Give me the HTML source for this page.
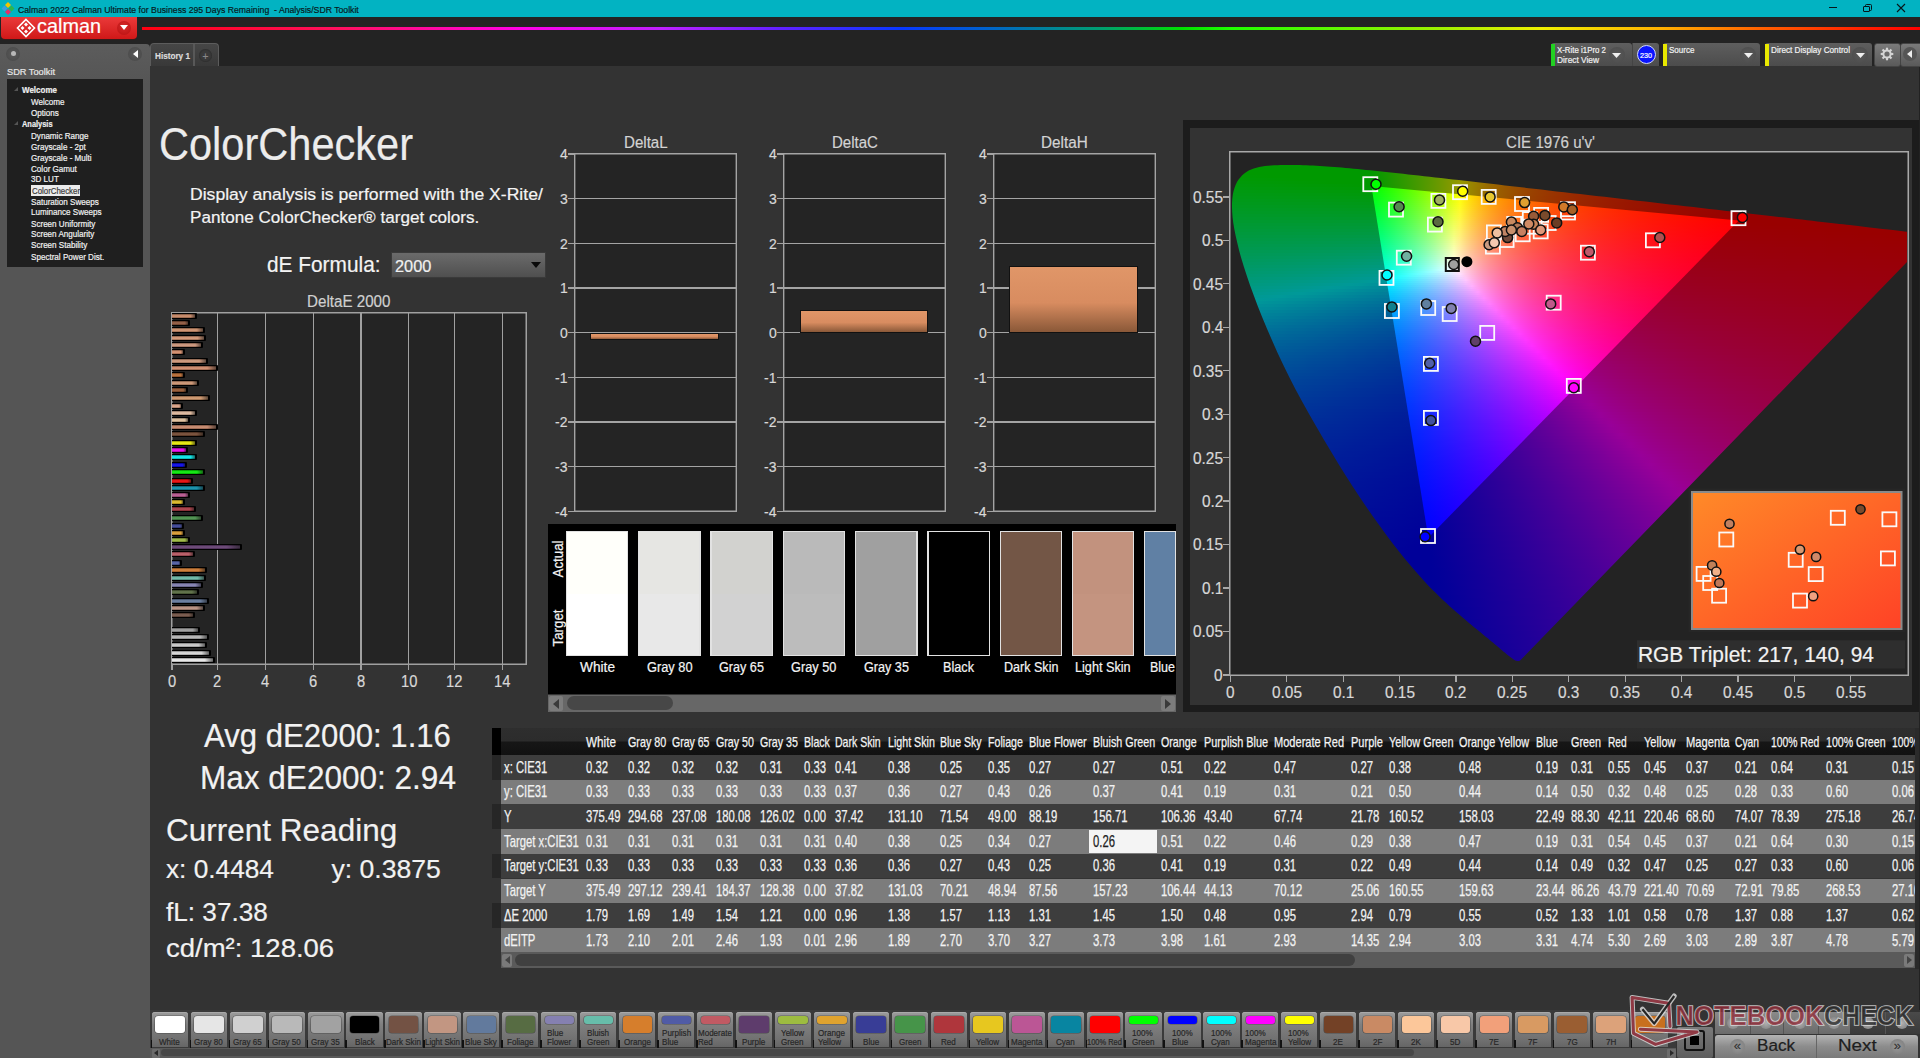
<!DOCTYPE html><html><head><meta charset="utf-8"><title>Calman ColorChecker</title><style>html,body{margin:0;padding:0}
body{width:1920px;height:1058px;position:relative;overflow:hidden;background:#333;font-family:"Liberation Sans",sans-serif}
.a{position:absolute}
.t{position:absolute;white-space:pre;line-height:normal;transform-origin:0 0;-webkit-text-stroke:0.2px currentColor}
svg.a{overflow:visible}
.tb .t{-webkit-text-stroke:0.25px currentColor}
i{display:block}.r2{height:2px}.r3{height:3px}.r4{height:4px}</style></head><body><div class="a" style="left:0px;top:0px;width:1920px;height:17px;background:#02b3c2"></div><svg class="a" style="left:1px;top:1px" width="14" height="15" viewBox="0 0 14 15">
<path d="M7 1 L10 4 L7 7 L4 4Z" fill="#f2c500"/><path d="M10.5 4.5 L13.5 7.5 L10.5 10.5 L7.5 7.5Z" fill="#2fb54a"/>
<path d="M3.5 4.5 L6.5 7.5 L3.5 10.5 L0.5 7.5Z" fill="#3aa0e0"/><path d="M7 8 L10 11 L7 14 L4 11Z" fill="#e0306a"/></svg><span class="t" style="left:18.00px;top:3.51px;font-size:9.60px;color:#061a1d;transform:scaleX(0.9044);">Calman 2022 Calman Ultimate for Business 295 Days Remaining  - Analysis/SDR Toolkit</span><div class="a" style="left:1829px;top:7px;width:8px;height:1.4px;background:#06161a"></div><div class="a" style="left:1865px;top:3.8px;width:5px;height:5px;border:1.2px solid #06161a;border-radius:1.5px"></div><div class="a" style="left:1863px;top:5.6px;width:4.8px;height:4.8px;border:1.3px solid #06161a;background:#02b3c2;border-radius:1px"></div><svg class="a" style="left:1896px;top:3px" width="10" height="10"><path d="M1 1L9 9M9 1L1 9" stroke="#06161a" stroke-width="1.1"/></svg><div class="a" style="left:0px;top:17px;width:1920px;height:49px;background:#232323"></div><div class="a" style="left:1px;top:17px;width:136px;height:22px;background:linear-gradient(#ea3a3a,#d01818);border-radius:0 0 4px 4px;box-shadow:0 1px 0 #3a1a1a"></div><svg class="a" style="left:16px;top:18px" width="20" height="20" viewBox="0 0 20 20">
<g fill="none" stroke="#fff" stroke-width="1.6"><path d="M10 1.5 L18.5 10 L10 18.5 L1.5 10Z"/></g>
<g fill="#fff"><path d="M10 4.5L12 6.5L10 8.5L8 6.5Z"/><path d="M13.5 8L15.5 10L13.5 12L11.5 10Z"/><path d="M6.5 8L8.5 10L6.5 12L4.5 10Z"/><path d="M10 11.5L12 13.5L10 15.5L8 13.5Z"/></g></svg><span class="t" style="left:37.00px;top:15.39px;font-size:20.00px;color:#fff;transform:scaleX(0.9926);">calman</span><div class="a" style="left:117px;top:21px;width:14px;height:14px;border-radius:50%;background:radial-gradient(circle at 50% 40%,#d82a2a,#b81010)"></div><svg class="a" style="left:120px;top:25px" width="8" height="6"><path d="M0 0H8L4 5Z" fill="#fff"/></svg><div class="a" style="left:142px;top:27px;width:1778px;height:3px;background:linear-gradient(90deg,#ff0010 0px,#ff1060 200px,#ff00e8 380px,#c020ff 520px,#6020ff 640px,#0838ff 760px,#0060d0 840px,#00a070 960px,#00e000 1040px,#20ff00 1090px,#a0f000 1300px,#f0f000 1400px,#ffb000 1520px,#ff6000 1620px,#ff2000 1720px,#ff0000 1778px)"></div><div class="a" style="left:0;top:44px;width:150px;height:1014px;background:linear-gradient(#5c5c5c,#555 40px,#555);border-radius:0 4px 0 0"></div><div class="a" style="left:6px;top:47px;width:14px;height:14px;border-radius:50%;background:radial-gradient(circle at 50% 50%,#5a5a5a,#474747)"></div><div class="a" style="left:11px;top:51px;width:5px;height:5px;border-radius:50%;background:#b8b8b8"></div><div class="a" style="left:128px;top:47px;width:14px;height:14px;border-radius:50%;background:radial-gradient(circle at 50% 50%,#5a5a5a,#474747)"></div><svg class="a" style="left:133px;top:50px" width="5" height="8"><path d="M5 0V8L0 4Z" fill="#fff"/></svg><span class="t" style="left:7.00px;top:67.45px;font-size:9.00px;color:#e6e6e6;transform:scaleX(1.0245);">SDR Toolkit</span><div class="a" style="left:7px;top:79px;width:136px;height:188px;background:#1f1f1f"></div><span class="t" style="left:21.60px;top:85.05px;font-size:9.00px;color:#f0f0f0;font-weight:700;transform:scaleX(0.8895);">Welcome</span><svg class="a" style="left:14px;top:87.2px" width="4" height="4"><path d="M4 0V4H0Z" fill="#555"/></svg><span class="t" style="left:31.20px;top:97.27px;font-size:9.20px;color:#f2f2f2;transform:scaleX(0.8800);">Welcome</span><span class="t" style="left:31.20px;top:107.97px;font-size:9.20px;color:#f2f2f2;transform:scaleX(0.8800);">Options</span><span class="t" style="left:21.60px;top:119.15px;font-size:9.00px;color:#f0f0f0;font-weight:700;transform:scaleX(0.8239);">Analysis</span><svg class="a" style="left:14px;top:121.3px" width="4" height="4"><path d="M4 0V4H0Z" fill="#555"/></svg><span class="t" style="left:31.20px;top:131.27px;font-size:9.20px;color:#f2f2f2;transform:scaleX(0.8800);">Dynamic Range</span><span class="t" style="left:31.20px;top:141.57px;font-size:9.20px;color:#f2f2f2;transform:scaleX(0.8800);">Grayscale - 2pt</span><span class="t" style="left:31.20px;top:152.67px;font-size:9.20px;color:#f2f2f2;transform:scaleX(0.8800);">Grayscale - Multi</span><span class="t" style="left:31.20px;top:164.07px;font-size:9.20px;color:#f2f2f2;transform:scaleX(0.8800);">Color Gamut</span><span class="t" style="left:31.20px;top:174.37px;font-size:9.20px;color:#f2f2f2;transform:scaleX(0.8800);">3D LUT</span><div class="a" style="left:31px;top:185.3px;width:49px;height:10.7px;background:#ececec"></div><span class="t" style="left:31.50px;top:185.85px;font-size:9.00px;color:#3a3a3a;transform:scaleX(0.8724);">ColorChecker</span><span class="t" style="left:31.20px;top:197.07px;font-size:9.20px;color:#f2f2f2;transform:scaleX(0.8800);">Saturation Sweeps</span><span class="t" style="left:31.20px;top:207.37px;font-size:9.20px;color:#f2f2f2;transform:scaleX(0.8800);">Luminance Sweeps</span><span class="t" style="left:31.20px;top:218.57px;font-size:9.20px;color:#f2f2f2;transform:scaleX(0.8800);">Screen Uniformity</span><span class="t" style="left:31.20px;top:229.47px;font-size:9.20px;color:#f2f2f2;transform:scaleX(0.8800);">Screen Angularity</span><span class="t" style="left:31.20px;top:240.47px;font-size:9.20px;color:#f2f2f2;transform:scaleX(0.8800);">Screen Stability</span><span class="t" style="left:31.20px;top:251.87px;font-size:9.20px;color:#f2f2f2;transform:scaleX(0.8800);">Spectral Power Dist.</span><div class="a" style="left:150px;top:43px;width:67px;height:23px;background:linear-gradient(#464646,#383838);border:1px solid #5c5c5c;border-bottom:none;border-radius:4px 4px 0 0"></div><div class="a" style="left:193px;top:44px;width:2px;height:22px;background:#585858"></div><span class="t" style="left:154.60px;top:50.51px;font-size:9.10px;color:#dcdcdc;font-weight:700;transform:scaleX(0.8988);">History 1</span><div class="a" style="left:199px;top:49px;width:13px;height:13px;border-radius:50%;background:#3a3a3a;box-shadow:inset 0 0 2px #222"></div><span class="t" style="left:202.58px;top:50.95px;font-size:10.00px;color:#888;">+</span><div class="a" style="left:150px;top:66px;width:1770px;height:992px;background:#333333"></div><div class="a" style="left:1919px;top:66px;width:1px;height:992px;background:#222"></div><div class="a" style="left:1551px;top:43px;width:81px;height:23px;background:linear-gradient(#5e5e5e,#4c4c4c);border-radius:3px 3px 0 0"></div><div class="a" style="left:1551px;top:44px;width:4px;height:22px;background:#22d022"></div><span class="t" style="left:1557.00px;top:44.53px;font-size:8.80px;color:#f2f2f2;transform:scaleX(0.8945);">X-Rite i1Pro 2</span><span class="t" style="left:1557.00px;top:55.03px;font-size:8.80px;color:#f2f2f2;transform:scaleX(0.9472);">Direct View</span><div class="a" style="left:1608.5px;top:47px;width:16px;height:16px;border-radius:50%;background:radial-gradient(#5a5a5a,#4a4a4a)"></div><svg class="a" style="left:1612.0px;top:53px" width="9" height="5"><path d="M0 0H9L4.5 5Z" fill="#f0f0f0"/></svg><div class="a" style="left:1632px;top:43px;width:26px;height:23px;background:linear-gradient(#5e5e5e,#4c4c4c);border-left:1px solid #444;border-radius:0 3px 0 0"></div><div class="a" style="left:1636.5px;top:45px;width:17px;height:17px;border-radius:50%;background:#0a14ff;border:1px solid #cfd8ff"></div><span class="t" style="left:1640.20px;top:50.56px;font-size:8.00px;color:#fff;transform:scaleX(0.8990);">230</span><div class="a" style="left:1663px;top:43px;width:97px;height:23px;background:linear-gradient(#5e5e5e,#4c4c4c);border-radius:3px 3px 0 0"></div><div class="a" style="left:1663px;top:44px;width:4px;height:22px;background:#e8e800"></div><span class="t" style="left:1669.00px;top:44.53px;font-size:8.80px;color:#f2f2f2;transform:scaleX(0.9145);">Source</span><div class="a" style="left:1740px;top:47px;width:16px;height:16px;border-radius:50%;background:radial-gradient(#5a5a5a,#4a4a4a)"></div><svg class="a" style="left:1743.5px;top:53px" width="9" height="5"><path d="M0 0H9L4.5 5Z" fill="#f0f0f0"/></svg><div class="a" style="left:1765px;top:43px;width:107px;height:23px;background:linear-gradient(#5e5e5e,#4c4c4c);border-radius:3px 3px 0 0"></div><div class="a" style="left:1765px;top:44px;width:4px;height:22px;background:#e8e800"></div><span class="t" style="left:1771.00px;top:44.53px;font-size:8.80px;color:#f2f2f2;transform:scaleX(0.9284);">Direct Display Control</span><div class="a" style="left:1852px;top:47px;width:16px;height:16px;border-radius:50%;background:radial-gradient(#5a5a5a,#4a4a4a)"></div><svg class="a" style="left:1855.5px;top:53px" width="9" height="5"><path d="M0 0H9L4.5 5Z" fill="#f0f0f0"/></svg><div class="a" style="left:1874px;top:43px;width:25px;height:22px;background:linear-gradient(#7a7a7a,#5a5a5a);border:1px solid #444;border-radius:3px"></div><svg class="a" style="left:1880px;top:47px" width="14" height="14" viewBox="-7 -7 14 14"><g fill="#d4d4d4"><path d="M-1.1 -6.3H1.1V6.3H-1.1Z"/><path d="M-1.1 -6.3H1.1V6.3H-1.1Z" transform="rotate(45)"/><path d="M-1.1 -6.3H1.1V6.3H-1.1Z" transform="rotate(90)"/><path d="M-1.1 -6.3H1.1V6.3H-1.1Z" transform="rotate(135)"/><circle r="4.6"/></g><circle r="2.6" fill="#6a6a6a"/></svg><div class="a" style="left:1900px;top:43px;width:20px;height:22px;background:linear-gradient(#7a7a7a,#5a5a5a);border:1px solid #444;border-radius:3px 0 0 3px"></div><div class="a" style="left:1903px;top:47px;width:14px;height:14px;border-radius:50%;background:#555"></div><svg class="a" style="left:1907px;top:50px" width="5" height="8"><path d="M5 0V8L0 4Z" fill="#eee"/></svg><span class="t" style="left:159.00px;top:117.06px;font-size:46.00px;color:#ececec;transform:scaleX(0.9032);">ColorChecker</span><span class="t" style="left:190.00px;top:183.55px;font-size:17.40px;color:#f4f4f4;transform:scaleX(1.0112);">Display analysis is performed with the X-Rite/</span><span class="t" style="left:190.00px;top:206.95px;font-size:17.40px;color:#f4f4f4;transform:scaleX(0.9838);">Pantone ColorChecker® target colors.</span><span class="t" style="left:267.00px;top:252.42px;font-size:22.40px;color:#f4f4f4;transform:scaleX(0.9311);">dE Formula:</span><div class="a" style="left:391px;top:252px;width:155px;height:26px;background:linear-gradient(#6c6c6c,#4e4e4e);box-shadow:inset 0 0 0 1px #3a3a3a"></div><span class="t" style="left:395.00px;top:257.31px;font-size:17.00px;color:#f0f0f0;transform:scaleX(0.9625);">2000</span><svg class="a" style="left:531px;top:262px" width="10" height="7"><path d="M0 0H10L5 6Z" fill="#0a0a0a"/></svg><span class="t" style="left:307.25px;top:291.60px;font-size:16.90px;color:#d0d0d0;transform:scaleX(0.8977);">DeltaE 2000</span><div class="a" style="left:171.4px;top:312.3px;width:355.2px;height:352.3px;background:#242424;box-shadow:inset 0 0 0 1.5px #a0a0a0"></div><div class="a" style="left:171.2px;top:664.6px;width:1.4px;height:5.5px;background:#a0a0a0"></div><span class="t" style="left:167.81px;top:672.72px;font-size:16.00px;color:#d8d8d8;transform:scaleX(0.9200);">0</span><div class="a" style="left:216.7px;top:312.3px;width:1.4px;height:352.3px;background:#a0a0a0"></div><div class="a" style="left:216.7px;top:664.6px;width:1.4px;height:5.5px;background:#a0a0a0"></div><span class="t" style="left:213.31px;top:672.72px;font-size:16.00px;color:#d8d8d8;transform:scaleX(0.9200);">2</span><div class="a" style="left:264.6px;top:312.3px;width:1.4px;height:352.3px;background:#a0a0a0"></div><div class="a" style="left:264.6px;top:664.6px;width:1.4px;height:5.5px;background:#a0a0a0"></div><span class="t" style="left:261.21px;top:672.72px;font-size:16.00px;color:#d8d8d8;transform:scaleX(0.9200);">4</span><div class="a" style="left:312.7px;top:312.3px;width:1.4px;height:352.3px;background:#a0a0a0"></div><div class="a" style="left:312.7px;top:664.6px;width:1.4px;height:5.5px;background:#a0a0a0"></div><span class="t" style="left:309.31px;top:672.72px;font-size:16.00px;color:#d8d8d8;transform:scaleX(0.9200);">6</span><div class="a" style="left:360.2px;top:312.3px;width:1.4px;height:352.3px;background:#a0a0a0"></div><div class="a" style="left:360.2px;top:664.6px;width:1.4px;height:5.5px;background:#a0a0a0"></div><span class="t" style="left:356.81px;top:672.72px;font-size:16.00px;color:#d8d8d8;transform:scaleX(0.9200);">8</span><div class="a" style="left:408.1px;top:312.3px;width:1.4px;height:352.3px;background:#a0a0a0"></div><div class="a" style="left:408.1px;top:664.6px;width:1.4px;height:5.5px;background:#a0a0a0"></div><span class="t" style="left:400.61px;top:672.72px;font-size:16.00px;color:#d8d8d8;transform:scaleX(0.9200);">10</span><div class="a" style="left:453.8px;top:312.3px;width:1.4px;height:352.3px;background:#a0a0a0"></div><div class="a" style="left:453.8px;top:664.6px;width:1.4px;height:5.5px;background:#a0a0a0"></div><span class="t" style="left:446.31px;top:672.72px;font-size:16.00px;color:#d8d8d8;transform:scaleX(0.9200);">12</span><div class="a" style="left:501.7px;top:312.3px;width:1.4px;height:352.3px;background:#a0a0a0"></div><div class="a" style="left:501.7px;top:664.6px;width:1.4px;height:5.5px;background:#a0a0a0"></div><span class="t" style="left:494.21px;top:672.72px;font-size:16.00px;color:#d8d8d8;transform:scaleX(0.9200);">14</span><div class="a" style="left:172px;top:313.1px;width:25.3px;height:6px;background:#000;border-radius:0 1px 1px 0"></div><div class="a" style="left:172px;top:314.1px;width:23.3px;height:4px;background:linear-gradient(rgba(0,0,0,.45),rgba(255,255,255,.12) 50%,rgba(0,0,0,.35)),linear-gradient(90deg,#d8906a,#d8906a 80%,rgba(0,0,0,.6)),#d8906a"></div><div class="a" style="left:172px;top:320.3px;width:18.0px;height:6px;background:#000;border-radius:0 1px 1px 0"></div><div class="a" style="left:172px;top:321.3px;width:16.0px;height:4px;background:linear-gradient(rgba(0,0,0,.45),rgba(255,255,255,.12) 50%,rgba(0,0,0,.35)),linear-gradient(90deg,#9a5a3c,#9a5a3c 80%,rgba(0,0,0,.6)),#9a5a3c"></div><div class="a" style="left:172px;top:327.4px;width:32.5px;height:6px;background:#000;border-radius:0 1px 1px 0"></div><div class="a" style="left:172px;top:328.4px;width:30.5px;height:4px;background:linear-gradient(rgba(0,0,0,.45),rgba(255,255,255,.12) 50%,rgba(0,0,0,.35)),linear-gradient(90deg,#e09a72,#e09a72 80%,rgba(0,0,0,.6)),#e09a72"></div><div class="a" style="left:172px;top:334.6px;width:33.8px;height:6px;background:#000;border-radius:0 1px 1px 0"></div><div class="a" style="left:172px;top:335.6px;width:31.8px;height:4px;background:linear-gradient(rgba(0,0,0,.45),rgba(255,255,255,.12) 50%,rgba(0,0,0,.35)),linear-gradient(90deg,#e6a07a,#e6a07a 80%,rgba(0,0,0,.6)),#e6a07a"></div><div class="a" style="left:172px;top:342.0px;width:30.7px;height:6px;background:#000;border-radius:0 1px 1px 0"></div><div class="a" style="left:172px;top:343.0px;width:28.7px;height:4px;background:linear-gradient(rgba(0,0,0,.45),rgba(255,255,255,.12) 50%,rgba(0,0,0,.35)),linear-gradient(90deg,#e0a080,#e0a080 80%,rgba(0,0,0,.6)),#e0a080"></div><div class="a" style="left:172px;top:349.4px;width:13.3px;height:6px;background:#000;border-radius:0 1px 1px 0"></div><div class="a" style="left:172px;top:350.4px;width:11.3px;height:4px;background:linear-gradient(rgba(0,0,0,.45),rgba(255,255,255,.12) 50%,rgba(0,0,0,.35)),linear-gradient(90deg,#e69670,#e69670 80%,rgba(0,0,0,.6)),#e69670"></div><div class="a" style="left:172px;top:357.9px;width:35.5px;height:6px;background:#000;border-radius:0 1px 1px 0"></div><div class="a" style="left:172px;top:358.9px;width:33.5px;height:4px;background:linear-gradient(rgba(0,0,0,.45),rgba(255,255,255,.12) 50%,rgba(0,0,0,.35)),linear-gradient(90deg,#e0a07e,#e0a07e 80%,rgba(0,0,0,.6)),#e0a07e"></div><div class="a" style="left:172px;top:365.3px;width:46.0px;height:6px;background:#000;border-radius:0 1px 1px 0"></div><div class="a" style="left:172px;top:366.3px;width:44.0px;height:4px;background:linear-gradient(rgba(0,0,0,.45),rgba(255,255,255,.12) 50%,rgba(0,0,0,.35)),linear-gradient(90deg,#e49470,#e49470 80%,rgba(0,0,0,.6)),#e49470"></div><div class="a" style="left:172px;top:372.2px;width:13.3px;height:6px;background:#000;border-radius:0 1px 1px 0"></div><div class="a" style="left:172px;top:373.2px;width:11.3px;height:4px;background:linear-gradient(rgba(0,0,0,.45),rgba(255,255,255,.12) 50%,rgba(0,0,0,.35)),linear-gradient(90deg,#c87030,#c87030 80%,rgba(0,0,0,.6)),#c87030"></div><div class="a" style="left:172px;top:379.6px;width:27.3px;height:6px;background:#000;border-radius:0 1px 1px 0"></div><div class="a" style="left:172px;top:380.6px;width:25.3px;height:4px;background:linear-gradient(rgba(0,0,0,.45),rgba(255,255,255,.12) 50%,rgba(0,0,0,.35)),linear-gradient(90deg,#e0a078,#e0a078 80%,rgba(0,0,0,.6)),#e0a078"></div><div class="a" style="left:172px;top:386.6px;width:16.4px;height:6px;background:#000;border-radius:0 1px 1px 0"></div><div class="a" style="left:172px;top:387.6px;width:14.4px;height:4px;background:linear-gradient(rgba(0,0,0,.45),rgba(255,255,255,.12) 50%,rgba(0,0,0,.35)),linear-gradient(90deg,#a05a30,#a05a30 80%,rgba(0,0,0,.6)),#a05a30"></div><div class="a" style="left:172px;top:395.3px;width:38.0px;height:6px;background:#000;border-radius:0 1px 1px 0"></div><div class="a" style="left:172px;top:396.3px;width:36.0px;height:4px;background:linear-gradient(rgba(0,0,0,.45),rgba(255,255,255,.12) 50%,rgba(0,0,0,.35)),linear-gradient(90deg,#e0a070,#e0a070 80%,rgba(0,0,0,.6)),#e0a070"></div><div class="a" style="left:172px;top:402.7px;width:10.5px;height:6px;background:#000;border-radius:0 1px 1px 0"></div><div class="a" style="left:172px;top:403.7px;width:8.5px;height:4px;background:linear-gradient(rgba(0,0,0,.45),rgba(255,255,255,.12) 50%,rgba(0,0,0,.35)),linear-gradient(90deg,#f0b090,#f0b090 80%,rgba(0,0,0,.6)),#f0b090"></div><div class="a" style="left:172px;top:409.8px;width:25.3px;height:6px;background:#000;border-radius:0 1px 1px 0"></div><div class="a" style="left:172px;top:410.8px;width:23.3px;height:4px;background:linear-gradient(rgba(0,0,0,.45),rgba(255,255,255,.12) 50%,rgba(0,0,0,.35)),linear-gradient(90deg,#f4c8a8,#f4c8a8 80%,rgba(0,0,0,.6)),#f4c8a8"></div><div class="a" style="left:172px;top:417.0px;width:18.0px;height:6px;background:#000;border-radius:0 1px 1px 0"></div><div class="a" style="left:172px;top:418.0px;width:16.0px;height:4px;background:linear-gradient(rgba(0,0,0,.45),rgba(255,255,255,.12) 50%,rgba(0,0,0,.35)),linear-gradient(90deg,#f4d0a8,#f4d0a8 80%,rgba(0,0,0,.6)),#f4d0a8"></div><div class="a" style="left:172px;top:424.4px;width:46.0px;height:6px;background:#000;border-radius:0 1px 1px 0"></div><div class="a" style="left:172px;top:425.4px;width:44.0px;height:4px;background:linear-gradient(rgba(0,0,0,.45),rgba(255,255,255,.12) 50%,rgba(0,0,0,.35)),linear-gradient(90deg,#d89070,#d89070 80%,rgba(0,0,0,.6)),#d89070"></div><div class="a" style="left:172px;top:431.1px;width:32.5px;height:6px;background:#000;border-radius:0 1px 1px 0"></div><div class="a" style="left:172px;top:432.1px;width:30.5px;height:4px;background:linear-gradient(rgba(0,0,0,.45),rgba(255,255,255,.12) 50%,rgba(0,0,0,.35)),linear-gradient(90deg,#7a4a30,#7a4a30 80%,rgba(0,0,0,.6)),#7a4a30"></div><div class="a" style="left:172px;top:440.3px;width:25.3px;height:6px;background:#000;border-radius:0 1px 1px 0"></div><div class="a" style="left:172px;top:441.3px;width:23.3px;height:4px;background:linear-gradient(rgba(0,0,0,.45),rgba(255,255,255,.12) 50%,rgba(0,0,0,.35)),linear-gradient(90deg,#ffff00,#ffff00 80%,rgba(0,0,0,.6)),#ffff00"></div><div class="a" style="left:172px;top:447.2px;width:16.4px;height:6px;background:#000;border-radius:0 1px 1px 0"></div><div class="a" style="left:172px;top:448.2px;width:14.4px;height:4px;background:linear-gradient(rgba(0,0,0,.45),rgba(255,255,255,.12) 50%,rgba(0,0,0,.35)),linear-gradient(90deg,#ff00ff,#ff00ff 80%,rgba(0,0,0,.6)),#ff00ff"></div><div class="a" style="left:172px;top:454.4px;width:25.3px;height:6px;background:#000;border-radius:0 1px 1px 0"></div><div class="a" style="left:172px;top:455.4px;width:23.3px;height:4px;background:linear-gradient(rgba(0,0,0,.45),rgba(255,255,255,.12) 50%,rgba(0,0,0,.35)),linear-gradient(90deg,#00ffff,#00ffff 80%,rgba(0,0,0,.6)),#00ffff"></div><div class="a" style="left:172px;top:462.0px;width:15.1px;height:6px;background:#000;border-radius:0 1px 1px 0"></div><div class="a" style="left:172px;top:463.0px;width:13.1px;height:4px;background:linear-gradient(rgba(0,0,0,.45),rgba(255,255,255,.12) 50%,rgba(0,0,0,.35)),linear-gradient(90deg,#0000ff,#0000ff 80%,rgba(0,0,0,.6)),#0000ff"></div><div class="a" style="left:172px;top:469.0px;width:32.5px;height:6px;background:#000;border-radius:0 1px 1px 0"></div><div class="a" style="left:172px;top:470.0px;width:30.5px;height:4px;background:linear-gradient(rgba(0,0,0,.45),rgba(255,255,255,.12) 50%,rgba(0,0,0,.35)),linear-gradient(90deg,#00ff00,#00ff00 80%,rgba(0,0,0,.6)),#00ff00"></div><div class="a" style="left:172px;top:478.0px;width:21.2px;height:6px;background:#000;border-radius:0 1px 1px 0"></div><div class="a" style="left:172px;top:479.0px;width:19.2px;height:4px;background:linear-gradient(rgba(0,0,0,.45),rgba(255,255,255,.12) 50%,rgba(0,0,0,.35)),linear-gradient(90deg,#ff0000,#ff0000 80%,rgba(0,0,0,.6)),#ff0000"></div><div class="a" style="left:172px;top:485.0px;width:32.5px;height:6px;background:#000;border-radius:0 1px 1px 0"></div><div class="a" style="left:172px;top:486.0px;width:30.5px;height:4px;background:linear-gradient(rgba(0,0,0,.45),rgba(255,255,255,.12) 50%,rgba(0,0,0,.35)),linear-gradient(90deg,#0898b8,#0898b8 80%,rgba(0,0,0,.6)),#0898b8"></div><div class="a" style="left:172px;top:492.0px;width:18.0px;height:6px;background:#000;border-radius:0 1px 1px 0"></div><div class="a" style="left:172px;top:493.0px;width:16.0px;height:4px;background:linear-gradient(rgba(0,0,0,.45),rgba(255,255,255,.12) 50%,rgba(0,0,0,.35)),linear-gradient(90deg,#c85a9a,#c85a9a 80%,rgba(0,0,0,.6)),#c85a9a"></div><div class="a" style="left:172px;top:499.0px;width:13.0px;height:6px;background:#000;border-radius:0 1px 1px 0"></div><div class="a" style="left:172px;top:500.0px;width:11.0px;height:4px;background:linear-gradient(rgba(0,0,0,.45),rgba(255,255,255,.12) 50%,rgba(0,0,0,.35)),linear-gradient(90deg,#f0c820,#f0c820 80%,rgba(0,0,0,.6)),#f0c820"></div><div class="a" style="left:172px;top:506.0px;width:23.9px;height:6px;background:#000;border-radius:0 1px 1px 0"></div><div class="a" style="left:172px;top:507.0px;width:21.9px;height:4px;background:linear-gradient(rgba(0,0,0,.45),rgba(255,255,255,.12) 50%,rgba(0,0,0,.35)),linear-gradient(90deg,#b83a44,#b83a44 80%,rgba(0,0,0,.6)),#b83a44"></div><div class="a" style="left:172px;top:515.0px;width:30.7px;height:6px;background:#000;border-radius:0 1px 1px 0"></div><div class="a" style="left:172px;top:516.0px;width:28.7px;height:4px;background:linear-gradient(rgba(0,0,0,.45),rgba(255,255,255,.12) 50%,rgba(0,0,0,.35)),linear-gradient(90deg,#4a9a4c,#4a9a4c 80%,rgba(0,0,0,.6)),#4a9a4c"></div><div class="a" style="left:172px;top:522.6px;width:12.1px;height:6px;background:#000;border-radius:0 1px 1px 0"></div><div class="a" style="left:172px;top:523.6px;width:10.1px;height:4px;background:linear-gradient(rgba(0,0,0,.45),rgba(255,255,255,.12) 50%,rgba(0,0,0,.35)),linear-gradient(90deg,#3a44a0,#3a44a0 80%,rgba(0,0,0,.6)),#3a44a0"></div><div class="a" style="left:172px;top:529.6px;width:13.0px;height:6px;background:#000;border-radius:0 1px 1px 0"></div><div class="a" style="left:172px;top:530.6px;width:11.0px;height:4px;background:linear-gradient(rgba(0,0,0,.45),rgba(255,255,255,.12) 50%,rgba(0,0,0,.35)),linear-gradient(90deg,#f0a830,#f0a830 80%,rgba(0,0,0,.6)),#f0a830"></div><div class="a" style="left:172px;top:537.0px;width:18.0px;height:6px;background:#000;border-radius:0 1px 1px 0"></div><div class="a" style="left:172px;top:538.0px;width:16.0px;height:4px;background:linear-gradient(rgba(0,0,0,.45),rgba(255,255,255,.12) 50%,rgba(0,0,0,.35)),linear-gradient(90deg,#a8c840,#a8c840 80%,rgba(0,0,0,.6)),#a8c840"></div><div class="a" style="left:172px;top:544.0px;width:70.2px;height:6px;background:#000;border-radius:0 1px 1px 0"></div><div class="a" style="left:172px;top:545.0px;width:68.2px;height:4px;background:linear-gradient(rgba(0,0,0,.45),rgba(255,255,255,.12) 50%,rgba(0,0,0,.35)),linear-gradient(90deg,#6a4078,#6a4078 80%,rgba(0,0,0,.6)),#6a4078"></div><div class="a" style="left:172px;top:551.0px;width:22.6px;height:6px;background:#000;border-radius:0 1px 1px 0"></div><div class="a" style="left:172px;top:552.0px;width:20.6px;height:4px;background:linear-gradient(rgba(0,0,0,.45),rgba(255,255,255,.12) 50%,rgba(0,0,0,.35)),linear-gradient(90deg,#c85a66,#c85a66 80%,rgba(0,0,0,.6)),#c85a66"></div><div class="a" style="left:172px;top:560.0px;width:10.3px;height:6px;background:#000;border-radius:0 1px 1px 0"></div><div class="a" style="left:172px;top:561.0px;width:8.3px;height:4px;background:linear-gradient(rgba(0,0,0,.45),rgba(255,255,255,.12) 50%,rgba(0,0,0,.35)),linear-gradient(90deg,#5060b0,#5060b0 80%,rgba(0,0,0,.6)),#5060b0"></div><div class="a" style="left:172px;top:567.4px;width:35.3px;height:6px;background:#000;border-radius:0 1px 1px 0"></div><div class="a" style="left:172px;top:568.4px;width:33.3px;height:4px;background:linear-gradient(rgba(0,0,0,.45),rgba(255,255,255,.12) 50%,rgba(0,0,0,.35)),linear-gradient(90deg,#e08030,#e08030 80%,rgba(0,0,0,.6)),#e08030"></div><div class="a" style="left:172px;top:574.5px;width:33.9px;height:6px;background:#000;border-radius:0 1px 1px 0"></div><div class="a" style="left:172px;top:575.5px;width:31.9px;height:4px;background:linear-gradient(rgba(0,0,0,.45),rgba(255,255,255,.12) 50%,rgba(0,0,0,.35)),linear-gradient(90deg,#70c8b4,#70c8b4 80%,rgba(0,0,0,.6)),#70c8b4"></div><div class="a" style="left:172px;top:582.0px;width:30.7px;height:6px;background:#000;border-radius:0 1px 1px 0"></div><div class="a" style="left:172px;top:583.0px;width:28.7px;height:4px;background:linear-gradient(rgba(0,0,0,.45),rgba(255,255,255,.12) 50%,rgba(0,0,0,.35)),linear-gradient(90deg,#8a88c0,#8a88c0 80%,rgba(0,0,0,.6)),#8a88c0"></div><div class="a" style="left:172px;top:589.0px;width:27.1px;height:6px;background:#000;border-radius:0 1px 1px 0"></div><div class="a" style="left:172px;top:590.0px;width:25.1px;height:4px;background:linear-gradient(rgba(0,0,0,.45),rgba(255,255,255,.12) 50%,rgba(0,0,0,.35)),linear-gradient(90deg,#5a7040,#5a7040 80%,rgba(0,0,0,.6)),#5a7040"></div><div class="a" style="left:172px;top:597.9px;width:37.1px;height:6px;background:#000;border-radius:0 1px 1px 0"></div><div class="a" style="left:172px;top:598.9px;width:35.1px;height:4px;background:linear-gradient(rgba(0,0,0,.45),rgba(255,255,255,.12) 50%,rgba(0,0,0,.35)),linear-gradient(90deg,#6880a8,#6880a8 80%,rgba(0,0,0,.6)),#6880a8"></div><div class="a" style="left:172px;top:605.0px;width:32.5px;height:6px;background:#000;border-radius:0 1px 1px 0"></div><div class="a" style="left:172px;top:606.0px;width:30.5px;height:4px;background:linear-gradient(rgba(0,0,0,.45),rgba(255,255,255,.12) 50%,rgba(0,0,0,.35)),linear-gradient(90deg,#c89a88,#c89a88 80%,rgba(0,0,0,.6)),#c89a88"></div><div class="a" style="left:172px;top:612.4px;width:22.6px;height:6px;background:#000;border-radius:0 1px 1px 0"></div><div class="a" style="left:172px;top:613.4px;width:20.6px;height:4px;background:linear-gradient(rgba(0,0,0,.45),rgba(255,255,255,.12) 50%,rgba(0,0,0,.35)),linear-gradient(90deg,#7a5646,#7a5646 80%,rgba(0,0,0,.6)),#7a5646"></div><div class="a" style="left:172px;top:626.5px;width:28.0px;height:6px;background:#000;border-radius:0 1px 1px 0"></div><div class="a" style="left:172px;top:627.5px;width:26.0px;height:4px;background:linear-gradient(rgba(0,0,0,.45),rgba(255,255,255,.12) 50%,rgba(0,0,0,.35)),linear-gradient(90deg,#a8a8a8,#a8a8a8 80%,rgba(0,0,0,.6)),#a8a8a8"></div><div class="a" style="left:172px;top:634.0px;width:36.9px;height:6px;background:#000;border-radius:0 1px 1px 0"></div><div class="a" style="left:172px;top:635.0px;width:34.9px;height:4px;background:linear-gradient(rgba(0,0,0,.45),rgba(255,255,255,.12) 50%,rgba(0,0,0,.35)),linear-gradient(90deg,#c4c4c4,#c4c4c4 80%,rgba(0,0,0,.6)),#c4c4c4"></div><div class="a" style="left:172px;top:642.1px;width:35.3px;height:6px;background:#000;border-radius:0 1px 1px 0"></div><div class="a" style="left:172px;top:643.1px;width:33.3px;height:4px;background:linear-gradient(rgba(0,0,0,.45),rgba(255,255,255,.12) 50%,rgba(0,0,0,.35)),linear-gradient(90deg,#dcdcdc,#dcdcdc 80%,rgba(0,0,0,.6)),#dcdcdc"></div><div class="a" style="left:172px;top:649.6px;width:39.4px;height:6px;background:#000;border-radius:0 1px 1px 0"></div><div class="a" style="left:172px;top:650.6px;width:37.4px;height:4px;background:linear-gradient(rgba(0,0,0,.45),rgba(255,255,255,.12) 50%,rgba(0,0,0,.35)),linear-gradient(90deg,#ececec,#ececec 80%,rgba(0,0,0,.6)),#ececec"></div><div class="a" style="left:172px;top:656.7px;width:43.0px;height:6px;background:#000;border-radius:0 1px 1px 0"></div><div class="a" style="left:172px;top:657.7px;width:41.0px;height:4px;background:linear-gradient(rgba(0,0,0,.45),rgba(255,255,255,.12) 50%,rgba(0,0,0,.35)),linear-gradient(90deg,#ffffff,#ffffff 80%,rgba(0,0,0,.6)),#ffffff"></div><span class="t" style="left:623.65px;top:133.20px;font-size:16.90px;color:#d4d4d4;transform:scaleX(0.8945);">DeltaL</span><div class="a" style="left:573.7px;top:153.2px;width:163.4px;height:358.8px;background:#242424;box-shadow:inset 0 0 0 1.4px #a4a4a4"></div><div class="a" style="left:568.1px;top:153.2px;width:6.3px;height:1.4px;background:#a4a4a4"></div><span class="t" style="left:559.82px;top:145.24px;font-size:15.20px;color:#d8d8d8;transform:scaleX(0.9200);">4</span><div class="a" style="left:574.4px;top:197.9px;width:162.0px;height:1.4px;background:#a4a4a4"></div><div class="a" style="left:568.1px;top:197.9px;width:6.3px;height:1.4px;background:#a4a4a4"></div><span class="t" style="left:559.82px;top:189.92px;font-size:15.20px;color:#d8d8d8;transform:scaleX(0.9200);">3</span><div class="a" style="left:574.4px;top:242.6px;width:162.0px;height:1.4px;background:#a4a4a4"></div><div class="a" style="left:568.1px;top:242.6px;width:6.3px;height:1.4px;background:#a4a4a4"></div><span class="t" style="left:559.82px;top:234.60px;font-size:15.20px;color:#d8d8d8;transform:scaleX(0.9200);">2</span><div class="a" style="left:574.4px;top:287.2px;width:162.0px;height:1.4px;background:#a4a4a4"></div><div class="a" style="left:568.1px;top:287.2px;width:6.3px;height:1.4px;background:#a4a4a4"></div><span class="t" style="left:559.82px;top:279.28px;font-size:15.20px;color:#d8d8d8;transform:scaleX(0.9200);">1</span><div class="a" style="left:574.4px;top:331.9px;width:162.0px;height:1.4px;background:#a4a4a4"></div><div class="a" style="left:568.1px;top:331.9px;width:6.3px;height:1.4px;background:#a4a4a4"></div><span class="t" style="left:559.82px;top:323.96px;font-size:15.20px;color:#d8d8d8;transform:scaleX(0.9200);">0</span><div class="a" style="left:574.4px;top:376.6px;width:162.0px;height:1.4px;background:#a4a4a4"></div><div class="a" style="left:568.1px;top:376.6px;width:6.3px;height:1.4px;background:#a4a4a4"></div><span class="t" style="left:555.17px;top:368.64px;font-size:15.20px;color:#d8d8d8;transform:scaleX(0.9200);">-1</span><div class="a" style="left:574.4px;top:421.3px;width:162.0px;height:1.4px;background:#a4a4a4"></div><div class="a" style="left:568.1px;top:421.3px;width:6.3px;height:1.4px;background:#a4a4a4"></div><span class="t" style="left:555.17px;top:413.32px;font-size:15.20px;color:#d8d8d8;transform:scaleX(0.9200);">-2</span><div class="a" style="left:574.4px;top:466.0px;width:162.0px;height:1.4px;background:#a4a4a4"></div><div class="a" style="left:568.1px;top:466.0px;width:6.3px;height:1.4px;background:#a4a4a4"></div><span class="t" style="left:555.17px;top:458.00px;font-size:15.20px;color:#d8d8d8;transform:scaleX(0.9200);">-3</span><div class="a" style="left:568.1px;top:510.6px;width:6.3px;height:1.4px;background:#a4a4a4"></div><span class="t" style="left:555.17px;top:502.68px;font-size:15.20px;color:#d8d8d8;transform:scaleX(0.9200);">-4</span><div class="a" style="left:590.4px;top:332.6px;width:128.5px;height:7.1px;background:linear-gradient(#e09668,#d88c60 55%,#8a5838);border:1px solid #111;box-sizing:border-box"></div><span class="t" style="left:831.60px;top:133.20px;font-size:16.90px;color:#d4d4d4;transform:scaleX(0.8905);">DeltaC</span><div class="a" style="left:782.9px;top:153.2px;width:163.5px;height:358.8px;background:#242424;box-shadow:inset 0 0 0 1.4px #a4a4a4"></div><div class="a" style="left:777.3px;top:153.2px;width:6.3px;height:1.4px;background:#a4a4a4"></div><span class="t" style="left:769.02px;top:145.24px;font-size:15.20px;color:#d8d8d8;transform:scaleX(0.9200);">4</span><div class="a" style="left:783.6px;top:197.9px;width:162.1px;height:1.4px;background:#a4a4a4"></div><div class="a" style="left:777.3px;top:197.9px;width:6.3px;height:1.4px;background:#a4a4a4"></div><span class="t" style="left:769.02px;top:189.92px;font-size:15.20px;color:#d8d8d8;transform:scaleX(0.9200);">3</span><div class="a" style="left:783.6px;top:242.6px;width:162.1px;height:1.4px;background:#a4a4a4"></div><div class="a" style="left:777.3px;top:242.6px;width:6.3px;height:1.4px;background:#a4a4a4"></div><span class="t" style="left:769.02px;top:234.60px;font-size:15.20px;color:#d8d8d8;transform:scaleX(0.9200);">2</span><div class="a" style="left:783.6px;top:287.2px;width:162.1px;height:1.4px;background:#a4a4a4"></div><div class="a" style="left:777.3px;top:287.2px;width:6.3px;height:1.4px;background:#a4a4a4"></div><span class="t" style="left:769.02px;top:279.28px;font-size:15.20px;color:#d8d8d8;transform:scaleX(0.9200);">1</span><div class="a" style="left:783.6px;top:331.9px;width:162.1px;height:1.4px;background:#a4a4a4"></div><div class="a" style="left:777.3px;top:331.9px;width:6.3px;height:1.4px;background:#a4a4a4"></div><span class="t" style="left:769.02px;top:323.96px;font-size:15.20px;color:#d8d8d8;transform:scaleX(0.9200);">0</span><div class="a" style="left:783.6px;top:376.6px;width:162.1px;height:1.4px;background:#a4a4a4"></div><div class="a" style="left:777.3px;top:376.6px;width:6.3px;height:1.4px;background:#a4a4a4"></div><span class="t" style="left:764.37px;top:368.64px;font-size:15.20px;color:#d8d8d8;transform:scaleX(0.9200);">-1</span><div class="a" style="left:783.6px;top:421.3px;width:162.1px;height:1.4px;background:#a4a4a4"></div><div class="a" style="left:777.3px;top:421.3px;width:6.3px;height:1.4px;background:#a4a4a4"></div><span class="t" style="left:764.37px;top:413.32px;font-size:15.20px;color:#d8d8d8;transform:scaleX(0.9200);">-2</span><div class="a" style="left:783.6px;top:466.0px;width:162.1px;height:1.4px;background:#a4a4a4"></div><div class="a" style="left:777.3px;top:466.0px;width:6.3px;height:1.4px;background:#a4a4a4"></div><span class="t" style="left:764.37px;top:458.00px;font-size:15.20px;color:#d8d8d8;transform:scaleX(0.9200);">-3</span><div class="a" style="left:777.3px;top:510.6px;width:6.3px;height:1.4px;background:#a4a4a4"></div><span class="t" style="left:764.37px;top:502.68px;font-size:15.20px;color:#d8d8d8;transform:scaleX(0.9200);">-4</span><div class="a" style="left:799.6px;top:309.5px;width:128.6px;height:23.1px;background:linear-gradient(#e09668,#d88c60 55%,#8a5838);border:1px solid #111;box-sizing:border-box"></div><span class="t" style="left:1040.65px;top:133.20px;font-size:16.90px;color:#d4d4d4;transform:scaleX(0.9040);">DeltaH</span><div class="a" style="left:992.5px;top:153.2px;width:163.4px;height:358.8px;background:#242424;box-shadow:inset 0 0 0 1.4px #a4a4a4"></div><div class="a" style="left:986.9px;top:153.2px;width:6.3px;height:1.4px;background:#a4a4a4"></div><span class="t" style="left:978.62px;top:145.24px;font-size:15.20px;color:#d8d8d8;transform:scaleX(0.9200);">4</span><div class="a" style="left:993.2px;top:197.9px;width:162.0px;height:1.4px;background:#a4a4a4"></div><div class="a" style="left:986.9px;top:197.9px;width:6.3px;height:1.4px;background:#a4a4a4"></div><span class="t" style="left:978.62px;top:189.92px;font-size:15.20px;color:#d8d8d8;transform:scaleX(0.9200);">3</span><div class="a" style="left:993.2px;top:242.6px;width:162.0px;height:1.4px;background:#a4a4a4"></div><div class="a" style="left:986.9px;top:242.6px;width:6.3px;height:1.4px;background:#a4a4a4"></div><span class="t" style="left:978.62px;top:234.60px;font-size:15.20px;color:#d8d8d8;transform:scaleX(0.9200);">2</span><div class="a" style="left:993.2px;top:287.2px;width:162.0px;height:1.4px;background:#a4a4a4"></div><div class="a" style="left:986.9px;top:287.2px;width:6.3px;height:1.4px;background:#a4a4a4"></div><span class="t" style="left:978.62px;top:279.28px;font-size:15.20px;color:#d8d8d8;transform:scaleX(0.9200);">1</span><div class="a" style="left:993.2px;top:331.9px;width:162.0px;height:1.4px;background:#a4a4a4"></div><div class="a" style="left:986.9px;top:331.9px;width:6.3px;height:1.4px;background:#a4a4a4"></div><span class="t" style="left:978.62px;top:323.96px;font-size:15.20px;color:#d8d8d8;transform:scaleX(0.9200);">0</span><div class="a" style="left:993.2px;top:376.6px;width:162.0px;height:1.4px;background:#a4a4a4"></div><div class="a" style="left:986.9px;top:376.6px;width:6.3px;height:1.4px;background:#a4a4a4"></div><span class="t" style="left:973.97px;top:368.64px;font-size:15.20px;color:#d8d8d8;transform:scaleX(0.9200);">-1</span><div class="a" style="left:993.2px;top:421.3px;width:162.0px;height:1.4px;background:#a4a4a4"></div><div class="a" style="left:986.9px;top:421.3px;width:6.3px;height:1.4px;background:#a4a4a4"></div><span class="t" style="left:973.97px;top:413.32px;font-size:15.20px;color:#d8d8d8;transform:scaleX(0.9200);">-2</span><div class="a" style="left:993.2px;top:466.0px;width:162.0px;height:1.4px;background:#a4a4a4"></div><div class="a" style="left:986.9px;top:466.0px;width:6.3px;height:1.4px;background:#a4a4a4"></div><span class="t" style="left:973.97px;top:458.00px;font-size:15.20px;color:#d8d8d8;transform:scaleX(0.9200);">-3</span><div class="a" style="left:986.9px;top:510.6px;width:6.3px;height:1.4px;background:#a4a4a4"></div><span class="t" style="left:973.97px;top:502.68px;font-size:15.20px;color:#d8d8d8;transform:scaleX(0.9200);">-4</span><div class="a" style="left:1009.2px;top:266.0px;width:128.5px;height:66.6px;background:linear-gradient(#e09668,#d88c60 55%,#8a5838);border:1px solid #111;box-sizing:border-box"></div><div class="a" style="left:548px;top:524px;width:628px;height:170px;background:#000"></div><div class="a" style="left:565.8px;top:530.7px;width:62.6px;height:125.6px;background:#e2e2e2"></div><div class="a" style="left:567.0px;top:531.9px;width:60.2px;height:62px;background:#fffffa"></div><div class="a" style="left:567.0px;top:593.9px;width:60.2px;height:61.2px;background:#ffffff"></div><span class="t" style="left:579.60px;top:658.73px;font-size:14.00px;color:#f4f4f4;transform:scaleX(0.9780);">White</span><div class="a" style="left:638.1px;top:530.7px;width:62.6px;height:125.6px;background:#e2e2e2"></div><div class="a" style="left:639.3px;top:531.9px;width:60.2px;height:62px;background:#e6e6e3"></div><div class="a" style="left:639.3px;top:593.9px;width:60.2px;height:61.2px;background:#e8e8e8"></div><span class="t" style="left:646.60px;top:658.73px;font-size:14.00px;color:#f4f4f4;transform:scaleX(0.9157);">Gray 80</span><div class="a" style="left:710.4px;top:530.7px;width:62.6px;height:125.6px;background:#e2e2e2"></div><div class="a" style="left:711.6px;top:531.9px;width:60.2px;height:62px;background:#d2d2cf"></div><div class="a" style="left:711.6px;top:593.9px;width:60.2px;height:61.2px;background:#d2d2d2"></div><span class="t" style="left:719.25px;top:658.73px;font-size:14.00px;color:#f4f4f4;transform:scaleX(0.9016);">Gray 65</span><div class="a" style="left:782.7px;top:530.7px;width:62.6px;height:125.6px;background:#e2e2e2"></div><div class="a" style="left:783.9px;top:531.9px;width:60.2px;height:62px;background:#bababa"></div><div class="a" style="left:783.9px;top:593.9px;width:60.2px;height:61.2px;background:#bcbcbc"></div><span class="t" style="left:791.35px;top:658.73px;font-size:14.00px;color:#f4f4f4;transform:scaleX(0.9096);">Gray 50</span><div class="a" style="left:855.0px;top:530.7px;width:62.6px;height:125.6px;background:#e2e2e2"></div><div class="a" style="left:856.2px;top:531.9px;width:60.2px;height:62px;background:#a0a0a0"></div><div class="a" style="left:856.2px;top:593.9px;width:60.2px;height:61.2px;background:#a0a0a0"></div><span class="t" style="left:863.85px;top:658.73px;font-size:14.00px;color:#f4f4f4;transform:scaleX(0.9016);">Gray 35</span><div class="a" style="left:927.3px;top:530.7px;width:62.6px;height:125.6px;background:#e2e2e2"></div><div class="a" style="left:928.5px;top:531.9px;width:60.2px;height:62px;background:#000000"></div><div class="a" style="left:928.5px;top:593.9px;width:60.2px;height:61.2px;background:#000000"></div><span class="t" style="left:943.10px;top:658.73px;font-size:14.00px;color:#f4f4f4;transform:scaleX(0.9055);">Black</span><div class="a" style="left:999.6px;top:530.7px;width:62.6px;height:125.6px;background:#e2e2e2"></div><div class="a" style="left:1000.8px;top:531.9px;width:60.2px;height:62px;background:#735646"></div><div class="a" style="left:1000.8px;top:593.9px;width:60.2px;height:61.2px;background:#735646"></div><span class="t" style="left:1003.70px;top:658.73px;font-size:14.00px;color:#f4f4f4;transform:scaleX(0.8964);">Dark Skin</span><div class="a" style="left:1071.9px;top:530.7px;width:62.6px;height:125.6px;background:#e2e2e2"></div><div class="a" style="left:1073.1px;top:531.9px;width:60.2px;height:62px;background:#c2927e"></div><div class="a" style="left:1073.1px;top:593.9px;width:60.2px;height:61.2px;background:#c49480"></div><span class="t" style="left:1075.40px;top:658.73px;font-size:14.00px;color:#f4f4f4;transform:scaleX(0.9043);">Light Skin</span><div class="a" style="left:1144.2px;top:530.7px;width:31.8px;height:125.6px;background:#e2e2e2"></div><div class="a" style="left:1145.4px;top:531.9px;width:29.4px;height:62px;background:#6080a4"></div><div class="a" style="left:1145.4px;top:593.9px;width:29.4px;height:61.2px;background:#6080a4"></div><span class="t" style="left:1150.00px;top:658.73px;font-size:14.00px;color:#f4f4f4;transform:scaleX(0.8922);">Blue</span><div class="a" style="left:548px;top:524px;width:17px;height:140px;background:#000"></div><span class="t" style="left:537.55px;top:550.87px;width:39.47px;height:15.86px;font-size:14.2px;color:#f2f2f2;transform-origin:50% 50%;transform:rotate(-90deg) scaleX(0.937)">Actual</span><span class="t" style="left:537.55px;top:620.37px;width:39.47px;height:15.86px;font-size:14.2px;color:#f2f2f2;transform-origin:50% 50%;transform:rotate(-90deg) scaleX(0.937)">Target</span><div class="a" style="left:1176px;top:524px;width:10px;height:190px;background:#333"></div><div class="a" style="left:548px;top:694.8px;width:628px;height:17px;background:#676767"></div><div class="a" style="left:549px;top:696px;width:14px;height:14.5px;background:#7c7c7c;border-radius:2px"></div><svg class="a" style="left:553px;top:698.5px" width="6" height="10"><path d="M6 0V10L0 5Z" fill="#3a3a3a"/></svg><div class="a" style="left:566.7px;top:696.2px;width:106px;height:14px;background:#474747;border-radius:7px"></div><div class="a" style="left:1161px;top:696px;width:14px;height:14.5px;background:#7c7c7c;border-radius:2px"></div><svg class="a" style="left:1165px;top:698.5px" width="6" height="10"><path d="M0 0V10L6 5Z" fill="#3a3a3a"/></svg><div class="a" style="left:1183px;top:120px;width:736px;height:592px;background:#1c1c1c"></div><div class="a" style="left:1190px;top:128px;width:722px;height:577px;background:#333"></div><span class="t" style="left:1506.20px;top:131.75px;font-size:17.40px;color:#d0d0d0;transform:scaleX(0.8691);">CIE 1976 u'v'</span><div class="a" style="left:1229px;top:151px;width:680px;height:525px;background:#232323;box-shadow:inset 0 0 0 1.5px #a8a8a8"></div><div class="a" style="left:1231px;top:160px;width:680px;height:504px;clip-path:polygon(289.1px 500.5px,289.0px 500.5px,288.9px 500.6px,288.9px 500.6px,288.8px 500.7px,288.6px 500.8px,288.5px 500.8px,288.4px 500.9px,288.2px 501.0px,288.0px 501.0px,287.8px 501.1px,287.6px 501.1px,287.4px 501.1px,287.2px 501.1px,286.9px 501.1px,286.5px 501.1px,286.1px 501.0px,285.6px 500.8px,285.0px 500.7px,284.5px 500.5px,283.9px 500.2px,283.3px 499.9px,282.8px 499.6px,282.2px 499.2px,281.6px 498.8px,281.0px 498.3px,280.3px 497.8px,279.5px 497.2px,278.8px 496.6px,277.9px 496.0px,277.0px 495.2px,276.0px 494.4px,274.9px 493.6px,273.8px 492.6px,272.6px 491.7px,271.3px 490.6px,270.0px 489.5px,268.6px 488.3px,267.2px 487.1px,265.7px 485.8px,264.1px 484.5px,262.5px 483.1px,260.8px 481.7px,259.0px 480.2px,257.1px 478.6px,255.0px 476.9px,252.9px 475.2px,250.6px 473.3px,248.2px 471.3px,245.7px 469.3px,243.1px 467.2px,240.5px 465.0px,237.7px 462.7px,234.9px 460.3px,231.9px 457.8px,228.8px 455.1px,225.5px 452.3px,222.1px 449.3px,218.6px 446.2px,215.0px 442.8px,211.1px 439.2px,207.3px 435.4px,203.3px 431.6px,199.1px 427.4px,194.7px 422.8px,190.0px 417.6px,184.9px 411.8px,179.5px 405.5px,173.8px 398.8px,168.0px 391.5px,161.9px 383.7px,155.7px 375.4px,149.2px 366.6px,142.5px 357.3px,135.7px 347.5px,128.8px 337.3px,121.7px 326.6px,114.5px 315.2px,107.2px 303.5px,100.0px 291.6px,92.8px 279.5px,85.7px 267.3px,78.5px 254.8px,71.4px 242.1px,64.6px 229.5px,58.2px 217.1px,52.2px 204.8px,46.4px 192.5px,41.0px 180.3px,35.9px 168.5px,31.2px 157.2px,26.8px 146.2px,22.8px 135.6px,19.1px 125.4px,15.8px 115.7px,12.8px 106.6px,10.2px 98.1px,8.0px 90.1px,6.2px 82.6px,4.6px 75.6px,3.3px 69.0px,2.3px 63.0px,1.6px 57.4px,1.2px 52.2px,1.0px 47.4px,1.0px 42.9px,1.3px 38.7px,1.8px 34.8px,2.5px 31.2px,3.5px 28.0px,4.6px 24.9px,6.0px 22.1px,7.6px 19.6px,9.3px 17.4px,11.2px 15.3px,13.3px 13.5px,15.4px 11.9px,17.8px 10.6px,20.2px 9.5px,22.8px 8.5px,25.5px 7.7px,28.2px 7.0px,31.1px 6.5px,34.0px 6.1px,37.0px 5.8px,40.0px 5.5px,43.1px 5.3px,46.3px 5.2px,49.4px 5.1px,52.7px 5.0px,55.9px 5.0px,59.1px 5.0px,62.3px 5.0px,65.5px 5.1px,68.7px 5.1px,72.0px 5.2px,75.3px 5.3px,78.6px 5.5px,81.9px 5.6px,85.3px 5.8px,88.8px 6.0px,92.3px 6.2px,95.8px 6.5px,99.4px 6.7px,103.1px 7.0px,106.9px 7.3px,110.7px 7.6px,114.5px 8.0px,118.4px 8.3px,122.4px 8.7px,126.5px 9.1px,130.7px 9.5px,134.9px 9.9px,139.2px 10.3px,143.6px 10.8px,148.1px 11.3px,152.7px 11.8px,157.4px 12.3px,162.2px 12.8px,167.1px 13.3px,172.1px 13.8px,177.2px 14.4px,182.4px 15.0px,187.7px 15.6px,193.1px 16.2px,198.6px 16.8px,204.2px 17.4px,210.0px 18.1px,215.8px 18.8px,221.8px 19.4px,227.9px 20.1px,234.1px 20.8px,240.5px 21.6px,246.9px 22.3px,253.5px 23.1px,260.2px 23.8px,267.0px 24.6px,273.9px 25.4px,280.9px 26.2px,288.1px 27.0px,295.3px 27.9px,302.7px 28.7px,310.2px 29.6px,317.8px 30.5px,325.5px 31.4px,333.2px 32.2px,341.1px 33.2px,349.1px 34.1px,357.1px 35.0px,365.2px 35.9px,373.4px 36.8px,381.6px 37.8px,389.8px 38.8px,398.1px 39.7px,406.4px 40.7px,414.6px 41.6px,422.7px 42.6px,430.7px 43.5px,438.7px 44.4px,446.6px 45.3px,454.5px 46.2px,462.4px 47.1px,470.3px 48.0px,478.2px 48.9px,485.9px 49.8px,493.4px 50.7px,500.7px 51.5px,507.9px 52.4px,515.0px 53.2px,521.9px 53.9px,528.6px 54.7px,535.2px 55.5px,541.6px 56.2px,547.8px 56.9px,553.9px 57.6px,559.8px 58.3px,565.4px 59.0px,570.9px 59.6px,576.2px 60.2px,581.3px 60.8px,586.3px 61.4px,591.0px 61.9px,595.6px 62.4px,600.0px 62.9px,604.3px 63.4px,608.4px 63.9px,612.2px 64.3px,615.6px 64.7px,619.0px 65.1px,622.7px 65.6px,627.1px 66.1px,632.6px 66.7px,638.8px 67.4px,645.3px 68.2px,651.6px 68.9px,657.1px 69.5px,661.8px 70.1px,666.1px 70.6px,669.9px 71.0px,673.5px 71.4px,676.0px 71.7px,676.0px 102.1px)"><i class=r3 style="background:linear-gradient(90deg,#009900,#009900,#009900,#009900,#009900,#009900,#009900,#009900,#009900,#009900,#009900,#009900,#009900,#009900,#049900,#119900,#1f9900,#2d9900,#3c9900,#4c9900,#5c9900,#6e9900,#809900,#949900,#998b00,#997b00,#996d00,#996200,#995800,#994f00,#994800,#994100,#993b00,#993600,#993100,#992d00,#992900,#992500,#992200,#991f00,#991c00,#991900,#991700,#991400,#991200,#991000,#990e00,#990d00,#990b00,#990900,#990800,#990700,#990500,#990400,#990300,#990200,#990100,#990000,#990000,#990000,#990000,#990000,#990000,#990000,#990000,#990000,#990000,#990000,#990000)"></i><i class=r3 style="background:linear-gradient(90deg,#009900,#009900,#009900,#009900,#009900,#009900,#009900,#009900,#009900,#009900,#009900,#009900,#009900,#009900,#049900,#119900,#1e9900,#2d9900,#3c9900,#4c9900,#5c9900,#6e9900,#819900,#949900,#998a00,#997a00,#996d00,#996100,#995700,#994f00,#994700,#994000,#993b00,#993500,#993000,#992c00,#992800,#992500,#992100,#991e00,#991b00,#991900,#991600,#991400,#991200,#991000,#990e00,#990c00,#990b00,#990900,#990800,#990600,#990500,#990400,#990200,#990100,#990000,#990000,#990000,#990000,#990000,#990000,#990000,#990000,#990000,#990000,#990000,#990000,#990000)"></i><i class=r3 style="background:linear-gradient(90deg,#009900,#009900,#009900,#009900,#009900,#009900,#009900,#009900,#009900,#009900,#009900,#009900,#009900,#009900,#039900,#109900,#1e9900,#2c9900,#3b9900,#4b9900,#5c9900,#6e9900,#819900,#959900,#998a00,#997900,#996c00,#996000,#995700,#994e00,#994700,#994000,#993a00,#993500,#993000,#992c00,#992800,#992400,#992100,#991e00,#991b00,#991800,#991600,#991400,#991100,#991000,#990e00,#990c00,#990a00,#990900,#990700,#990600,#990500,#990300,#990200,#990100,#990000,#990000,#990000,#990000,#990000,#990000,#990000,#990000,#990000,#990000,#990000,#990000,#990000)"></i><i class=r3 style="background:linear-gradient(90deg,#009900,#009900,#009900,#009900,#009900,#009900,#009900,#009900,#009900,#009900,#009900,#009900,#009900,#009900,#039900,#109900,#1e9900,#2c9900,#3b9900,#4b9900,#5c9900,#6e9900,#819900,#959900,#998900,#997900,#996b00,#996000,#995600,#994d00,#994600,#993f00,#993900,#993400,#992f00,#992b00,#992700,#992400,#992000,#991d00,#991a00,#991800,#991500,#991300,#991100,#990f00,#990d00,#990c00,#990a00,#990800,#990700,#990600,#990400,#990300,#990200,#990100,#990000,#990000,#990000,#990000,#990000,#990000,#990000,#990000,#990000,#990000,#990000,#990000,#990000)"></i><i class=r3 style="background:linear-gradient(90deg,#009901,#009900,#009900,#009900,#009900,#009900,#009900,#009900,#009900,#009900,#009900,#009900,#009900,#009900,#029900,#0f9900,#1d9900,#2c9900,#3b9900,#4b9900,#5c9900,#6e9900,#829900,#969900,#998800,#997800,#996b00,#995f00,#995500,#994d00,#994500,#993f00,#993900,#993400,#992f00,#992b00,#992700,#992300,#992000,#991d00,#991a00,#991700,#991500,#991300,#991100,#990f00,#990d00,#990b00,#990a00,#990800,#990700,#990500,#990400,#990300,#990200,#990000,#990000,#990000,#990000,#990000,#990000,#990000,#990000,#990000,#990000,#990000,#990000,#990000,#990000)"></i><i class=r3 style="background:linear-gradient(90deg,#009903,#009902,#009902,#009901,#009900,#009900,#009900,#009900,#009900,#009900,#009900,#009900,#009900,#009900,#019900,#0f9900,#1d9900,#2b9900,#3b9900,#4b9900,#5c9900,#6f9900,#829900,#979900,#998800,#997800,#996a00,#995f00,#995500,#994c00,#994500,#993e00,#993800,#993300,#992e00,#992a00,#992600,#992300,#991f00,#991c00,#991a00,#991700,#991500,#991200,#991000,#990e00,#990d00,#990b00,#990900,#990800,#990600,#990500,#990400,#990200,#990100,#990000,#990000,#990000,#990000,#990000,#990000,#990000,#990000,#990000,#990000,#990000,#990000,#990000,#990000)"></i><i class=r3 style="background:linear-gradient(90deg,#009906,#009905,#009904,#009904,#009903,#009902,#009901,#009900,#009900,#009900,#009900,#009900,#009900,#009900,#019900,#0e9900,#1c9900,#2b9900,#3b9900,#4b9900,#5c9900,#6f9900,#829900,#979900,#998700,#997700,#996900,#995e00,#995400,#994c00,#994400,#993e00,#993800,#993200,#992e00,#992a00,#992600,#992200,#991f00,#991c00,#991900,#991700,#991400,#991200,#991000,#990e00,#990c00,#990a00,#990900,#990700,#990600,#990500,#990300,#990200,#990100,#990000,#990000,#990000,#990000,#990000,#990000,#990000,#990000,#990000,#990000,#990000,#990000,#990000,#990000)"></i><i class=r3 style="background:linear-gradient(90deg,#009909,#009908,#009907,#009906,#009906,#009905,#009904,#009903,#009902,#009901,#009900,#009900,#009900,#009900,#009900,#0e9900,#1c9900,#2b9900,#3a9900,#4b9900,#5c9900,#6f9900,#839900,#989900,#998600,#997600,#996900,#995d00,#995300,#994b00,#994400,#993d00,#993700,#993200,#992d00,#992900,#992500,#992200,#991e00,#991b00,#991900,#991600,#991400,#991200,#990f00,#990e00,#990c00,#990a00,#990800,#990700,#990600,#990400,#990300,#990200,#990100,#990000,#990000,#990000,#990000,#990000,#990000,#990000,#990000,#990000,#990000,#990000,#990000,#990000,#990000)"></i><i class=r3 style="background:linear-gradient(90deg,#00990b,#00990b,#00990a,#009909,#009909,#009908,#009907,#009906,#009905,#009905,#009904,#009903,#009902,#009900,#009900,#0d9900,#1b9900,#2a9900,#3a9900,#4b9900,#5d9900,#6f9900,#839900,#989900,#998600,#997600,#996800,#995d00,#995300,#994a00,#994300,#993c00,#993700,#993100,#992d00,#992800,#992500,#992100,#991e00,#991b00,#991800,#991600,#991300,#991100,#990f00,#990d00,#990b00,#990a00,#990800,#990700,#990500,#990400,#990300,#990100,#990000,#990000,#990000,#990000,#990000,#990000,#990000,#990000,#990000,#990000,#990000,#990000,#990000,#990000,#990000)"></i><i class=r3 style="background:linear-gradient(90deg,#00990e,#00990e,#00990d,#00990c,#00990c,#00990b,#00990a,#009909,#009909,#009908,#009907,#009906,#009905,#009904,#009903,#0d9902,#1b9901,#2a9900,#3a9900,#4b9900,#5d9900,#6f9900,#849900,#999900,#998500,#997500,#996700,#995c00,#995200,#994a00,#994200,#993c00,#993600,#993100,#992c00,#992800,#992400,#992100,#991d00,#991a00,#991800,#991500,#991300,#991100,#990f00,#990d00,#990b00,#990900,#990800,#990600,#990500,#990300,#990200,#990100,#990000,#990000,#990000,#990000,#990000,#990000,#990000,#990000,#990000,#990000,#990000,#990000,#990000,#990000,#990000)"></i><i class=r3 style="background:linear-gradient(90deg,#009911,#009911,#009910,#00990f,#00990f,#00990e,#00990d,#00990d,#00990c,#00990b,#00990a,#00990a,#009909,#009908,#009907,#0c9906,#1a9905,#2a9904,#3a9902,#4b9901,#5d9900,#709900,#849900,#999800,#998400,#997400,#996700,#995b00,#995200,#994900,#994200,#993b00,#993500,#993000,#992c00,#992700,#992400,#992000,#991d00,#991a00,#991700,#991500,#991200,#991000,#990e00,#990c00,#990b00,#990900,#990700,#990600,#990400,#990300,#990200,#990100,#990000,#990000,#990000,#990000,#990000,#990000,#990000,#990000,#990000,#990000,#990000,#990000,#990000,#990000,#990000)"></i><i class=r3 style="background:linear-gradient(90deg,#009914,#009913,#009913,#009912,#009912,#009911,#009911,#009910,#00990f,#00990f,#00990e,#00990d,#00990c,#00990b,#00990b,#0b990a,#1a9909,#299908,#399907,#4b9905,#5d9904,#709903,#849902,#999800,#998400,#997400,#996600,#995b00,#995100,#994800,#994100,#993b00,#993500,#993000,#992b00,#992700,#992300,#992000,#991c00,#991900,#991700,#991400,#991200,#991000,#990e00,#990c00,#990a00,#990900,#990700,#990600,#990400,#990300,#990200,#990000,#990000,#990000,#990000,#990000,#990000,#990000,#990000,#990000,#990000,#990000,#990000,#990000,#990000,#990000,#990000)"></i><i class=r3 style="background:linear-gradient(90deg,#009917,#009916,#009916,#009915,#009915,#009914,#009914,#009913,#009913,#009912,#009911,#009911,#009910,#00990f,#00990e,#0b990e,#19990d,#29990c,#39990b,#4a990a,#5d9909,#709908,#859906,#999705,#998303,#997302,#996500,#995a00,#995000,#994800,#994000,#993a00,#993400,#992f00,#992b00,#992600,#992300,#991f00,#991c00,#991900,#991600,#991400,#991200,#990f00,#990d00,#990c00,#990a00,#990800,#990700,#990500,#990400,#990200,#990100,#990000,#990000,#990000,#990000,#990000,#990000,#990000,#990000,#990000,#990000,#990000,#990000,#990000,#990000,#990000,#990000)"></i><i class=r3 style="background:linear-gradient(90deg,#00991a,#009919,#009919,#009919,#009918,#009918,#009917,#009917,#009916,#009916,#009915,#009914,#009914,#009913,#009912,#0a9912,#199911,#289910,#39990f,#4a990e,#5d990d,#70990c,#85990b,#99960a,#998207,#997205,#996504,#995903,#995001,#994700,#994000,#993900,#993400,#992f00,#992a00,#992600,#992200,#991f00,#991b00,#991900,#991600,#991300,#991100,#990f00,#990d00,#990b00,#990900,#990800,#990600,#990500,#990300,#990200,#990100,#990000,#990000,#990000,#990000,#990000,#990000,#990000,#990000,#990000,#990000,#990000,#990000,#990000,#990000,#990000,#990000)"></i><i class=r3 style="background:linear-gradient(90deg,#00991d,#00991c,#00991c,#00991c,#00991b,#00991b,#00991a,#00991a,#00991a,#009919,#009919,#009918,#009918,#009917,#009916,#0a9916,#189915,#289914,#399914,#4a9913,#5d9912,#719911,#869910,#99960f,#99820c,#99710a,#996408,#995906,#994f05,#994703,#993f02,#993901,#993300,#992e00,#992900,#992500,#992200,#991e00,#991b00,#991800,#991500,#991300,#991100,#990f00,#990d00,#990b00,#990900,#990700,#990600,#990400,#990300,#990200,#990100,#990000,#990000,#990000,#990000,#990000,#990000,#990000,#990000,#990000,#990000,#990000,#990000,#990000,#990000,#990000,#990000)"></i><i class=r3 style="background:linear-gradient(90deg,#009920,#00991f,#00991f,#00991f,#00991f,#00991e,#00991e,#00991d,#00991d,#00991d,#00991c,#00991c,#00991b,#00991b,#00991a,#09991a,#189919,#289919,#389918,#4a9917,#5d9917,#719916,#869915,#999514,#998110,#99710e,#99630b,#995809,#994e08,#994606,#993f05,#993804,#993203,#992d02,#992901,#992501,#992100,#991e00,#991a00,#991800,#991500,#991300,#991000,#990e00,#990c00,#990a00,#990900,#990700,#990500,#990400,#990300,#990100,#990000,#990000,#990000,#990000,#990000,#990000,#990000,#990000,#990000,#990000,#990000,#990000,#990000,#990000,#990000,#990000,#990000)"></i><i class=r3 style="background:linear-gradient(90deg,#009923,#009923,#009922,#009922,#009922,#009922,#009921,#009921,#009921,#009920,#009920,#009920,#00991f,#00991f,#00991f,#08991e,#17991e,#27991d,#38991d,#4a991c,#5d991c,#71991b,#87991a,#999419,#998015,#997012,#99630f,#99570d,#994e0b,#994509,#993e08,#993806,#993205,#992d04,#992803,#992403,#992002,#991d01,#991a01,#991700,#991400,#991200,#991000,#990e00,#990c00,#990a00,#990800,#990700,#990500,#990400,#990200,#990100,#990000,#990000,#990000,#990000,#990000,#990000,#990000,#990000,#990000,#990000,#990000,#990000,#990000,#990000,#990000,#990000,#990000)"></i><i class=r3 style="background:linear-gradient(90deg,#009926,#009926,#009925,#009925,#009925,#009925,#009925,#009925,#009924,#009924,#009924,#009924,#009923,#009923,#009923,#089922,#179922,#279922,#389921,#4a9921,#5d9921,#719920,#879920,#99941e,#998019,#996f16,#996213,#995710,#994d0e,#99450c,#993d0a,#993709,#993108,#992c07,#992806,#992405,#992004,#991d03,#991902,#991702,#991401,#991201,#990f00,#990d00,#990b00,#990a00,#990800,#990600,#990500,#990300,#990200,#990100,#990000,#990000,#990000,#990000,#990000,#990000,#990000,#990000,#990000,#990000,#990000,#990000,#990000,#990000,#990000,#990000,#990000)"></i><i class=r3 style="background:linear-gradient(90deg,#009929,#009929,#009929,#009929,#009928,#009928,#009928,#009928,#009928,#009928,#009928,#009927,#009927,#009927,#009927,#079927,#169927,#269926,#389926,#4a9926,#5d9926,#729925,#889925,#999323,#997f1e,#996f1a,#996117,#995614,#994c11,#99440f,#993d0d,#99360c,#99310a,#992c09,#992708,#992307,#991f06,#991c05,#991904,#991604,#991403,#991102,#990f02,#990d01,#990b01,#990900,#990700,#990600,#990400,#990300,#990200,#990000,#990000,#990000,#990000,#990000,#990000,#990000,#990000,#990000,#990000,#990000,#990000,#990000,#990000,#990000,#990000,#990000,#990000)"></i><i class=r3 style="background:linear-gradient(90deg,#00992c,#00992c,#00992c,#00992c,#00992c,#00992c,#00992c,#00992c,#00992c,#00992c,#00992c,#00992b,#00992b,#00992b,#00992b,#06992b,#16992b,#26992b,#37992b,#4a992b,#5d992b,#72992b,#88992a,#999228,#997e23,#996e1e,#99601a,#995517,#994c14,#994312,#993c10,#99360e,#99300d,#992b0b,#99270a,#992309,#991f08,#991c07,#991806,#991605,#991305,#991104,#990e03,#990c03,#990a02,#990902,#990701,#990501,#990400,#990300,#990100,#990000,#990000,#990000,#990000,#990000,#990000,#990000,#990000,#990000,#990000,#990000,#990000,#990000,#990000,#990000,#990000,#990000,#990000)"></i><i class=r3 style="background:linear-gradient(90deg,#00992f,#00992f,#00992f,#00992f,#00992f,#00992f,#00992f,#00992f,#00992f,#00992f,#00992f,#009930,#009930,#009930,#009930,#069930,#159930,#269930,#379930,#499930,#5d9930,#729930,#899930,#99922e,#997e28,#996d22,#99601e,#99541b,#994b18,#994315,#993b13,#993511,#992f0f,#992a0e,#99260c,#99220b,#991e0a,#991b09,#991808,#991507,#991306,#991005,#990e05,#990c04,#990a04,#990803,#990702,#990502,#990402,#990201,#990101,#990000,#990000,#990000,#990000,#990000,#990000,#990000,#990000,#990000,#990000,#990000,#990000,#990000,#990000,#990000,#990000,#990000,#990000)"></i><i class=r3 style="background:linear-gradient(90deg,#009932,#009933,#009933,#009933,#009933,#009933,#009933,#009933,#009933,#009933,#009933,#009934,#009934,#009934,#009934,#059934,#159934,#259935,#379935,#499935,#5d9935,#729935,#899936,#999133,#997d2c,#996c27,#995f22,#99541e,#994a1b,#994218,#993b16,#993414,#992f12,#992a10,#99250e,#99210d,#991e0c,#991a0b,#99170a,#991509,#991208,#991007,#990e06,#990c06,#990a05,#990804,#990604,#990503,#990303,#990202,#990102,#990001,#990001,#990001,#990000,#990000,#990000,#990000,#990000,#990000,#990000,#990000,#990000,#990000,#990000,#990000,#990000,#990000,#990000)"></i><i class=r3 style="background:linear-gradient(90deg,#009936,#009936,#009936,#009936,#009936,#009937,#009937,#009937,#009937,#009937,#009938,#009938,#009938,#009938,#009939,#049939,#149939,#25993a,#36993a,#49993a,#5d993b,#73993b,#8a993c,#999039,#997c31,#996c2b,#995e26,#995322,#99491e,#99411b,#993a19,#993416,#992e14,#992912,#992511,#99210f,#991d0e,#991a0d,#99170c,#99140b,#99120a,#990f09,#990d08,#990b07,#990906,#990706,#990605,#990405,#990304,#990104,#990003,#990003,#990002,#990002,#990001,#990001,#990001,#990000,#990000,#990000,#990000,#990000,#990000,#990000,#990000,#990000,#990000,#990000,#990000)"></i><i class=r3 style="background:linear-gradient(90deg,#009939,#009939,#009939,#00993a,#00993a,#00993a,#00993a,#00993b,#00993b,#00993b,#00993c,#00993c,#00993c,#00993d,#00993d,#04993e,#13993e,#24993f,#36993f,#499940,#5d9940,#739941,#8a9942,#99903e,#997b36,#996b2f,#995d2a,#995225,#994922,#99411e,#99391b,#993319,#992e17,#992915,#992413,#992011,#991d10,#99190f,#99160d,#99140c,#99110b,#990f0a,#990d0a,#990b09,#990908,#990707,#990507,#990406,#990205,#990105,#990004,#990004,#990003,#990003,#990003,#990002,#990002,#990001,#990001,#990001,#990000,#990000,#990000,#990000,#990000,#990000,#990000,#990000,#990000)"></i><i class=r3 style="background:linear-gradient(90deg,#00993c,#00993d,#00993d,#00993d,#00993e,#00993e,#00993e,#00993f,#00993f,#00993f,#009940,#009940,#009941,#009941,#009942,#039942,#139943,#249944,#369944,#499945,#5d9946,#739947,#8b9948,#998f44,#997b3b,#996a34,#995d2e,#995229,#994825,#994021,#99391e,#99321c,#992d19,#992817,#992415,#992014,#991c12,#991911,#99160f,#99130e,#99110d,#990e0c,#990c0b,#990a0a,#990809,#990709,#990508,#990307,#990207,#990106,#990006,#990005,#990005,#990004,#990004,#990003,#990003,#990002,#990002,#990002,#990001,#990001,#990001,#990000,#990000,#990000,#990000,#990000,#990000)"></i><i class=r3 style="background:linear-gradient(90deg,#009940,#009940,#009940,#009941,#009941,#009942,#009942,#009943,#009943,#009944,#009944,#009945,#009945,#009946,#009947,#029947,#129948,#239949,#35994a,#49994b,#5d994c,#73994d,#8b994e,#998e49,#997a40,#996938,#995c32,#99512d,#994728,#993f25,#993821,#99321e,#992c1c,#99271a,#992318,#991f16,#991c14,#991813,#991511,#991310,#99100f,#990e0e,#990c0d,#990a0c,#99080b,#99060a,#990509,#990309,#990208,#990007,#990007,#990006,#990006,#990005,#990005,#990004,#990004,#990003,#990003,#990003,#990002,#990002,#990002,#990001,#990001,#990001,#990000,#990000,#990000)"></i><i class=r3 style="background:linear-gradient(90deg,#009943,#009944,#009944,#009944,#009945,#009945,#009946,#009947,#009947,#009948,#009948,#009949,#00994a,#00994b,#00994b,#01994c,#12994d,#23994e,#35994f,#499950,#5d9952,#749953,#8c9954,#998d4f,#997945,#99693d,#995b36,#995031,#99472c,#993e28,#993724,#993121,#992c1e,#99271c,#99231a,#991f18,#991b16,#991815,#991513,#991212,#991010,#990d0f,#990b0e,#99090d,#99070c,#99060c,#99040b,#99030a,#990109,#990009,#990008,#990007,#990007,#990006,#990006,#990005,#990005,#990004,#990004,#990004,#990003,#990003,#990003,#990002,#990002,#990002,#990001,#990001,#990001)"></i><i class=r3 style="background:linear-gradient(90deg,#009947,#009947,#009948,#009948,#009949,#009949,#00994a,#00994b,#00994b,#00994c,#00994d,#00994e,#00994e,#00994f,#009950,#019951,#119952,#229954,#359955,#489956,#5d9958,#749959,#8c995b,#998d55,#99784a,#996841,#995a3a,#994f34,#99462f,#993e2b,#993727,#993124,#992b21,#99261e,#99221c,#991e1a,#991b18,#991717,#991415,#991214,#990f12,#990d11,#990b10,#99090f,#99070e,#99050d,#99040c,#99020b,#99010b,#99000a,#990009,#990009,#990008,#990007,#990007,#990006,#990006,#990005,#990005,#990005,#990004,#990004,#990003,#990003,#990003,#990002,#990002,#990002,#990002)"></i><i class=r3 style="background:linear-gradient(90deg,#00994a,#00994b,#00994b,#00994c,#00994d,#00994d,#00994e,#00994f,#009950,#009950,#009951,#009952,#009953,#009954,#009955,#009957,#109958,#229959,#34995b,#48995c,#5e995e,#74995f,#8d9961,#998c5b,#99774f,#996746,#995a3e,#994f38,#994533,#993d2e,#99362a,#993027,#992a24,#992621,#99211e,#991d1c,#991a1a,#991719,#991417,#991115,#990f14,#990c13,#990a12,#990810,#99070f,#99050e,#99030e,#99020d,#99000c,#99000b,#99000a,#99000a,#990009,#990009,#990008,#990007,#990007,#990006,#990006,#990006,#990005,#990005,#990004,#990004,#990004,#990003,#990003,#990003,#990002)"></i><i class=r3 style="background:linear-gradient(90deg,#00994e,#00994e,#00994f,#009950,#009950,#009951,#009952,#009953,#009954,#009955,#009956,#009957,#009958,#009959,#00995a,#00995c,#10995d,#21995f,#349960,#489962,#5e9964,#759966,#8d9968,#998b61,#997754,#99664b,#995943,#994e3c,#994436,#993c31,#99352d,#992f29,#992a26,#992523,#992121,#991d1e,#99191c,#99161b,#991319,#991117,#990e16,#990c14,#990a13,#990812,#990611,#990410,#99030f,#99010e,#99000d,#99000c,#99000c,#99000b,#99000a,#99000a,#990009,#990009,#990008,#990008,#990007,#990007,#990006,#990006,#990005,#990005,#990005,#990004,#990004,#990004,#990003)"></i><i class=r3 style="background:linear-gradient(90deg,#009951,#009952,#009953,#009953,#009954,#009955,#009956,#009957,#009958,#009959,#00995a,#00995c,#00995d,#00995e,#009960,#009961,#0f9963,#219964,#349966,#489968,#5e996a,#75996d,#8e996f,#998a67,#99765a,#99654f,#995847,#994d40,#99443a,#993c35,#993530,#992f2c,#992929,#992426,#992023,#991c21,#99191f,#99161d,#99131b,#991019,#990e17,#990c16,#990915,#990814,#990612,#990411,#990310,#99010f,#99000f,#99000e,#99000d,#99000c,#99000c,#99000b,#99000a,#99000a,#990009,#990009,#990008,#990008,#990007,#990007,#990006,#990006,#990005,#990005,#990005,#990004,#990004)"></i><i class=r3 style="background:linear-gradient(90deg,#009955,#009956,#009956,#009957,#009958,#009959,#00995a,#00995b,#00995d,#00995e,#00995f,#009960,#009962,#009963,#009965,#009967,#0e9968,#20996a,#33996c,#48996e,#5e9971,#759973,#8f9976,#99896d,#99755f,#996554,#99574b,#994c44,#99433d,#993b38,#993433,#992e2f,#99282c,#992428,#992026,#991c23,#991821,#99151f,#99121d,#99101b,#990d19,#990b18,#990916,#990715,#990514,#990413,#990212,#990111,#990010,#99000f,#99000e,#99000d,#99000d,#99000c,#99000b,#99000b,#99000a,#99000a,#990009,#990009,#990008,#990008,#990007,#990007,#990006,#990006,#990006,#990005,#990005)"></i><i class=r3 style="background:linear-gradient(90deg,#009958,#009959,#00995a,#00995b,#00995c,#00995d,#00995f,#009960,#009961,#009962,#009964,#009965,#009967,#009968,#00996a,#00996c,#0e996e,#209970,#339972,#489975,#5e9977,#76997a,#8f997d,#998973,#997464,#996459,#99564f,#994b47,#994241,#993a3b,#993336,#992d32,#99282e,#99232b,#991f28,#991b25,#991823,#991521,#99121f,#990f1d,#990d1b,#990b19,#990918,#990717,#990515,#990314,#990213,#990012,#990011,#990010,#99000f,#99000f,#99000e,#99000d,#99000c,#99000c,#99000b,#99000b,#99000a,#99000a,#990009,#990009,#990008,#990008,#990007,#990007,#990006,#990006,#990006)"></i><i class=r3 style="background:linear-gradient(90deg,#00995c,#00995d,#00995e,#00995f,#009960,#009962,#009963,#009964,#009966,#009967,#009969,#00996a,#00996c,#00996e,#009970,#009972,#0d9974,#1f9976,#339979,#47997b,#5e997e,#769981,#909985,#998879,#99736a,#99635e,#995654,#994b4b,#994144,#99393e,#993239,#992c35,#992731,#99222d,#991e2a,#991b27,#991725,#991423,#991120,#990f1f,#990c1d,#990a1b,#99081a,#990618,#990417,#990316,#990115,#990013,#990012,#990012,#990011,#990010,#99000f,#99000e,#99000e,#99000d,#99000c,#99000c,#99000b,#99000a,#99000a,#990009,#990009,#990009,#990008,#990008,#990007,#990007,#990006)"></i><i class=r3 style="background:linear-gradient(90deg,#009960,#009961,#009962,#009963,#009965,#009966,#009967,#009969,#00996a,#00996c,#00996d,#00996f,#009971,#009973,#009975,#009977,#0c997a,#1f997c,#32997f,#479982,#5e9985,#769989,#91998c,#99877f,#99726f,#996262,#995558,#994a4f,#994148,#993942,#99323c,#992c38,#992734,#992230,#991e2d,#991a2a,#991727,#991325,#991122,#990e20,#990c1f,#990a1d,#99081b,#99061a,#990418,#990217,#990116,#990015,#990014,#990013,#990012,#990011,#990010,#99000f,#99000f,#99000e,#99000d,#99000d,#99000c,#99000b,#99000b,#99000a,#99000a,#990009,#990009,#990008,#990008,#990008,#990007)"></i><i class=r3 style="background:linear-gradient(90deg,#009964,#009965,#009966,#009967,#009969,#00996a,#00996c,#00996d,#00996f,#009971,#009972,#009974,#009976,#009979,#00997b,#00997d,#0c9980,#1e9983,#329986,#479989,#5e998c,#779990,#919994,#998686,#997275,#996167,#99545c,#994953,#99404c,#993845,#993140,#992b3b,#992636,#992132,#991d2f,#99192c,#991629,#991327,#991024,#990e22,#990b20,#99091f,#99071d,#99051b,#99041a,#990219,#990017,#990016,#990015,#990014,#990013,#990012,#990011,#990011,#990010,#99000f,#99000e,#99000e,#99000d,#99000c,#99000c,#99000b,#99000b,#99000a,#99000a,#990009,#990009,#990008,#990008)"></i><i class=r3 style="background:linear-gradient(90deg,#009968,#009969,#00996a,#00996c,#00996d,#00996e,#009970,#009972,#009974,#009975,#009977,#00997a,#00997c,#00997e,#009981,#009983,#0b9986,#1d9989,#31998c,#479990,#5e9994,#779998,#8f9699,#99858c,#99717a,#99606c,#995361,#994857,#993f4f,#993749,#993043,#992a3e,#992539,#992135,#991c31,#99192e,#99152b,#991229,#991026,#990d24,#990b22,#990920,#99071f,#99051d,#99031c,#99011a,#990019,#990018,#990017,#990015,#990014,#990013,#990013,#990012,#990011,#990010,#99000f,#99000f,#99000e,#99000d,#99000d,#99000c,#99000c,#99000b,#99000b,#99000a,#99000a,#990009,#990009)"></i><i class=r3 style="background:linear-gradient(90deg,#00996b,#00996d,#00996e,#009970,#009971,#009973,#009975,#009976,#009978,#00997a,#00997d,#00997f,#009981,#009984,#009986,#009989,#0a998c,#1d9990,#319993,#479997,#5d9799,#739399,#898f99,#998593,#997080,#996071,#995265,#99475b,#993e53,#99364c,#993046,#992a40,#99253c,#992038,#991c34,#991831,#99152e,#99122b,#990f28,#990d26,#990a24,#990822,#990620,#99041f,#99031d,#99011c,#99001a,#990019,#990018,#990017,#990016,#990015,#990014,#990013,#990012,#990011,#990011,#990010,#99000f,#99000e,#99000e,#99000d,#99000d,#99000c,#99000c,#99000b,#99000b,#99000a,#99000a)"></i><i class=r3 style="background:linear-gradient(90deg,#00996f,#009971,#009972,#009974,#009976,#009977,#009979,#00997b,#00997d,#00997f,#009982,#009984,#009987,#00998a,#00998c,#009990,#099993,#1c9996,#309899,#449499,#599099,#6d8c99,#838899,#998399,#996f86,#995f76,#99516a,#99475f,#993d57,#99364f,#992f49,#992943,#99243f,#991f3a,#991b36,#991833,#991430,#99112d,#990f2a,#990c28,#990a26,#990824,#990622,#990420,#99021f,#99011d,#99001c,#99001a,#990019,#990018,#990017,#990016,#990015,#990014,#990013,#990012,#990012,#990011,#990010,#99000f,#99000f,#99000e,#99000e,#99000d,#99000c,#99000c,#99000b,#99000b,#99000b)"></i><i class=r3 style="background:linear-gradient(90deg,#009973,#009975,#009977,#009978,#00997a,#00997c,#00997e,#009980,#009982,#009985,#009987,#00998a,#00998c,#00998f,#009992,#009996,#089999,#1b9599,#2e9199,#418d99,#558999,#698599,#7d8199,#927d99,#996e8c,#995e7b,#99516e,#994664,#993d5b,#993553,#992e4c,#992846,#992341,#991f3d,#991b39,#991735,#991432,#99112f,#990e2c,#990b2a,#990928,#990726,#990524,#990322,#990220,#99001f,#99001d,#99001c,#99001b,#990019,#990018,#990017,#990016,#990015,#990014,#990013,#990013,#990012,#990011,#990010,#990010,#99000f,#99000f,#99000e,#99000d,#99000d,#99000c,#99000c,#99000b)"></i><i class=r3 style="background:linear-gradient(90deg,#009977,#009979,#00997b,#00997d,#00997f,#009981,#009983,#009985,#009987,#00998a,#00998c,#00998f,#009992,#009995,#009999,#009699,#079299,#198f99,#2b8b99,#3e8799,#518399,#647f99,#787b99,#8c7799,#996d91,#995d81,#995073,#994568,#993c5e,#993456,#992d4f,#992849,#992244,#991e3f,#991a3b,#991638,#991334,#991031,#990d2e,#990b2c,#990929,#990727,#990525,#990323,#990122,#990020,#99001f,#99001d,#99001c,#99001b,#99001a,#990018,#990017,#990016,#990015,#990015,#990014,#990013,#990012,#990011,#990011,#990010,#99000f,#99000f,#99000e,#99000e,#99000d,#99000d,#99000c)"></i><i class=r3 style="background:linear-gradient(90deg,#00997c,#00997d,#00997f,#009981,#009983,#009985,#009988,#00998a,#00998c,#00998f,#009992,#009995,#009998,#009799,#009399,#009099,#068c99,#188999,#298599,#3b8199,#4d7d99,#607a99,#737699,#877299,#996c97,#995c86,#994f78,#99446c,#993b62,#99335a,#992d53,#99274c,#992247,#991d42,#99193e,#99163a,#991236,#991033,#990d30,#990a2e,#99082b,#990629,#990427,#990225,#990123,#990022,#990020,#99001f,#99001d,#99001c,#99001b,#99001a,#990019,#990018,#990017,#990016,#990015,#990014,#990013,#990012,#990012,#990011,#990010,#990010,#99000f,#99000f,#99000e,#99000e,#99000d)"></i><i class=r3 style="background:linear-gradient(90deg,#009980,#009982,#009984,#009986,#009988,#00998a,#00998c,#00998f,#009992,#009995,#009998,#009799,#009499,#009199,#008d99,#008a99,#058799,#168399,#277f99,#387c99,#4a7899,#5c7499,#6f7099,#826c99,#956899,#995b8b,#994e7c,#994370,#993a66,#99325d,#992c56,#99264f,#99214a,#991d45,#991940,#99153c,#991239,#990f35,#990c32,#990a30,#99082d,#99062b,#990429,#990227,#990025,#990023,#990022,#990020,#99001f,#99001d,#99001c,#99001b,#99001a,#990019,#990018,#990017,#990016,#990015,#990014,#990013,#990013,#990012,#990011,#990011,#990010,#99000f,#99000f,#99000e,#99000e)"></i><i class=r3 style="background:linear-gradient(90deg,#009984,#009986,#009988,#00998a,#00998d,#00998f,#009991,#009994,#009997,#009899,#009599,#009299,#008f99,#008b99,#008899,#008599,#048199,#157e99,#257a99,#367799,#477399,#596f99,#6a6b99,#7d6899,#8f6499,#995a90,#994d81,#994274,#99396a,#993261,#992b59,#992552,#99204d,#991c47,#991843,#99143f,#99113b,#990e37,#990c34,#990932,#99072f,#99052d,#99032a,#990228,#990026,#990025,#990023,#990021,#990020,#99001f,#99001d,#99001c,#99001b,#99001a,#990019,#990018,#990017,#990016,#990015,#990014,#990014,#990013,#990012,#990012,#990011,#990010,#990010,#99000f,#99000f)"></i><i class=r3 style="background:linear-gradient(90deg,#009988,#00998a,#00998d,#00998f,#009991,#009994,#009997,#009999,#009699,#009399,#009099,#008d99,#008999,#008699,#008399,#008099,#037c99,#137999,#237599,#347299,#446e99,#556b99,#666799,#786399,#8a5f99,#995996,#994c86,#994179,#99386e,#993164,#992a5c,#992556,#99204f,#991b4a,#991745,#991441,#99113d,#990e3a,#990b36,#990933,#990731,#99052e,#99032c,#99012a,#990028,#990026,#990024,#990023,#990021,#990020,#99001f,#99001d,#99001c,#99001b,#99001a,#990019,#990018,#990017,#990016,#990015,#990015,#990014,#990013,#990013,#990012,#990011,#990011,#990010,#99000f)"></i><i class=r3 style="background:linear-gradient(90deg,#00998d,#00998f,#009991,#009994,#009996,#009999,#009699,#009499,#009199,#008e99,#008b99,#008899,#008599,#008199,#007e99,#007b99,#037899,#127499,#227199,#316d99,#426a99,#526699,#636299,#745f99,#855b99,#975799,#994b8b,#99417d,#993872,#993068,#992a60,#992459,#991f52,#991b4d,#991748,#991343,#99103f,#990d3c,#990b38,#990835,#990633,#990430,#99022e,#99012c,#99002a,#990028,#990026,#990024,#990023,#990021,#990020,#99001f,#99001d,#99001c,#99001b,#99001a,#990019,#990018,#990017,#990016,#990016,#990015,#990014,#990013,#990013,#990012,#990012,#990011,#990010)"></i><i class=r3 style="background:linear-gradient(90deg,#009991,#009993,#009996,#009998,#009799,#009499,#009199,#008f99,#008c99,#008999,#008699,#008399,#008099,#007d99,#007a99,#007699,#027399,#117099,#206c99,#2f6999,#3f6699,#4f6299,#5f5e99,#705b99,#805799,#925399,#994a90,#994081,#993776,#992f6c,#992963,#99235c,#991e55,#991a4f,#99164a,#991346,#990f42,#990d3e,#990a3a,#990837,#990635,#990432,#99022f,#99002d,#99002b,#990029,#990027,#990026,#990024,#990023,#990021,#990020,#99001f,#99001d,#99001c,#99001b,#99001a,#990019,#990018,#990018,#990017,#990016,#990015,#990014,#990014,#990013,#990012,#990012,#990011)"></i><i class=r3 style="background:linear-gradient(90deg,#009995,#009998,#009899,#009599,#009299,#009099,#008d99,#008a99,#008799,#008499,#008199,#007e99,#007b99,#007899,#007599,#007299,#016f99,#106c99,#1e6899,#2d6599,#3d6299,#4c5e99,#5c5a99,#6c5799,#7c5399,#8d4f99,#994994,#993f86,#99367a,#992e6f,#992867,#99225f,#991e58,#991952,#99154d,#991248,#990f44,#990c40,#990a3d,#990739,#990536,#990334,#990131,#99002f,#99002d,#99002b,#990029,#990027,#990026,#990024,#990023,#990021,#990020,#99001f,#99001e,#99001c,#99001b,#99001a,#990019,#990019,#990018,#990017,#990016,#990015,#990015,#990014,#990013,#990013,#990012)"></i><i class=r3 style="background:linear-gradient(90deg,#009899,#009699,#009399,#009099,#008e99,#008b99,#008899,#008699,#008399,#008099,#007d99,#007a99,#007799,#007499,#007199,#006e99,#006b99,#0e6899,#1d6499,#2b6199,#3a5e99,#495a99,#595799,#685399,#785099,#884c99,#994899,#993e8a,#99357e,#992e73,#99276a,#992262,#991d5b,#991955,#99154f,#99114b,#990e46,#990b42,#99093f,#99073b,#990538,#990336,#990133,#990031,#99002e,#99002c,#99002a,#990029,#990027,#990025,#990024,#990022,#990021,#990020,#99001f,#99001e,#99001c,#99001b,#99001a,#99001a,#990019,#990018,#990017,#990016,#990016,#990015,#990014,#990013,#990013)"></i><i class=r3 style="background:linear-gradient(90deg,#009499,#009199,#008f99,#008c99,#008a99,#008799,#008499,#008199,#007f99,#007c99,#007999,#007699,#007399,#007099,#006d99,#006a99,#006799,#0d6499,#1b6199,#2a5d99,#385a99,#475799,#565399,#655099,#744c99,#844999,#944599,#993d8f,#993482,#992d77,#99266d,#992165,#991c5e,#991858,#991452,#99114d,#990e48,#990b44,#990841,#99063d,#99043a,#990237,#990035,#990032,#990030,#99002e,#99002c,#99002a,#990028,#990027,#990025,#990024,#990022,#990021,#990020,#99001f,#99001e,#99001d,#99001c,#99001b,#99001a,#990019,#990018,#990017,#990016,#990016,#990015,#990014,#990014)"></i><i class=r3 style="background:linear-gradient(90deg,#009099,#008d99,#008b99,#008899,#008599,#008399,#008099,#007d99,#007b99,#007899,#007599,#007299,#006f99,#006d99,#006a99,#006799,#006399,#0c6099,#1a5d99,#285a99,#365799,#445399,#535099,#614d99,#704999,#804699,#8f4299,#993c93,#993386,#992c7b,#992671,#992068,#991b61,#99175a,#991355,#99104f,#990d4b,#990a47,#990843,#99063f,#99033c,#990239,#990036,#990034,#990032,#99002f,#99002d,#99002b,#99002a,#990028,#990026,#990025,#990024,#990022,#990021,#990020,#99001f,#99001e,#99001d,#99001c,#99001b,#99001a,#990019,#990018,#990017,#990017,#990016,#990015,#990015)"></i><i class=r3 style="background:linear-gradient(90deg,#008b99,#008999,#008799,#008499,#008199,#007f99,#007c99,#007a99,#007799,#007499,#007199,#006f99,#006c99,#006999,#006699,#006399,#006099,#0c5d99,#195a99,#265799,#345399,#425099,#504d99,#5e4a99,#6d4699,#7c4399,#8b3f99,#993b98,#99328a,#992b7e,#992574,#991f6c,#991b64,#99165d,#991357,#990f52,#990c4d,#990a49,#990745,#990541,#99033e,#99013b,#990038,#990036,#990033,#990031,#99002f,#99002d,#99002b,#990029,#990028,#990026,#990025,#990023,#990022,#990021,#990020,#99001f,#99001e,#99001d,#99001c,#99001b,#99001a,#990019,#990018,#990017,#990017,#990016,#990015)"></i><i class=r3 style="background:linear-gradient(90deg,#008899,#008599,#008399,#008099,#007e99,#007b99,#007999,#007699,#007399,#007199,#006e99,#006b99,#006899,#006599,#006399,#006099,#005d99,#0b5a99,#185799,#255499,#325099,#404d99,#4d4a99,#5b4799,#6a4399,#784099,#873c99,#963999,#99328e,#992a82,#992478,#991f6f,#991a67,#991660,#99125a,#990f54,#990c4f,#99094b,#990747,#990443,#990240,#99013d,#99003a,#990037,#990035,#990033,#990030,#99002e,#99002c,#99002b,#990029,#990028,#990026,#990025,#990023,#990022,#990021,#990020,#99001f,#99001e,#99001d,#99001c,#99001b,#99001a,#990019,#990018,#990018,#990017,#990016)"></i><i class=r3 style="background:linear-gradient(90deg,#008499,#008299,#007f99,#007d99,#007a99,#007899,#007599,#007299,#007099,#006d99,#006b99,#006899,#006599,#006299,#005f99,#005c99,#005a99,#0a5799,#165499,#235099,#304d99,#3e4a99,#4b4799,#594499,#664199,#743d99,#833a99,#913699,#993192,#992986,#99237b,#991e72,#99196a,#991563,#99115d,#990e57,#990b52,#99084d,#990649,#990445,#990242,#99003f,#99003c,#990039,#990036,#990034,#990032,#990030,#99002e,#99002c,#99002a,#990029,#990027,#990026,#990025,#990023,#990022,#990021,#990020,#99001f,#99001e,#99001d,#99001c,#99001b,#99001a,#990019,#990018,#990018,#990017)"></i><i class=r3 style="background:linear-gradient(90deg,#008099,#007e99,#007c99,#007999,#007799,#007499,#007299,#006f99,#006d99,#006a99,#006799,#006599,#006299,#005f99,#005c99,#005999,#005799,#095499,#155199,#224e99,#2f4b99,#3c4799,#494499,#564199,#633e99,#713b99,#7f3799,#8d3499,#993097,#99298a,#99227f,#991d75,#99186d,#991466,#99115f,#990d59,#990b54,#99084f,#99054b,#990347,#990144,#990040,#99003d,#99003b,#990038,#990036,#990033,#990031,#99002f,#99002d,#99002c,#99002a,#990029,#990027,#990026,#990024,#990023,#990022,#990021,#990020,#99001f,#99001e,#99001d,#99001c,#99001b,#99001a,#990019,#990019,#990018)"></i><i class=r3 style="background:linear-gradient(90deg,#007d99,#007b99,#007899,#007699,#007399,#007199,#006e99,#006c99,#006999,#006799,#006499,#006199,#005f99,#005c99,#005999,#005699,#005499,#085199,#144e99,#214b99,#2d4899,#3a4599,#464299,#533f99,#613b99,#6e3899,#7b3599,#893299,#972e99,#99288e,#992282,#991c79,#991870,#991469,#991062,#990d5c,#990a57,#990752,#99054d,#990349,#990146,#990042,#99003f,#99003c,#99003a,#990037,#990035,#990033,#990031,#99002f,#99002d,#99002b,#99002a,#990028,#990027,#990026,#990024,#990023,#990022,#990021,#990020,#99001f,#99001e,#99001d,#99001c,#99001b,#99001a,#990019,#990019)"></i><i class=r3 style="background:linear-gradient(90deg,#007a99,#007799,#007599,#007399,#007099,#006e99,#006b99,#006999,#006699,#006499,#006199,#005f99,#005c99,#005999,#005699,#005499,#005199,#074e99,#134b99,#1f4899,#2b4599,#384299,#443f99,#513c99,#5e3999,#6b3699,#783399,#852f99,#932c99,#992792,#992186,#991b7c,#991773,#99136b,#990f65,#990c5e,#990959,#990754,#990450,#99024b,#990048,#990044,#990041,#99003e,#99003b,#990039,#990036,#990034,#990032,#990030,#99002e,#99002d,#99002b,#99002a,#990028,#990027,#990025,#990024,#990023,#990022,#990021,#990020,#99001f,#99001e,#99001d,#99001c,#99001b,#99001a,#99001a)"></i><i class=r3 style="background:linear-gradient(90deg,#007799,#007499,#007299,#007099,#006d99,#006b99,#006899,#006699,#006399,#006199,#005e99,#005c99,#005999,#005699,#005499,#005199,#004e99,#074b99,#124999,#1e4699,#2a4399,#364099,#423d99,#4f3a99,#5b3799,#683499,#753199,#822d99,#8f2a99,#992696,#99208a,#991b7f,#991676,#99126e,#990f67,#990b61,#99095b,#990656,#990452,#99024d,#99004a,#990046,#990043,#990040,#99003d,#99003a,#990038,#990036,#990034,#990032,#990030,#99002e,#99002c,#99002b,#990029,#990028,#990026,#990025,#990024,#990023,#990022,#990021,#990020,#99001f,#99001e,#99001d,#99001c,#99001b,#99001a)"></i><i class=r3 style="background:linear-gradient(90deg,#007399,#007199,#006f99,#006d99,#006a99,#006899,#006599,#006399,#006199,#005e99,#005c99,#005999,#005699,#005499,#005199,#004e99,#004c99,#064999,#114699,#1d4399,#294099,#343e99,#403b99,#4c3899,#593599,#653299,#722e99,#7e2b99,#8b2899,#982599,#991f8d,#991a83,#991579,#991171,#990e6a,#990b64,#99085e,#990559,#990354,#990150,#99004c,#990048,#990045,#990042,#99003f,#99003c,#99003a,#990037,#990035,#990033,#990031,#99002f,#99002e,#99002c,#99002a,#990029,#990028,#990026,#990025,#990024,#990023,#990022,#990021,#990020,#99001f,#99001e,#99001d,#99001c,#99001b)"></i><i class=r3 style="background:linear-gradient(90deg,#007199,#006e99,#006c99,#006a99,#006799,#006599,#006399,#006099,#005e99,#005b99,#005999,#005699,#005499,#005199,#004f99,#004c99,#004999,#054799,#114499,#1c4199,#273e99,#333b99,#3e3899,#4a3699,#563399,#623099,#6f2d99,#7b2999,#882699,#952399,#991e91,#991986,#99157c,#991174,#990d6d,#990a66,#990760,#99055b,#990356,#990052,#99004e,#99004a,#990046,#990043,#990040,#99003e,#99003b,#990039,#990036,#990034,#990032,#990031,#99002f,#99002d,#99002c,#99002a,#990029,#990027,#990026,#990025,#990024,#990023,#990022,#990021,#990020,#99001f,#99001e,#99001d,#99001c)"></i><i class=r3 style="background:linear-gradient(90deg,#006e99,#006b99,#006999,#006799,#006599,#006299,#006099,#005e99,#005b99,#005999,#005699,#005499,#005199,#004f99,#004c99,#004a99,#004799,#054499,#104299,#1b3f99,#263c99,#313999,#3d3699,#483399,#543199,#602e99,#6c2b99,#782899,#842599,#912199,#991d95,#991889,#991480,#991077,#990d6f,#990969,#990763,#99045d,#990258,#990054,#990050,#99004c,#990048,#990045,#990042,#99003f,#99003d,#99003a,#990038,#990036,#990034,#990032,#990030,#99002e,#99002d,#99002b,#99002a,#990028,#990027,#990026,#990025,#990024,#990023,#990022,#990021,#990020,#99001f,#99001e,#99001d)"></i><i class=r3 style="background:linear-gradient(90deg,#006b99,#006999,#006799,#006499,#006299,#006099,#005d99,#005b99,#005999,#005699,#005499,#005199,#004f99,#004c99,#004a99,#004799,#004599,#044299,#0f3f99,#1a3d99,#253a99,#303799,#3b3499,#463299,#522f99,#5d2c99,#692999,#752699,#812399,#8d2099,#991c98,#99178d,#991383,#990f7a,#990c72,#99096b,#990665,#99045f,#99015a,#990056,#990052,#99004e,#99004a,#990047,#990044,#990041,#99003e,#99003c,#990039,#990037,#990035,#990033,#990031,#990030,#99002e,#99002c,#99002b,#99002a,#990028,#990027,#990026,#990025,#990024,#990022,#990021,#990021,#990020,#99001f,#99001e)"></i><i class=r3 style="background:linear-gradient(90deg,#006899,#006699,#006499,#006299,#005f99,#005d99,#005b99,#005999,#005699,#005499,#005299,#004f99,#004d99,#004a99,#004899,#004599,#004399,#044099,#0e3d99,#193b99,#233899,#2e3599,#393299,#443099,#502d99,#5b2a99,#662799,#722499,#7e2199,#8a1e99,#961b99,#991790,#991286,#990e7d,#990b75,#99086e,#990568,#990362,#99015d,#990058,#990054,#990050,#99004c,#990048,#990045,#990042,#990040,#99003d,#99003b,#990039,#990036,#990034,#990033,#990031,#99002f,#99002e,#99002c,#99002b,#990029,#990028,#990027,#990026,#990025,#990023,#990022,#990021,#990020,#990020,#99001f)"></i><i class=r3 style="background:linear-gradient(90deg,#006699,#006499,#006199,#005f99,#005d99,#005b99,#005999,#005699,#005499,#005299,#004f99,#004d99,#004a99,#004899,#004599,#004399,#004099,#033e99,#0d3b99,#183999,#223699,#2d3399,#383199,#422e99,#4d2b99,#592899,#642599,#6f2299,#7b2099,#871d99,#921a99,#991694,#991189,#990e80,#990a78,#990771,#99056a,#990264,#99005f,#99005a,#990056,#990051,#99004e,#99004a,#990047,#990044,#990041,#99003f,#99003c,#99003a,#990038,#990036,#990034,#990032,#990030,#99002f,#99002d,#99002c,#99002a,#990029,#990028,#990027,#990026,#990024,#990023,#990022,#990021,#990020,#990020)"></i><i class=r3 style="background:linear-gradient(90deg,#006399,#006199,#005f99,#005d99,#005b99,#005899,#005699,#005499,#005299,#004f99,#004d99,#004b99,#004899,#004699,#004399,#004199,#003e99,#033c99,#0d3999,#173799,#213499,#2b3199,#362f99,#412c99,#4b2999,#562799,#612499,#6d2199,#781e99,#831b99,#8f1899,#991597,#99118c,#990d83,#990a7b,#990773,#99046c,#990266,#990061,#99005c,#990058,#990053,#990050,#99004c,#990049,#990046,#990043,#990040,#99003e,#99003b,#990039,#990037,#990035,#990033,#990032,#990030,#99002e,#99002d,#99002c,#99002a,#990029,#990028,#990026,#990025,#990024,#990023,#990022,#990021,#990020)"></i><i class=r3 style="background:linear-gradient(90deg,#006199,#005f99,#005d99,#005b99,#005899,#005699,#005499,#005299,#004f99,#004d99,#004b99,#004999,#004699,#004499,#004199,#003f99,#003c99,#023a99,#0c3799,#163599,#203299,#2a3099,#352d99,#3f2a99,#4a2899,#542599,#5f2299,#6a1f99,#751d99,#801a99,#8c1799,#971499,#991090,#990c86,#99097d,#990676,#99036f,#990169,#990063,#99005e,#99005a,#990055,#990051,#99004e,#99004a,#990047,#990044,#990042,#99003f,#99003d,#99003b,#990038,#990036,#990035,#990033,#990031,#990030,#99002e,#99002d,#99002b,#99002a,#990029,#990027,#990026,#990025,#990024,#990023,#990022,#990021)"></i><i class=r3 style="background:linear-gradient(90deg,#005f99,#005d99,#005a99,#005899,#005699,#005499,#005299,#005099,#004d99,#004b99,#004999,#004799,#004499,#004299,#003f99,#003d99,#003b99,#013899,#0b3699,#153399,#1f3199,#292e99,#332b99,#3d2999,#482699,#522399,#5d2199,#681e99,#721b99,#7d1899,#891699,#941399,#990f93,#990b89,#990880,#990578,#990371,#99006b,#990065,#990060,#99005c,#990057,#990053,#990050,#99004c,#990049,#990046,#990043,#990041,#99003e,#99003c,#99003a,#990038,#990036,#990034,#990032,#990031,#99002f,#99002e,#99002c,#99002b,#99002a,#990028,#990027,#990026,#990025,#990024,#990023,#990022)"></i><i class=r3 style="background:linear-gradient(90deg,#005c99,#005a99,#005899,#005699,#005499,#005299,#005099,#004e99,#004b99,#004999,#004799,#004599,#004299,#004099,#003e99,#003b99,#003999,#013699,#0b3499,#143199,#1e2f99,#282c99,#322a99,#3c2799,#462599,#502299,#5b1f99,#651d99,#701a99,#7b1799,#861499,#911199,#990e96,#990b8c,#990783,#99057b,#990274,#99006e,#990068,#990062,#99005e,#990059,#990055,#990051,#99004e,#99004b,#990048,#990045,#990042,#990040,#99003d,#99003b,#990039,#990037,#990035,#990034,#990032,#990030,#99002f,#99002d,#99002c,#99002b,#990029,#990028,#990027,#990026,#990025,#990024,#990023)"></i><i class=r3 style="background:linear-gradient(90deg,#005a99,#005899,#005699,#005499,#005299,#005099,#004e99,#004c99,#004999,#004799,#004599,#004399,#004099,#003e99,#003c99,#003999,#003799,#013599,#0a3299,#133099,#1d2d99,#272b99,#302899,#3a2699,#442399,#4e2199,#591e99,#631b99,#6d1999,#781699,#831399,#8d1099,#980d99,#990a8f,#990786,#99047e,#990177,#990070,#99006a,#990065,#990060,#99005b,#990057,#990053,#990050,#99004c,#990049,#990046,#990044,#990041,#99003f,#99003c,#99003a,#990038,#990036,#990035,#990033,#990031,#990030,#99002e,#99002d,#99002c,#99002a,#990029,#990028,#990027,#990026,#990025,#990024)"></i><i class=r3 style="background:linear-gradient(90deg,#005899,#005699,#005499,#005299,#005099,#004e99,#004c99,#004a99,#004799,#004599,#004399,#004199,#003f99,#003c99,#003a99,#003899,#003599,#003399,#093199,#132e99,#1c2c99,#262999,#2f2799,#392499,#432299,#4d1f99,#571d99,#611a99,#6b1799,#751599,#801299,#8a0f99,#950c99,#990992,#990689,#990381,#990179,#990072,#99006c,#990067,#990062,#99005d,#990059,#990055,#990051,#99004e,#99004b,#990048,#990045,#990042,#990040,#99003e,#99003c,#99003a,#990038,#990036,#990034,#990033,#990031,#99002f,#99002e,#99002d,#99002b,#99002a,#990029,#990028,#990027,#990026,#990025)"></i><i class=r3 style="background:linear-gradient(90deg,#005699,#005499,#005299,#005099,#004e99,#004c99,#004a99,#004899,#004699,#004399,#004199,#003f99,#003d99,#003b99,#003899,#003699,#003499,#003199,#092f99,#122d99,#1b2a99,#242899,#2e2599,#372399,#412099,#4b1e99,#551b99,#5f1999,#691699,#731399,#7d1199,#880e99,#920b99,#990895,#99058c,#990283,#99007c,#990075,#99006f,#990069,#990064,#99005f,#99005b,#990057,#990053,#990050,#99004c,#990049,#990047,#990044,#990041,#99003f,#99003d,#99003b,#990039,#990037,#990035,#990034,#990032,#990031,#99002f,#99002e,#99002c,#99002b,#99002a,#990029,#990028,#990027,#990026)"></i><i class=r3 style="background:linear-gradient(90deg,#005499,#005299,#005099,#004e99,#004c99,#004a99,#004899,#004699,#004499,#004299,#004099,#003d99,#003b99,#003999,#003799,#003499,#003299,#003099,#082e99,#112b99,#1a2999,#232699,#2d2499,#362299,#401f99,#491d99,#531a99,#5d1799,#661599,#701299,#7b1099,#850d99,#8f0a99,#990899,#99048f,#990286,#99007e,#990077,#990071,#99006b,#990066,#990061,#99005d,#990059,#990055,#990051,#99004e,#99004b,#990048,#990045,#990043,#990040,#99003e,#99003c,#99003a,#990038,#990036,#990035,#990033,#990032,#990030,#99002f,#99002d,#99002c,#99002b,#99002a,#990029,#990028,#990027)"></i><i class=r3 style="background:linear-gradient(90deg,#005299,#005099,#004e99,#004c99,#004a99,#004899,#004699,#004499,#004299,#004099,#003e99,#003c99,#003a99,#003799,#003599,#003399,#003199,#002e99,#082c99,#102a99,#192799,#222599,#2c2399,#352099,#3e1e99,#471b99,#511999,#5b1699,#641499,#6e1199,#780f99,#820c99,#8c0999,#960799,#990492,#990189,#990081,#99007a,#990073,#99006d,#990068,#990063,#99005f,#99005a,#990056,#990053,#990050,#99004c,#99004a,#990047,#990044,#990042,#990040,#99003d,#99003b,#990039,#990038,#990036,#990034,#990033,#990031,#990030,#99002e,#99002d,#99002c,#99002b,#99002a,#990028,#990027)"></i><i class=r3 style="background:linear-gradient(90deg,#005099,#004e99,#004c99,#004a99,#004999,#004799,#004499,#004299,#004099,#003e99,#003c99,#003a99,#003899,#003699,#003499,#003199,#002f99,#002d99,#072b99,#102899,#192699,#212499,#2a2199,#331f99,#3d1d99,#461a99,#4f1899,#591599,#621399,#6c1099,#760e99,#7f0b99,#890899,#930699,#990395,#99008c,#990083,#99007c,#990076,#990070,#99006a,#990065,#990060,#99005c,#990058,#990055,#990051,#99004e,#99004b,#990048,#990046,#990043,#990041,#99003f,#99003d,#99003b,#990039,#990037,#990035,#990034,#990032,#990031,#99002f,#99002e,#99002d,#99002c,#99002a,#990029,#990028)"></i><i class=r3 style="background:linear-gradient(90deg,#004f99,#004d99,#004b99,#004999,#004799,#004599,#004399,#004199,#003f99,#003d99,#003b99,#003999,#003699,#003499,#003299,#003099,#002e99,#002b99,#062999,#0f2799,#182599,#202299,#292099,#321e99,#3b1b99,#441999,#4d1799,#571499,#601299,#6a0f99,#730d99,#7d0a99,#870799,#900599,#990298,#99008e,#990086,#99007f,#990078,#990072,#99006c,#990067,#990062,#99005e,#99005a,#990056,#990053,#990050,#99004d,#99004a,#990047,#990045,#990042,#990040,#99003e,#99003c,#99003a,#990038,#990037,#990035,#990033,#990032,#990030,#99002f,#99002e,#99002d,#99002b,#99002a,#990029)"></i><i class=r3 style="background:linear-gradient(90deg,#004d99,#004b99,#004999,#004799,#004599,#004399,#004199,#003f99,#003d99,#003b99,#003999,#003799,#003599,#003399,#003199,#002e99,#002c99,#002a99,#062899,#0e2699,#172399,#202199,#281f99,#311d99,#3a1a99,#431899,#4c1599,#551399,#5e1199,#670e99,#710c99,#7a0999,#840799,#8e0499,#970199,#990091,#990089,#990081,#99007a,#990074,#99006e,#990069,#990064,#990060,#99005c,#990058,#990054,#990051,#99004e,#99004b,#990048,#990046,#990044,#990041,#99003f,#99003d,#99003b,#990039,#990038,#990036,#990034,#990033,#990031,#990030,#99002f,#99002e,#99002c,#99002b,#99002a)"></i><i class=r3 style="background:linear-gradient(90deg,#004b99,#004999,#004799,#004599,#004399,#004299,#004099,#003e99,#003c99,#003a99,#003899,#003699,#003399,#003199,#002f99,#002d99,#002b99,#002999,#062799,#0e2499,#162299,#1f2099,#271e99,#301b99,#391999,#411799,#4a1499,#531299,#5c1099,#650d99,#6f0b99,#780899,#810699,#8b0399,#950199,#990094,#99008b,#990084,#99007d,#990076,#990070,#99006b,#990066,#990062,#99005e,#99005a,#990056,#990053,#990050,#99004d,#99004a,#990047,#990045,#990043,#990040,#99003e,#99003c,#99003a,#990039,#990037,#990035,#990034,#990032,#990031,#990030,#99002e,#99002d,#99002c,#99002b)"></i><i class=r3 style="background:linear-gradient(90deg,#004999,#004899,#004699,#004499,#004299,#004099,#003e99,#003c99,#003a99,#003899,#003699,#003499,#003299,#003099,#002e99,#002c99,#002a99,#002899,#052599,#0d2399,#152199,#1e1f99,#261d99,#2f1a99,#371899,#401699,#491399,#521199,#5a0f99,#630c99,#6c0a99,#760799,#7f0599,#880299,#920099,#990097,#99008e,#990086,#99007f,#990078,#990072,#99006d,#990068,#990064,#99005f,#99005b,#990058,#990054,#990051,#99004e,#99004b,#990049,#990046,#990044,#990042,#990040,#99003e,#99003c,#99003a,#990038,#990037,#990035,#990033,#990032,#990031,#99002f,#99002e,#99002d,#99002c)"></i><i class=r3 style="background:linear-gradient(90deg,#004899,#004699,#004499,#004299,#004099,#003e99,#003d99,#003b99,#003999,#003799,#003599,#003399,#003199,#002f99,#002d99,#002a99,#002899,#002699,#052499,#0d2299,#152099,#1d1e99,#251b99,#2e1999,#361799,#3f1599,#471299,#501099,#590e99,#610b99,#6a0999,#730799,#7d0499,#860299,#8f0099,#980099,#990091,#990089,#990081,#99007b,#990075,#99006f,#99006a,#990065,#990061,#99005d,#990059,#990056,#990053,#990050,#99004d,#99004a,#990048,#990045,#990043,#990041,#99003f,#99003d,#99003b,#990039,#990038,#990036,#990034,#990033,#990032,#990030,#99002f,#99002e,#99002d)"></i><i class=r3 style="background:linear-gradient(90deg,#004699,#004499,#004399,#004199,#003f99,#003d99,#003b99,#003999,#003799,#003599,#003399,#003199,#002f99,#002d99,#002b99,#002999,#002799,#002599,#042399,#0c2199,#141f99,#1c1d99,#241a99,#2d1899,#351699,#3d1499,#461199,#4e0f99,#570d99,#600a99,#680899,#710699,#7a0399,#830199,#8c0099,#960099,#990093,#99008b,#990084,#99007d,#990077,#990071,#99006c,#990067,#990063,#99005f,#99005b,#990057,#990054,#990051,#99004e,#99004b,#990049,#990046,#990044,#990042,#990040,#99003e,#99003c,#99003a,#990039,#990037,#990035,#990034,#990033,#990031,#990030,#99002f,#99002e)"></i><i class=r3 style="background:linear-gradient(90deg,#004599,#004399,#004199,#003f99,#003d99,#003c99,#003a99,#003899,#003699,#003499,#003299,#003099,#002e99,#002c99,#002a99,#002899,#002699,#002499,#042299,#0c2099,#131e99,#1b1b99,#231999,#2c1799,#341599,#3c1399,#441099,#4d0e99,#550c99,#5e0a99,#660799,#6f0599,#780399,#810099,#8a0099,#930099,#990096,#99008e,#990086,#99007f,#990079,#990073,#99006e,#990069,#990065,#990060,#99005d,#990059,#990056,#990053,#990050,#99004d,#99004a,#990048,#990045,#990043,#990041,#99003f,#99003d,#99003b,#99003a,#990038,#990037,#990035,#990034,#990032,#990031,#990030,#99002e)"></i><i class=r3 style="background:linear-gradient(90deg,#004399,#004199,#004099,#003e99,#003c99,#003a99,#003899,#003699,#003499,#003399,#003199,#002f99,#002d99,#002b99,#002999,#002799,#002599,#002399,#032199,#0b1f99,#131c99,#1b1a99,#231899,#2b1699,#331499,#3b1299,#431099,#4b0d99,#540b99,#5c0999,#650699,#6d0499,#760299,#7f0099,#870099,#900099,#990099,#990090,#990088,#990081,#99007b,#990075,#990070,#99006b,#990066,#990062,#99005e,#99005b,#990057,#990054,#990051,#99004e,#99004c,#990049,#990047,#990044,#990042,#990040,#99003e,#99003d,#99003b,#990039,#990038,#990036,#990035,#990033,#990032,#990031,#99002f)"></i><i class=r3 style="background:linear-gradient(90deg,#004299,#004099,#003e99,#003c99,#003b99,#003999,#003799,#003599,#003399,#003199,#002f99,#002d99,#002c99,#002a99,#002899,#002699,#002499,#002299,#032099,#0a1e99,#121b99,#1a1999,#221799,#2a1599,#311399,#3a1199,#420f99,#4a0c99,#520a99,#5a0899,#630699,#6b0399,#740199,#7c0099,#850099,#8e0099,#970099,#990093,#99008b,#990084,#99007d,#990077,#990072,#99006d,#990068,#990064,#990060,#99005c,#990059,#990056,#990052,#990050,#99004d,#99004a,#990048,#990046,#990043,#990041,#99003f,#99003e,#99003c,#99003a,#990039,#990037,#990036,#990034,#990033,#990031,#990030)"></i><i class=r3 style="background:linear-gradient(90deg,#004099,#003f99,#003d99,#003b99,#003999,#003799,#003699,#003499,#003299,#003099,#002e99,#002c99,#002a99,#002899,#002699,#002599,#002399,#002199,#021f99,#0a1c99,#121a99,#191899,#211699,#291499,#301299,#381099,#400e99,#480c99,#500999,#590799,#610599,#690399,#720099,#7a0099,#830099,#8b0099,#940099,#990095,#99008d,#990086,#99007f,#990079,#990074,#99006f,#99006a,#990066,#990062,#99005e,#99005a,#990057,#990054,#990051,#99004e,#99004c,#990049,#990047,#990045,#990043,#990041,#99003f,#99003d,#99003b,#99003a,#990038,#990037,#990035,#990034,#990032,#990031)"></i><i class=r3 style="background:linear-gradient(90deg,#003f99,#003d99,#003b99,#003a99,#003899,#003699,#003499,#003399,#003199,#002f99,#002d99,#002b99,#002999,#002799,#002599,#002399,#002199,#001f99,#021d99,#091b99,#111999,#181799,#201599,#281399,#2f1199,#370f99,#3f0d99,#470b99,#4f0999,#570699,#5f0499,#670299,#700099,#780099,#800099,#890099,#910099,#990098,#990090,#990088,#990082,#99007c,#990076,#990071,#99006c,#990067,#990063,#99005f,#99005c,#990059,#990055,#990052,#990050,#99004d,#99004a,#990048,#990046,#990044,#990042,#990040,#99003e,#99003c,#99003b,#990039,#990038,#990036,#990035,#990033,#990032)"></i><i class=r3 style="background:linear-gradient(90deg,#003e99,#003c99,#003a99,#003899,#003799,#003599,#003399,#003199,#002f99,#002e99,#002c99,#002a99,#002899,#002699,#002499,#002299,#002099,#001e99,#021c99,#091a99,#101899,#181699,#1f1499,#271299,#2e1099,#360e99,#3e0c99,#460a99,#4d0899,#550699,#5d0499,#660199,#6e0099,#760099,#7e0099,#870099,#8f0099,#980099,#990092,#99008b,#990084,#99007e,#990078,#990073,#99006e,#990069,#990065,#990061,#99005d,#99005a,#990057,#990054,#990051,#99004e,#99004c,#990049,#990047,#990045,#990043,#990041,#99003f,#99003d,#99003c,#99003a,#990038,#990037,#990036,#990034,#990033)"></i><i class=r3 style="background:linear-gradient(90deg,#003c99,#003b99,#003999,#003799,#003599,#003499,#003299,#003099,#002e99,#002c99,#002b99,#002999,#002799,#002599,#002399,#002199,#001f99,#001d99,#011c99,#091a99,#101899,#171699,#1e1499,#261299,#2d0f99,#350d99,#3d0b99,#440999,#4c0799,#540599,#5c0399,#640199,#6c0099,#740099,#7c0099,#840099,#8d0099,#950099,#990095,#99008d,#990086,#990080,#99007a,#990074,#990070,#99006b,#990067,#990063,#99005f,#99005c,#990058,#990055,#990052,#990050,#99004d,#99004b,#990048,#990046,#990044,#990042,#990040,#99003e,#99003d,#99003b,#990039,#990038,#990037,#990035,#990034)"></i><i class=r3 style="background:linear-gradient(90deg,#003b99,#003999,#003899,#003699,#003499,#003299,#003199,#002f99,#002d99,#002b99,#002a99,#002899,#002699,#002499,#002299,#002099,#001e99,#001c99,#011b99,#081999,#0f1799,#161599,#1e1399,#251199,#2c0f99,#340d99,#3b0b99,#430899,#4b0699,#520499,#5a0299,#620099,#6a0099,#720099,#7a0099,#820099,#8a0099,#930099,#990097,#99008f,#990088,#990082,#99007c,#990076,#990071,#99006d,#990068,#990064,#990061,#99005d,#99005a,#990057,#990054,#990051,#99004e,#99004c,#99004a,#990047,#990045,#990043,#990041,#99003f,#99003e,#99003c,#99003a,#990039,#990037,#990036,#990035)"></i><i class=r3 style="background:linear-gradient(90deg,#003a99,#003899,#003699,#003599,#003399,#003199,#003099,#002e99,#002c99,#002a99,#002899,#002799,#002599,#002399,#002199,#001f99,#001d99,#001c99,#011a99,#081899,#0f1699,#161499,#1d1299,#241099,#2c0e99,#330c99,#3a0a99,#420899,#490699,#510499,#590299,#600099,#680099,#700099,#780099,#800099,#880099,#900099,#980099,#990092,#99008b,#990084,#99007e,#990078,#990073,#99006e,#99006a,#990066,#990062,#99005f,#99005b,#990058,#990055,#990052,#990050,#99004d,#99004b,#990048,#990046,#990044,#990042,#990041,#99003f,#99003d,#99003b,#99003a,#990038,#990037,#990036)"></i><i class=r3 style="background:linear-gradient(90deg,#003999,#003799,#003599,#003499,#003299,#003099,#002e99,#002d99,#002b99,#002999,#002799,#002699,#002499,#002299,#002099,#001e99,#001c99,#001b99,#001999,#071799,#0e1599,#151399,#1c1199,#230f99,#2b0d99,#320b99,#390999,#410799,#480599,#500399,#570199,#5f0099,#660099,#6e0099,#760099,#7e0099,#860099,#8e0099,#960099,#990094,#99008d,#990086,#990080,#99007a,#990075,#990070,#99006c,#990068,#990064,#990060,#99005d,#990059,#990056,#990054,#990051,#99004e,#99004c,#99004a,#990047,#990045,#990043,#990042,#990040,#99003e,#99003c,#99003b,#990039,#990038,#990037)"></i><i class=r3 style="background:linear-gradient(90deg,#003799,#003699,#003499,#003299,#003199,#002f99,#002d99,#002c99,#002a99,#002899,#002699,#002599,#002399,#002199,#001f99,#001d99,#001c99,#001a99,#001899,#071699,#0e1499,#151299,#1c1099,#230e99,#2a0c99,#310a99,#380899,#3f0699,#470499,#4e0299,#560099,#5d0099,#650099,#6c0099,#740099,#7c0099,#840099,#8c0099,#940099,#990096,#99008f,#990088,#990082,#99007c,#990077,#990072,#99006d,#990069,#990065,#990062,#99005e,#99005b,#990058,#990055,#990052,#990050,#99004d,#99004b,#990049,#990047,#990045,#990043,#990041,#99003f,#99003d,#99003c,#99003a,#990039,#990037)"></i><i class=r3 style="background:linear-gradient(90deg,#003699,#003599,#003399,#003199,#003099,#002e99,#002c99,#002b99,#002999,#002799,#002599,#002499,#002299,#002099,#001e99,#001c99,#001b99,#001999,#001799,#061599,#0d1399,#141199,#1b0f99,#220e99,#290c99,#300a99,#370899,#3e0699,#460499,#4d0299,#540099,#5c0099,#630099,#6b0099,#720099,#7a0099,#820099,#890099,#910099,#990099,#990091,#99008a,#990084,#99007e,#990079,#990074,#99006f,#99006b,#990067,#990063,#990060,#99005c,#990059,#990056,#990053,#990051,#99004e,#99004c,#99004a,#990048,#990046,#990044,#990042,#990040,#99003e,#99003d,#99003b,#99003a,#990038)"></i><i class=r3 style="background:linear-gradient(90deg,#003599,#003399,#003299,#003099,#002e99,#002d99,#002b99,#002999,#002899,#002699,#002499,#002399,#002199,#001f99,#001d99,#001c99,#001a99,#001899,#001699,#061499,#0d1299,#131199,#1a0f99,#210d99,#280b99,#2f0999,#360799,#3d0599,#440399,#4c0199,#530099,#5a0099,#610099,#690099,#700099,#780099,#800099,#870099,#8f0099,#970099,#990094,#99008d,#990086,#990080,#99007b,#990076,#990071,#99006d,#990068,#990065,#990061,#99005e,#99005b,#990058,#990055,#990052,#990050,#99004d,#99004b,#990049,#990047,#990045,#990043,#990041,#99003f,#99003e,#99003c,#99003b,#990039)"></i><i class=r3 style="background:linear-gradient(90deg,#003499,#003299,#003199,#002f99,#002d99,#002c99,#002a99,#002899,#002799,#002599,#002399,#002299,#002099,#001e99,#001c99,#001b99,#001999,#001799,#001599,#061399,#0c1299,#131099,#1a0e99,#200c99,#270a99,#2e0899,#350699,#3c0499,#430299,#4a0099,#510099,#590099,#600099,#670099,#6f0099,#760099,#7e0099,#850099,#8d0099,#940099,#990096,#99008f,#990088,#990082,#99007d,#990077,#990073,#99006e,#99006a,#990066,#990063,#99005f,#99005c,#990059,#990056,#990053,#990051,#99004e,#99004c,#99004a,#990048,#990046,#990044,#990042,#990040,#99003f,#99003d,#99003c,#99003a)"></i><i class=r3 style="background:linear-gradient(90deg,#003399,#003199,#003099,#002e99,#002c99,#002b99,#002999,#002799,#002699,#002499,#002299,#002199,#001f99,#001d99,#001c99,#001a99,#001899,#001699,#001599,#051399,#0c1199,#120f99,#190d99,#200b99,#260999,#2d0899,#340699,#3b0499,#420299,#490099,#500099,#570099,#5e0099,#660099,#6d0099,#740099,#7c0099,#830099,#8b0099,#920099,#990098,#990091,#99008a,#990084,#99007e,#990079,#990074,#990070,#99006c,#990068,#990064,#990061,#99005d,#99005a,#990057,#990055,#990052,#990050,#99004d,#99004b,#990049,#990047,#990045,#990043,#990041,#990040,#99003e,#99003d,#99003b)"></i><i class=r3 style="background:linear-gradient(90deg,#003299,#003099,#002f99,#002d99,#002b99,#002a99,#002899,#002799,#002599,#002399,#002299,#002099,#001e99,#001c99,#001b99,#001999,#001799,#001599,#001499,#051299,#0b1099,#120e99,#180d99,#1f0b99,#260999,#2c0799,#330599,#3a0399,#410199,#480099,#4f0099,#560099,#5d0099,#640099,#6b0099,#720099,#7a0099,#810099,#890099,#900099,#980099,#990093,#99008c,#990086,#990080,#99007b,#990076,#990072,#99006d,#990069,#990066,#990062,#99005f,#99005c,#990059,#990056,#990053,#990051,#99004e,#99004c,#99004a,#990048,#990046,#990044,#990042,#990041,#99003f,#99003e,#99003c)"></i><i class=r3 style="background:linear-gradient(90deg,#003199,#002f99,#002e99,#002c99,#002a99,#002999,#002799,#002699,#002499,#002299,#002199,#001f99,#001d99,#001c99,#001a99,#001899,#001699,#001599,#001399,#041199,#0b0f99,#110e99,#180c99,#1e0a99,#250899,#2c0699,#320499,#390399,#400199,#470099,#4d0099,#540099,#5b0099,#620099,#6a0099,#710099,#780099,#7f0099,#870099,#8e0099,#950099,#990095,#99008e,#990088,#990082,#99007d,#990078,#990073,#99006f,#99006b,#990067,#990064,#990060,#99005d,#99005a,#990057,#990055,#990052,#990050,#99004d,#99004b,#990049,#990047,#990045,#990043,#990042,#990040,#99003e,#99003d)"></i><i class=r3 style="background:linear-gradient(90deg,#003099,#002e99,#002d99,#002b99,#002999,#002899,#002699,#002599,#002399,#002199,#002099,#001e99,#001c99,#001b99,#001999,#001799,#001699,#001499,#001299,#041099,#0a0f99,#110d99,#170b99,#1e0999,#240899,#2b0699,#310499,#380299,#3f0099,#450099,#4c0099,#530099,#5a0099,#610099,#680099,#6f0099,#760099,#7d0099,#850099,#8c0099,#930099,#990097,#990090,#99008a,#990084,#99007f,#99007a,#990075,#990071,#99006c,#990069,#990065,#990062,#99005e,#99005b,#990058,#990056,#990053,#990051,#99004e,#99004c,#99004a,#990048,#990046,#990044,#990043,#990041,#99003f,#99003e)"></i><i class=r3 style="background:linear-gradient(90deg,#002f99,#002d99,#002c99,#002a99,#002899,#002799,#002599,#002499,#002299,#002199,#001f99,#001d99,#001c99,#001a99,#001899,#001799,#001599,#001399,#001199,#041099,#0a0e99,#100c99,#170a99,#1d0999,#230799,#2a0599,#300399,#370199,#3e0099,#440099,#4b0099,#520099,#590099,#5f0099,#660099,#6d0099,#740099,#7b0099,#830099,#8a0099,#910099,#980099,#990093,#99008c,#990086,#990081,#99007b,#990077,#990072,#99006e,#99006a,#990066,#990063,#990060,#99005d,#99005a,#990057,#990054,#990052,#990050,#99004d,#99004b,#990049,#990047,#990045,#990044,#990042,#990040,#99003f)"></i><i class=r3 style="background:linear-gradient(90deg,#002e99,#002c99,#002b99,#002999,#002899,#002699,#002499,#002399,#002199,#002099,#001e99,#001c99,#001b99,#001999,#001899,#001699,#001499,#001299,#001199,#030f99,#0a0d99,#100c99,#160a99,#1c0899,#230699,#290599,#300399,#360199,#3d0099,#430099,#4a0099,#510099,#570099,#5e0099,#650099,#6c0099,#730099,#7a0099,#810099,#880099,#8f0099,#960099,#990095,#99008e,#990088,#990082,#99007d,#990078,#990074,#990070,#99006c,#990068,#990064,#990061,#99005e,#99005b,#990058,#990056,#990053,#990051,#99004f,#99004c,#99004a,#990048,#990046,#990045,#990043,#990041,#990040)"></i><i class=r3 style="background:linear-gradient(90deg,#002d99,#002b99,#002a99,#002899,#002799,#002599,#002499,#002299,#002099,#001f99,#001d99,#001c99,#001a99,#001899,#001799,#001599,#001399,#001299,#001099,#030e99,#090d99,#0f0b99,#160999,#1c0799,#220699,#280499,#2f0299,#350099,#3c0099,#420099,#490099,#4f0099,#560099,#5d0099,#630099,#6a0099,#710099,#780099,#7f0099,#860099,#8d0099,#940099,#990097,#990090,#99008a,#990084,#99007f,#99007a,#990075,#990071,#99006d,#990069,#990066,#990062,#99005f,#99005c,#99005a,#990057,#990054,#990052,#990050,#99004d,#99004b,#990049,#990047,#990046,#990044,#990042,#990041)"></i><i class=r3 style="background:linear-gradient(90deg,#002c99,#002a99,#002999,#002799,#002699,#002499,#002399,#002199,#002099,#001e99,#001c99,#001b99,#001999,#001899,#001699,#001499,#001399,#001199,#000f99,#030e99,#090c99,#0f0a99,#150999,#1b0799,#210599,#280399,#2e0299,#340099,#3b0099,#410099,#480099,#4e0099,#550099,#5b0099,#620099,#690099,#6f0099,#760099,#7d0099,#840099,#8b0099,#920099,#990099,#990092,#99008c,#990086,#990081,#99007c,#990077,#990073,#99006f,#99006b,#990067,#990064,#990061,#99005e,#99005b,#990058,#990056,#990053,#990051,#99004f,#99004c,#99004a,#990048,#990047,#990045,#990043,#990042)"></i><i class=r3 style="background:linear-gradient(90deg,#002b99,#002999,#002899,#002699,#002599,#002399,#002299,#002099,#001f99,#001d99,#001c99,#001a99,#001899,#001799,#001599,#001499,#001299,#001099,#000f99,#020d99,#080b99,#0e0a99,#140899,#1b0699,#210599,#270399,#2d0199,#330099,#3a0099,#400099,#460099,#4d0099,#530099,#5a0099,#610099,#670099,#6e0099,#750099,#7b0099,#820099,#890099,#900099,#970099,#990094,#99008e,#990088,#990082,#99007d,#990079,#990074,#990070,#99006c,#990069,#990065,#990062,#99005f,#99005c,#990059,#990057,#990054,#990052,#990050,#99004d,#99004b,#990049,#990048,#990046,#990044,#990042)"></i><i class=r3 style="background:linear-gradient(90deg,#002a99,#002999,#002799,#002699,#002499,#002399,#002199,#002099,#001e99,#001c99,#001b99,#001999,#001899,#001699,#001599,#001399,#001199,#001099,#000e99,#020c99,#080b99,#0e0999,#140799,#1a0699,#200499,#260299,#2c0199,#330099,#390099,#3f0099,#450099,#4c0099,#520099,#590099,#5f0099,#660099,#6c0099,#730099,#7a0099,#800099,#870099,#8e0099,#950099,#990096,#990090,#99008a,#990084,#99007f,#99007a,#990076,#990072,#99006e,#99006a,#990067,#990063,#990060,#99005d,#99005b,#990058,#990055,#990053,#990051,#99004f,#99004c,#99004b,#990049,#990047,#990045,#990043)"></i><i class=r3 style="background:linear-gradient(90deg,#002999,#002899,#002699,#002599,#002399,#002299,#002099,#001f99,#001d99,#001c99,#001a99,#001999,#001799,#001599,#001499,#001299,#001199,#000f99,#000d99,#020c99,#080a99,#0e0899,#130799,#190599,#1f0399,#250299,#2c0099,#320099,#380099,#3e0099,#440099,#4b0099,#510099,#570099,#5e0099,#640099,#6b0099,#710099,#780099,#7f0099,#850099,#8c0099,#930099,#990098,#990092,#99008c,#990086,#990081,#99007c,#990077,#990073,#99006f,#99006c,#990068,#990065,#990062,#99005f,#99005c,#990059,#990057,#990054,#990052,#990050,#99004e,#99004c,#99004a,#990048,#990046,#990044)"></i><i class=r3 style="background:linear-gradient(90deg,#002899,#002799,#002599,#002499,#002299,#002199,#001f99,#001e99,#001c99,#001b99,#001999,#001899,#001699,#001599,#001399,#001299,#001099,#000e99,#000d99,#010b99,#070a99,#0d0899,#130699,#190599,#1f0399,#250199,#2b0099,#310099,#370099,#3d0099,#430099,#4a0099,#500099,#560099,#5c0099,#630099,#690099,#700099,#760099,#7d0099,#840099,#8a0099,#910099,#980099,#990094,#99008e,#990088,#990083,#99007e,#990079,#990075,#990071,#99006d,#990069,#990066,#990063,#990060,#99005d,#99005a,#990058,#990055,#990053,#990051,#99004f,#99004d,#99004b,#990049,#990047,#990045)"></i><i class=r3 style="background:linear-gradient(90deg,#002799,#002699,#002599,#002399,#002299,#002099,#001f99,#001d99,#001c99,#001a99,#001999,#001799,#001699,#001499,#001299,#001199,#000f99,#000e99,#000c99,#010b99,#070999,#0d0799,#120699,#180499,#1e0299,#240199,#2a0099,#300099,#360099,#3c0099,#420099,#480099,#4f0099,#550099,#5b0099,#610099,#680099,#6e0099,#750099,#7b0099,#820099,#880099,#8f0099,#960099,#990096,#99008f,#99008a,#990084,#99007f,#99007b,#990076,#990072,#99006e,#99006b,#990067,#990064,#990061,#99005e,#99005b,#990059,#990056,#990054,#990052,#990050,#99004e,#99004c,#99004a,#990048,#990046)"></i><i class=r3 style="background:linear-gradient(90deg,#002799,#002599,#002499,#002299,#002199,#001f99,#001e99,#001c99,#001b99,#001999,#001899,#001699,#001599,#001399,#001299,#001099,#000f99,#000d99,#000c99,#010a99,#070899,#0c0799,#120599,#180499,#1e0299,#230099,#290099,#2f0099,#350099,#3b0099,#410099,#470099,#4d0099,#540099,#5a0099,#600099,#660099,#6d0099,#730099,#7a0099,#800099,#870099,#8d0099,#940099,#990098,#990091,#99008c,#990086,#990081,#99007c,#990078,#990074,#990070,#99006c,#990069,#990065,#990062,#99005f,#99005d,#99005a,#990058,#990055,#990053,#990051,#99004f,#99004d,#99004b,#990049,#990047)"></i><i class=r3 style="background:linear-gradient(90deg,#002699,#002499,#002399,#002199,#002099,#001f99,#001d99,#001c99,#001a99,#001999,#001799,#001699,#001499,#001399,#001199,#001099,#000e99,#000d99,#000b99,#010999,#060899,#0c0699,#120599,#170399,#1d0199,#230099,#290099,#2e0099,#340099,#3a0099,#400099,#460099,#4c0099,#520099,#590099,#5f0099,#650099,#6b0099,#720099,#780099,#7e0099,#850099,#8b0099,#920099,#980099,#990093,#99008d,#990088,#990083,#99007e,#990079,#990075,#990071,#99006e,#99006a,#990067,#990064,#990061,#99005e,#99005b,#990059,#990056,#990054,#990052,#990050,#99004e,#99004c,#99004a,#990048)"></i><i class=r3 style="background:linear-gradient(90deg,#002599,#002499,#002299,#002199,#001f99,#001e99,#001c99,#001b99,#001a99,#001899,#001799,#001599,#001499,#001299,#001199,#000f99,#000e99,#000c99,#000a99,#000999,#060799,#0b0699,#110499,#170299,#1c0199,#220099,#280099,#2e0099,#340099,#390099,#3f0099,#450099,#4b0099,#510099,#570099,#5e0099,#640099,#6a0099,#700099,#760099,#7d0099,#830099,#890099,#900099,#960099,#990095,#99008f,#99008a,#990084,#990080,#99007b,#990077,#990073,#99006f,#99006b,#990068,#990065,#990062,#99005f,#99005c,#99005a,#990057,#990055,#990053,#990051,#99004f,#99004d,#99004b,#990049)"></i><i class=r3 style="background:linear-gradient(90deg,#002499,#002399,#002199,#002099,#001f99,#001d99,#001c99,#001a99,#001999,#001799,#001699,#001499,#001399,#001199,#001099,#000e99,#000d99,#000b99,#000a99,#000899,#060799,#0b0599,#110499,#160299,#1c0099,#220099,#270099,#2d0099,#330099,#390099,#3e0099,#440099,#4a0099,#500099,#560099,#5c0099,#620099,#680099,#6f0099,#750099,#7b0099,#810099,#880099,#8e0099,#940099,#990097,#990091,#99008b,#990086,#990081,#99007d,#990078,#990074,#990070,#99006d,#990069,#990066,#990063,#990060,#99005e,#99005b,#990058,#990056,#990054,#990052,#990050,#99004e,#99004c,#99004a)"></i><i class=r3 style="background:linear-gradient(90deg,#002399,#002299,#002199,#001f99,#001e99,#001c99,#001b99,#001a99,#001899,#001799,#001599,#001499,#001299,#001199,#000f99,#000e99,#000c99,#000b99,#000999,#000899,#050699,#0b0599,#100399,#160299,#1b0099,#210099,#270099,#2c0099,#320099,#380099,#3e0099,#430099,#490099,#4f0099,#550099,#5b0099,#610099,#670099,#6d0099,#730099,#790099,#800099,#860099,#8c0099,#930099,#990099,#990093,#99008d,#990088,#990083,#99007e,#99007a,#990076,#990072,#99006e,#99006b,#990068,#990064,#990062,#99005f,#99005c,#99005a,#990057,#990055,#990053,#990051,#99004f,#99004d,#99004b)"></i><i class=r3 style="background:linear-gradient(90deg,#002399,#002199,#002099,#001e99,#001d99,#001c99,#001a99,#001999,#001799,#001699,#001599,#001399,#001299,#001099,#000f99,#000d99,#000c99,#000a99,#000999,#000799,#050699,#0a0499,#100399,#150199,#1b0099,#200099,#260099,#2c0099,#310099,#370099,#3d0099,#420099,#480099,#4e0099,#540099,#5a0099,#600099,#660099,#6c0099,#720099,#780099,#7e0099,#840099,#8a0099,#910099,#970099,#990095,#99008f,#990089,#990084,#990080,#99007b,#990077,#990073,#990070,#99006c,#990069,#990066,#990063,#990060,#99005d,#99005b,#990058,#990056,#990054,#990052,#990050,#99004e,#99004c)"></i><i class=r3 style="background:linear-gradient(90deg,#002299,#002199,#001f99,#001e99,#001c99,#001b99,#001a99,#001899,#001799,#001599,#001499,#001399,#001199,#001099,#000e99,#000d99,#000b99,#000a99,#000899,#000799,#050599,#0a0499,#0f0299,#150199,#1a0099,#200099,#250099,#2b0099,#300099,#360099,#3c0099,#410099,#470099,#4d0099,#530099,#590099,#5f0099,#640099,#6a0099,#700099,#760099,#7d0099,#830099,#890099,#8f0099,#950099,#990097,#990091,#99008b,#990086,#990081,#99007d,#990079,#990075,#990071,#99006d,#99006a,#990067,#990064,#990061,#99005e,#99005c,#990059,#990057,#990055,#990053,#990051,#99004f,#99004d)"></i><i class=r3 style="background:linear-gradient(90deg,#002199,#002099,#001e99,#001d99,#001c99,#001a99,#001999,#001899,#001699,#001599,#001399,#001299,#001099,#000f99,#000e99,#000c99,#000b99,#000999,#000899,#000699,#040599,#0a0399,#0f0299,#140099,#1a0099,#1f0099,#250099,#2a0099,#300099,#350099,#3b0099,#410099,#460099,#4c0099,#520099,#570099,#5d0099,#630099,#690099,#6f0099,#750099,#7b0099,#810099,#870099,#8d0099,#930099,#990098,#990092,#99008d,#990088,#990083,#99007e,#99007a,#990076,#990072,#99006f,#99006b,#990068,#990065,#990062,#990060,#99005d,#99005a,#990058,#990056,#990054,#990052,#990050,#99004e)"></i><i class=r3 style="background:linear-gradient(90deg,#002099,#001f99,#001e99,#001c99,#001b99,#001a99,#001899,#001799,#001699,#001499,#001399,#001199,#001099,#000e99,#000d99,#000c99,#000a99,#000999,#000799,#000699,#040499,#090399,#0f0199,#140099,#190099,#1f0099,#240099,#2a0099,#2f0099,#350099,#3a0099,#400099,#450099,#4b0099,#510099,#560099,#5c0099,#620099,#680099,#6e0099,#730099,#790099,#7f0099,#850099,#8b0099,#920099,#980099,#990094,#99008f,#990089,#990085,#990080,#99007c,#990078,#990074,#990070,#99006d,#990069,#990066,#990064,#990061,#99005e,#99005c,#990059,#990057,#990055,#990053,#990051,#99004f)"></i><i class=r3 style="background:linear-gradient(90deg,#002099,#001e99,#001d99,#001c99,#001a99,#001999,#001899,#001699,#001599,#001499,#001299,#001199,#000f99,#000e99,#000c99,#000b99,#000a99,#000899,#000799,#000599,#040499,#090299,#0e0199,#130099,#190099,#1e0099,#230099,#290099,#2e0099,#340099,#390099,#3f0099,#440099,#4a0099,#500099,#550099,#5b0099,#610099,#660099,#6c0099,#720099,#780099,#7e0099,#840099,#8a0099,#900099,#960099,#990096,#990090,#99008b,#990086,#990081,#99007d,#990079,#990075,#990071,#99006e,#99006b,#990068,#990065,#990062,#99005f,#99005d,#99005a,#990058,#990056,#990054,#990052,#990050)"></i><i class=r3 style="background:linear-gradient(90deg,#001f99,#001e99,#001c99,#001b99,#001a99,#001899,#001799,#001699,#001499,#001399,#001299,#001099,#000f99,#000d99,#000c99,#000a99,#000999,#000899,#000699,#000599,#030399,#090299,#0e0099,#130099,#180099,#1e0099,#230099,#280099,#2e0099,#330099,#380099,#3e0099,#430099,#490099,#4f0099,#540099,#5a0099,#5f0099,#650099,#6b0099,#710099,#760099,#7c0099,#820099,#880099,#8e0099,#940099,#990098,#990092,#99008d,#990088,#990083,#99007f,#99007a,#990077,#990073,#99006f,#99006c,#990069,#990066,#990063,#990060,#99005e,#99005b,#990059,#990057,#990055,#990053,#990051)"></i><i class=r3 style="background:linear-gradient(90deg,#001e99,#001d99,#001c99,#001a99,#001999,#001899,#001699,#001599,#001499,#001299,#001199,#001099,#000e99,#000d99,#000b99,#000a99,#000999,#000799,#000699,#000499,#030399,#080199,#0d0099,#130099,#180099,#1d0099,#220099,#280099,#2d0099,#320099,#380099,#3d0099,#420099,#480099,#4d0099,#530099,#590099,#5e0099,#640099,#6a0099,#6f0099,#750099,#7b0099,#810099,#870099,#8c0099,#920099,#980099,#990094,#99008e,#990089,#990085,#990080,#99007c,#990078,#990074,#990071,#99006d,#99006a,#990067,#990064,#990062,#99005f,#99005c,#99005a,#990058,#990056,#990054,#990052)"></i><i class=r3 style="background:linear-gradient(90deg,#001e99,#001c99,#001b99,#001a99,#001899,#001799,#001699,#001499,#001399,#001299,#001099,#000f99,#000e99,#000c99,#000b99,#000999,#000899,#000799,#000599,#000499,#030299,#080199,#0d0099,#120099,#170099,#1d0099,#220099,#270099,#2c0099,#320099,#370099,#3c0099,#420099,#470099,#4c0099,#520099,#580099,#5d0099,#630099,#680099,#6e0099,#740099,#790099,#7f0099,#850099,#8b0099,#910099,#970099,#990096,#990090,#99008b,#990086,#990082,#99007d,#990079,#990076,#990072,#99006f,#99006b,#990068,#990065,#990063,#990060,#99005e,#99005b,#990059,#990057,#990055,#990053)"></i><i class=r3 style="background:linear-gradient(90deg,#001d99,#001c99,#001a99,#001999,#001899,#001799,#001599,#001499,#001399,#001199,#001099,#000e99,#000d99,#000c99,#000a99,#000999,#000899,#000699,#000599,#000399,#030299,#080099,#0d0099,#120099,#170099,#1c0099,#210099,#260099,#2c0099,#310099,#360099,#3b0099,#410099,#460099,#4c0099,#510099,#560099,#5c0099,#610099,#670099,#6d0099,#720099,#780099,#7e0099,#830099,#890099,#8f0099,#950099,#990097,#990092,#99008d,#990088,#990083,#99007f,#99007b,#990077,#990073,#990070,#99006d,#99006a,#990067,#990064,#990061,#99005f,#99005c,#99005a,#990058,#990056,#990053)"></i><i class=r3 style="background:linear-gradient(90deg,#001c99,#001b99,#001a99,#001999,#001799,#001699,#001599,#001399,#001299,#001199,#000f99,#000e99,#000d99,#000b99,#000a99,#000899,#000799,#000699,#000499,#000399,#020199,#070099,#0c0099,#110099,#160099,#1c0099,#210099,#260099,#2b0099,#300099,#350099,#3b0099,#400099,#450099,#4b0099,#500099,#550099,#5b0099,#600099,#660099,#6b0099,#710099,#770099,#7c0099,#820099,#880099,#8d0099,#930099,#990099,#990093,#99008e,#990089,#990085,#990080,#99007c,#990078,#990075,#990071,#99006e,#99006b,#990068,#990065,#990062,#990060,#99005d,#99005b,#990059,#990056,#990054)"></i><i class=r3 style="background:linear-gradient(90deg,#001c99,#001a99,#001999,#001899,#001799,#001599,#001499,#001399,#001199,#001099,#000f99,#000d99,#000c99,#000b99,#000999,#000899,#000799,#000599,#000499,#000299,#020199,#070099,#0c0099,#110099,#160099,#1b0099,#200099,#250099,#2a0099,#2f0099,#350099,#3a0099,#3f0099,#440099,#4a0099,#4f0099,#540099,#5a0099,#5f0099,#650099,#6a0099,#700099,#750099,#7b0099,#800099,#860099,#8c0099,#910099,#970099,#990095,#990090,#99008b,#990086,#990082,#99007e,#99007a,#990076,#990072,#99006f,#99006c,#990069,#990066,#990063,#990061,#99005e,#99005c,#99005a,#990057,#990055)"></i><i class=r3 style="background:linear-gradient(90deg,#001b99,#001a99,#001999,#001799,#001699,#001599,#001399,#001299,#001199,#001099,#000e99,#000d99,#000c99,#000a99,#000999,#000899,#000699,#000599,#000399,#000299,#020199,#070099,#0c0099,#110099,#160099,#1b0099,#200099,#250099,#2a0099,#2f0099,#340099,#390099,#3e0099,#430099,#490099,#4e0099,#530099,#590099,#5e0099,#630099,#690099,#6e0099,#740099,#790099,#7f0099,#840099,#8a0099,#900099,#950099,#990097,#990091,#99008c,#990088,#990083,#99007f,#99007b,#990077,#990074,#990070,#99006d,#99006a,#990067,#990064,#990062,#99005f,#99005d,#99005b,#990058,#990056)"></i><i class=r3 style="background:linear-gradient(90deg,#001b99,#001999,#001899,#001799,#001599,#001499,#001399,#001299,#001099,#000f99,#000e99,#000c99,#000b99,#000a99,#000899,#000799,#000699,#000499,#000399,#000299,#020099,#060099,#0b0099,#100099,#150099,#1a0099,#1f0099,#240099,#290099,#2e0099,#330099,#380099,#3d0099,#430099,#480099,#4d0099,#520099,#580099,#5d0099,#620099,#680099,#6d0099,#720099,#780099,#7d0099,#830099,#890099,#8e0099,#940099,#990099,#990093,#99008e,#990089,#990085,#990080,#99007c,#990079,#990075,#990072,#99006e,#99006b,#990068,#990066,#990063,#990060,#99005e,#99005c,#990059,#990057)"></i><i class=r3 style="background:linear-gradient(90deg,#001a99,#001999,#001799,#001699,#001599,#001499,#001299,#001199,#001099,#000f99,#000d99,#000c99,#000b99,#000999,#000899,#000799,#000599,#000499,#000399,#000199,#010099,#060099,#0b0099,#100099,#150099,#1a0099,#1f0099,#230099,#280099,#2d0099,#320099,#380099,#3d0099,#420099,#470099,#4c0099,#510099,#570099,#5c0099,#610099,#660099,#6c0099,#710099,#770099,#7c0099,#820099,#870099,#8d0099,#920099,#980099,#990095,#990090,#99008b,#990086,#990082,#99007e,#99007a,#990076,#990073,#990070,#99006c,#99006a,#990067,#990064,#990061,#99005f,#99005d,#99005a,#990058)"></i><i class=r3 style="background:linear-gradient(90deg,#001999,#001899,#001799,#001699,#001499,#001399,#001299,#001199,#000f99,#000e99,#000d99,#000b99,#000a99,#000999,#000799,#000699,#000599,#000399,#000299,#000199,#010099,#060099,#0b0099,#0f0099,#140099,#190099,#1e0099,#230099,#280099,#2d0099,#320099,#370099,#3c0099,#410099,#460099,#4b0099,#500099,#550099,#5b0099,#600099,#650099,#6b0099,#700099,#750099,#7b0099,#800099,#860099,#8b0099,#910099,#960099,#990096,#990091,#99008c,#990088,#990083,#99007f,#99007b,#990078,#990074,#990071,#99006e,#99006b,#990068,#990065,#990063,#990060,#99005e,#99005b,#990059)"></i><i class=r3 style="background:linear-gradient(90deg,#001999,#001899,#001699,#001599,#001499,#001399,#001199,#001099,#000f99,#000d99,#000c99,#000b99,#000a99,#000899,#000799,#000699,#000499,#000399,#000299,#000099,#010099,#060099,#0a0099,#0f0099,#140099,#190099,#1e0099,#220099,#270099,#2c0099,#310099,#360099,#3b0099,#400099,#450099,#4a0099,#4f0099,#540099,#5a0099,#5f0099,#640099,#690099,#6f0099,#740099,#790099,#7f0099,#840099,#890099,#8f0099,#940099,#990098,#990093,#99008e,#990089,#990085,#990081,#99007d,#990079,#990075,#990072,#99006f,#99006c,#990069,#990066,#990064,#990061,#99005f,#99005c,#99005a)"></i><i class=r3 style="background:linear-gradient(90deg,#001899,#001799,#001699,#001599,#001399,#001299,#001199,#001099,#000e99,#000d99,#000c99,#000a99,#000999,#000899,#000799,#000599,#000499,#000399,#000199,#000099,#010099,#050099,#0a0099,#0f0099,#130099,#180099,#1d0099,#220099,#270099,#2c0099,#300099,#350099,#3a0099,#3f0099,#440099,#490099,#4e0099,#540099,#590099,#5e0099,#630099,#680099,#6d0099,#730099,#780099,#7d0099,#830099,#880099,#8d0099,#930099,#980099,#990094,#99008f,#99008b,#990086,#990082,#99007e,#99007a,#990077,#990073,#990070,#99006d,#99006a,#990067,#990065,#990062,#990060,#99005d,#99005b)"></i><i class=r3 style="background:linear-gradient(90deg,#001899,#001699,#001599,#001499,#001399,#001299,#001099,#000f99,#000e99,#000d99,#000b99,#000a99,#000999,#000799,#000699,#000599,#000499,#000299,#000199,#000099,#000099,#050099,#0a0099,#0e0099,#130099,#180099,#1d0099,#210099,#260099,#2b0099,#300099,#350099,#3a0099,#3f0099,#430099,#480099,#4d0099,#530099,#580099,#5d0099,#620099,#670099,#6c0099,#710099,#770099,#7c0099,#810099,#870099,#8c0099,#910099,#970099,#990096,#990091,#99008c,#990088,#990083,#99007f,#99007c,#990078,#990075,#990071,#99006e,#99006b,#990068,#990066,#990063,#990061,#99005e,#99005c)"></i><i class=r3 style="background:linear-gradient(90deg,#001799,#001699,#001599,#001399,#001299,#001199,#001099,#000f99,#000d99,#000c99,#000b99,#000a99,#000899,#000799,#000699,#000499,#000399,#000299,#000099,#000099,#000099,#050099,#090099,#0e0099,#130099,#170099,#1c0099,#210099,#260099,#2a0099,#2f0099,#340099,#390099,#3e0099,#430099,#480099,#4d0099,#520099,#570099,#5c0099,#610099,#660099,#6b0099,#700099,#750099,#7b0099,#800099,#850099,#8a0099,#900099,#950099,#990098,#990092,#99008e,#990089,#990085,#990081,#99007d,#990079,#990076,#990072,#99006f,#99006c,#99006a,#990067,#990064,#990062,#99005f,#99005d)"></i><i class=r3 style="background:linear-gradient(90deg,#001799,#001599,#001499,#001399,#001299,#001099,#000f99,#000e99,#000d99,#000c99,#000a99,#000999,#000899,#000799,#000599,#000499,#000399,#000199,#000099,#000099,#000099,#050099,#090099,#0e0099,#120099,#170099,#1c0099,#200099,#250099,#2a0099,#2f0099,#330099,#380099,#3d0099,#420099,#470099,#4c0099,#510099,#560099,#5b0099,#600099,#650099,#6a0099,#6f0099,#740099,#790099,#7e0099,#840099,#890099,#8e0099,#940099,#990099,#990094,#99008f,#99008a,#990086,#990082,#99007e,#99007a,#990077,#990074,#990071,#99006e,#99006b,#990068,#990065,#990063,#990060,#99005e)"></i><i class=r3 style="background:linear-gradient(90deg,#001699,#001599,#001499,#001299,#001199,#001099,#000f99,#000e99,#000c99,#000b99,#000a99,#000999,#000799,#000699,#000599,#000499,#000299,#000199,#000099,#000099,#000099,#040099,#090099,#0d0099,#120099,#170099,#1b0099,#200099,#250099,#290099,#2e0099,#330099,#370099,#3c0099,#410099,#460099,#4b0099,#500099,#550099,#5a0099,#5f0099,#640099,#690099,#6e0099,#730099,#780099,#7d0099,#820099,#870099,#8d0099,#920099,#970099,#990096,#990091,#99008c,#990088,#990083,#99007f,#99007c,#990078,#990075,#990072,#99006f,#99006c,#990069,#990066,#990064,#990061,#99005f)"></i><i class=r3 style="background:linear-gradient(90deg,#001599,#001499,#001399,#001299,#001199,#000f99,#000e99,#000d99,#000c99,#000b99,#000999,#000899,#000799,#000699,#000499,#000399,#000299,#000199,#000099,#000099,#000099,#040099,#090099,#0d0099,#120099,#160099,#1b0099,#1f0099,#240099,#290099,#2d0099,#320099,#370099,#3c0099,#400099,#450099,#4a0099,#4f0099,#540099,#590099,#5e0099,#630099,#680099,#6d0099,#720099,#770099,#7c0099,#810099,#860099,#8b0099,#900099,#960099,#990097,#990092,#99008d,#990089,#990085,#990081,#99007d,#990079,#990076,#990073,#990070,#99006d,#99006a,#990067,#990065,#990062,#990060)"></i><i class=r3 style="background:linear-gradient(90deg,#001599,#001499,#001399,#001199,#001099,#000f99,#000e99,#000d99,#000b99,#000a99,#000999,#000899,#000799,#000599,#000499,#000399,#000299,#000099,#000099,#000099,#000099,#040099,#080099,#0d0099,#110099,#160099,#1a0099,#1f0099,#230099,#280099,#2d0099,#310099,#360099,#3b0099,#400099,#440099,#490099,#4e0099,#530099,#580099,#5d0099,#610099,#660099,#6b0099,#700099,#750099,#7a0099,#800099,#850099,#8a0099,#8f0099,#940099,#990099,#990094,#99008f,#99008a,#990086,#990082,#99007e,#99007b,#990077,#990074,#990071,#99006e,#99006b,#990069,#990066,#990064,#990061)"></i><i class=r3 style="background:linear-gradient(90deg,#001499,#001399,#001299,#001199,#001099,#000f99,#000d99,#000c99,#000b99,#000a99,#000999,#000799,#000699,#000599,#000499,#000299,#000199,#000099,#000099,#000099,#000099,#040099,#080099,#0c0099,#110099,#150099,#1a0099,#1e0099,#230099,#280099,#2c0099,#310099,#350099,#3a0099,#3f0099,#440099,#480099,#4d0099,#520099,#570099,#5c0099,#600099,#650099,#6a0099,#6f0099,#740099,#790099,#7e0099,#830099,#880099,#8d0099,#930099,#980099,#990095,#990090,#99008c,#990087,#990083,#990080,#99007c,#990079,#990075,#990072,#99006f,#99006c,#99006a,#990067,#990065,#990062)"></i><i class=r3 style="background:linear-gradient(90deg,#001499,#001399,#001299,#001099,#000f99,#000e99,#000d99,#000c99,#000b99,#000999,#000899,#000799,#000699,#000499,#000399,#000299,#000199,#000099,#000099,#000099,#000099,#030099,#080099,#0c0099,#110099,#150099,#190099,#1e0099,#220099,#270099,#2c0099,#300099,#350099,#390099,#3e0099,#430099,#470099,#4c0099,#510099,#560099,#5b0099,#5f0099,#640099,#690099,#6e0099,#730099,#780099,#7d0099,#820099,#870099,#8c0099,#910099,#960099,#990097,#990092,#99008d,#990089,#990085,#990081,#99007d,#99007a,#990076,#990073,#990070,#99006d,#99006b,#990068,#990066,#990063)"></i><i class=r3 style="background:linear-gradient(90deg,#001399,#001299,#001199,#001099,#000f99,#000e99,#000c99,#000b99,#000a99,#000999,#000899,#000699,#000599,#000499,#000399,#000299,#000099,#000099,#000099,#000099,#000099,#030099,#070099,#0c0099,#100099,#150099,#190099,#1d0099,#220099,#260099,#2b0099,#300099,#340099,#390099,#3d0099,#420099,#470099,#4b0099,#500099,#550099,#5a0099,#5e0099,#630099,#680099,#6d0099,#720099,#770099,#7c0099,#810099,#860099,#8b0099,#900099,#950099,#990098,#990093,#99008f,#99008a,#990086,#990082,#99007f,#99007b,#990078,#990074,#990071,#99006f,#99006c,#990069,#990067,#990064)"></i><i class=r3 style="background:linear-gradient(90deg,#001399,#001299,#001199,#000f99,#000e99,#000d99,#000c99,#000b99,#000a99,#000899,#000799,#000699,#000599,#000499,#000299,#000199,#000099,#000099,#000099,#000099,#000099,#030099,#070099,#0b0099,#100099,#140099,#190099,#1d0099,#210099,#260099,#2a0099,#2f0099,#330099,#380099,#3d0099,#410099,#460099,#4b0099,#4f0099,#540099,#590099,#5d0099,#620099,#670099,#6c0099,#710099,#750099,#7a0099,#7f0099,#840099,#890099,#8e0099,#930099,#980099,#990095,#990090,#99008c,#990087,#990084,#990080,#99007c,#990079,#990076,#990073,#990070,#99006d,#99006a,#990068,#990065)"></i><i class=r3 style="background:linear-gradient(90deg,#001299,#001199,#001099,#000f99,#000e99,#000d99,#000c99,#000a99,#000999,#000899,#000799,#000699,#000499,#000399,#000299,#000199,#000099,#000099,#000099,#000099,#000099,#030099,#070099,#0b0099,#100099,#140099,#180099,#1d0099,#210099,#250099,#2a0099,#2e0099,#330099,#370099,#3c0099,#410099,#450099,#4a0099,#4e0099,#530099,#580099,#5c0099,#610099,#660099,#6b0099,#6f0099,#740099,#790099,#7e0099,#830099,#880099,#8d0099,#920099,#970099,#990096,#990091,#99008d,#990089,#990085,#990081,#99007d,#99007a,#990077,#990074,#990071,#99006e,#99006b,#990069,#990066)"></i><i class=r3 style="background:linear-gradient(90deg,#001299,#001199,#001099,#000f99,#000d99,#000c99,#000b99,#000a99,#000999,#000899,#000699,#000599,#000499,#000399,#000299,#000199,#000099,#000099,#000099,#000099,#000099,#020099,#070099,#0b0099,#0f0099,#130099,#180099,#1c0099,#210099,#250099,#290099,#2e0099,#320099,#370099,#3b0099,#400099,#440099,#490099,#4d0099,#520099,#570099,#5b0099,#600099,#650099,#6a0099,#6e0099,#730099,#780099,#7d0099,#820099,#870099,#8b0099,#900099,#950099,#990098,#990093,#99008e,#99008a,#990086,#990082,#99007f,#99007b,#990078,#990075,#990072,#99006f,#99006c,#99006a,#990067)"></i><i class=r3 style="background:linear-gradient(90deg,#001199,#001099,#000f99,#000e99,#000d99,#000c99,#000b99,#000a99,#000899,#000799,#000699,#000599,#000499,#000399,#000199,#000099,#000099,#000099,#000099,#000099,#000099,#020099,#060099,#0b0099,#0f0099,#130099,#170099,#1c0099,#200099,#240099,#290099,#2d0099,#320099,#360099,#3b0099,#3f0099,#440099,#480099,#4d0099,#510099,#560099,#5a0099,#5f0099,#640099,#680099,#6d0099,#720099,#770099,#7c0099,#800099,#850099,#8a0099,#8f0099,#940099,#990099,#990094,#990090,#99008c,#990087,#990084,#990080,#99007c,#990079,#990076,#990073,#990070,#99006d,#99006b,#990068)"></i><i class=r3 style="background:linear-gradient(90deg,#001199,#001099,#000f99,#000e99,#000d99,#000b99,#000a99,#000999,#000899,#000799,#000699,#000599,#000399,#000299,#000199,#000099,#000099,#000099,#000099,#000099,#000099,#020099,#060099,#0a0099,#0f0099,#130099,#170099,#1b0099,#200099,#240099,#280099,#2d0099,#310099,#350099,#3a0099,#3e0099,#430099,#470099,#4c0099,#500099,#550099,#5a0099,#5e0099,#630099,#670099,#6c0099,#710099,#760099,#7a0099,#7f0099,#840099,#890099,#8e0099,#920099,#970099,#990096,#990091,#99008d,#990089,#990085,#990081,#99007e,#99007a,#990077,#990074,#990071,#99006e,#99006c,#990069)"></i><i class=r3 style="background:linear-gradient(90deg,#001199,#000f99,#000e99,#000d99,#000c99,#000b99,#000a99,#000999,#000899,#000699,#000599,#000499,#000399,#000299,#000199,#000099,#000099,#000099,#000099,#000099,#000099,#020099,#060099,#0a0099,#0e0099,#120099,#170099,#1b0099,#1f0099,#230099,#280099,#2c0099,#300099,#350099,#390099,#3e0099,#420099,#470099,#4b0099,#500099,#540099,#590099,#5d0099,#620099,#660099,#6b0099,#700099,#740099,#790099,#7e0099,#830099,#870099,#8c0099,#910099,#960099,#990097,#990093,#99008e,#99008a,#990086,#990082,#99007f,#99007b,#990078,#990075,#990072,#99006f,#99006d,#99006a)"></i><i class=r3 style="background:linear-gradient(90deg,#001099,#000f99,#000e99,#000d99,#000c99,#000b99,#000999,#000899,#000799,#000699,#000599,#000499,#000399,#000199,#000099,#000099,#000099,#000099,#000099,#000099,#000099,#020099,#060099,#0a0099,#0e0099,#120099,#160099,#1b0099,#1f0099,#230099,#270099,#2c0099,#300099,#340099,#390099,#3d0099,#410099,#460099,#4a0099,#4f0099,#530099,#580099,#5c0099,#610099,#650099,#6a0099,#6f0099,#730099,#780099,#7d0099,#810099,#860099,#8b0099,#900099,#940099,#990099,#990094,#990090,#99008b,#990087,#990084,#990080,#99007d,#990079,#990076,#990073,#990070,#99006e,#99006b)"></i><i class=r3 style="background:linear-gradient(90deg,#001099,#000f99,#000d99,#000c99,#000b99,#000a99,#000999,#000899,#000799,#000699,#000599,#000399,#000299,#000199,#000099,#000099,#000099,#000099,#000099,#000099,#000099,#010099,#050099,#090099,#0e0099,#120099,#160099,#1a0099,#1e0099,#230099,#270099,#2b0099,#2f0099,#340099,#380099,#3c0099,#410099,#450099,#490099,#4e0099,#520099,#570099,#5b0099,#600099,#640099,#690099,#6e0099,#720099,#770099,#7b0099,#800099,#850099,#8a0099,#8e0099,#930099,#980099,#990095,#990091,#99008d,#990089,#990085,#990081,#99007e,#99007b,#990077,#990074,#990072,#99006f,#99006c)"></i><i class=r3 style="background:linear-gradient(90deg,#000f99,#000e99,#000d99,#000c99,#000b99,#000a99,#000999,#000899,#000699,#000599,#000499,#000399,#000299,#000199,#000099,#000099,#000099,#000099,#000099,#000099,#000099,#010099,#050099,#090099,#0d0099,#110099,#160099,#1a0099,#1e0099,#220099,#260099,#2b0099,#2f0099,#330099,#370099,#3c0099,#400099,#440099,#490099,#4d0099,#520099,#560099,#5a0099,#5f0099,#630099,#680099,#6c0099,#710099,#760099,#7a0099,#7f0099,#840099,#880099,#8d0099,#920099,#960099,#990097,#990092,#99008e,#99008a,#990086,#990082,#99007f,#99007c,#990078,#990075,#990073,#990070,#99006d)"></i><i class=r3 style="background:linear-gradient(90deg,#000f99,#000e99,#000d99,#000c99,#000a99,#000999,#000899,#000799,#000699,#000599,#000499,#000399,#000299,#000099,#000099,#000099,#000099,#000099,#000099,#000099,#000099,#010099,#050099,#090099,#0d0099,#110099,#150099,#190099,#1d0099,#220099,#260099,#2a0099,#2e0099,#320099,#370099,#3b0099,#3f0099,#440099,#480099,#4c0099,#510099,#550099,#5a0099,#5e0099,#620099,#670099,#6b0099,#700099,#740099,#790099,#7e0099,#820099,#870099,#8c0099,#900099,#950099,#990098,#990094,#99008f,#99008b,#990087,#990084,#990080,#99007d,#99007a,#990077,#990074,#990071,#99006e)"></i><i class=r3 style="background:linear-gradient(90deg,#000e99,#000d99,#000c99,#000b99,#000a99,#000999,#000899,#000799,#000699,#000599,#000399,#000299,#000199,#000099,#000099,#000099,#000099,#000099,#000099,#000099,#000099,#010099,#050099,#090099,#0d0099,#110099,#150099,#190099,#1d0099,#210099,#250099,#290099,#2e0099,#320099,#360099,#3a0099,#3f0099,#430099,#470099,#4c0099,#500099,#540099,#590099,#5d0099,#610099,#660099,#6a0099,#6f0099,#730099,#780099,#7c0099,#810099,#860099,#8a0099,#8f0099,#940099,#980099,#990095,#990091,#99008d,#990089,#990085,#990081,#99007e,#99007b,#990078,#990075,#990072,#99006f)"></i><i class=r3 style="background:linear-gradient(90deg,#000e99,#000d99,#000c99,#000b99,#000a99,#000999,#000899,#000699,#000599,#000499,#000399,#000299,#000199,#000099,#000099,#000099,#000099,#000099,#000099,#000099,#000099,#000099,#040099,#080099,#0c0099,#100099,#150099,#190099,#1d0099,#210099,#250099,#290099,#2d0099,#310099,#360099,#3a0099,#3e0099,#420099,#460099,#4b0099,#4f0099,#530099,#580099,#5c0099,#610099,#650099,#690099,#6e0099,#720099,#770099,#7b0099,#800099,#840099,#890099,#8e0099,#920099,#970099,#990096,#990092,#99008e,#99008a,#990086,#990083,#99007f,#99007c,#990079,#990076,#990073,#990070)"></i><i class=r3 style="background:linear-gradient(90deg,#000e99,#000c99,#000b99,#000a99,#000999,#000899,#000799,#000699,#000599,#000499,#000399,#000299,#000199,#000099,#000099,#000099,#000099,#000099,#000099,#000099,#000099,#000099,#040099,#080099,#0c0099,#100099,#140099,#180099,#1c0099,#200099,#240099,#280099,#2d0099,#310099,#350099,#390099,#3d0099,#420099,#460099,#4a0099,#4e0099,#530099,#570099,#5b0099,#600099,#640099,#680099,#6d0099,#710099,#760099,#7a0099,#7f0099,#830099,#880099,#8c0099,#910099,#960099,#990098,#990093,#99008f,#99008b,#990087,#990084,#990080,#99007d,#99007a,#990077,#990074,#990071)"></i><i class=r3 style="background:linear-gradient(90deg,#000d99,#000c99,#000b99,#000a99,#000999,#000899,#000799,#000699,#000599,#000499,#000299,#000199,#000099,#000099,#000099,#000099,#000099,#000099,#000099,#000099,#000099,#000099,#040099,#080099,#0c0099,#100099,#140099,#180099,#1c0099,#200099,#240099,#280099,#2c0099,#300099,#340099,#380099,#3d0099,#410099,#450099,#490099,#4d0099,#520099,#560099,#5a0099,#5f0099,#630099,#670099,#6c0099,#700099,#750099,#790099,#7e0099,#820099,#870099,#8b0099,#900099,#940099,#990099,#990095,#990090,#99008c,#990089,#990085,#990081,#99007e,#99007b,#990078,#990075,#990072)"></i><i class=r3 style="background:linear-gradient(90deg,#000d99,#000c99,#000b99,#000a99,#000999,#000799,#000699,#000599,#000499,#000399,#000299,#000199,#000099,#000099,#000099,#000099,#000099,#000099,#000099,#000099,#000099,#000099,#040099,#080099,#0c0099,#100099,#130099,#170099,#1b0099,#1f0099,#230099,#280099,#2c0099,#300099,#340099,#380099,#3c0099,#400099,#440099,#490099,#4d0099,#510099,#550099,#590099,#5e0099,#620099,#660099,#6b0099,#6f0099,#740099,#780099,#7c0099,#810099,#850099,#8a0099,#8e0099,#930099,#970099,#990096,#990092,#99008e,#99008a,#990086,#990083,#99007f,#99007c,#990079,#990076,#990073)"></i><i class=r3 style="background:linear-gradient(90deg,#000c99,#000b99,#000a99,#000999,#000899,#000799,#000699,#000599,#000499,#000399,#000299,#000199,#000099,#000099,#000099,#000099,#000099,#000099,#000099,#000099,#000099,#000099,#040099,#070099,#0b0099,#0f0099,#130099,#170099,#1b0099,#1f0099,#230099,#270099,#2b0099,#2f0099,#330099,#370099,#3b0099,#3f0099,#440099,#480099,#4c0099,#500099,#540099,#590099,#5d0099,#610099,#650099,#6a0099,#6e0099,#720099,#770099,#7b0099,#800099,#840099,#890099,#8d0099,#920099,#960099,#990097,#990093,#99008f,#99008b,#990087,#990084,#990080,#99007d,#99007a,#990077,#990074)"></i><i class=r3 style="background:linear-gradient(90deg,#000c99,#000b99,#000a99,#000999,#000899,#000799,#000699,#000599,#000499,#000299,#000199,#000099,#000099,#000099,#000099,#000099,#000099,#000099,#000099,#000099,#000099,#000099,#030099,#070099,#0b0099,#0f0099,#130099,#170099,#1b0099,#1f0099,#230099,#270099,#2b0099,#2f0099,#330099,#370099,#3b0099,#3f0099,#430099,#470099,#4b0099,#4f0099,#540099,#580099,#5c0099,#600099,#650099,#690099,#6d0099,#710099,#760099,#7a0099,#7e0099,#830099,#870099,#8c0099,#900099,#950099,#990099,#990094,#990090,#99008c,#990089,#990085,#990082,#99007e,#99007b,#990078,#990075)"></i><i class=r3 style="background:linear-gradient(90deg,#000c99,#000b99,#000999,#000899,#000799,#000699,#000599,#000499,#000399,#000299,#000199,#000099,#000099,#000099,#000099,#000099,#000099,#000099,#000099,#000099,#000099,#000099,#030099,#070099,#0b0099,#0f0099,#130099,#160099,#1a0099,#1e0099,#220099,#260099,#2a0099,#2e0099,#320099,#360099,#3a0099,#3e0099,#420099,#460099,#4a0099,#4f0099,#530099,#570099,#5b0099,#5f0099,#640099,#680099,#6c0099,#700099,#750099,#790099,#7d0099,#820099,#860099,#8b0099,#8f0099,#930099,#980099,#990096,#990092,#99008e,#99008a,#990086,#990083,#99007f,#99007c,#990079,#990076)"></i><i class=r3 style="background:linear-gradient(90deg,#000b99,#000a99,#000999,#000899,#000799,#000699,#000599,#000499,#000399,#000299,#000199,#000099,#000099,#000099,#000099,#000099,#000099,#000099,#000099,#000099,#000099,#000099,#030099,#070099,#0b0099,#0e0099,#120099,#160099,#1a0099,#1e0099,#220099,#260099,#2a0099,#2e0099,#320099,#360099,#3a0099,#3e0099,#420099,#460099,#4a0099,#4e0099,#520099,#560099,#5a0099,#5e0099,#630099,#670099,#6b0099,#6f0099,#740099,#780099,#7c0099,#810099,#850099,#890099,#8e0099,#920099,#970099,#990097,#990093,#99008f,#99008b,#990087,#990084,#990081,#99007d,#99007a,#990077)"></i><i class=r3 style="background:linear-gradient(90deg,#000b99,#000a99,#000999,#000899,#000799,#000699,#000599,#000499,#000399,#000299,#000099,#000099,#000099,#000099,#000099,#000099,#000099,#000099,#000099,#000099,#000099,#000099,#030099,#070099,#0a0099,#0e0099,#120099,#160099,#1a0099,#1d0099,#210099,#250099,#290099,#2d0099,#310099,#350099,#390099,#3d0099,#410099,#450099,#490099,#4d0099,#510099,#550099,#590099,#5e0099,#620099,#660099,#6a0099,#6e0099,#730099,#770099,#7b0099,#7f0099,#840099,#880099,#8c0099,#910099,#950099,#990098,#990094,#990090,#99008c,#990088,#990085,#990082,#99007e,#99007b,#990078)"></i><i class=r3 style="background:linear-gradient(90deg,#000a99,#000999,#000899,#000799,#000699,#000599,#000499,#000399,#000299,#000199,#000099,#000099,#000099,#000099,#000099,#000099,#000099,#000099,#000099,#000099,#000099,#000099,#030099,#060099,#0a0099,#0e0099,#120099,#150099,#190099,#1d0099,#210099,#250099,#290099,#2d0099,#300099,#340099,#380099,#3c0099,#400099,#440099,#480099,#4c0099,#500099,#550099,#590099,#5d0099,#610099,#650099,#690099,#6d0099,#720099,#760099,#7a0099,#7e0099,#830099,#870099,#8b0099,#900099,#940099,#980099,#990095,#990091,#99008d,#99008a,#990086,#990083,#990080,#99007c,#99007a)"></i><i class=r3 style="background:linear-gradient(90deg,#000a99,#000999,#000899,#000799,#000699,#000599,#000499,#000399,#000299,#000199,#000099,#000099,#000099,#000099,#000099,#000099,#000099,#000099,#000099,#000099,#000099,#000099,#020099,#060099,#0a0099,#0e0099,#110099,#150099,#190099,#1d0099,#200099,#240099,#280099,#2c0099,#300099,#340099,#380099,#3c0099,#400099,#440099,#480099,#4c0099,#500099,#540099,#580099,#5c0099,#600099,#640099,#680099,#6c0099,#710099,#750099,#790099,#7d0099,#810099,#860099,#8a0099,#8e0099,#930099,#970099,#990097,#990093,#99008f,#99008b,#990087,#990084,#990081,#99007e,#99007b)"></i><i class=r3 style="background:linear-gradient(90deg,#000a99,#000999,#000899,#000799,#000699,#000599,#000499,#000399,#000299,#000199,#000099,#000099,#000099,#000099,#000099,#000099,#000099,#000099,#000099,#000099,#000099,#000099,#020099,#060099,#0a0099,#0d0099,#110099,#150099,#190099,#1c0099,#200099,#240099,#280099,#2c0099,#2f0099,#330099,#370099,#3b0099,#3f0099,#430099,#470099,#4b0099,#4f0099,#530099,#570099,#5b0099,#5f0099,#630099,#670099,#6b0099,#700099,#740099,#780099,#7c0099,#800099,#850099,#890099,#8d0099,#910099,#960099,#990098,#990094,#990090,#99008c,#990088,#990085,#990082,#99007f,#99007c)"></i><i class=r3 style="background:linear-gradient(90deg,#000999,#000899,#000799,#000699,#000599,#000499,#000399,#000299,#000199,#000099,#000099,#000099,#000099,#000099,#000099,#000099,#000099,#000099,#000099,#000099,#000099,#000099,#020099,#060099,#090099,#0d0099,#110099,#140099,#180099,#1c0099,#200099,#230099,#270099,#2b0099,#2f0099,#330099,#370099,#3b0099,#3e0099,#420099,#460099,#4a0099,#4e0099,#520099,#560099,#5a0099,#5e0099,#620099,#660099,#6a0099,#6f0099,#730099,#770099,#7b0099,#7f0099,#830099,#880099,#8c0099,#900099,#940099,#990099,#990095,#990091,#99008d,#99008a,#990086,#990083,#990080,#99007d)"></i><i class=r3 style="background:linear-gradient(90deg,#000999,#000899,#000799,#000699,#000599,#000499,#000399,#000299,#000199,#000099,#000099,#000099,#000099,#000099,#000099,#000099,#000099,#000099,#000099,#000099,#000099,#000099,#020099,#050099,#090099,#0d0099,#100099,#140099,#180099,#1c0099,#1f0099,#230099,#270099,#2b0099,#2e0099,#320099,#360099,#3a0099,#3e0099,#420099,#460099,#4a0099,#4e0099,#510099,#550099,#590099,#5d0099,#610099,#660099,#6a0099,#6e0099,#720099,#760099,#7a0099,#7e0099,#820099,#870099,#8b0099,#8f0099,#930099,#970099,#990096,#990092,#99008e,#99008b,#990087,#990084,#990081,#99007e)"></i><i class=r3 style="background:linear-gradient(90deg,#000999,#000899,#000799,#000699,#000599,#000499,#000399,#000299,#000199,#000099,#000099,#000099,#000099,#000099,#000099,#000099,#000099,#000099,#000099,#000099,#000099,#000099,#020099,#050099,#090099,#0c0099,#100099,#140099,#170099,#1b0099,#1f0099,#230099,#260099,#2a0099,#2e0099,#320099,#360099,#390099,#3d0099,#410099,#450099,#490099,#4d0099,#510099,#550099,#590099,#5d0099,#610099,#650099,#690099,#6d0099,#710099,#750099,#790099,#7d0099,#810099,#850099,#8a0099,#8e0099,#920099,#960099,#990098,#990094,#990090,#99008c,#990088,#990085,#990082,#99007f)"></i><i class=r3 style="background:linear-gradient(90deg,#000899,#000799,#000699,#000599,#000499,#000399,#000299,#000199,#000099,#000099,#000099,#000099,#000099,#000099,#000099,#000099,#000099,#000099,#000099,#000099,#000099,#000099,#010099,#050099,#090099,#0c0099,#100099,#140099,#170099,#1b0099,#1f0099,#220099,#260099,#2a0099,#2d0099,#310099,#350099,#390099,#3d0099,#400099,#440099,#480099,#4c0099,#500099,#540099,#580099,#5c0099,#600099,#640099,#680099,#6c0099,#700099,#740099,#780099,#7c0099,#800099,#840099,#880099,#8d0099,#910099,#950099,#990099,#990095,#990091,#99008d,#99008a,#990086,#990083,#990080)"></i><i class=r3 style="background:linear-gradient(90deg,#000899,#000799,#000699,#000599,#000499,#000399,#000299,#000199,#000099,#000099,#000099,#000099,#000099,#000099,#000099,#000099,#000099,#000099,#000099,#000099,#000099,#000099,#010099,#050099,#080099,#0c0099,#100099,#130099,#170099,#1a0099,#1e0099,#220099,#260099,#290099,#2d0099,#310099,#340099,#380099,#3c0099,#400099,#440099,#480099,#4b0099,#4f0099,#530099,#570099,#5b0099,#5f0099,#630099,#670099,#6b0099,#6f0099,#730099,#770099,#7b0099,#7f0099,#830099,#870099,#8b0099,#900099,#940099,#980099,#990096,#990092,#99008e,#99008b,#990087,#990084,#990081)"></i><i class=r3 style="background:linear-gradient(90deg,#000899,#000799,#000699,#000599,#000499,#000399,#000299,#000199,#000099,#000099,#000099,#000099,#000099,#000099,#000099,#000099,#000099,#000099,#000099,#000099,#000099,#000099,#010099,#050099,#080099,#0c0099,#0f0099,#130099,#170099,#1a0099,#1e0099,#210099,#250099,#290099,#2d0099,#300099,#340099,#380099,#3b0099,#3f0099,#430099,#470099,#4b0099,#4f0099,#520099,#560099,#5a0099,#5e0099,#620099,#660099,#6a0099,#6e0099,#720099,#760099,#7a0099,#7e0099,#820099,#860099,#8a0099,#8e0099,#920099,#970099,#990097,#990093,#99008f,#99008c,#990088,#990085,#990082)"></i><i class=r3 style="background:linear-gradient(90deg,#000799,#000699,#000599,#000499,#000399,#000299,#000199,#000099,#000099,#000099,#000099,#000099,#000099,#000099,#000099,#000099,#000099,#000099,#000099,#000099,#000099,#000099,#010099,#040099,#080099,#0b0099,#0f0099,#130099,#160099,#1a0099,#1d0099,#210099,#250099,#280099,#2c0099,#300099,#330099,#370099,#3b0099,#3f0099,#420099,#460099,#4a0099,#4e0099,#520099,#560099,#590099,#5d0099,#610099,#650099,#690099,#6d0099,#710099,#750099,#790099,#7d0099,#810099,#850099,#890099,#8d0099,#910099,#950099,#990098,#990094,#990091,#99008d,#990089,#990086,#990083)"></i></div><div class="a" style="left:1370px;top:185px;width:372px;height:354px;clip-path:polygon(368.8px 35.5px,1.4px 1.1px,58.3px 352.7px)"><i class=r2 style="background:linear-gradient(90deg,#00ff00,#0aff00,#18ff00,#26ff00,#35ff00,#44ff00,#53ff00,#64ff00,#74ff00,#85ff00,#97ff00,#aaff00,#bdff00,#d1ff00,#e5ff00,#faff00,#ffee00,#ffdc00,#ffcb00,#ffbd00,#ffaf00,#ffa300,#ff9800,#ff8f00,#ff8500,#ff7d00,#ff7500,#ff6e00,#ff6800,#ff6100,#ff5c00,#ff5600,#ff5100,#ff4d00,#ff4800,#ff4400,#ff4000,#ff3c00,#ff3900,#ff3500,#ff3200,#ff2f00,#ff2c00,#ff2900,#ff2700,#ff2400,#ff2200,#ff2000,#ff1d00,#ff1b00,#ff1900,#ff1700,#ff1500,#ff1400,#ff1200,#ff1000,#ff0f00,#ff0d00,#ff0c00,#ff0a00,#ff0900,#ff0700,#ff0600)"></i><i class=r2 style="background:linear-gradient(90deg,#00ff04,#0aff03,#17ff02,#26ff01,#34ff00,#43ff00,#53ff00,#63ff00,#74ff00,#85ff00,#97ff00,#aaff00,#bdff00,#d1ff00,#e6ff00,#fbff00,#ffee00,#ffdb00,#ffcb00,#ffbc00,#ffaf00,#ffa300,#ff9800,#ff8e00,#ff8500,#ff7c00,#ff7500,#ff6e00,#ff6700,#ff6100,#ff5b00,#ff5600,#ff5100,#ff4c00,#ff4800,#ff4300,#ff3f00,#ff3c00,#ff3800,#ff3500,#ff3200,#ff2f00,#ff2c00,#ff2900,#ff2600,#ff2400,#ff2100,#ff1f00,#ff1d00,#ff1b00,#ff1900,#ff1700,#ff1500,#ff1300,#ff1200,#ff1000,#ff0e00,#ff0d00,#ff0b00,#ff0a00,#ff0800,#ff0700,#ff0600)"></i><i class=r2 style="background:linear-gradient(90deg,#00ff08,#09ff07,#17ff06,#25ff05,#34ff04,#43ff03,#53ff02,#63ff00,#74ff00,#85ff00,#97ff00,#aaff00,#bdff00,#d1ff00,#e6ff00,#fcff00,#ffed00,#ffda00,#ffca00,#ffbb00,#ffae00,#ffa200,#ff9700,#ff8d00,#ff8400,#ff7c00,#ff7400,#ff6d00,#ff6600,#ff6000,#ff5a00,#ff5500,#ff5000,#ff4b00,#ff4700,#ff4300,#ff3f00,#ff3b00,#ff3800,#ff3400,#ff3100,#ff2e00,#ff2b00,#ff2800,#ff2600,#ff2300,#ff2100,#ff1f00,#ff1d00,#ff1a00,#ff1800,#ff1600,#ff1500,#ff1300,#ff1100,#ff0f00,#ff0e00,#ff0c00,#ff0b00,#ff0900,#ff0800,#ff0700,#ff0500)"></i><i class=r2 style="background:linear-gradient(90deg,#00ff0d,#08ff0c,#16ff0b,#25ff09,#33ff08,#43ff07,#52ff06,#63ff05,#74ff04,#85ff02,#97ff01,#aaff00,#beff00,#d2ff00,#e7ff00,#fcff00,#ffec00,#ffda00,#ffc900,#ffba00,#ffad00,#ffa100,#ff9600,#ff8c00,#ff8300,#ff7b00,#ff7300,#ff6c00,#ff6600,#ff6000,#ff5a00,#ff5400,#ff4f00,#ff4b00,#ff4600,#ff4200,#ff3e00,#ff3b00,#ff3700,#ff3400,#ff3100,#ff2e00,#ff2b00,#ff2800,#ff2500,#ff2300,#ff2000,#ff1e00,#ff1c00,#ff1a00,#ff1800,#ff1600,#ff1400,#ff1200,#ff1100,#ff0f00,#ff0d00,#ff0c00,#ff0a00,#ff0900,#ff0800,#ff0600,#ff0500)"></i><i class=r2 style="background:linear-gradient(90deg,#00ff11,#08ff10,#16ff0f,#24ff0e,#33ff0d,#42ff0c,#52ff0b,#62ff0a,#73ff08,#85ff07,#97ff06,#aaff05,#beff03,#d2ff02,#e7ff00,#fdff00,#ffec00,#ffd900,#ffc800,#ffba00,#ffac00,#ffa000,#ff9600,#ff8c00,#ff8300,#ff7a00,#ff7300,#ff6c00,#ff6500,#ff5f00,#ff5900,#ff5400,#ff4f00,#ff4a00,#ff4600,#ff4200,#ff3e00,#ff3a00,#ff3600,#ff3300,#ff3000,#ff2d00,#ff2a00,#ff2700,#ff2500,#ff2200,#ff2000,#ff1e00,#ff1c00,#ff1900,#ff1700,#ff1600,#ff1400,#ff1200,#ff1000,#ff0f00,#ff0d00,#ff0b00,#ff0a00,#ff0900,#ff0700,#ff0600,#ff0500)"></i><i class=r2 style="background:linear-gradient(90deg,#00ff15,#07ff14,#15ff13,#23ff12,#32ff11,#42ff10,#52ff0f,#62ff0e,#73ff0d,#85ff0c,#97ff0b,#aaff0a,#beff08,#d3ff07,#e8ff06,#feff04,#ffeb03,#ffd801,#ffc800,#ffb900,#ffac00,#ffa000,#ff9500,#ff8b00,#ff8200,#ff7a00,#ff7200,#ff6b00,#ff6400,#ff5e00,#ff5800,#ff5300,#ff4e00,#ff4a00,#ff4500,#ff4100,#ff3d00,#ff3900,#ff3600,#ff3300,#ff2f00,#ff2c00,#ff2a00,#ff2700,#ff2400,#ff2200,#ff2000,#ff1d00,#ff1b00,#ff1900,#ff1700,#ff1500,#ff1300,#ff1100,#ff1000,#ff0e00,#ff0d00,#ff0b00,#ff0a00,#ff0800,#ff0700,#ff0500,#ff0400)"></i><i class=r2 style="background:linear-gradient(90deg,#00ff19,#06ff19,#14ff18,#23ff17,#32ff16,#41ff15,#51ff14,#62ff13,#73ff12,#85ff11,#97ff10,#aaff0f,#beff0e,#d3ff0c,#e8ff0b,#ffff0a,#ffea08,#ffd706,#ffc704,#ffb803,#ffab02,#ff9f00,#ff9400,#ff8a00,#ff8100,#ff7900,#ff7100,#ff6a00,#ff6400,#ff5e00,#ff5800,#ff5300,#ff4e00,#ff4900,#ff4500,#ff4000,#ff3d00,#ff3900,#ff3500,#ff3200,#ff2f00,#ff2c00,#ff2900,#ff2600,#ff2400,#ff2100,#ff1f00,#ff1d00,#ff1b00,#ff1900,#ff1700,#ff1500,#ff1300,#ff1100,#ff0f00,#ff0e00,#ff0c00,#ff0b00,#ff0900,#ff0800,#ff0600,#ff0500,#ff0400)"></i><i class=r2 style="background:linear-gradient(90deg,#00ff1e,#05ff1d,#14ff1c,#22ff1b,#31ff1b,#41ff1a,#51ff19,#62ff18,#73ff17,#85ff16,#97ff15,#abff14,#bfff13,#d3ff12,#e9ff11,#ffff0f,#ffe90d,#ffd70b,#ffc609,#ffb707,#ffaa06,#ff9e04,#ff9303,#ff8902,#ff8001,#ff7800,#ff7100,#ff6900,#ff6300,#ff5d00,#ff5700,#ff5200,#ff4d00,#ff4800,#ff4400,#ff4000,#ff3c00,#ff3800,#ff3500,#ff3200,#ff2e00,#ff2b00,#ff2900,#ff2600,#ff2300,#ff2100,#ff1f00,#ff1c00,#ff1a00,#ff1800,#ff1600,#ff1400,#ff1200,#ff1100,#ff0f00,#ff0d00,#ff0c00,#ff0a00,#ff0900,#ff0700,#ff0600,#ff0500,#ff0300)"></i><i class=r2 style="background:linear-gradient(90deg,#00ff22,#05ff21,#13ff21,#22ff20,#31ff1f,#40ff1e,#51ff1e,#61ff1d,#73ff1c,#85ff1b,#97ff1a,#abff19,#bfff18,#d4ff17,#e9ff16,#fffe15,#ffe912,#ffd610,#ffc50e,#ffb70c,#ffa90a,#ff9d08,#ff9307,#ff8906,#ff8004,#ff7703,#ff7002,#ff6901,#ff6200,#ff5c00,#ff5700,#ff5100,#ff4c00,#ff4800,#ff4300,#ff3f00,#ff3b00,#ff3800,#ff3400,#ff3100,#ff2e00,#ff2b00,#ff2800,#ff2500,#ff2300,#ff2000,#ff1e00,#ff1c00,#ff1a00,#ff1800,#ff1600,#ff1400,#ff1200,#ff1000,#ff0e00,#ff0d00,#ff0b00,#ff0a00,#ff0800,#ff0700,#ff0600,#ff0400,#ff0300)"></i><i class=r2 style="background:linear-gradient(90deg,#00ff27,#04ff26,#12ff25,#21ff25,#30ff24,#40ff23,#50ff23,#61ff22,#73ff21,#85ff20,#97ff1f,#abff1f,#bfff1e,#d4ff1d,#eaff1c,#fffd1b,#ffe817,#ffd515,#ffc512,#ffb610,#ffa90e,#ff9d0c,#ff920b,#ff8809,#ff7f08,#ff7706,#ff6f05,#ff6804,#ff6203,#ff5c02,#ff5602,#ff5101,#ff4c00,#ff4700,#ff4300,#ff3f00,#ff3b00,#ff3700,#ff3400,#ff3000,#ff2d00,#ff2a00,#ff2800,#ff2500,#ff2200,#ff2000,#ff1e00,#ff1b00,#ff1900,#ff1700,#ff1500,#ff1300,#ff1100,#ff1000,#ff0e00,#ff0c00,#ff0b00,#ff0900,#ff0800,#ff0700,#ff0500,#ff0400,#ff0300)"></i><i class=r2 style="background:linear-gradient(90deg,#00ff2b,#03ff2a,#12ff2a,#20ff29,#30ff29,#40ff28,#50ff27,#61ff27,#72ff26,#85ff25,#97ff25,#abff24,#bfff23,#d5ff22,#ebff21,#fffd20,#ffe71d,#ffd41a,#ffc417,#ffb514,#ffa812,#ff9c10,#ff910e,#ff870d,#ff7e0b,#ff760a,#ff6e09,#ff6707,#ff6106,#ff5b05,#ff5504,#ff5003,#ff4b03,#ff4602,#ff4201,#ff3e00,#ff3a00,#ff3700,#ff3300,#ff3000,#ff2d00,#ff2a00,#ff2700,#ff2400,#ff2200,#ff1f00,#ff1d00,#ff1b00,#ff1900,#ff1700,#ff1500,#ff1300,#ff1100,#ff0f00,#ff0e00,#ff0c00,#ff0a00,#ff0900,#ff0800,#ff0600,#ff0500,#ff0300,#ff0200)"></i><i class=r2 style="background:linear-gradient(90deg,#00ff30,#02ff2f,#11ff2f,#20ff2e,#2fff2e,#3fff2d,#50ff2c,#61ff2c,#72ff2b,#85ff2b,#98ff2a,#abff29,#c0ff29,#d5ff28,#ebff27,#fffc26,#ffe622,#ffd41f,#ffc31b,#ffb419,#ffa716,#ff9b14,#ff9012,#ff8610,#ff7d0f,#ff750d,#ff6e0c,#ff670a,#ff6009,#ff5a08,#ff5507,#ff4f06,#ff4a05,#ff4604,#ff4103,#ff3d03,#ff3a02,#ff3601,#ff3301,#ff2f00,#ff2c00,#ff2900,#ff2600,#ff2400,#ff2100,#ff1f00,#ff1d00,#ff1a00,#ff1800,#ff1600,#ff1400,#ff1200,#ff1100,#ff0f00,#ff0d00,#ff0c00,#ff0a00,#ff0900,#ff0700,#ff0600,#ff0400,#ff0300,#ff0200)"></i><i class=r2 style="background:linear-gradient(90deg,#00ff34,#02ff34,#10ff33,#1fff33,#2fff32,#3fff32,#4fff31,#60ff31,#72ff30,#84ff30,#98ff2f,#abff2f,#c0ff2e,#d5ff2e,#ecff2d,#fffb2c,#ffe627,#ffd324,#ffc220,#ffb31d,#ffa61a,#ff9a18,#ff8f16,#ff8614,#ff7d12,#ff7410,#ff6d0f,#ff660d,#ff5f0c,#ff590b,#ff540a,#ff4f09,#ff4a08,#ff4507,#ff4106,#ff3d05,#ff3904,#ff3504,#ff3203,#ff2f02,#ff2c02,#ff2901,#ff2600,#ff2300,#ff2100,#ff1e00,#ff1c00,#ff1a00,#ff1800,#ff1600,#ff1400,#ff1200,#ff1000,#ff0e00,#ff0d00,#ff0b00,#ff0a00,#ff0800,#ff0700,#ff0500,#ff0400,#ff0300,#ff0100)"></i><i class=r2 style="background:linear-gradient(90deg,#00ff39,#01ff38,#10ff38,#1fff38,#2eff37,#3eff37,#4fff37,#60ff36,#72ff36,#84ff35,#98ff35,#acff34,#c0ff34,#d6ff33,#ecff33,#fffa31,#ffe52d,#ffd229,#ffc125,#ffb322,#ffa51f,#ff991c,#ff8f1a,#ff8517,#ff7c16,#ff7414,#ff6c12,#ff6510,#ff5f0f,#ff590e,#ff530c,#ff4e0b,#ff490a,#ff4509,#ff4008,#ff3c07,#ff3807,#ff3506,#ff3105,#ff2e04,#ff2b04,#ff2803,#ff2502,#ff2302,#ff2001,#ff1e01,#ff1c00,#ff1900,#ff1700,#ff1500,#ff1300,#ff1100,#ff1000,#ff0e00,#ff0c00,#ff0b00,#ff0900,#ff0800,#ff0600,#ff0500,#ff0400,#ff0200,#ff0100)"></i><i class=r2 style="background:linear-gradient(90deg,#00ff3d,#00ff3d,#0fff3d,#1eff3d,#2eff3c,#3eff3c,#4eff3c,#60ff3b,#72ff3b,#84ff3b,#98ff3a,#acff3a,#c1ff3a,#d6ff39,#edff39,#fffa37,#ffe432,#ffd12e,#ffc12a,#ffb226,#ffa523,#ff9920,#ff8e1d,#ff841b,#ff7b19,#ff7317,#ff6b15,#ff6514,#ff5e12,#ff5811,#ff530f,#ff4d0e,#ff480d,#ff440c,#ff400b,#ff3c0a,#ff3809,#ff3408,#ff3107,#ff2e06,#ff2b06,#ff2805,#ff2504,#ff2204,#ff2003,#ff1d02,#ff1b02,#ff1901,#ff1701,#ff1500,#ff1300,#ff1100,#ff0f00,#ff0e00,#ff0c00,#ff0a00,#ff0900,#ff0700,#ff0600,#ff0500,#ff0300,#ff0200,#ff0100)"></i><i class=r2 style="background:linear-gradient(90deg,#00ff42,#00ff42,#0eff42,#1dff42,#2dff41,#3dff41,#4eff41,#5fff41,#71ff41,#84ff40,#98ff40,#acff40,#c1ff40,#d7ff3f,#eeff3f,#fff93d,#ffe338,#ffd033,#ffc02e,#ffb12b,#ffa427,#ff9824,#ff8d21,#ff831f,#ff7a1c,#ff721a,#ff6b18,#ff6417,#ff5d15,#ff5713,#ff5212,#ff4d11,#ff480f,#ff430e,#ff3f0d,#ff3b0c,#ff370b,#ff340a,#ff3009,#ff2d08,#ff2a08,#ff2707,#ff2406,#ff2206,#ff1f05,#ff1d04,#ff1b04,#ff1803,#ff1603,#ff1402,#ff1202,#ff1101,#ff0f01,#ff0d00,#ff0b00,#ff0a00,#ff0800,#ff0700,#ff0500,#ff0400,#ff0300,#ff0200,#ff0000)"></i><i class=r2 style="background:linear-gradient(90deg,#00ff47,#00ff47,#0dff47,#1dff47,#2cff46,#3dff46,#4eff46,#5fff46,#71ff46,#84ff46,#98ff46,#acff46,#c1ff45,#d7ff45,#eeff45,#fff843,#ffe23d,#ffd038,#ffbf33,#ffb02f,#ffa32b,#ff9728,#ff8c25,#ff8322,#ff7a20,#ff721e,#ff6a1c,#ff631a,#ff5d18,#ff5716,#ff5115,#ff4c13,#ff4712,#ff4311,#ff3e10,#ff3a0e,#ff370d,#ff330c,#ff300b,#ff2c0b,#ff290a,#ff2709,#ff2408,#ff2107,#ff1f07,#ff1c06,#ff1a05,#ff1805,#ff1604,#ff1404,#ff1203,#ff1003,#ff0e02,#ff0d02,#ff0b01,#ff0901,#ff0800,#ff0600,#ff0500,#ff0400,#ff0200,#ff0100,#ff0000)"></i><i class=r2 style="background:linear-gradient(90deg,#00ff4c,#00ff4c,#0dff4c,#1cff4c,#2cff4c,#3cff4c,#4dff4c,#5fff4c,#71ff4c,#84ff4c,#98ff4b,#acff4b,#c2ff4b,#d8ff4b,#efff4b,#fff749,#ffe243,#ffcf3d,#ffbe38,#ffaf34,#ffa230,#ff962c,#ff8c29,#ff8226,#ff7924,#ff7121,#ff691f,#ff621d,#ff5c1b,#ff5619,#ff5018,#ff4b16,#ff4715,#ff4213,#ff3e12,#ff3a11,#ff3610,#ff320f,#ff2f0e,#ff2c0d,#ff290c,#ff260b,#ff230a,#ff2109,#ff1e09,#ff1c08,#ff1a07,#ff1707,#ff1506,#ff1305,#ff1105,#ff1004,#ff0e04,#ff0c03,#ff0b03,#ff0902,#ff0702,#ff0601,#ff0501,#ff0301,#ff0200,#ff0100,#ff0000)"></i><i class=r2 style="background:linear-gradient(90deg,#00ff51,#00ff51,#0cff51,#1bff51,#2bff51,#3cff51,#4dff51,#5eff51,#71ff51,#84ff51,#98ff51,#acff51,#c2ff51,#d8ff52,#efff52,#fff74f,#ffe148,#ffce42,#ffbd3d,#ffaf38,#ffa134,#ff9630,#ff8b2d,#ff812a,#ff7827,#ff7025,#ff6922,#ff6220,#ff5b1e,#ff551c,#ff501a,#ff4b19,#ff4617,#ff4116,#ff3d14,#ff3913,#ff3512,#ff3211,#ff2e10,#ff2b0f,#ff280e,#ff250d,#ff230c,#ff200b,#ff1e0a,#ff1b0a,#ff1909,#ff1708,#ff1508,#ff1307,#ff1106,#ff0f06,#ff0d05,#ff0c05,#ff0a04,#ff0904,#ff0703,#ff0603,#ff0402,#ff0302,#ff0202,#ff0001,#ff0001)"></i><i class=r2 style="background:linear-gradient(90deg,#00ff56,#00ff56,#0bff56,#1bff56,#2bff56,#3bff56,#4cff56,#5eff57,#71ff57,#84ff57,#98ff57,#adff57,#c2ff58,#d9ff58,#f0ff58,#fff655,#ffe04e,#ffcd47,#ffbd42,#ffae3d,#ffa138,#ff9535,#ff8a31,#ff802e,#ff772b,#ff6f28,#ff6825,#ff6123,#ff5b21,#ff551f,#ff4f1d,#ff4a1b,#ff451a,#ff4118,#ff3c17,#ff3816,#ff3514,#ff3113,#ff2e12,#ff2b11,#ff2810,#ff250f,#ff220e,#ff200d,#ff1d0c,#ff1b0c,#ff190b,#ff160a,#ff1409,#ff1209,#ff1008,#ff0f07,#ff0d07,#ff0b06,#ff0a06,#ff0805,#ff0705,#ff0504,#ff0404,#ff0203,#ff0103,#ff0002,#ff0002)"></i><i class=r2 style="background:linear-gradient(90deg,#00ff5b,#00ff5b,#0aff5b,#1aff5b,#2aff5b,#3bff5c,#4cff5c,#5eff5c,#70ff5d,#84ff5d,#98ff5d,#adff5e,#c2ff5e,#d9ff5e,#f1ff5f,#fff55b,#ffdf54,#ffcc4d,#ffbc47,#ffad42,#ffa03d,#ff9439,#ff8935,#ff7f31,#ff772e,#ff6f2b,#ff6729,#ff6026,#ff5a24,#ff5422,#ff4e20,#ff491e,#ff451c,#ff401b,#ff3c19,#ff3818,#ff3417,#ff3115,#ff2d14,#ff2a13,#ff2712,#ff2411,#ff2210,#ff1f0f,#ff1d0e,#ff1a0d,#ff180d,#ff160c,#ff140b,#ff120a,#ff100a,#ff0e09,#ff0c08,#ff0b08,#ff0907,#ff0807,#ff0606,#ff0506,#ff0305,#ff0205,#ff0104,#ff0004,#ff0003)"></i><i class=r2 style="background:linear-gradient(90deg,#00ff60,#00ff60,#0aff60,#19ff61,#29ff61,#3aff61,#4cff62,#5eff62,#70ff62,#84ff63,#98ff63,#adff64,#c3ff64,#daff65,#f1ff65,#fff461,#ffde59,#ffcc52,#ffbb4c,#ffac46,#ff9f41,#ff933d,#ff8839,#ff7f35,#ff7632,#ff6e2f,#ff662c,#ff5f29,#ff5927,#ff5325,#ff4e23,#ff4921,#ff441f,#ff3f1d,#ff3b1c,#ff371a,#ff3419,#ff3018,#ff2d16,#ff2a15,#ff2714,#ff2413,#ff2112,#ff1f11,#ff1c10,#ff1a0f,#ff180e,#ff150e,#ff130d,#ff110c,#ff100b,#ff0e0b,#ff0c0a,#ff0a09,#ff0909,#ff0708,#ff0608,#ff0407,#ff0307,#ff0206,#ff0006,#ff0005,#ff0005)"></i><i class=r2 style="background:linear-gradient(90deg,#00ff65,#00ff65,#09ff65,#19ff66,#29ff66,#3aff67,#4bff67,#5dff68,#70ff68,#84ff69,#98ff69,#adff6a,#c3ff6b,#daff6b,#f2ff6c,#fff368,#ffde5f,#ffcb57,#ffba51,#ffab4b,#ff9e46,#ff9241,#ff883d,#ff7e39,#ff7535,#ff6d32,#ff662f,#ff5f2d,#ff582a,#ff5328,#ff4d26,#ff4824,#ff4322,#ff3f20,#ff3b1e,#ff371d,#ff331b,#ff2f1a,#ff2c18,#ff2917,#ff2616,#ff2315,#ff2114,#ff1e13,#ff1c12,#ff1911,#ff1710,#ff150f,#ff130e,#ff110e,#ff0f0d,#ff0d0c,#ff0c0c,#ff0a0b,#ff080a,#ff070a,#ff0509,#ff0409,#ff0308,#ff0107,#ff0007,#ff0006,#ff0006)"></i><i class=r2 style="background:linear-gradient(90deg,#00ff6a,#00ff6a,#08ff6b,#18ff6b,#28ff6c,#39ff6c,#4bff6d,#5dff6e,#70ff6e,#83ff6f,#98ff70,#adff70,#c3ff71,#dbff72,#f3ff73,#fff36e,#ffdd65,#ffca5d,#ffb956,#ffaa50,#ff9d4a,#ff9145,#ff8741,#ff7d3d,#ff7439,#ff6c36,#ff6533,#ff5e30,#ff582d,#ff522b,#ff4c28,#ff4726,#ff4324,#ff3e22,#ff3a21,#ff361f,#ff321e,#ff2f1c,#ff2c1b,#ff2819,#ff2518,#ff2317,#ff2016,#ff1d15,#ff1b14,#ff1913,#ff1612,#ff1411,#ff1210,#ff100f,#ff0f0f,#ff0d0e,#ff0b0d,#ff090c,#ff080c,#ff060b,#ff050b,#ff030a,#ff0209,#ff0109,#ff0008,#ff0008,#ff0007)"></i><i class=r2 style="background:linear-gradient(90deg,#00ff6f,#00ff70,#07ff70,#17ff71,#28ff71,#39ff72,#4aff73,#5dff74,#70ff74,#83ff75,#98ff76,#adff77,#c4ff78,#dbff79,#f4ff79,#fff274,#ffdc6b,#ffc962,#ffb85b,#ffaa54,#ff9c4f,#ff914a,#ff8645,#ff7c41,#ff733d,#ff6b39,#ff6436,#ff5d33,#ff5730,#ff512e,#ff4c2b,#ff4729,#ff4227,#ff3d25,#ff3923,#ff3521,#ff3220,#ff2e1e,#ff2b1d,#ff281c,#ff251a,#ff2219,#ff1f18,#ff1d17,#ff1a16,#ff1815,#ff1614,#ff1413,#ff1212,#ff1011,#ff0e10,#ff0c0f,#ff0b0f,#ff090e,#ff070d,#ff060d,#ff040c,#ff030b,#ff020b,#ff000a,#ff000a,#ff0009,#ff0009)"></i><i class=r2 style="background:linear-gradient(90deg,#00ff74,#00ff75,#07ff76,#16ff76,#27ff77,#38ff78,#4aff79,#5cff7a,#6fff7a,#83ff7b,#98ff7c,#aeff7d,#c4ff7e,#dcff7f,#f4ff80,#fff17a,#ffdb70,#ffc868,#ffb760,#ffa959,#ff9c53,#ff904e,#ff8549,#ff7b44,#ff7340,#ff6b3d,#ff6339,#ff5c36,#ff5633,#ff5031,#ff4b2e,#ff462c,#ff412a,#ff3d28,#ff3926,#ff3524,#ff3122,#ff2e21,#ff2a1f,#ff271e,#ff241c,#ff221b,#ff1f1a,#ff1c19,#ff1a18,#ff1817,#ff1516,#ff1315,#ff1114,#ff0f13,#ff0e12,#ff0c11,#ff0a10,#ff0910,#ff070f,#ff050e,#ff040d,#ff030d,#ff010c,#ff000c,#ff000b,#ff000a,#ff000a)"></i><i class=r2 style="background:linear-gradient(90deg,#00ff7a,#00ff7a,#06ff7b,#16ff7c,#26ff7d,#37ff7e,#49ff7f,#5cff80,#6fff81,#83ff82,#98ff83,#aeff84,#c5ff85,#dcff86,#f5ff88,#fff081,#ffda76,#ffc76d,#ffb765,#ffa85e,#ff9b58,#ff8f52,#ff844d,#ff7b48,#ff7244,#ff6a40,#ff633d,#ff5c39,#ff5536,#ff5034,#ff4a31,#ff452f,#ff412c,#ff3c2a,#ff3828,#ff3426,#ff3025,#ff2d23,#ff2a21,#ff2720,#ff241e,#ff211d,#ff1e1c,#ff1c1b,#ff1919,#ff1718,#ff1517,#ff1316,#ff1115,#ff0f14,#ff0d14,#ff0b13,#ff0a12,#ff0811,#ff0710,#ff0510,#ff040f,#ff020e,#ff010e,#ff000d,#ff000c,#ff000c,#ff000b)"></i><i class=r2 style="background:linear-gradient(90deg,#00ff7f,#00ff80,#05ff81,#15ff82,#26ff83,#37ff84,#49ff85,#5cff86,#6fff87,#83ff88,#98ff89,#aeff8b,#c5ff8c,#ddff8d,#f6ff8f,#ffef87,#ffd97c,#ffc673,#ffb66a,#ffa763,#ff9a5c,#ff8e56,#ff8351,#ff7a4c,#ff7148,#ff6944,#ff6240,#ff5b3d,#ff553a,#ff4f37,#ff4a34,#ff4531,#ff402f,#ff3b2d,#ff372b,#ff3329,#ff3027,#ff2c25,#ff2924,#ff2622,#ff2321,#ff201f,#ff1e1e,#ff1b1d,#ff191b,#ff171a,#ff1419,#ff1218,#ff1017,#ff0e16,#ff0d15,#ff0b14,#ff0913,#ff0813,#ff0612,#ff0511,#ff0310,#ff0210,#ff000f,#ff000e,#ff000e,#ff000d,#ff000d)"></i><i class=r2 style="background:linear-gradient(90deg,#00ff84,#00ff85,#04ff86,#14ff87,#25ff88,#36ff8a,#48ff8b,#5bff8c,#6fff8d,#83ff8f,#98ff90,#aeff91,#c5ff93,#ddff94,#f6ff96,#ffee8e,#ffd982,#ffc678,#ffb570,#ffa668,#ff9961,#ff8d5b,#ff8355,#ff7950,#ff704c,#ff6847,#ff6143,#ff5a40,#ff543d,#ff4e3a,#ff4937,#ff4434,#ff3f32,#ff3b2f,#ff372d,#ff332b,#ff2f29,#ff2c27,#ff2926,#ff2524,#ff2323,#ff2021,#ff1d20,#ff1b1f,#ff181d,#ff161c,#ff141b,#ff121a,#ff1019,#ff0e18,#ff0c17,#ff0a16,#ff0915,#ff0714,#ff0613,#ff0413,#ff0312,#ff0111,#ff0010,#ff0010,#ff000f,#ff000f,#ff000e)"></i><i class=r2 style="background:linear-gradient(90deg,#00ff8a,#00ff8b,#03ff8c,#13ff8d,#24ff8e,#36ff90,#48ff91,#5bff92,#6eff94,#83ff95,#98ff97,#aeff98,#c6ff9a,#deff9c,#f7ff9d,#ffee94,#ffd888,#ffc57e,#ffb475,#ffa56d,#ff9866,#ff8c5f,#ff8259,#ff7854,#ff6f4f,#ff684b,#ff6047,#ff5943,#ff5340,#ff4d3d,#ff483a,#ff4337,#ff3e34,#ff3a32,#ff3630,#ff322e,#ff2f2c,#ff2b2a,#ff2828,#ff2526,#ff2225,#ff1f23,#ff1d22,#ff1a20,#ff181f,#ff161e,#ff131d,#ff111c,#ff0f1b,#ff0d1a,#ff0c19,#ff0a18,#ff0817,#ff0716,#ff0515,#ff0414,#ff0213,#ff0113,#ff0012,#ff0011,#ff0011,#ff0010,#ff000f)"></i><i class=r2 style="background:linear-gradient(90deg,#00ff8f,#00ff91,#02ff92,#13ff93,#24ff94,#35ff96,#47ff97,#5aff99,#6eff9a,#83ff9c,#98ff9d,#afff9f,#c6ffa1,#deffa3,#f8ffa5,#ffed9b,#ffd78f,#ffc484,#ffb37a,#ffa472,#ff976a,#ff8c64,#ff815d,#ff7758,#ff6f53,#ff674e,#ff5f4a,#ff5946,#ff5243,#ff4d40,#ff473d,#ff423a,#ff3e37,#ff3935,#ff3532,#ff3230,#ff2e2e,#ff2b2c,#ff272a,#ff2429,#ff2127,#ff1f25,#ff1c24,#ff1a22,#ff1721,#ff1520,#ff131f,#ff111d,#ff0f1c,#ff0d1b,#ff0b1a,#ff0919,#ff0818,#ff0617,#ff0516,#ff0316,#ff0215,#ff0014,#ff0013,#ff0013,#ff0012,#ff0011,#ff0011)"></i><i class=r2 style="background:linear-gradient(90deg,#00ff95,#00ff96,#02ff98,#12ff99,#23ff9b,#35ff9c,#47ff9e,#5aff9f,#6effa1,#83ffa3,#98ffa4,#afffa6,#c6ffa8,#dfffaa,#f9ffad,#ffeca2,#ffd695,#ffc389,#ffb27f,#ffa377,#ff966f,#ff8b68,#ff8062,#ff775c,#ff6e57,#ff6652,#ff5f4e,#ff584a,#ff5246,#ff4c43,#ff4740,#ff423d,#ff3d3a,#ff3937,#ff3535,#ff3133,#ff2d30,#ff2a2e,#ff272d,#ff242b,#ff2129,#ff1e27,#ff1c26,#ff1924,#ff1723,#ff1422,#ff1220,#ff101f,#ff0e1e,#ff0c1d,#ff0b1c,#ff091b,#ff071a,#ff0619,#ff0418,#ff0317,#ff0116,#ff0016,#ff0015,#ff0014,#ff0013,#ff0013,#ff0012)"></i><i class=r2 style="background:linear-gradient(90deg,#00ff9b,#00ff9c,#01ff9e,#11ff9f,#22ffa1,#34ffa2,#47ffa4,#5affa6,#6effa8,#83ffa9,#98ffab,#afffad,#c7ffb0,#e0ffb2,#f9ffb4,#ffeba8,#ffd59b,#ffc28f,#ffb185,#ffa37c,#ff9674,#ff8a6c,#ff7f66,#ff7660,#ff6d5b,#ff6556,#ff5e51,#ff574d,#ff5149,#ff4b46,#ff4642,#ff413f,#ff3c3d,#ff383a,#ff3437,#ff3035,#ff2d33,#ff2931,#ff262f,#ff232d,#ff202b,#ff1e29,#ff1b28,#ff1926,#ff1625,#ff1424,#ff1222,#ff1021,#ff0e20,#ff0c1f,#ff0a1e,#ff091c,#ff071b,#ff051b,#ff041a,#ff0219,#ff0118,#ff0017,#ff0016,#ff0015,#ff0015,#ff0014,#ff0013)"></i><i class=r2 style="background:linear-gradient(90deg,#00ffa1,#00ffa2,#00ffa4,#10ffa5,#22ffa7,#33ffa9,#46ffaa,#59ffac,#6dffae,#82ffb0,#98ffb3,#afffb5,#c7ffb7,#e0ffba,#faffbc,#ffeaaf,#ffd4a1,#ffc195,#ffb08a,#ffa281,#ff9578,#ff8971,#ff7e6a,#ff7564,#ff6c5e,#ff6459,#ff5d55,#ff5650,#ff504c,#ff4b49,#ff4545,#ff4042,#ff3c3f,#ff373d,#ff333a,#ff3038,#ff2c35,#ff2933,#ff2631,#ff222f,#ff202d,#ff1d2c,#ff1a2a,#ff1828,#ff1627,#ff1325,#ff1124,#ff0f23,#ff0d22,#ff0c20,#ff0a1f,#ff081e,#ff061d,#ff051c,#ff031b,#ff021a,#ff0019,#ff0018,#ff0018,#ff0017,#ff0016,#ff0015,#ff0015)"></i><i class=r2 style="background:linear-gradient(90deg,#00ffa6,#00ffa8,#00ffaa,#10ffab,#21ffad,#33ffaf,#46ffb1,#59ffb3,#6dffb5,#82ffb7,#98ffba,#afffbc,#c7ffbf,#e1ffc1,#fbffc4,#ffe9b6,#ffd3a7,#ffc09b,#ffb090,#ffa186,#ff947d,#ff8875,#ff7e6e,#ff7468,#ff6b62,#ff635d,#ff5c58,#ff5654,#ff4f50,#ff4a4c,#ff4548,#ff4045,#ff3b42,#ff373f,#ff333d,#ff2f3a,#ff2b38,#ff2835,#ff2533,#ff2231,#ff1f2f,#ff1c2e,#ff1a2c,#ff172a,#ff1529,#ff1327,#ff1126,#ff0f25,#ff0d23,#ff0b22,#ff0921,#ff0820,#ff061f,#ff041e,#ff031d,#ff011c,#ff001b,#ff001a,#ff0019,#ff0018,#ff0017,#ff0017,#ff0016)"></i><i class=r2 style="background:linear-gradient(90deg,#00ffac,#00ffae,#00ffb0,#0fffb2,#20ffb4,#32ffb6,#45ffb8,#59ffba,#6dffbc,#82ffbf,#98ffc1,#b0ffc4,#c8ffc6,#e1ffc9,#fcffcc,#ffe8bd,#ffd2ae,#ffbfa1,#ffaf95,#ffa08b,#ff9382,#ff877a,#ff7d73,#ff736c,#ff6b66,#ff6361,#ff5b5c,#ff5557,#ff4f53,#ff494f,#ff444b,#ff3f48,#ff3a45,#ff3642,#ff323f,#ff2e3d,#ff2b3a,#ff2738,#ff2436,#ff2134,#ff1e32,#ff1c30,#ff192e,#ff172c,#ff152b,#ff1229,#ff1028,#ff0e26,#ff0c25,#ff0b24,#ff0923,#ff0721,#ff0520,#ff041f,#ff021e,#ff011d,#ff001c,#ff001b,#ff001a,#ff001a,#ff0019,#ff0018,#ff0017)"></i><i class=r2 style="background:linear-gradient(90deg,#00ffb2,#00ffb4,#00ffb6,#0effb8,#1fffba,#32ffbc,#45ffbe,#58ffc1,#6dffc3,#82ffc6,#99ffc9,#b0ffcb,#c8ffce,#e2ffd1,#fdffd4,#ffe8c4,#ffd1b4,#ffbea6,#ffae9b,#ff9f90,#ff9287,#ff867e,#ff7c77,#ff7270,#ff6a6a,#ff6264,#ff5b5f,#ff545a,#ff4e56,#ff4852,#ff434e,#ff3e4b,#ff3a48,#ff3545,#ff3142,#ff2e3f,#ff2a3d,#ff273a,#ff2438,#ff2136,#ff1e34,#ff1b32,#ff1930,#ff162e,#ff142d,#ff122b,#ff102a,#ff0e28,#ff0c27,#ff0a26,#ff0824,#ff0723,#ff0522,#ff0321,#ff0220,#ff011f,#ff001e,#ff001d,#ff001c,#ff001b,#ff001a,#ff0019,#ff0019)"></i><i class=r2 style="background:linear-gradient(90deg,#00ffb8,#00ffba,#00ffbc,#0dffbe,#1fffc1,#31ffc3,#44ffc5,#58ffc8,#6cffca,#82ffcd,#99ffd0,#b0ffd3,#c9ffd6,#e3ffd9,#feffdd,#ffe7cb,#ffd1bb,#ffbdac,#ffada0,#ff9e95,#ff918c,#ff8583,#ff7b7b,#ff7174,#ff696e,#ff6168,#ff5a63,#ff535e,#ff4d59,#ff4855,#ff4251,#ff3d4e,#ff394a,#ff3547,#ff3144,#ff2d42,#ff293f,#ff263c,#ff233a,#ff2038,#ff1d36,#ff1b34,#ff1832,#ff1630,#ff132f,#ff112d,#ff0f2b,#ff0d2a,#ff0b29,#ff0a27,#ff0826,#ff0625,#ff0424,#ff0322,#ff0121,#ff0020,#ff001f,#ff001e,#ff001d,#ff001c,#ff001c,#ff001b,#ff001a)"></i><i class=r2 style="background:linear-gradient(90deg,#00ffbe,#00ffc0,#00ffc3,#0cffc5,#1effc7,#30ffca,#43ffcc,#57ffcf,#6cffd2,#82ffd5,#99ffd8,#b0ffdb,#c9ffde,#e3ffe2,#feffe5,#ffe6d2,#ffd0c1,#ffbcb2,#ffaca6,#ff9d9a,#ff9090,#ff8488,#ff7a80,#ff7178,#ff6872,#ff606c,#ff5966,#ff5261,#ff4c5d,#ff4758,#ff4254,#ff3d51,#ff384d,#ff344a,#ff3047,#ff2c44,#ff2941,#ff263f,#ff223c,#ff1f3a,#ff1d38,#ff1a36,#ff1834,#ff1532,#ff1331,#ff112f,#ff0f2d,#ff0d2c,#ff0b2a,#ff0929,#ff0728,#ff0626,#ff0425,#ff0224,#ff0123,#ff0022,#ff0021,#ff0020,#ff001f,#ff001e,#ff001d,#ff001c,#ff001b)"></i><i class=r2 style="background:linear-gradient(90deg,#00ffc5,#00ffc7,#00ffc9,#0bffcb,#1dffce,#30ffd1,#43ffd3,#57ffd6,#6cffd9,#82ffdc,#99ffdf,#b1ffe3,#caffe6,#e4ffea,#ffffee,#ffe5d9,#ffcfc8,#ffbcb8,#ffabab,#ff9ca0,#ff8f95,#ff848c,#ff7984,#ff707c,#ff6776,#ff5f70,#ff586a,#ff5265,#ff4c60,#ff465b,#ff4157,#ff3c54,#ff3850,#ff334d,#ff2f4a,#ff2c47,#ff2844,#ff2541,#ff223f,#ff1f3c,#ff1c3a,#ff1938,#ff1736,#ff1534,#ff1233,#ff1031,#ff0e2f,#ff0c2e,#ff0a2c,#ff082b,#ff0729,#ff0528,#ff0427,#ff0226,#ff0124,#ff0023,#ff0022,#ff0021,#ff0020,#ff001f,#ff001e,#ff001d,#ff001d)"></i><i class=r2 style="background:linear-gradient(90deg,#00ffcb,#00ffcd,#00ffd0,#0bffd2,#1cffd5,#2fffd8,#42ffda,#57ffdd,#6cffe1,#82ffe4,#99ffe7,#b1ffeb,#caffef,#e4fff3,#fffef6,#ffe4e0,#ffcece,#ffbbbf,#ffaab1,#ff9ba5,#ff8e9a,#ff8391,#ff7888,#ff6f81,#ff667a,#ff5f73,#ff576d,#ff5168,#ff4b63,#ff455f,#ff405a,#ff3b56,#ff3753,#ff334f,#ff2f4c,#ff2b49,#ff2846,#ff2444,#ff2141,#ff1e3f,#ff1c3c,#ff193a,#ff1638,#ff1436,#ff1235,#ff1033,#ff0e31,#ff0c2f,#ff0a2e,#ff082c,#ff062b,#ff052a,#ff0328,#ff0227,#ff0026,#ff0025,#ff0024,#ff0023,#ff0022,#ff0021,#ff0020,#ff001f,#ff001e)"></i><i class=r2 style="background:linear-gradient(90deg,#00ffd1,#00ffd4,#00ffd6,#0affd9,#1cffdc,#2effdf,#42ffe2,#56ffe5,#6bffe8,#82ffec,#99ffef,#b1fff3,#cafff7,#e5fffb,#fffdfe,#ffe3e8,#ffcdd5,#ffbac5,#ffa9b7,#ff9aaa,#ff8d9f,#ff8296,#ff778d,#ff6e85,#ff657e,#ff5e77,#ff5771,#ff506c,#ff4a66,#ff4562,#ff3f5d,#ff3b59,#ff3656,#ff3252,#ff2e4f,#ff2a4c,#ff2749,#ff2446,#ff2143,#ff1e41,#ff1b3f,#ff183c,#ff163a,#ff1338,#ff1136,#ff0f35,#ff0d33,#ff0b31,#ff0930,#ff072e,#ff062d,#ff042b,#ff032a,#ff0129,#ff0028,#ff0026,#ff0025,#ff0024,#ff0023,#ff0022,#ff0021,#ff0020,#ff001f)"></i><i class=r2 style="background:linear-gradient(90deg,#00ffd7,#00ffda,#00ffdd,#09ffe0,#1bffe3,#2effe6,#41ffe9,#56ffec,#6bfff0,#81fff4,#99fff7,#b1fffb,#cafeff,#e1faff,#f9f6ff,#ffe2ef,#ffccdc,#ffb9cb,#ffa8bc,#ff99b0,#ff8ca4,#ff819a,#ff7691,#ff6d89,#ff6582,#ff5d7b,#ff5675,#ff4f6f,#ff496a,#ff4465,#ff3f60,#ff3a5c,#ff3558,#ff3155,#ff2d51,#ff2a4e,#ff264b,#ff2348,#ff2046,#ff1d43,#ff1a41,#ff183f,#ff153c,#ff133a,#ff1138,#ff0f37,#ff0d35,#ff0b33,#ff0932,#ff0730,#ff052f,#ff042d,#ff022c,#ff012a,#ff0029,#ff0028,#ff0027,#ff0026,#ff0025,#ff0024,#ff0023,#ff0022,#ff0021)"></i><i class=r2 style="background:linear-gradient(90deg,#00ffde,#00ffe1,#00ffe4,#08ffe7,#1affea,#2dffed,#41fff0,#55fff4,#6bfff8,#81fffc,#98feff,#aefaff,#c4f6ff,#daf2ff,#f1edff,#ffe1f6,#ffcbe2,#ffb8d1,#ffa7c2,#ff98b5,#ff8ba9,#ff809f,#ff7696,#ff6c8d,#ff6486,#ff5c7f,#ff5578,#ff4e73,#ff496d,#ff4368,#ff3e64,#ff395f,#ff355b,#ff3158,#ff2d54,#ff2951,#ff264e,#ff224b,#ff1f48,#ff1c46,#ff1a43,#ff1741,#ff153f,#ff123c,#ff103a,#ff0e39,#ff0c37,#ff0a35,#ff0833,#ff0632,#ff0530,#ff032f,#ff022d,#ff002c,#ff002b,#ff002a,#ff0028,#ff0027,#ff0026,#ff0025,#ff0024,#ff0023,#ff0022)"></i><i class=r2 style="background:linear-gradient(90deg,#00ffe5,#00ffe7,#00ffeb,#07ffee,#19fff1,#2cfff4,#40fff8,#55fffc,#6afeff,#7ffaff,#94f6ff,#a9f2ff,#beeeff,#d4eaff,#eae6ff,#ffe0fe,#ffcae9,#ffb7d7,#ffa6c8,#ff97ba,#ff8bae,#ff7fa4,#ff759a,#ff6b91,#ff638a,#ff5b83,#ff547c,#ff4e76,#ff4870,#ff426b,#ff3d67,#ff3862,#ff345e,#ff305a,#ff2c57,#ff2853,#ff2550,#ff224d,#ff1f4a,#ff1c48,#ff1945,#ff1743,#ff1441,#ff123e,#ff103c,#ff0d3a,#ff0b39,#ff0a37,#ff0835,#ff0634,#ff0432,#ff0330,#ff012f,#ff002e,#ff002c,#ff002b,#ff002a,#ff0029,#ff0028,#ff0026,#ff0025,#ff0024,#ff0023)"></i><i class=r2 style="background:linear-gradient(90deg,#00ffeb,#00ffee,#00fff1,#06fff5,#18fff8,#2cfffc,#3ffeff,#53fbff,#67f7ff,#7bf3ff,#8fefff,#a4ebff,#b9e6ff,#cee2ff,#e3deff,#f9daff,#ffc9f0,#ffb6de,#ffa5ce,#ff96c0,#ff8ab4,#ff7ea9,#ff749f,#ff6a96,#ff628e,#ff5a86,#ff5380,#ff4d7a,#ff4774,#ff416f,#ff3c6a,#ff3865,#ff3361,#ff2f5d,#ff2b59,#ff2856,#ff2453,#ff2150,#ff1e4d,#ff1b4a,#ff1847,#ff1645,#ff1443,#ff1141,#ff0f3e,#ff0d3c,#ff0b3b,#ff0939,#ff0737,#ff0535,#ff0434,#ff0232,#ff0131,#ff002f,#ff002e,#ff002d,#ff002b,#ff002a,#ff0029,#ff0028,#ff0027,#ff0026,#ff0025)"></i><i class=r2 style="background:linear-gradient(90deg,#00fff2,#00fff5,#00fff9,#05fffc,#18feff,#2afbff,#3df7ff,#50f3ff,#63efff,#77ebff,#8be7ff,#9fe3ff,#b3dfff,#c8dbff,#ddd7ff,#f2d3ff,#ffc8f7,#ffb5e4,#ffa4d4,#ff96c5,#ff89b9,#ff7dad,#ff73a3,#ff6a9a,#ff6192,#ff598a,#ff5283,#ff4c7d,#ff4677,#ff4172,#ff3c6d,#ff3768,#ff3264,#ff2e60,#ff2b5c,#ff2759,#ff2455,#ff2052,#ff1d4f,#ff1b4c,#ff184a,#ff1547,#ff1345,#ff1143,#ff0e40,#ff0c3e,#ff0a3c,#ff083b,#ff0739,#ff0537,#ff0335,#ff0234,#ff0032,#ff0031,#ff0030,#ff002e,#ff002d,#ff002c,#ff002a,#ff0029,#ff0028,#ff0027,#ff0026)"></i><i class=r2 style="background:linear-gradient(90deg,#00fff9,#00fffc,#00feff,#04fbff,#16f7ff,#28f3ff,#3bf0ff,#4decff,#60e8ff,#73e4ff,#87e0ff,#9adcff,#aed8ff,#c2d4ff,#d7d0ff,#ebccff,#ffc7fe,#ffb4eb,#ffa3da,#ff95cb,#ff88be,#ff7cb2,#ff72a8,#ff699e,#ff6096,#ff598e,#ff5287,#ff4b81,#ff457b,#ff4075,#ff3b70,#ff366b,#ff3267,#ff2e63,#ff2a5f,#ff265b,#ff2358,#ff2055,#ff1d51,#ff1a4f,#ff174c,#ff1549,#ff1247,#ff1045,#ff0e42,#ff0c40,#ff0a3e,#ff083c,#ff063b,#ff0439,#ff0337,#ff0136,#ff0034,#ff0033,#ff0031,#ff0030,#ff002e,#ff002d,#ff002c,#ff002b,#ff002a,#ff0029,#ff0027)"></i><i class=r2 style="background:linear-gradient(90deg,#00feff,#00fbff,#00f7ff,#03f4ff,#15f0ff,#26edff,#38e9ff,#4be5ff,#5de1ff,#70deff,#83daff,#96d6ff,#a9d2ff,#bdceff,#d1caff,#e5c6ff,#f9c1ff,#ffb3f1,#ffa2e0,#ff94d0,#ff87c3,#ff7bb7,#ff71ac,#ff68a3,#ff5f9a,#ff5892,#ff518b,#ff4a84,#ff457e,#ff3f78,#ff3a73,#ff356e,#ff316a,#ff2d65,#ff2961,#ff265e,#ff225a,#ff1f57,#ff1c54,#ff1951,#ff174e,#ff144c,#ff1249,#ff0f47,#ff0d44,#ff0b42,#ff0940,#ff073e,#ff063c,#ff043b,#ff0239,#ff0137,#ff0036,#ff0034,#ff0033,#ff0031,#ff0030,#ff002f,#ff002d,#ff002c,#ff002b,#ff002a,#ff0029)"></i><i class=r2 style="background:linear-gradient(90deg,#00f8ff,#00f4ff,#00f1ff,#02edff,#13eaff,#25e6ff,#36e2ff,#48dfff,#5adbff,#6cd7ff,#7fd3ff,#92cfff,#a5cbff,#b8c7ff,#cbc3ff,#dfbfff,#f3bbff,#ffb2f7,#ffa1e6,#ff93d6,#ff86c8,#ff7abc,#ff70b1,#ff67a7,#ff5e9e,#ff5796,#ff508f,#ff4a88,#ff4481,#ff3e7c,#ff3976,#ff3571,#ff306d,#ff2c68,#ff2864,#ff2560,#ff225d,#ff1e59,#ff1b56,#ff1953,#ff1650,#ff144e,#ff114b,#ff0f49,#ff0d46,#ff0b44,#ff0942,#ff0740,#ff053e,#ff033c,#ff023b,#ff0039,#ff0037,#ff0036,#ff0034,#ff0033,#ff0032,#ff0030,#ff002f,#ff002e,#ff002c,#ff002b,#ff002a)"></i><i class=r2 style="background:linear-gradient(90deg,#00f1ff,#00eeff,#00eaff,#01e7ff,#12e3ff,#23e0ff,#34dcff,#46d8ff,#57d5ff,#69d1ff,#7bcdff,#8ec9ff,#a0c5ff,#b3c2ff,#c6beff,#d9baff,#ecb5ff,#ffb1fe,#ffa0ec,#ff92dc,#ff85cd,#ff79c1,#ff6fb6,#ff66ab,#ff5ea2,#ff569a,#ff4f92,#ff498b,#ff4385,#ff3e7f,#ff3979,#ff3474,#ff3070,#ff2c6b,#ff2867,#ff2463,#ff215f,#ff1e5c,#ff1b59,#ff1856,#ff1553,#ff1350,#ff114d,#ff0e4b,#ff0c48,#ff0a46,#ff0844,#ff0642,#ff0540,#ff033e,#ff013c,#ff003b,#ff0039,#ff0037,#ff0036,#ff0034,#ff0033,#ff0032,#ff0030,#ff002f,#ff002e,#ff002d,#ff002c)"></i><i class=r2 style="background:linear-gradient(90deg,#00ebff,#00e7ff,#00e4ff,#00e1ff,#11ddff,#21daff,#32d6ff,#43d2ff,#55cfff,#66cbff,#78c7ff,#8ac4ff,#9cc0ff,#aebcff,#c1b8ff,#d3b4ff,#e6b0ff,#f9acff,#ff9ff2,#ff91e1,#ff84d3,#ff78c6,#ff6eba,#ff65b0,#ff5da6,#ff559e,#ff4e96,#ff488f,#ff4288,#ff3d82,#ff387d,#ff3377,#ff2f72,#ff2b6e,#ff276a,#ff2466,#ff2062,#ff1d5e,#ff1a5b,#ff1758,#ff1555,#ff1252,#ff104f,#ff0e4d,#ff0c4a,#ff0a48,#ff0846,#ff0644,#ff0442,#ff0240,#ff013e,#ff003c,#ff003b,#ff0039,#ff0038,#ff0036,#ff0035,#ff0033,#ff0032,#ff0031,#ff002f,#ff002e,#ff002d)"></i><i class=r2 style="background:linear-gradient(90deg,#00e5ff,#00e1ff,#00deff,#00dbff,#10d7ff,#20d4ff,#30d0ff,#41cdff,#52c9ff,#63c5ff,#74c2ff,#86beff,#98baff,#aab6ff,#bcb2ff,#ceafff,#e0abff,#f3a7ff,#ff9ef8,#ff90e7,#ff83d8,#ff77cb,#ff6dbf,#ff64b4,#ff5cab,#ff54a2,#ff4d9a,#ff4793,#ff418c,#ff3c86,#ff3780,#ff327a,#ff2e75,#ff2a71,#ff266c,#ff2368,#ff2064,#ff1c61,#ff1a5d,#ff175a,#ff1457,#ff1254,#ff0f52,#ff0d4f,#ff0b4c,#ff094a,#ff0748,#ff0546,#ff0444,#ff0242,#ff0040,#ff003e,#ff003c,#ff003b,#ff0039,#ff0038,#ff0036,#ff0035,#ff0033,#ff0032,#ff0031,#ff0030,#ff002e)"></i><i class=r2 style="background:linear-gradient(90deg,#00dfff,#00dcff,#00d8ff,#00d5ff,#0ed2ff,#1eceff,#2fcbff,#3fc7ff,#50c4ff,#60c0ff,#71bcff,#82b9ff,#94b5ff,#a5b1ff,#b7adff,#c9a9ff,#dba5ff,#eda1ff,#ff9dfe,#ff8eed,#ff82dd,#ff76d0,#ff6cc4,#ff63b9,#ff5baf,#ff53a6,#ff4c9e,#ff4696,#ff408f,#ff3b89,#ff3683,#ff327d,#ff2d78,#ff2974,#ff266f,#ff226b,#ff1f67,#ff1c63,#ff1960,#ff165d,#ff1459,#ff1156,#ff0f54,#ff0d51,#ff0a4f,#ff084c,#ff074a,#ff0548,#ff0346,#ff0144,#ff0042,#ff0040,#ff003e,#ff003c,#ff003b,#ff0039,#ff0038,#ff0036,#ff0035,#ff0033,#ff0032,#ff0031,#ff0030)"></i><i class=r2 style="background:linear-gradient(90deg,#00d9ff,#00d6ff,#00d3ff,#00d0ff,#0dccff,#1dc9ff,#2dc5ff,#3dc2ff,#4dbeff,#5ebbff,#6eb7ff,#7fb3ff,#90b0ff,#a1acff,#b2a8ff,#c4a4ff,#d6a1ff,#e89dff,#fa99ff,#ff8df3,#ff81e3,#ff75d5,#ff6bc8,#ff62bd,#ff5ab3,#ff52aa,#ff4ca1,#ff459a,#ff4093,#ff3a8c,#ff3586,#ff3181,#ff2d7b,#ff2976,#ff2572,#ff216e,#ff1e6a,#ff1b66,#ff1862,#ff165f,#ff135c,#ff1159,#ff0e56,#ff0c53,#ff0a51,#ff084e,#ff064c,#ff044a,#ff0247,#ff0145,#ff0043,#ff0042,#ff0040,#ff003e,#ff003c,#ff003b,#ff0039,#ff0038,#ff0036,#ff0035,#ff0034,#ff0032,#ff0031)"></i><i class=r2 style="background:linear-gradient(90deg,#00d4ff,#00d1ff,#00ceff,#00caff,#0cc7ff,#1cc4ff,#2bc0ff,#3bbdff,#4bb9ff,#5bb6ff,#6bb2ff,#7caeff,#8cabff,#9da7ff,#aea3ff,#bfa0ff,#d19cff,#e298ff,#f494ff,#ff8cf8,#ff80e8,#ff74da,#ff6acd,#ff61c2,#ff59b7,#ff52ae,#ff4ba5,#ff459d,#ff3f96,#ff3990,#ff3589,#ff3084,#ff2c7e,#ff2879,#ff2475,#ff2170,#ff1e6c,#ff1a68,#ff1865,#ff1561,#ff125e,#ff105b,#ff0e58,#ff0b55,#ff0953,#ff0750,#ff054e,#ff044b,#ff0249,#ff0047,#ff0045,#ff0043,#ff0041,#ff0040,#ff003e,#ff003c,#ff003b,#ff0039,#ff0038,#ff0036,#ff0035,#ff0034,#ff0033)"></i><i class=r2 style="background:linear-gradient(90deg,#00cfff,#00ccff,#00c9ff,#00c5ff,#0bc2ff,#1abfff,#2abbff,#39b8ff,#49b4ff,#58b1ff,#68adff,#78aaff,#89a6ff,#99a2ff,#aa9fff,#bb9bff,#cc97ff,#dd94ff,#ee90ff,#ff8bfe,#ff7fee,#ff73df,#ff69d2,#ff60c6,#ff58bc,#ff51b2,#ff4aa9,#ff44a1,#ff3e9a,#ff3993,#ff348d,#ff2f87,#ff2b81,#ff277c,#ff2477,#ff2073,#ff1d6f,#ff1a6b,#ff1767,#ff1464,#ff1260,#ff0f5d,#ff0d5a,#ff0b57,#ff0955,#ff0752,#ff0550,#ff034d,#ff014b,#ff0049,#ff0047,#ff0045,#ff0043,#ff0041,#ff0040,#ff003e,#ff003c,#ff003b,#ff0039,#ff0038,#ff0037,#ff0035,#ff0034)"></i><i class=r2 style="background:linear-gradient(90deg,#00caff,#00c7ff,#00c4ff,#00c0ff,#0abdff,#19baff,#28b6ff,#37b3ff,#47b0ff,#56acff,#66a9ff,#75a5ff,#85a2ff,#959eff,#a69aff,#b697ff,#c793ff,#d88fff,#e98bff,#fa88ff,#ff7ef3,#ff72e4,#ff68d7,#ff5fcb,#ff57c0,#ff50b6,#ff49ad,#ff43a5,#ff3d9d,#ff3896,#ff3390,#ff2f8a,#ff2a84,#ff267f,#ff237a,#ff1f76,#ff1c71,#ff196d,#ff166a,#ff1466,#ff1163,#ff0f5f,#ff0c5c,#ff0a59,#ff0857,#ff0654,#ff0452,#ff034f,#ff014d,#ff004b,#ff0049,#ff0047,#ff0045,#ff0043,#ff0041,#ff0040,#ff003e,#ff003c,#ff003b,#ff0039,#ff0038,#ff0037,#ff0035)"></i><i class=r2 style="background:linear-gradient(90deg,#00c5ff,#00c2ff,#00bfff,#00bcff,#09b8ff,#18b5ff,#27b2ff,#35aeff,#44abff,#54a8ff,#63a4ff,#72a1ff,#829dff,#929aff,#a296ff,#b292ff,#c28fff,#d38bff,#e387ff,#f484ff,#ff7df9,#ff71e9,#ff67dc,#ff5ecf,#ff56c4,#ff4fba,#ff48b1,#ff42a9,#ff3ca1,#ff379a,#ff3293,#ff2e8d,#ff2a87,#ff2682,#ff227d,#ff1f78,#ff1b74,#ff1870,#ff166c,#ff1368,#ff1065,#ff0e62,#ff0c5f,#ff0a5c,#ff0859,#ff0656,#ff0454,#ff0251,#ff004f,#ff004d,#ff004a,#ff0048,#ff0047,#ff0045,#ff0043,#ff0041,#ff003f,#ff003e,#ff003c,#ff003b,#ff0039,#ff0038,#ff0037)"></i><i class=r2 style="background:linear-gradient(90deg,#00c1ff,#00bdff,#00baff,#00b7ff,#08b4ff,#17b1ff,#25adff,#34aaff,#42a7ff,#51a3ff,#60a0ff,#709cff,#7f99ff,#8e95ff,#9e92ff,#ae8eff,#be8bff,#ce87ff,#de83ff,#ef80ff,#ff7cfe,#ff70ef,#ff66e1,#ff5dd4,#ff55c9,#ff4ebe,#ff47b5,#ff41ac,#ff3ba4,#ff369d,#ff3196,#ff2d90,#ff298a,#ff2585,#ff2180,#ff1e7b,#ff1b77,#ff1872,#ff156e,#ff126b,#ff1067,#ff0d64,#ff0b61,#ff095e,#ff075b,#ff0558,#ff0356,#ff0153,#ff0051,#ff004e,#ff004c,#ff004a,#ff0048,#ff0046,#ff0044,#ff0043,#ff0041,#ff003f,#ff003e,#ff003c,#ff003b,#ff0039,#ff0038)"></i><i class=r2 style="background:linear-gradient(90deg,#00bcff,#00b9ff,#00b6ff,#00b3ff,#07afff,#16acff,#24a9ff,#32a6ff,#41a2ff,#4f9fff,#5e9cff,#6d98ff,#7c95ff,#8b91ff,#9b8eff,#aa8aff,#ba87ff,#ca83ff,#da80ff,#ea7cff,#fa78ff,#ff6ff4,#ff65e6,#ff5cd9,#ff54cd,#ff4dc2,#ff46b9,#ff40b0,#ff3ba8,#ff35a1,#ff319a,#ff2c93,#ff288d,#ff2488,#ff2183,#ff1d7e,#ff1a79,#ff1775,#ff1471,#ff126d,#ff0f6a,#ff0d66,#ff0b63,#ff0860,#ff065d,#ff045a,#ff0357,#ff0155,#ff0053,#ff0050,#ff004e,#ff004c,#ff004a,#ff0048,#ff0046,#ff0044,#ff0043,#ff0041,#ff003f,#ff003e,#ff003c,#ff003b,#ff003a)"></i><i class=r2 style="background:linear-gradient(90deg,#00b8ff,#00b5ff,#00b2ff,#00aeff,#07abff,#14a8ff,#22a5ff,#30a2ff,#3f9eff,#4d9bff,#5c98ff,#6a94ff,#7991ff,#888eff,#978aff,#a687ff,#b683ff,#c580ff,#d57cff,#e578ff,#f575ff,#ff6ef9,#ff64ea,#ff5bdd,#ff53d1,#ff4cc7,#ff45bd,#ff3fb4,#ff3aac,#ff35a4,#ff309d,#ff2b96,#ff2790,#ff238b,#ff2085,#ff1d80,#ff197c,#ff1677,#ff1473,#ff116f,#ff0f6c,#ff0c68,#ff0a65,#ff0862,#ff065f,#ff045c,#ff0259,#ff0057,#ff0054,#ff0052,#ff0050,#ff004e,#ff004c,#ff004a,#ff0048,#ff0046,#ff0044,#ff0042,#ff0041,#ff003f,#ff003e,#ff003c,#ff003b)"></i><i class=r2 style="background:linear-gradient(90deg,#00b3ff,#00b0ff,#00adff,#00aaff,#06a7ff,#13a4ff,#21a1ff,#2f9eff,#3d9aff,#4b97ff,#5994ff,#6891ff,#768dff,#858aff,#9486ff,#a383ff,#b27fff,#c17cff,#d078ff,#e075ff,#f071ff,#ff6dfe,#ff63ef,#ff5ae2,#ff52d6,#ff4bcb,#ff44c1,#ff3eb8,#ff39af,#ff34a7,#ff2fa0,#ff2b9a,#ff2793,#ff238e,#ff1f88,#ff1c83,#ff197e,#ff167a,#ff1376,#ff1072,#ff0e6e,#ff0c6b,#ff0967,#ff0764,#ff0561,#ff035e,#ff025b,#ff0059,#ff0056,#ff0054,#ff0052,#ff004f,#ff004d,#ff004b,#ff0049,#ff0048,#ff0046,#ff0044,#ff0042,#ff0041,#ff003f,#ff003e,#ff003c)"></i><i class=r2 style="background:linear-gradient(90deg,#00afff,#00acff,#00a9ff,#00a6ff,#05a3ff,#12a0ff,#209dff,#2d9aff,#3b97ff,#4993ff,#5790ff,#658dff,#738aff,#8286ff,#9083ff,#9f7fff,#ae7cff,#bd78ff,#cc75ff,#db71ff,#eb6eff,#fa6aff,#ff62f4,#ff59e7,#ff51da,#ff4acf,#ff44c5,#ff3ebb,#ff38b3,#ff33ab,#ff2ea4,#ff2a9d,#ff2696,#ff2291,#ff1e8b,#ff1b86,#ff1881,#ff157d,#ff1278,#ff1074,#ff0d70,#ff0b6d,#ff0969,#ff0766,#ff0563,#ff0360,#ff015d,#ff005b,#ff0058,#ff0056,#ff0053,#ff0051,#ff004f,#ff004d,#ff004b,#ff0049,#ff0047,#ff0046,#ff0044,#ff0042,#ff0041,#ff003f,#ff003e)"></i><i class=r2 style="background:linear-gradient(90deg,#00abff,#00a8ff,#00a5ff,#00a2ff,#049fff,#119cff,#1f99ff,#2c96ff,#3a93ff,#4790ff,#558dff,#6389ff,#7186ff,#7f83ff,#8d7fff,#9c7cff,#aa79ff,#b975ff,#c872ff,#d76eff,#e66bff,#f567ff,#ff61f9,#ff58eb,#ff50df,#ff49d3,#ff43c9,#ff3dbf,#ff37b6,#ff32ae,#ff2da7,#ff29a0,#ff259a,#ff2194,#ff1e8e,#ff1a89,#ff1784,#ff147f,#ff127b,#ff0f77,#ff0d73,#ff0a6f,#ff086c,#ff0668,#ff0465,#ff0262,#ff005f,#ff005d,#ff005a,#ff0058,#ff0055,#ff0053,#ff0051,#ff004f,#ff004d,#ff004b,#ff0049,#ff0047,#ff0045,#ff0044,#ff0042,#ff0041,#ff003f)"></i><i class=r2 style="background:linear-gradient(90deg,#00a8ff,#00a5ff,#00a2ff,#009fff,#039cff,#1099ff,#1d96ff,#2b92ff,#388fff,#458cff,#5389ff,#6186ff,#6e83ff,#7c7fff,#8a7cff,#9879ff,#a775ff,#b572ff,#c46eff,#d26bff,#e168ff,#f064ff,#ff60ff,#ff57f0,#ff50e3,#ff48d8,#ff42cd,#ff3cc3,#ff36ba,#ff31b2,#ff2daa,#ff28a3,#ff249d,#ff2097,#ff1d91,#ff1a8b,#ff1786,#ff1482,#ff117d,#ff0e79,#ff0c75,#ff0a71,#ff076e,#ff056b,#ff0367,#ff0264,#ff0061,#ff005f,#ff005c,#ff0059,#ff0057,#ff0055,#ff0053,#ff0050,#ff004e,#ff004c,#ff004b,#ff0049,#ff0047,#ff0045,#ff0044,#ff0042,#ff0041)"></i><i class=r2 style="background:linear-gradient(90deg,#00a4ff,#00a1ff,#009eff,#009bff,#0398ff,#0f95ff,#1c92ff,#298fff,#368cff,#4489ff,#5186ff,#5e82ff,#6c7fff,#7a7cff,#8779ff,#9575ff,#a372ff,#b16fff,#c06bff,#ce68ff,#dd65ff,#ec61ff,#fa5eff,#ff56f5,#ff4fe8,#ff47dc,#ff41d1,#ff3bc7,#ff35be,#ff30b5,#ff2cae,#ff27a6,#ff23a0,#ff209a,#ff1c94,#ff198e,#ff1689,#ff1384,#ff1080,#ff0e7c,#ff0b78,#ff0974,#ff0770,#ff056d,#ff0369,#ff0166,#ff0063,#ff0061,#ff005e,#ff005b,#ff0059,#ff0057,#ff0054,#ff0052,#ff0050,#ff004e,#ff004c,#ff004a,#ff0048,#ff0047,#ff0045,#ff0044,#ff0042)"></i><i class=r2 style="background:linear-gradient(90deg,#00a0ff,#009dff,#009aff,#0098ff,#0295ff,#0e92ff,#1b8fff,#288cff,#3589ff,#4285ff,#4f82ff,#5c7fff,#697cff,#7779ff,#8476ff,#9272ff,#a06fff,#ae6cff,#bc68ff,#ca65ff,#d962ff,#e75eff,#f65bff,#ff55fa,#ff4eec,#ff46e0,#ff40d5,#ff3acb,#ff35c1,#ff30b9,#ff2bb1,#ff27aa,#ff23a3,#ff1f9c,#ff1b97,#ff1891,#ff158c,#ff1287,#ff1082,#ff0d7e,#ff0b7a,#ff0876,#ff0672,#ff046f,#ff026c,#ff0068,#ff0065,#ff0063,#ff0060,#ff005d,#ff005b,#ff0058,#ff0056,#ff0054,#ff0052,#ff0050,#ff004e,#ff004c,#ff004a,#ff0048,#ff0047,#ff0045,#ff0043)"></i><i class=r2 style="background:linear-gradient(90deg,#009dff,#009aff,#0097ff,#0094ff,#0191ff,#0e8eff,#1a8bff,#2788ff,#3385ff,#4082ff,#4d7fff,#5a7cff,#6779ff,#7476ff,#8273ff,#8f6fff,#9d6cff,#aa69ff,#b866ff,#c662ff,#d45fff,#e35bff,#f158ff,#ff54ff,#ff4df1,#ff45e4,#ff3fd9,#ff39cf,#ff34c5,#ff2fbc,#ff2ab4,#ff26ad,#ff22a6,#ff1ea0,#ff1b99,#ff1794,#ff148f,#ff128a,#ff0f85,#ff0c80,#ff0a7c,#ff0878,#ff0675,#ff0471,#ff026e,#ff006a,#ff0067,#ff0064,#ff0062,#ff005f,#ff005c,#ff005a,#ff0058,#ff0055,#ff0053,#ff0051,#ff004f,#ff004d,#ff004c,#ff004a,#ff0048,#ff0046,#ff0045)"></i><i class=r2 style="background:linear-gradient(90deg,#0099ff,#0097ff,#0094ff,#0091ff,#018eff,#0d8bff,#1988ff,#2585ff,#3282ff,#3e7fff,#4b7cff,#5879ff,#6576ff,#7273ff,#7f70ff,#8c6cff,#9a69ff,#a766ff,#b563ff,#c25fff,#d05cff,#de59ff,#ec55ff,#fb52ff,#ff4cf5,#ff44e9,#ff3edd,#ff38d3,#ff33c9,#ff2ec0,#ff29b8,#ff25b0,#ff21a9,#ff1da3,#ff1a9c,#ff1797,#ff1491,#ff118c,#ff0e87,#ff0c83,#ff097f,#ff077b,#ff0577,#ff0373,#ff0170,#ff006d,#ff0069,#ff0066,#ff0064,#ff0061,#ff005e,#ff005c,#ff0059,#ff0057,#ff0055,#ff0053,#ff0051,#ff004f,#ff004d,#ff004b,#ff004a,#ff0048,#ff0046)"></i><i class=r2 style="background:linear-gradient(90deg,#0096ff,#0093ff,#0090ff,#008eff,#008bff,#0c88ff,#1885ff,#2482ff,#307fff,#3d7cff,#4979ff,#5676ff,#6373ff,#7070ff,#7c6dff,#896aff,#9766ff,#a463ff,#b160ff,#bf5dff,#cc59ff,#da56ff,#e853ff,#f64fff,#ff4bfa,#ff44ed,#ff3de1,#ff37d7,#ff32cd,#ff2dc4,#ff28bb,#ff24b3,#ff20ac,#ff1da6,#ff199f,#ff1699,#ff1394,#ff108f,#ff0e8a,#ff0b85,#ff0981,#ff077d,#ff0479,#ff0275,#ff0072,#ff006f,#ff006b,#ff0068,#ff0066,#ff0063,#ff0060,#ff005e,#ff005b,#ff0059,#ff0057,#ff0055,#ff0052,#ff0051,#ff004f,#ff004d,#ff004b,#ff0049,#ff0048)"></i><i class=r2 style="background:linear-gradient(90deg,#0093ff,#0090ff,#008dff,#008bff,#0088ff,#0b85ff,#1782ff,#237fff,#2f7cff,#3b79ff,#4876ff,#5473ff,#6170ff,#6d6dff,#7a6aff,#8767ff,#9464ff,#a161ff,#ae5dff,#bb5aff,#c957ff,#d654ff,#e450ff,#f14dff,#ff4aff,#ff43f1,#ff3ce5,#ff36da,#ff31d0,#ff2cc7,#ff28bf,#ff23b7,#ff1faf,#ff1ca9,#ff18a2,#ff159c,#ff1297,#ff1091,#ff0d8c,#ff0a88,#ff0883,#ff067f,#ff047b,#ff0278,#ff0074,#ff0071,#ff006d,#ff006a,#ff0067,#ff0065,#ff0062,#ff005f,#ff005d,#ff005b,#ff0058,#ff0056,#ff0054,#ff0052,#ff0050,#ff004e,#ff004c,#ff004b,#ff0049)"></i><i class=r2 style="background:linear-gradient(90deg,#0090ff,#008dff,#008aff,#0087ff,#0085ff,#0a82ff,#167fff,#227cff,#2e79ff,#3a76ff,#4673ff,#5270ff,#5f6dff,#6b6aff,#7767ff,#8464ff,#9161ff,#9e5eff,#ab5bff,#b858ff,#c554ff,#d251ff,#e04eff,#ed4bff,#fb47ff,#ff42f6,#ff3bea,#ff35de,#ff30d4,#ff2bcb,#ff27c2,#ff23ba,#ff1fb3,#ff1bac,#ff18a5,#ff159f,#ff1299,#ff0f94,#ff0c8f,#ff0a8a,#ff0786,#ff0582,#ff037e,#ff017a,#ff0076,#ff0073,#ff006f,#ff006c,#ff0069,#ff0067,#ff0064,#ff0061,#ff005f,#ff005c,#ff005a,#ff0058,#ff0056,#ff0054,#ff0052,#ff0050,#ff004e,#ff004c,#ff004b)"></i><i class=r2 style="background:linear-gradient(90deg,#008dff,#008aff,#0087ff,#0085ff,#0082ff,#0a7fff,#157cff,#2179ff,#2d76ff,#3873ff,#4471ff,#506eff,#5d6bff,#6968ff,#7565ff,#8262ff,#8e5fff,#9b5bff,#a758ff,#b455ff,#c152ff,#ce4fff,#dc4cff,#e948ff,#f645ff,#ff41fa,#ff3aee,#ff34e2,#ff2fd8,#ff2ace,#ff26c6,#ff22bd,#ff1eb6,#ff1aaf,#ff17a8,#ff14a2,#ff119c,#ff0e97,#ff0c92,#ff098d,#ff0788,#ff0584,#ff0380,#ff017c,#ff0078,#ff0075,#ff0072,#ff006e,#ff006b,#ff0068,#ff0066,#ff0063,#ff0060,#ff005e,#ff005c,#ff0059,#ff0057,#ff0055,#ff0053,#ff0051,#ff004f,#ff004e,#ff004c)"></i><i class=r2 style="background:linear-gradient(90deg,#008aff,#0087ff,#0084ff,#0082ff,#007fff,#097cff,#1479ff,#2076ff,#2b74ff,#3771ff,#436eff,#4f6bff,#5b68ff,#6765ff,#7362ff,#7f5fff,#8b5cff,#9859ff,#a456ff,#b153ff,#be50ff,#cb4dff,#d849ff,#e546ff,#f243ff,#ff40ff,#ff39f2,#ff34e6,#ff2edc,#ff29d2,#ff25c9,#ff21c1,#ff1db9,#ff19b2,#ff16ab,#ff13a5,#ff109f,#ff0d99,#ff0b94,#ff088f,#ff068b,#ff0486,#ff0282,#ff007e,#ff007a,#ff0077,#ff0074,#ff0070,#ff006d,#ff006a,#ff0068,#ff0065,#ff0062,#ff0060,#ff005d,#ff005b,#ff0059,#ff0057,#ff0055,#ff0053,#ff0051,#ff004f,#ff004d)"></i><i class=r2 style="background:linear-gradient(90deg,#0087ff,#0084ff,#0082ff,#007fff,#007cff,#0879ff,#1377ff,#1f74ff,#2a71ff,#366eff,#416bff,#4d68ff,#5966ff,#6563ff,#7160ff,#7d5dff,#895aff,#9557ff,#a154ff,#ae51ff,#ba4dff,#c74aff,#d447ff,#e144ff,#ee41ff,#fb3eff,#ff38f6,#ff33ea,#ff2de0,#ff29d6,#ff24cd,#ff20c4,#ff1cbc,#ff19b5,#ff15ae,#ff12a8,#ff0fa2,#ff0d9c,#ff0a97,#ff0892,#ff058d,#ff0389,#ff0184,#ff0080,#ff007d,#ff0079,#ff0076,#ff0072,#ff006f,#ff006c,#ff0069,#ff0067,#ff0064,#ff0062,#ff005f,#ff005d,#ff005b,#ff0058,#ff0056,#ff0054,#ff0052,#ff0051,#ff004f)"></i><i class=r2 style="background:linear-gradient(90deg,#0084ff,#0081ff,#007fff,#007cff,#0079ff,#0777ff,#1274ff,#1e71ff,#296eff,#346cff,#4069ff,#4b66ff,#5763ff,#6360ff,#6e5dff,#7a5aff,#8657ff,#9254ff,#9f51ff,#ab4eff,#b74bff,#c448ff,#d045ff,#dd42ff,#ea3fff,#f73cff,#ff37fb,#ff32ef,#ff2ce4,#ff28d9,#ff23d0,#ff1fc7,#ff1bbf,#ff18b8,#ff15b1,#ff12ab,#ff0fa4,#ff0c9f,#ff0999,#ff0794,#ff058f,#ff038b,#ff0187,#ff0083,#ff007f,#ff007b,#ff0078,#ff0074,#ff0071,#ff006e,#ff006b,#ff0068,#ff0066,#ff0063,#ff0061,#ff005e,#ff005c,#ff005a,#ff0058,#ff0056,#ff0054,#ff0052,#ff0050)"></i><i class=r2 style="background:linear-gradient(90deg,#0081ff,#007fff,#007cff,#0079ff,#0077ff,#0774ff,#1271ff,#1d6fff,#286cff,#3369ff,#3e66ff,#4a63ff,#5561ff,#615eff,#6c5bff,#7858ff,#8455ff,#9052ff,#9c4fff,#a84cff,#b449ff,#c046ff,#cd43ff,#d940ff,#e63dff,#f23aff,#ff36ff,#ff31f3,#ff2ce7,#ff27dd,#ff22d4,#ff1ecb,#ff1bc3,#ff17bb,#ff14b4,#ff11ad,#ff0ea7,#ff0ba1,#ff099c,#ff0697,#ff0492,#ff028d,#ff0089,#ff0085,#ff0081,#ff007d,#ff007a,#ff0076,#ff0073,#ff0070,#ff006d,#ff006a,#ff0068,#ff0065,#ff0062,#ff0060,#ff005e,#ff005c,#ff0059,#ff0057,#ff0055,#ff0054,#ff0052)"></i><i class=r2 style="background:linear-gradient(90deg,#007fff,#007cff,#007aff,#0077ff,#0074ff,#0672ff,#116fff,#1c6cff,#2769ff,#3267ff,#3d64ff,#4861ff,#535eff,#5f5bff,#6a59ff,#7656ff,#8153ff,#8d50ff,#994dff,#a54aff,#b147ff,#bd44ff,#c941ff,#d53eff,#e23bff,#ee38ff,#fb35ff,#ff30f7,#ff2beb,#ff26e1,#ff22d7,#ff1ece,#ff1ac6,#ff16be,#ff13b7,#ff10b0,#ff0daa,#ff0ba4,#ff089f,#ff0699,#ff0394,#ff0190,#ff008b,#ff0087,#ff0083,#ff007f,#ff007c,#ff0078,#ff0075,#ff0072,#ff006f,#ff006c,#ff0069,#ff0067,#ff0064,#ff0062,#ff005f,#ff005d,#ff005b,#ff0059,#ff0057,#ff0055,#ff0053)"></i><i class=r2 style="background:linear-gradient(90deg,#007cff,#007aff,#0077ff,#0074ff,#0072ff,#056fff,#106cff,#1b6aff,#2667ff,#3064ff,#3b62ff,#475fff,#525cff,#5d59ff,#6856ff,#7454ff,#7f51ff,#8b4eff,#964bff,#a248ff,#ae45ff,#ba42ff,#c63fff,#d23cff,#de39ff,#ea36ff,#f733ff,#ff2ffb,#ff2aef,#ff25e4,#ff21db,#ff1dd2,#ff19c9,#ff15c1,#ff12ba,#ff0fb3,#ff0cad,#ff0aa7,#ff07a1,#ff059c,#ff0397,#ff0192,#ff008e,#ff0089,#ff0085,#ff0081,#ff007e,#ff007a,#ff0077,#ff0074,#ff0071,#ff006e,#ff006b,#ff0068,#ff0066,#ff0063,#ff0061,#ff005f,#ff005d,#ff005b,#ff0058,#ff0057,#ff0055)"></i><i class=r2 style="background:linear-gradient(90deg,#007aff,#0077ff,#0075ff,#0072ff,#006fff,#056dff,#0f6aff,#1a67ff,#2565ff,#2f62ff,#3a5fff,#455dff,#505aff,#5b57ff,#6654ff,#7151ff,#7d4fff,#884cff,#9449ff,#9f46ff,#ab43ff,#b740ff,#c33dff,#ce3aff,#da37ff,#e734ff,#f331ff,#ff2eff,#ff29f3,#ff24e8,#ff20de,#ff1cd5,#ff18cc,#ff15c4,#ff11bd,#ff0fb6,#ff0cb0,#ff09aa,#ff07a4,#ff049e,#ff0299,#ff0094,#ff0090,#ff008c,#ff0087,#ff0084,#ff0080,#ff007c,#ff0079,#ff0076,#ff0073,#ff0070,#ff006d,#ff006a,#ff0068,#ff0065,#ff0063,#ff0060,#ff005e,#ff005c,#ff005a,#ff0058,#ff0056)"></i><i class=r2 style="background:linear-gradient(90deg,#0077ff,#0075ff,#0072ff,#0070ff,#006dff,#046aff,#0f68ff,#1965ff,#2462ff,#2e60ff,#395dff,#445aff,#4e58ff,#5955ff,#6452ff,#6f4fff,#7b4dff,#864aff,#9147ff,#9d44ff,#a841ff,#b43eff,#bf3bff,#cb38ff,#d735ff,#e332ff,#ef2fff,#fb2cff,#ff28f7,#ff23ec,#ff1fe2,#ff1bd8,#ff17d0,#ff14c8,#ff11c0,#ff0eb9,#ff0bb2,#ff08ac,#ff06a6,#ff04a1,#ff019c,#ff0097,#ff0092,#ff008e,#ff008a,#ff0086,#ff0082,#ff007e,#ff007b,#ff0078,#ff0075,#ff0072,#ff006f,#ff006c,#ff0069,#ff0067,#ff0064,#ff0062,#ff0060,#ff005e,#ff005c,#ff0059,#ff0058)"></i><i class=r2 style="background:linear-gradient(90deg,#0075ff,#0072ff,#0070ff,#006dff,#006bff,#0468ff,#0e66ff,#1863ff,#2360ff,#2d5eff,#385bff,#4258ff,#4d56ff,#5853ff,#6250ff,#6d4dff,#784bff,#8448ff,#8f45ff,#9a42ff,#a53fff,#b13cff,#bc39ff,#c837ff,#d334ff,#df31ff,#eb2eff,#f72bff,#ff27fb,#ff22f0,#ff1ee5,#ff1adc,#ff16d3,#ff13cb,#ff10c3,#ff0dbc,#ff0ab5,#ff08af,#ff05a9,#ff03a3,#ff019e,#ff0099,#ff0095,#ff0090,#ff008c,#ff0088,#ff0084,#ff0080,#ff007d,#ff007a,#ff0076,#ff0073,#ff0070,#ff006e,#ff006b,#ff0068,#ff0066,#ff0064,#ff0061,#ff005f,#ff005d,#ff005b,#ff0059)"></i><i class=r2 style="background:linear-gradient(90deg,#0072ff,#0070ff,#006dff,#006bff,#0068ff,#0366ff,#0d63ff,#1761ff,#225eff,#2c5cff,#3659ff,#4156ff,#4b54ff,#5651ff,#614eff,#6b4bff,#7649ff,#8146ff,#8c43ff,#9740ff,#a33dff,#ae3bff,#b938ff,#c535ff,#d032ff,#dc2fff,#e72cff,#f329ff,#ff26ff,#ff21f4,#ff1de9,#ff19df,#ff16d6,#ff12ce,#ff0fc6,#ff0cbf,#ff09b8,#ff07b2,#ff04ac,#ff02a6,#ff00a1,#ff009c,#ff0097,#ff0092,#ff008e,#ff008a,#ff0086,#ff0082,#ff007f,#ff007c,#ff0078,#ff0075,#ff0072,#ff006f,#ff006d,#ff006a,#ff0068,#ff0065,#ff0063,#ff0061,#ff005f,#ff005c,#ff005a)"></i><i class=r2 style="background:linear-gradient(90deg,#0070ff,#006eff,#006bff,#0069ff,#0066ff,#0264ff,#0c61ff,#165fff,#215cff,#2b59ff,#3557ff,#3f54ff,#4a52ff,#544fff,#5f4cff,#6a49ff,#7447ff,#7f44ff,#8a41ff,#953eff,#a03cff,#ab39ff,#b636ff,#c233ff,#cd30ff,#d82dff,#e42aff,#ef27ff,#fb24ff,#ff20f7,#ff1ced,#ff18e3,#ff15da,#ff11d1,#ff0ec9,#ff0bc2,#ff09bb,#ff06b4,#ff04ae,#ff02a9,#ff00a3,#ff009e,#ff0099,#ff0095,#ff0090,#ff008c,#ff0088,#ff0084,#ff0081,#ff007d,#ff007a,#ff0077,#ff0074,#ff0071,#ff006e,#ff006c,#ff0069,#ff0067,#ff0065,#ff0062,#ff0060,#ff005e,#ff005c)"></i><i class=r2 style="background:linear-gradient(90deg,#006eff,#006cff,#0069ff,#0067ff,#0064ff,#0262ff,#0c5fff,#165dff,#205aff,#2a57ff,#3455ff,#3e52ff,#4850ff,#534dff,#5d4aff,#6848ff,#7245ff,#7d42ff,#883fff,#923dff,#9d3aff,#a837ff,#b334ff,#be31ff,#ca2fff,#d52cff,#e029ff,#ec26ff,#f723ff,#ff20fb,#ff1bf0,#ff18e6,#ff14dd,#ff11d4,#ff0ecc,#ff0bc5,#ff08be,#ff05b7,#ff03b1,#ff01ab,#ff00a6,#ff00a0,#ff009c,#ff0097,#ff0093,#ff008e,#ff008a,#ff0087,#ff0083,#ff007f,#ff007c,#ff0079,#ff0076,#ff0073,#ff0070,#ff006e,#ff006b,#ff0068,#ff0066,#ff0064,#ff0062,#ff005f,#ff005d)"></i><i class=r2 style="background:linear-gradient(90deg,#006cff,#0069ff,#0067ff,#0064ff,#0062ff,#0160ff,#0b5dff,#155bff,#1f58ff,#2955ff,#3353ff,#3d50ff,#474eff,#514bff,#5c48ff,#6646ff,#7043ff,#7b40ff,#853eff,#903bff,#9b38ff,#a635ff,#b133ff,#bc30ff,#c72dff,#d22aff,#dd27ff,#e824ff,#f422ff,#ff1fff,#ff1af4,#ff17ea,#ff13e0,#ff10d8,#ff0dcf,#ff0ac8,#ff07c1,#ff05ba,#ff02b4,#ff00ae,#ff00a8,#ff00a3,#ff009e,#ff0099,#ff0095,#ff0090,#ff008c,#ff0089,#ff0085,#ff0081,#ff007e,#ff007b,#ff0078,#ff0075,#ff0072,#ff006f,#ff006d,#ff006a,#ff0068,#ff0065,#ff0063,#ff0061,#ff005f)"></i><i class=r2 style="background:linear-gradient(90deg,#006aff,#0067ff,#0065ff,#0062ff,#0060ff,#015eff,#0a5bff,#1459ff,#1e56ff,#2854ff,#3251ff,#3c4eff,#464cff,#5049ff,#5a47ff,#6444ff,#6e41ff,#793fff,#833cff,#8e39ff,#9837ff,#a334ff,#ae31ff,#b92eff,#c42cff,#cf29ff,#da26ff,#e523ff,#f020ff,#fb1dff,#ff1af8,#ff16ed,#ff12e4,#ff0fdb,#ff0cd3,#ff09cb,#ff06c4,#ff04bd,#ff02b6,#ff00b0,#ff00ab,#ff00a5,#ff00a0,#ff009c,#ff0097,#ff0093,#ff008f,#ff008b,#ff0087,#ff0083,#ff0080,#ff007d,#ff007a,#ff0077,#ff0074,#ff0071,#ff006e,#ff006c,#ff0069,#ff0067,#ff0065,#ff0062,#ff0060)"></i><i class=r2 style="background:linear-gradient(90deg,#0068ff,#0065ff,#0063ff,#0060ff,#005eff,#005cff,#0a59ff,#1357ff,#1d54ff,#2752ff,#304fff,#3a4dff,#444aff,#4e47ff,#5845ff,#6242ff,#6d40ff,#773dff,#813aff,#8c38ff,#9635ff,#a132ff,#ab30ff,#b62dff,#c12aff,#cb27ff,#d624ff,#e122ff,#ec1fff,#f81cff,#ff19fb,#ff15f1,#ff11e7,#ff0ede,#ff0bd6,#ff08ce,#ff06c6,#ff03c0,#ff01b9,#ff00b3,#ff00ad,#ff00a8,#ff00a3,#ff009e,#ff0099,#ff0095,#ff0091,#ff008d,#ff0089,#ff0085,#ff0082,#ff007f,#ff007b,#ff0078,#ff0075,#ff0073,#ff0070,#ff006d,#ff006b,#ff0068,#ff0066,#ff0064,#ff0062)"></i><i class=r2 style="background:linear-gradient(90deg,#0066ff,#0063ff,#0061ff,#005eff,#005cff,#005aff,#0957ff,#1355ff,#1c52ff,#2650ff,#2f4dff,#394bff,#4348ff,#4d46ff,#5743ff,#6141ff,#6b3eff,#753bff,#7f39ff,#8936ff,#9433ff,#9e31ff,#a92eff,#b32bff,#be29ff,#c826ff,#d323ff,#de20ff,#e91dff,#f41bff,#ff18ff,#ff14f4,#ff11ea,#ff0de1,#ff0ad9,#ff08d1,#ff05c9,#ff02c2,#ff00bc,#ff00b6,#ff00b0,#ff00aa,#ff00a5,#ff00a0,#ff009b,#ff0097,#ff0093,#ff008f,#ff008b,#ff0087,#ff0084,#ff0080,#ff007d,#ff007a,#ff0077,#ff0074,#ff0072,#ff006f,#ff006c,#ff006a,#ff0068,#ff0065,#ff0063)"></i><i class=r2 style="background:linear-gradient(90deg,#0064ff,#0061ff,#005fff,#005cff,#005aff,#0058ff,#0955ff,#1253ff,#1b50ff,#254eff,#2e4cff,#3849ff,#4247ff,#4b44ff,#5541ff,#5f3fff,#693cff,#733aff,#7d37ff,#8735ff,#9132ff,#9c2fff,#a62dff,#b02aff,#bb27ff,#c524ff,#d022ff,#db1fff,#e61cff,#f019ff,#fb17ff,#ff13f8,#ff10ee,#ff0ce5,#ff0adc,#ff07d4,#ff04cc,#ff02c5,#ff00be,#ff00b8,#ff00b2,#ff00ad,#ff00a7,#ff00a2,#ff009e,#ff0099,#ff0095,#ff0091,#ff008d,#ff0089,#ff0086,#ff0082,#ff007f,#ff007c,#ff0079,#ff0076,#ff0073,#ff0071,#ff006e,#ff006c,#ff0069,#ff0067,#ff0065)"></i><i class=r2 style="background:linear-gradient(90deg,#0062ff,#005fff,#005dff,#005bff,#0058ff,#0056ff,#0853ff,#1151ff,#1b4fff,#244cff,#2d4aff,#3747ff,#4045ff,#4a42ff,#5440ff,#5d3dff,#673bff,#7138ff,#7b36ff,#8533ff,#8f30ff,#992eff,#a42bff,#ae28ff,#b826ff,#c323ff,#cd20ff,#d81eff,#e21bff,#ed18ff,#f815ff,#ff12fb,#ff0ff1,#ff0ce8,#ff09df,#ff06d7,#ff03cf,#ff01c8,#ff00c1,#ff00bb,#ff00b5,#ff00af,#ff00aa,#ff00a5,#ff00a0,#ff009b,#ff0097,#ff0093,#ff008f,#ff008b,#ff0088,#ff0084,#ff0081,#ff007e,#ff007b,#ff0078,#ff0075,#ff0072,#ff0070,#ff006d,#ff006b,#ff0068,#ff0066)"></i><i class=r2 style="background:linear-gradient(90deg,#0060ff,#005dff,#005bff,#0059ff,#0056ff,#0054ff,#0752ff,#114fff,#1a4dff,#234bff,#2c48ff,#3646ff,#3f43ff,#4941ff,#523eff,#5c3cff,#6639ff,#6f37ff,#7934ff,#8332ff,#8d2fff,#972cff,#a12aff,#ab27ff,#b524ff,#c022ff,#ca1fff,#d51cff,#df1aff,#ea17ff,#f414ff,#ff11ff,#ff0ef5,#ff0beb,#ff08e2,#ff05da,#ff03d2,#ff00cb,#ff00c4,#ff00bd,#ff00b7,#ff00b2,#ff00ac,#ff00a7,#ff00a2,#ff009e,#ff0099,#ff0095,#ff0091,#ff008d,#ff0089,#ff0086,#ff0083,#ff007f,#ff007c,#ff0079,#ff0077,#ff0074,#ff0071,#ff006f,#ff006c,#ff006a,#ff0068)"></i><i class=r2 style="background:linear-gradient(90deg,#005eff,#005cff,#0059ff,#0057ff,#0055ff,#0052ff,#0750ff,#104eff,#194bff,#2249ff,#2b46ff,#3544ff,#3e42ff,#473fff,#513dff,#5a3aff,#6438ff,#6e35ff,#7733ff,#8130ff,#8b2eff,#952bff,#9f28ff,#a926ff,#b323ff,#bd20ff,#c71eff,#d21bff,#dc18ff,#e616ff,#f113ff,#fb10ff,#ff0df8,#ff0aee,#ff07e5,#ff04dd,#ff02d5,#ff00ce,#ff00c7,#ff00c0,#ff00ba,#ff00b4,#ff00af,#ff00a9,#ff00a4,#ff00a0,#ff009b,#ff0097,#ff0093,#ff008f,#ff008b,#ff0088,#ff0085,#ff0081,#ff007e,#ff007b,#ff0078,#ff0076,#ff0073,#ff0070,#ff006e,#ff006c,#ff0069)"></i><i class=r2 style="background:linear-gradient(90deg,#005cff,#005aff,#0057ff,#0055ff,#0053ff,#0051ff,#064eff,#0f4cff,#184aff,#2147ff,#2a45ff,#3442ff,#3d40ff,#463eff,#4f3bff,#5939ff,#6236ff,#6c34ff,#7531ff,#7f2fff,#892cff,#932aff,#9c27ff,#a624ff,#b022ff,#ba1fff,#c41dff,#cf1aff,#d917ff,#e315ff,#ed12ff,#f80fff,#ff0cfc,#ff09f2,#ff06e9,#ff04e0,#ff01d8,#ff00d0,#ff00c9,#ff00c3,#ff00bc,#ff00b7,#ff00b1,#ff00ac,#ff00a7,#ff00a2,#ff009d,#ff0099,#ff0095,#ff0091,#ff008d,#ff008a,#ff0086,#ff0083,#ff0080,#ff007d,#ff007a,#ff0077,#ff0075,#ff0072,#ff006f,#ff006d,#ff006b)"></i><i class=r2 style="background:linear-gradient(90deg,#005aff,#0058ff,#0056ff,#0053ff,#0051ff,#004fff,#064dff,#0f4aff,#1748ff,#2046ff,#2943ff,#3341ff,#3c3eff,#453cff,#4e3aff,#5737ff,#6135ff,#6a32ff,#7430ff,#7d2dff,#872bff,#9028ff,#9a26ff,#a423ff,#ae21ff,#b81eff,#c21bff,#cc19ff,#d616ff,#e013ff,#ea11ff,#f50eff,#ff0bff,#ff08f5,#ff05ec,#ff03e3,#ff00db,#ff00d3,#ff00cc,#ff00c5,#ff00bf,#ff00b9,#ff00b3,#ff00ae,#ff00a9,#ff00a4,#ff00a0,#ff009b,#ff0097,#ff0093,#ff008f,#ff008c,#ff0088,#ff0085,#ff0082,#ff007f,#ff007c,#ff0079,#ff0076,#ff0074,#ff0071,#ff006f,#ff006c)"></i><i class=r2 style="background:linear-gradient(90deg,#0058ff,#0056ff,#0054ff,#0052ff,#0050ff,#004dff,#054bff,#0e49ff,#1746ff,#2044ff,#2942ff,#323fff,#3b3dff,#443bff,#4d38ff,#5636ff,#5f33ff,#6931ff,#722eff,#7b2cff,#8529ff,#8e27ff,#9824ff,#a222ff,#ab1fff,#b51dff,#bf1aff,#c918ff,#d315ff,#dd12ff,#e710ff,#f10dff,#fb0aff,#ff07f8,#ff05ef,#ff02e6,#ff00de,#ff00d6,#ff00cf,#ff00c8,#ff00c2,#ff00bc,#ff00b6,#ff00b0,#ff00ab,#ff00a6,#ff00a2,#ff009d,#ff0099,#ff0095,#ff0091,#ff008e,#ff008a,#ff0087,#ff0083,#ff0080,#ff007d,#ff007b,#ff0078,#ff0075,#ff0073,#ff0070,#ff006e)"></i><i class=r2 style="background:linear-gradient(90deg,#0057ff,#0055ff,#0052ff,#0050ff,#004eff,#004cff,#0549ff,#0d47ff,#1645ff,#1f42ff,#2840ff,#313eff,#393bff,#4239ff,#4b37ff,#5534ff,#5e32ff,#672fff,#702dff,#7a2bff,#8328ff,#8c26ff,#9623ff,#9f21ff,#a91eff,#b31cff,#bc19ff,#c616ff,#d014ff,#da11ff,#e40fff,#ee0cff,#f809ff,#ff07fc,#ff04f2,#ff01e9,#ff00e1,#ff00d9,#ff00d2,#ff00cb,#ff00c4,#ff00be,#ff00b8,#ff00b3,#ff00ae,#ff00a9,#ff00a4,#ff009f,#ff009b,#ff0097,#ff0093,#ff008f,#ff008c,#ff0089,#ff0085,#ff0082,#ff007f,#ff007c,#ff0079,#ff0077,#ff0074,#ff0072,#ff006f)"></i><i class=r2 style="background:linear-gradient(90deg,#0055ff,#0053ff,#0051ff,#004eff,#004cff,#004aff,#0448ff,#0d46ff,#1543ff,#1e41ff,#273fff,#303cff,#383aff,#4138ff,#4a35ff,#5333ff,#5c31ff,#652eff,#6f2cff,#7829ff,#8127ff,#8a24ff,#9422ff,#9d1fff,#a71dff,#b01aff,#ba18ff,#c315ff,#cd13ff,#d710ff,#e10eff,#eb0bff,#f508ff,#ff06ff,#ff03f5,#ff00ec,#ff00e4,#ff00dc,#ff00d4,#ff00cd,#ff00c7,#ff00c1,#ff00bb,#ff00b5,#ff00b0,#ff00ab,#ff00a6,#ff00a2,#ff009d,#ff0099,#ff0095,#ff0091,#ff008e,#ff008a,#ff0087,#ff0084,#ff0081,#ff007e,#ff007b,#ff0078,#ff0076,#ff0073,#ff0071)"></i><i class=r2 style="background:linear-gradient(90deg,#0053ff,#0051ff,#004fff,#004dff,#004bff,#0048ff,#0446ff,#0c44ff,#1542ff,#1d3fff,#263dff,#2f3bff,#3739ff,#4036ff,#4934ff,#5232ff,#5b2fff,#642dff,#6d2aff,#7628ff,#7f26ff,#8823ff,#9221ff,#9b1eff,#a41cff,#ae19ff,#b717ff,#c114ff,#ca12ff,#d40fff,#de0dff,#e80aff,#f207ff,#fc05ff,#ff02f9,#ff00ef,#ff00e7,#ff00df,#ff00d7,#ff00d0,#ff00c9,#ff00c3,#ff00bd,#ff00b8,#ff00b2,#ff00ad,#ff00a8,#ff00a4,#ff009f,#ff009b,#ff0097,#ff0093,#ff0090,#ff008c,#ff0089,#ff0086,#ff0082,#ff0080,#ff007d,#ff007a,#ff0077,#ff0075,#ff0072)"></i><i class=r2 style="background:linear-gradient(90deg,#0052ff,#0050ff,#004eff,#004bff,#0049ff,#0047ff,#0345ff,#0c43ff,#1440ff,#1c3eff,#253cff,#2e39ff,#3637ff,#3f35ff,#4833ff,#5130ff,#592eff,#622cff,#6b29ff,#7427ff,#7d24ff,#8622ff,#9020ff,#991dff,#a21bff,#ab18ff,#b516ff,#be13ff,#c811ff,#d10eff,#db0cff,#e509ff,#ee06ff,#f804ff,#ff01fc,#ff00f3,#ff00ea,#ff00e2,#ff00da,#ff00d3,#ff00cc,#ff00c6,#ff00c0,#ff00ba,#ff00b4,#ff00af,#ff00aa,#ff00a6,#ff00a1,#ff009d,#ff0099,#ff0095,#ff0092,#ff008e,#ff008b,#ff0087,#ff0084,#ff0081,#ff007e,#ff007c,#ff0079,#ff0076,#ff0074)"></i><i class=r2 style="background:linear-gradient(90deg,#0050ff,#004eff,#004cff,#004aff,#0048ff,#0045ff,#0343ff,#0b41ff,#133fff,#1c3dff,#243aff,#2d38ff,#3536ff,#3e34ff,#4731ff,#4f2fff,#582dff,#612aff,#6a28ff,#7326ff,#7c23ff,#8521ff,#8e1eff,#971cff,#a01aff,#a917ff,#b215ff,#bc12ff,#c510ff,#cf0dff,#d80bff,#e208ff,#eb06ff,#f503ff,#ff00ff,#ff00f6,#ff00ed,#ff00e5,#ff00dd,#ff00d6,#ff00cf,#ff00c8,#ff00c2,#ff00bc,#ff00b7,#ff00b2,#ff00ad,#ff00a8,#ff00a3,#ff009f,#ff009b,#ff0097,#ff0093,#ff0090,#ff008c,#ff0089,#ff0086,#ff0083,#ff0080,#ff007d,#ff007a,#ff0078,#ff0075)"></i><i class=r2 style="background:linear-gradient(90deg,#004fff,#004dff,#004aff,#0048ff,#0046ff,#0044ff,#0242ff,#0a40ff,#133dff,#1b3bff,#2339ff,#2c37ff,#3435ff,#3d32ff,#4530ff,#4e2eff,#572bff,#5f29ff,#6827ff,#7124ff,#7a22ff,#8320ff,#8c1dff,#951bff,#9e18ff,#a716ff,#b014ff,#b911ff,#c30fff,#cc0cff,#d50aff,#df07ff,#e805ff,#f202ff,#fc00ff,#ff00f9,#ff00f0,#ff00e8,#ff00e0,#ff00d8,#ff00d1,#ff00cb,#ff00c5,#ff00bf,#ff00b9,#ff00b4,#ff00af,#ff00aa,#ff00a5,#ff00a1,#ff009d,#ff0099,#ff0095,#ff0092,#ff008e,#ff008b,#ff0088,#ff0085,#ff0082,#ff007f,#ff007c,#ff0079,#ff0077)"></i><i class=r2 style="background:linear-gradient(90deg,#004dff,#004bff,#0049ff,#0047ff,#0045ff,#0043ff,#0240ff,#0a3eff,#123cff,#1a3aff,#2338ff,#2b35ff,#3333ff,#3c31ff,#442fff,#4d2cff,#552aff,#5e28ff,#6726ff,#6f23ff,#7821ff,#811fff,#8a1cff,#931aff,#9c17ff,#a515ff,#ae13ff,#b710ff,#c00eff,#c90bff,#d309ff,#dc06ff,#e504ff,#ef01ff,#f800ff,#ff00fc,#ff00f3,#ff00ea,#ff00e2,#ff00db,#ff00d4,#ff00cd,#ff00c7,#ff00c1,#ff00bb,#ff00b6,#ff00b1,#ff00ac,#ff00a8,#ff00a3,#ff009f,#ff009b,#ff0097,#ff0093,#ff0090,#ff008d,#ff0089,#ff0086,#ff0083,#ff0080,#ff007e,#ff007b,#ff0078)"></i><i class=r2 style="background:linear-gradient(90deg,#004cff,#004aff,#0048ff,#0045ff,#0043ff,#0041ff,#013fff,#093dff,#113bff,#1a39ff,#2236ff,#2a34ff,#3232ff,#3b30ff,#432dff,#4c2bff,#5429ff,#5d27ff,#6524ff,#6e22ff,#7620ff,#7f1dff,#881bff,#9119ff,#9a16ff,#a314ff,#ac12ff,#b50fff,#be0dff,#c70aff,#d008ff,#d905ff,#e303ff,#ec00ff,#f500ff,#ff00ff,#ff00f6,#ff00ed,#ff00e5,#ff00de,#ff00d7,#ff00d0,#ff00ca,#ff00c3,#ff00be,#ff00b8,#ff00b3,#ff00ae,#ff00aa,#ff00a5,#ff00a1,#ff009d,#ff0099,#ff0095,#ff0092,#ff008e,#ff008b,#ff0088,#ff0085,#ff0082,#ff007f,#ff007c,#ff007a)"></i><i class=r2 style="background:linear-gradient(90deg,#004aff,#0048ff,#0046ff,#0044ff,#0042ff,#0040ff,#013eff,#093cff,#1139ff,#1937ff,#2135ff,#2933ff,#3131ff,#3a2eff,#422cff,#4a2aff,#5328ff,#5b26ff,#6423ff,#6c21ff,#751fff,#7d1cff,#861aff,#8f18ff,#9815ff,#a013ff,#a911ff,#b20eff,#bb0cff,#c409ff,#cd07ff,#d705ff,#e002ff,#e900ff,#f200ff,#fc00ff,#ff00f9,#ff00f0,#ff00e8,#ff00e0,#ff00d9,#ff00d2,#ff00cc,#ff00c6,#ff00c0,#ff00bb,#ff00b5,#ff00b0,#ff00ac,#ff00a7,#ff00a3,#ff009f,#ff009b,#ff0097,#ff0094,#ff0090,#ff008d,#ff008a,#ff0087,#ff0084,#ff0081,#ff007e,#ff007b)"></i><i class=r2 style="background:linear-gradient(90deg,#0049ff,#0047ff,#0045ff,#0043ff,#0041ff,#003eff,#003cff,#083aff,#1038ff,#1836ff,#2034ff,#2832ff,#312fff,#392dff,#412bff,#4929ff,#5127ff,#5a24ff,#6222ff,#6b20ff,#731eff,#7c1bff,#8419ff,#8d17ff,#9614ff,#9e12ff,#a710ff,#b00dff,#b90bff,#c209ff,#cb06ff,#d404ff,#dd01ff,#e600ff,#ef00ff,#f900ff,#ff00fc,#ff00f3,#ff00eb,#ff00e3,#ff00dc,#ff00d5,#ff00ce,#ff00c8,#ff00c2,#ff00bd,#ff00b8,#ff00b3,#ff00ae,#ff00a9,#ff00a5,#ff00a1,#ff009d,#ff0099,#ff0095,#ff0092,#ff008f,#ff008b,#ff0088,#ff0085,#ff0082,#ff0080,#ff007d)"></i><i class=r2 style="background:linear-gradient(90deg,#0047ff,#0045ff,#0043ff,#0041ff,#003fff,#003dff,#003bff,#0839ff,#1037ff,#1835ff,#2033ff,#2830ff,#302eff,#382cff,#402aff,#4828ff,#5025ff,#5923ff,#6121ff,#691fff,#721dff,#7a1aff,#8318ff,#8b16ff,#9413ff,#9c11ff,#a50fff,#ae0cff,#b70aff,#bf08ff,#c805ff,#d103ff,#da00ff,#e300ff,#ec00ff,#f600ff,#ff00ff,#ff00f6,#ff00ee,#ff00e6,#ff00df,#ff00d8,#ff00d1,#ff00cb,#ff00c5,#ff00bf,#ff00ba,#ff00b5,#ff00b0,#ff00ab,#ff00a7,#ff00a3,#ff009f,#ff009b,#ff0097,#ff0094,#ff0090,#ff008d,#ff008a,#ff0087,#ff0084,#ff0081,#ff007e)"></i><i class=r2 style="background:linear-gradient(90deg,#0046ff,#0044ff,#0042ff,#0040ff,#003eff,#003cff,#003aff,#0738ff,#0f36ff,#1733ff,#1f31ff,#272fff,#2f2dff,#372bff,#3f29ff,#4727ff,#4f24ff,#5722ff,#5f20ff,#681eff,#701cff,#7819ff,#8117ff,#8915ff,#9212ff,#9a10ff,#a30eff,#ac0bff,#b409ff,#bd07ff,#c604ff,#cf02ff,#d800ff,#e100ff,#ea00ff,#f300ff,#fc00ff,#ff00f9,#ff00f1,#ff00e9,#ff00e1,#ff00da,#ff00d4,#ff00cd,#ff00c7,#ff00c2,#ff00bc,#ff00b7,#ff00b2,#ff00ad,#ff00a9,#ff00a5,#ff00a1,#ff009d,#ff0099,#ff0095,#ff0092,#ff008f,#ff008c,#ff0088,#ff0086,#ff0083,#ff0080)"></i><i class=r2 style="background:linear-gradient(90deg,#0045ff,#0043ff,#0041ff,#003fff,#003dff,#003bff,#0038ff,#0736ff,#0f34ff,#1632ff,#1e30ff,#262eff,#2e2cff,#362aff,#3e28ff,#4625ff,#4e23ff,#5621ff,#5e1fff,#661dff,#6f1aff,#7718ff,#7f16ff,#8814ff,#9011ff,#980fff,#a10dff,#a90bff,#b208ff,#bb06ff,#c304ff,#cc01ff,#d500ff,#de00ff,#e700ff,#f000ff,#f900ff,#ff00fc,#ff00f4,#ff00ec,#ff00e4,#ff00dd,#ff00d6,#ff00d0,#ff00ca,#ff00c4,#ff00be,#ff00b9,#ff00b4,#ff00af,#ff00ab,#ff00a7,#ff00a3,#ff009f,#ff009b,#ff0097,#ff0094,#ff0090,#ff008d,#ff008a,#ff0087,#ff0084,#ff0081)"></i><i class=r2 style="background:linear-gradient(90deg,#0043ff,#0041ff,#003fff,#003dff,#003bff,#0039ff,#0037ff,#0635ff,#0e33ff,#1631ff,#1d2fff,#252dff,#2d2bff,#3529ff,#3d27ff,#4524ff,#4d22ff,#5520ff,#5d1eff,#651cff,#6d19ff,#7517ff,#7d15ff,#8613ff,#8e11ff,#960eff,#9f0cff,#a70aff,#b007ff,#b805ff,#c103ff,#ca00ff,#d200ff,#db00ff,#e400ff,#ed00ff,#f600ff,#ff00ff,#ff00f7,#ff00ee,#ff00e7,#ff00df,#ff00d9,#ff00d2,#ff00cc,#ff00c6,#ff00c1,#ff00bb,#ff00b6,#ff00b2,#ff00ad,#ff00a9,#ff00a4,#ff00a0,#ff009d,#ff0099,#ff0095,#ff0092,#ff008f,#ff008c,#ff0089,#ff0086,#ff0083)"></i><i class=r2 style="background:linear-gradient(90deg,#0042ff,#0040ff,#003eff,#003cff,#003aff,#0038ff,#0036ff,#0634ff,#0d32ff,#1530ff,#1d2eff,#242cff,#2c2aff,#3428ff,#3c25ff,#4423ff,#4c21ff,#541fff,#5b1dff,#641bff,#6c19ff,#7416ff,#7c14ff,#8412ff,#8c10ff,#950dff,#9d0bff,#a509ff,#ae07ff,#b604ff,#bf02ff,#c700ff,#d000ff,#d900ff,#e100ff,#ea00ff,#f300ff,#fc00ff,#ff00f9,#ff00f1,#ff00e9,#ff00e2,#ff00db,#ff00d5,#ff00ce,#ff00c8,#ff00c3,#ff00be,#ff00b8,#ff00b4,#ff00af,#ff00ab,#ff00a6,#ff00a2,#ff009e,#ff009b,#ff0097,#ff0094,#ff0091,#ff008d,#ff008a,#ff0087,#ff0085)"></i><i class=r2 style="background:linear-gradient(90deg,#0041ff,#003fff,#003dff,#003bff,#0039ff,#0037ff,#0035ff,#0533ff,#0d31ff,#142fff,#1c2dff,#242bff,#2b29ff,#3326ff,#3b24ff,#4322ff,#4a20ff,#521eff,#5a1cff,#621aff,#6a18ff,#7215ff,#7a13ff,#8211ff,#8b0fff,#930dff,#9b0aff,#a308ff,#ac06ff,#b404ff,#bd01ff,#c500ff,#ce00ff,#d600ff,#df00ff,#e700ff,#f000ff,#f900ff,#ff00fc,#ff00f4,#ff00ec,#ff00e5,#ff00de,#ff00d7,#ff00d1,#ff00cb,#ff00c5,#ff00c0,#ff00bb,#ff00b6,#ff00b1,#ff00ad,#ff00a8,#ff00a4,#ff00a0,#ff009d,#ff0099,#ff0096,#ff0092,#ff008f,#ff008c,#ff0089,#ff0086)"></i><i class=r2 style="background:linear-gradient(90deg,#0040ff,#003eff,#003cff,#003aff,#0038ff,#0036ff,#0034ff,#0532ff,#0c30ff,#142eff,#1b2cff,#232aff,#2b27ff,#3225ff,#3a23ff,#4221ff,#491fff,#511dff,#591bff,#6119ff,#6917ff,#7114ff,#7912ff,#8110ff,#890eff,#910cff,#990aff,#a107ff,#aa05ff,#b203ff,#ba01ff,#c300ff,#cb00ff,#d400ff,#dc00ff,#e500ff,#ed00ff,#f600ff,#ff00ff,#ff00f7,#ff00ef,#ff00e7,#ff00e0,#ff00d9,#ff00d3,#ff00cd,#ff00c7,#ff00c2,#ff00bd,#ff00b8,#ff00b3,#ff00af,#ff00aa,#ff00a6,#ff00a2,#ff009e,#ff009b,#ff0097,#ff0094,#ff0091,#ff008e,#ff008b,#ff0088)"></i><i class=r2 style="background:linear-gradient(90deg,#003eff,#003cff,#003aff,#0038ff,#0036ff,#0035ff,#0033ff,#0531ff,#0c2fff,#132dff,#1b2aff,#2228ff,#2a26ff,#3124ff,#3922ff,#4120ff,#481eff,#501cff,#581aff,#6018ff,#6716ff,#6f14ff,#7711ff,#7f0fff,#870dff,#8f0bff,#9709ff,#9f06ff,#a804ff,#b002ff,#b800ff,#c000ff,#c900ff,#d100ff,#da00ff,#e200ff,#eb00ff,#f300ff,#fc00ff,#ff00fa,#ff00f2,#ff00ea,#ff00e3,#ff00dc,#ff00d6,#ff00cf,#ff00ca,#ff00c4,#ff00bf,#ff00ba,#ff00b5,#ff00b1,#ff00ac,#ff00a8,#ff00a4,#ff00a0,#ff009d,#ff0099,#ff0096,#ff0092,#ff008f,#ff008c,#ff0089)"></i><i class=r2 style="background:linear-gradient(90deg,#003dff,#003bff,#0039ff,#0037ff,#0035ff,#0033ff,#0031ff,#042fff,#0b2dff,#132bff,#1a29ff,#2227ff,#2925ff,#3123ff,#3821ff,#401fff,#471dff,#4f1bff,#5719ff,#5e17ff,#6615ff,#6e13ff,#7611ff,#7e0eff,#860cff,#8d0aff,#9508ff,#9e06ff,#a603ff,#ae01ff,#b600ff,#be00ff,#c600ff,#cf00ff,#d700ff,#df00ff,#e800ff,#f000ff,#f900ff,#ff00fc,#ff00f4,#ff00ed,#ff00e5,#ff00de,#ff00d8,#ff00d2,#ff00cc,#ff00c6,#ff00c1,#ff00bc,#ff00b7,#ff00b3,#ff00ae,#ff00aa,#ff00a6,#ff00a2,#ff009e,#ff009b,#ff0097,#ff0094,#ff0091,#ff008e,#ff008b)"></i><i class=r2 style="background:linear-gradient(90deg,#003cff,#003aff,#0038ff,#0036ff,#0034ff,#0032ff,#0030ff,#042eff,#0b2cff,#122aff,#1a28ff,#2126ff,#2824ff,#3022ff,#3720ff,#3f1eff,#461cff,#4e1aff,#5518ff,#5d16ff,#6514ff,#6c12ff,#7410ff,#7c0eff,#840bff,#8c09ff,#9407ff,#9c05ff,#a403ff,#ac01ff,#b400ff,#bc00ff,#c400ff,#cc00ff,#d500ff,#dd00ff,#e500ff,#ee00ff,#f600ff,#ff00ff,#ff00f7,#ff00ef,#ff00e8,#ff00e1,#ff00da,#ff00d4,#ff00ce,#ff00c9,#ff00c3,#ff00be,#ff00b9,#ff00b5,#ff00b0,#ff00ac,#ff00a8,#ff00a4,#ff00a0,#ff009c,#ff0099,#ff0096,#ff0092,#ff008f,#ff008c)"></i><i class=r2 style="background:linear-gradient(90deg,#003bff,#0039ff,#0037ff,#0035ff,#0033ff,#0031ff,#002fff,#032dff,#0a2bff,#1229ff,#1927ff,#2025ff,#2823ff,#2f21ff,#361fff,#3e1dff,#451bff,#4d19ff,#5417ff,#5c15ff,#6313ff,#6b11ff,#730fff,#7b0dff,#820bff,#8a08ff,#9206ff,#9a04ff,#a202ff,#aa00ff,#b200ff,#ba00ff,#c200ff,#ca00ff,#d200ff,#da00ff,#e300ff,#eb00ff,#f300ff,#fc00ff,#ff00fa,#ff00f2,#ff00ea,#ff00e3,#ff00dd,#ff00d6,#ff00d0,#ff00cb,#ff00c5,#ff00c0,#ff00bb,#ff00b7,#ff00b2,#ff00ae,#ff00aa,#ff00a6,#ff00a2,#ff009e,#ff009b,#ff0097,#ff0094,#ff0091,#ff008e)"></i><i class=r2 style="background:linear-gradient(90deg,#003aff,#0038ff,#0036ff,#0034ff,#0032ff,#0030ff,#002eff,#032cff,#0a2aff,#1128ff,#1826ff,#2024ff,#2722ff,#2e20ff,#351eff,#3d1cff,#441aff,#4c18ff,#5316ff,#5b14ff,#6212ff,#6a10ff,#710eff,#790cff,#810aff,#8808ff,#9006ff,#9803ff,#a001ff,#a800ff,#b000ff,#b800ff,#c000ff,#c800ff,#d000ff,#d800ff,#e000ff,#e800ff,#f100ff,#f900ff,#ff00fd,#ff00f5,#ff00ed,#ff00e6,#ff00df,#ff00d9,#ff00d3,#ff00cd,#ff00c7,#ff00c2,#ff00bd,#ff00b9,#ff00b4,#ff00b0,#ff00ab,#ff00a7,#ff00a4,#ff00a0,#ff009c,#ff0099,#ff0096,#ff0093,#ff008f)"></i><i class=r2 style="background:linear-gradient(90deg,#0038ff,#0037ff,#0035ff,#0033ff,#0031ff,#002fff,#002dff,#022bff,#0a29ff,#1127ff,#1825ff,#1f23ff,#2621ff,#2d1fff,#351dff,#3c1bff,#4319ff,#4b17ff,#5215ff,#5913ff,#6111ff,#680fff,#700dff,#780bff,#7f09ff,#8707ff,#8f05ff,#9603ff,#9e01ff,#a600ff,#ae00ff,#b600ff,#be00ff,#c600ff,#ce00ff,#d600ff,#de00ff,#e600ff,#ee00ff,#f600ff,#ff00ff,#ff00f7,#ff00f0,#ff00e8,#ff00e2,#ff00db,#ff00d5,#ff00cf,#ff00ca,#ff00c4,#ff00bf,#ff00bb,#ff00b6,#ff00b2,#ff00ad,#ff00a9,#ff00a5,#ff00a2,#ff009e,#ff009b,#ff0097,#ff0094,#ff0091)"></i><i class=r2 style="background:linear-gradient(90deg,#0037ff,#0035ff,#0034ff,#0032ff,#0030ff,#002eff,#002cff,#022aff,#0928ff,#1026ff,#1724ff,#1e22ff,#2520ff,#2d1eff,#341dff,#3b1bff,#4219ff,#4a17ff,#5115ff,#5813ff,#6010ff,#670eff,#6f0cff,#760aff,#7e08ff,#8506ff,#8d04ff,#9502ff,#9c00ff,#a400ff,#ac00ff,#b400ff,#bb00ff,#c300ff,#cb00ff,#d300ff,#db00ff,#e300ff,#ec00ff,#f400ff,#fc00ff,#ff00fa,#ff00f2,#ff00eb,#ff00e4,#ff00de,#ff00d7,#ff00d1,#ff00cc,#ff00c6,#ff00c1,#ff00bd,#ff00b8,#ff00b3,#ff00af,#ff00ab,#ff00a7,#ff00a3,#ff00a0,#ff009c,#ff0099,#ff0096,#ff0093)"></i><i class=r2 style="background:linear-gradient(90deg,#0036ff,#0034ff,#0032ff,#0031ff,#002fff,#002dff,#002bff,#0229ff,#0927ff,#1025ff,#1723ff,#1e21ff,#2520ff,#2c1eff,#331cff,#3a1aff,#4118ff,#4916ff,#5014ff,#5712ff,#5e10ff,#660eff,#6d0cff,#750aff,#7c08ff,#8405ff,#8b03ff,#9301ff,#9a00ff,#a200ff,#aa00ff,#b200ff,#b900ff,#c100ff,#c900ff,#d100ff,#d900ff,#e100ff,#e900ff,#f100ff,#f900ff,#ff00fd,#ff00f5,#ff00ed,#ff00e7,#ff00e0,#ff00da,#ff00d4,#ff00ce,#ff00c9,#ff00c3,#ff00bf,#ff00ba,#ff00b5,#ff00b1,#ff00ad,#ff00a9,#ff00a5,#ff00a1,#ff009e,#ff009b,#ff0097,#ff0094)"></i><i class=r2 style="background:linear-gradient(90deg,#0035ff,#0033ff,#0031ff,#0030ff,#002eff,#002cff,#002aff,#0128ff,#0826ff,#0f24ff,#1622ff,#1d21ff,#241fff,#2b1dff,#321bff,#3919ff,#4017ff,#4815ff,#4f13ff,#5611ff,#5d0fff,#650dff,#6c0bff,#7309ff,#7b07ff,#8205ff,#8a03ff,#9101ff,#9900ff,#a000ff,#a800ff,#b000ff,#b700ff,#bf00ff,#c700ff,#cf00ff,#d700ff,#df00ff,#e700ff,#ef00ff,#f700ff,#ff00ff,#ff00f7,#ff00f0,#ff00e9,#ff00e2,#ff00dc,#ff00d6,#ff00d0,#ff00cb,#ff00c6,#ff00c1,#ff00bc,#ff00b7,#ff00b3,#ff00af,#ff00ab,#ff00a7,#ff00a3,#ff00a0,#ff009c,#ff0099,#ff0096)"></i><i class=r2 style="background:linear-gradient(90deg,#0034ff,#0032ff,#0030ff,#002fff,#002dff,#002bff,#0029ff,#0127ff,#0825ff,#0f23ff,#1522ff,#1c20ff,#231eff,#2a1cff,#311aff,#3818ff,#3f16ff,#4714ff,#4e12ff,#5510ff,#5c0eff,#630cff,#6b0aff,#7208ff,#7906ff,#8104ff,#8802ff,#9000ff,#9700ff,#9f00ff,#a600ff,#ae00ff,#b500ff,#bd00ff,#c500ff,#cd00ff,#d400ff,#dc00ff,#e400ff,#ec00ff,#f400ff,#fc00ff,#ff00fa,#ff00f3,#ff00eb,#ff00e5,#ff00de,#ff00d8,#ff00d2,#ff00cd,#ff00c8,#ff00c3,#ff00be,#ff00b9,#ff00b5,#ff00b1,#ff00ad,#ff00a9,#ff00a5,#ff00a1,#ff009e,#ff009b,#ff0097)"></i><i class=r2 style="background:linear-gradient(90deg,#0033ff,#0031ff,#002fff,#002eff,#002cff,#002aff,#0028ff,#0126ff,#0724ff,#0e22ff,#1521ff,#1c1fff,#231dff,#2a1bff,#3119ff,#3717ff,#3f15ff,#4613ff,#4d11ff,#540fff,#5b0dff,#620bff,#6909ff,#7107ff,#7805ff,#7f03ff,#8701ff,#8e00ff,#9500ff,#9d00ff,#a400ff,#ac00ff,#b300ff,#bb00ff,#c300ff,#ca00ff,#d200ff,#da00ff,#e200ff,#ea00ff,#f100ff,#f900ff,#ff00fd,#ff00f5,#ff00ee,#ff00e7,#ff00e1,#ff00da,#ff00d5,#ff00cf,#ff00ca,#ff00c5,#ff00c0,#ff00bb,#ff00b7,#ff00b2,#ff00ae,#ff00aa,#ff00a7,#ff00a3,#ff00a0,#ff009c,#ff0099)"></i><i class=r2 style="background:linear-gradient(90deg,#0032ff,#0030ff,#002eff,#002dff,#002bff,#0029ff,#0027ff,#0025ff,#0723ff,#0e22ff,#1420ff,#1b1eff,#221cff,#291aff,#3018ff,#3716ff,#3e14ff,#4512ff,#4c10ff,#530fff,#5a0dff,#610bff,#6809ff,#6f07ff,#7605ff,#7e03ff,#8501ff,#8c00ff,#9400ff,#9b00ff,#a300ff,#aa00ff,#b200ff,#b900ff,#c100ff,#c800ff,#d000ff,#d800ff,#df00ff,#e700ff,#ef00ff,#f700ff,#ff00ff,#ff00f8,#ff00f0,#ff00e9,#ff00e3,#ff00dd,#ff00d7,#ff00d1,#ff00cc,#ff00c7,#ff00c2,#ff00bd,#ff00b9,#ff00b4,#ff00b0,#ff00ac,#ff00a8,#ff00a5,#ff00a1,#ff009e,#ff009a)"></i><i class=r2 style="background:linear-gradient(90deg,#0031ff,#002fff,#002dff,#002cff,#002aff,#0028ff,#0026ff,#0024ff,#0623ff,#0d21ff,#141fff,#1b1dff,#211bff,#2819ff,#2f17ff,#3615ff,#3d14ff,#4412ff,#4b10ff,#520eff,#590cff,#600aff,#6708ff,#6e06ff,#7504ff,#7c02ff,#8400ff,#8b00ff,#9200ff,#9900ff,#a100ff,#a800ff,#b000ff,#b700ff,#bf00ff,#c600ff,#ce00ff,#d500ff,#dd00ff,#e500ff,#ec00ff,#f400ff,#fc00ff,#ff00fa,#ff00f3,#ff00ec,#ff00e5,#ff00df,#ff00d9,#ff00d3,#ff00ce,#ff00c9,#ff00c4,#ff00bf,#ff00ba,#ff00b6,#ff00b2,#ff00ae,#ff00aa,#ff00a6,#ff00a3,#ff009f,#ff009c)"></i><i class=r2 style="background:linear-gradient(90deg,#0030ff,#002eff,#002cff,#002bff,#0029ff,#0027ff,#0025ff,#0023ff,#0622ff,#0d20ff,#131eff,#1a1cff,#211aff,#2718ff,#2e16ff,#3515ff,#3c13ff,#4311ff,#4a0fff,#510dff,#580bff,#5f09ff,#6607ff,#6d05ff,#7403ff,#7b01ff,#8200ff,#8900ff,#9000ff,#9800ff,#9f00ff,#a600ff,#ae00ff,#b500ff,#bd00ff,#c400ff,#cc00ff,#d300ff,#db00ff,#e200ff,#ea00ff,#f200ff,#f900ff,#ff00fd,#ff00f5,#ff00ee,#ff00e8,#ff00e1,#ff00db,#ff00d5,#ff00d0,#ff00cb,#ff00c6,#ff00c1,#ff00bc,#ff00b8,#ff00b4,#ff00b0,#ff00ac,#ff00a8,#ff00a4,#ff00a1,#ff009e)"></i><i class=r2 style="background:linear-gradient(90deg,#002fff,#002dff,#002bff,#002aff,#0028ff,#0026ff,#0024ff,#0023ff,#0621ff,#0c1fff,#131dff,#191bff,#2019ff,#2718ff,#2e16ff,#3414ff,#3b12ff,#4210ff,#490eff,#500cff,#560aff,#5d08ff,#6406ff,#6b05ff,#7203ff,#7a01ff,#8100ff,#8800ff,#8f00ff,#9600ff,#9d00ff,#a500ff,#ac00ff,#b300ff,#bb00ff,#c200ff,#c900ff,#d100ff,#d800ff,#e000ff,#e800ff,#ef00ff,#f700ff,#ff00ff,#ff00f8,#ff00f1,#ff00ea,#ff00e4,#ff00dd,#ff00d8,#ff00d2,#ff00cd,#ff00c8,#ff00c3,#ff00be,#ff00ba,#ff00b6,#ff00b1,#ff00ae,#ff00aa,#ff00a6,#ff00a3,#ff009f)"></i><i class=r2 style="background:linear-gradient(90deg,#002eff,#002cff,#002bff,#0029ff,#0027ff,#0025ff,#0023ff,#0022ff,#0520ff,#0c1eff,#121cff,#191aff,#2019ff,#2617ff,#2d15ff,#3313ff,#3a11ff,#410fff,#480dff,#4f0cff,#550aff,#5c08ff,#6306ff,#6a04ff,#7102ff,#7800ff,#7f00ff,#8600ff,#8d00ff,#9400ff,#9c00ff,#a300ff,#aa00ff,#b100ff,#b900ff,#c000ff,#c700ff,#cf00ff,#d600ff,#de00ff,#e500ff,#ed00ff,#f400ff,#fc00ff,#ff00fa,#ff00f3,#ff00ec,#ff00e6,#ff00e0,#ff00da,#ff00d4,#ff00cf,#ff00ca,#ff00c5,#ff00c0,#ff00bc,#ff00b7,#ff00b3,#ff00af,#ff00ab,#ff00a8,#ff00a4,#ff00a1)"></i><i class=r2 style="background:linear-gradient(90deg,#002dff,#002bff,#002aff,#0028ff,#0026ff,#0024ff,#0023ff,#0021ff,#051fff,#0b1dff,#121bff,#181aff,#1f18ff,#2516ff,#2c14ff,#3312ff,#3910ff,#400fff,#470dff,#4e0bff,#5409ff,#5b07ff,#6205ff,#6903ff,#7001ff,#7700ff,#7e00ff,#8500ff,#8c00ff,#9300ff,#9a00ff,#a100ff,#a800ff,#b000ff,#b700ff,#be00ff,#c500ff,#cd00ff,#d400ff,#dc00ff,#e300ff,#ea00ff,#f200ff,#fa00ff,#ff00fd,#ff00f6,#ff00ef,#ff00e8,#ff00e2,#ff00dc,#ff00d6,#ff00d1,#ff00cc,#ff00c7,#ff00c2,#ff00be,#ff00b9,#ff00b5,#ff00b1,#ff00ad,#ff00a9,#ff00a6,#ff00a2)"></i><i class=r2 style="background:linear-gradient(90deg,#002cff,#002aff,#0029ff,#0027ff,#0025ff,#0023ff,#0022ff,#0020ff,#041eff,#0b1cff,#111bff,#1819ff,#1e17ff,#2515ff,#2b13ff,#3212ff,#3910ff,#3f0eff,#460cff,#4d0aff,#5308ff,#5a06ff,#6104ff,#6803ff,#6f01ff,#7500ff,#7c00ff,#8300ff,#8a00ff,#9100ff,#9800ff,#9f00ff,#a700ff,#ae00ff,#b500ff,#bc00ff,#c300ff,#cb00ff,#d200ff,#d900ff,#e100ff,#e800ff,#f000ff,#f700ff,#ff00ff,#ff00f8,#ff00f1,#ff00ea,#ff00e4,#ff00de,#ff00d8,#ff00d3,#ff00ce,#ff00c9,#ff00c4,#ff00bf,#ff00bb,#ff00b7,#ff00b3,#ff00af,#ff00ab,#ff00a8,#ff00a4)"></i><i class=r2 style="background:linear-gradient(90deg,#002bff,#0029ff,#0028ff,#0026ff,#0024ff,#0023ff,#0021ff,#001fff,#041dff,#0a1cff,#111aff,#1718ff,#1e16ff,#2414ff,#2b13ff,#3111ff,#380fff,#3e0dff,#450bff,#4c09ff,#5208ff,#5906ff,#6004ff,#6702ff,#6d00ff,#7400ff,#7b00ff,#8200ff,#8900ff,#9000ff,#9700ff,#9e00ff,#a500ff,#ac00ff,#b300ff,#ba00ff,#c100ff,#c900ff,#d000ff,#d700ff,#de00ff,#e600ff,#ed00ff,#f500ff,#fc00ff,#ff00fb,#ff00f3,#ff00ed,#ff00e6,#ff00e0,#ff00db,#ff00d5,#ff00d0,#ff00cb,#ff00c6,#ff00c1,#ff00bd,#ff00b9,#ff00b5,#ff00b1,#ff00ad,#ff00a9,#ff00a6)"></i><i class=r2 style="background:linear-gradient(90deg,#002aff,#0029ff,#0027ff,#0025ff,#0023ff,#0022ff,#0020ff,#001eff,#041dff,#0a1bff,#1019ff,#1717ff,#1d15ff,#2414ff,#2a12ff,#3110ff,#370eff,#3e0cff,#440bff,#4b09ff,#5107ff,#5805ff,#5f03ff,#6501ff,#6c00ff,#7300ff,#7a00ff,#8100ff,#8700ff,#8e00ff,#9500ff,#9c00ff,#a300ff,#aa00ff,#b100ff,#b800ff,#bf00ff,#c700ff,#ce00ff,#d500ff,#dc00ff,#e400ff,#eb00ff,#f200ff,#fa00ff,#ff00fd,#ff00f6,#ff00ef,#ff00e9,#ff00e3,#ff00dd,#ff00d7,#ff00d2,#ff00cd,#ff00c8,#ff00c3,#ff00bf,#ff00ba,#ff00b6,#ff00b2,#ff00af,#ff00ab,#ff00a7)"></i><i class=r2 style="background:linear-gradient(90deg,#0029ff,#0028ff,#0026ff,#0024ff,#0023ff,#0021ff,#001fff,#001dff,#031cff,#0a1aff,#1018ff,#1616ff,#1d15ff,#2313ff,#2911ff,#300fff,#360eff,#3d0cff,#430aff,#4a08ff,#5006ff,#5704ff,#5e03ff,#6401ff,#6b00ff,#7200ff,#7800ff,#7f00ff,#8600ff,#8d00ff,#9400ff,#9b00ff,#a200ff,#a800ff,#af00ff,#b700ff,#be00ff,#c500ff,#cc00ff,#d300ff,#da00ff,#e100ff,#e900ff,#f000ff,#f700ff,#ff00ff,#ff00f8,#ff00f1,#ff00eb,#ff00e5,#ff00df,#ff00d9,#ff00d4,#ff00cf,#ff00ca,#ff00c5,#ff00c1,#ff00bc,#ff00b8,#ff00b4,#ff00b0,#ff00ac,#ff00a9)"></i><i class=r2 style="background:linear-gradient(90deg,#0029ff,#0027ff,#0025ff,#0023ff,#0022ff,#0020ff,#001eff,#001dff,#031bff,#0919ff,#0f17ff,#1616ff,#1c14ff,#2212ff,#2910ff,#2f0fff,#360dff,#3c0bff,#4209ff,#4907ff,#4f06ff,#5604ff,#5d02ff,#6300ff,#6a00ff,#7000ff,#7700ff,#7e00ff,#8500ff,#8b00ff,#9200ff,#9900ff,#a000ff,#a700ff,#ae00ff,#b500ff,#bc00ff,#c300ff,#ca00ff,#d100ff,#d800ff,#df00ff,#e600ff,#ee00ff,#f500ff,#fc00ff,#ff00fb,#ff00f4,#ff00ed,#ff00e7,#ff00e1,#ff00db,#ff00d6,#ff00d1,#ff00cc,#ff00c7,#ff00c2,#ff00be,#ff00ba,#ff00b6,#ff00b2,#ff00ae,#ff00ab)"></i><i class=r2 style="background:linear-gradient(90deg,#0028ff,#0026ff,#0024ff,#0023ff,#0021ff,#001fff,#001eff,#001cff,#031aff,#0918ff,#0f17ff,#1515ff,#1b13ff,#2211ff,#2810ff,#2e0eff,#350cff,#3b0aff,#4209ff,#4807ff,#4e05ff,#5503ff,#5b01ff,#6200ff,#6900ff,#6f00ff,#7600ff,#7d00ff,#8300ff,#8a00ff,#9100ff,#9700ff,#9e00ff,#a500ff,#ac00ff,#b300ff,#ba00ff,#c100ff,#c800ff,#cf00ff,#d600ff,#dd00ff,#e400ff,#eb00ff,#f200ff,#fa00ff,#ff00fd,#ff00f6,#ff00ef,#ff00e9,#ff00e3,#ff00dd,#ff00d8,#ff00d3,#ff00ce,#ff00c9,#ff00c4,#ff00c0,#ff00bc,#ff00b7,#ff00b4,#ff00b0,#ff00ac)"></i><i class=r2 style="background:linear-gradient(90deg,#0027ff,#0025ff,#0023ff,#0022ff,#0020ff,#001eff,#001dff,#001bff,#0219ff,#0818ff,#0f16ff,#1514ff,#1b12ff,#2111ff,#270fff,#2e0dff,#340bff,#3a0aff,#4108ff,#4706ff,#4e04ff,#5403ff,#5a01ff,#6100ff,#6700ff,#6e00ff,#7500ff,#7b00ff,#8200ff,#8900ff,#8f00ff,#9600ff,#9d00ff,#a300ff,#aa00ff,#b100ff,#b800ff,#bf00ff,#c600ff,#cd00ff,#d400ff,#db00ff,#e200ff,#e900ff,#f000ff,#f700ff,#ff00ff,#ff00f8,#ff00f2,#ff00eb,#ff00e5,#ff00df,#ff00da,#ff00d5,#ff00d0,#ff00cb,#ff00c6,#ff00c2,#ff00bd,#ff00b9,#ff00b5,#ff00b1,#ff00ae)"></i><i class=r2 style="background:linear-gradient(90deg,#0026ff,#0024ff,#0023ff,#0021ff,#001fff,#001eff,#001cff,#001aff,#0219ff,#0817ff,#0e15ff,#1413ff,#1a12ff,#2110ff,#270eff,#2d0dff,#330bff,#3a09ff,#4007ff,#4605ff,#4d04ff,#5302ff,#5900ff,#6000ff,#6600ff,#6d00ff,#7300ff,#7a00ff,#8100ff,#8700ff,#8e00ff,#9400ff,#9b00ff,#a200ff,#a900ff,#af00ff,#b600ff,#bd00ff,#c400ff,#cb00ff,#d200ff,#d900ff,#e000ff,#e700ff,#ee00ff,#f500ff,#fc00ff,#ff00fb,#ff00f4,#ff00ee,#ff00e7,#ff00e2,#ff00dc,#ff00d7,#ff00d2,#ff00cd,#ff00c8,#ff00c3,#ff00bf,#ff00bb,#ff00b7,#ff00b3,#ff00af)"></i><i class=r2 style="background:linear-gradient(90deg,#0025ff,#0023ff,#0022ff,#0020ff,#001fff,#001dff,#001bff,#001aff,#0218ff,#0816ff,#0e14ff,#1413ff,#1a11ff,#200fff,#260eff,#2c0cff,#330aff,#3908ff,#3f07ff,#4505ff,#4c03ff,#5201ff,#5800ff,#5f00ff,#6500ff,#6c00ff,#7200ff,#7900ff,#7f00ff,#8600ff,#8c00ff,#9300ff,#9a00ff,#a000ff,#a700ff,#ae00ff,#b400ff,#bb00ff,#c200ff,#c900ff,#d000ff,#d700ff,#de00ff,#e500ff,#ec00ff,#f300ff,#fa00ff,#ff00fd,#ff00f6,#ff00f0,#ff00ea,#ff00e4,#ff00de,#ff00d9,#ff00d3,#ff00cf,#ff00ca,#ff00c5,#ff00c1,#ff00bd,#ff00b9,#ff00b5,#ff00b1)"></i><i class=r2 style="background:linear-gradient(90deg,#0024ff,#0023ff,#0021ff,#001fff,#001eff,#001cff,#001aff,#0019ff,#0117ff,#0715ff,#0d14ff,#1312ff,#1910ff,#1f0fff,#260dff,#2c0bff,#3209ff,#3808ff,#3e06ff,#4504ff,#4b03ff,#5101ff,#5700ff,#5e00ff,#6400ff,#6b00ff,#7100ff,#7700ff,#7e00ff,#8400ff,#8b00ff,#9200ff,#9800ff,#9f00ff,#a500ff,#ac00ff,#b300ff,#b900ff,#c000ff,#c700ff,#ce00ff,#d500ff,#dc00ff,#e300ff,#e900ff,#f000ff,#f700ff,#ff00ff,#ff00f9,#ff00f2,#ff00ec,#ff00e6,#ff00e0,#ff00db,#ff00d5,#ff00d0,#ff00cc,#ff00c7,#ff00c3,#ff00be,#ff00ba,#ff00b6,#ff00b3)"></i><i class=r2 style="background:linear-gradient(90deg,#0024ff,#0022ff,#0020ff,#001fff,#001dff,#001bff,#001aff,#0018ff,#0116ff,#0715ff,#0d13ff,#1311ff,#1910ff,#1f0eff,#250cff,#2b0bff,#3109ff,#3707ff,#3e05ff,#4404ff,#4a02ff,#5000ff,#5600ff,#5d00ff,#6300ff,#6900ff,#7000ff,#7600ff,#7d00ff,#8300ff,#8a00ff,#9000ff,#9700ff,#9d00ff,#a400ff,#aa00ff,#b100ff,#b800ff,#be00ff,#c500ff,#cc00ff,#d300ff,#da00ff,#e000ff,#e700ff,#ee00ff,#f500ff,#fc00ff,#ff00fb,#ff00f4,#ff00ee,#ff00e8,#ff00e2,#ff00dd,#ff00d7,#ff00d2,#ff00ce,#ff00c9,#ff00c4,#ff00c0,#ff00bc,#ff00b8,#ff00b4)"></i><i class=r2 style="background:linear-gradient(90deg,#0023ff,#0021ff,#001fff,#001eff,#001cff,#001bff,#0019ff,#0017ff,#0116ff,#0714ff,#0c12ff,#1211ff,#180fff,#1e0dff,#240cff,#2a0aff,#3108ff,#3707ff,#3d05ff,#4303ff,#4901ff,#4f00ff,#5500ff,#5c00ff,#6200ff,#6800ff,#6f00ff,#7500ff,#7b00ff,#8200ff,#8800ff,#8f00ff,#9500ff,#9c00ff,#a200ff,#a900ff,#af00ff,#b600ff,#bd00ff,#c300ff,#ca00ff,#d100ff,#d800ff,#de00ff,#e500ff,#ec00ff,#f300ff,#fa00ff,#ff00fd,#ff00f6,#ff00f0,#ff00ea,#ff00e4,#ff00df,#ff00d9,#ff00d4,#ff00cf,#ff00cb,#ff00c6,#ff00c2,#ff00be,#ff00ba,#ff00b6)"></i><i class=r2 style="background:linear-gradient(90deg,#0022ff,#0020ff,#001fff,#001dff,#001cff,#001aff,#0018ff,#0017ff,#0015ff,#0613ff,#0c12ff,#1210ff,#180eff,#1e0dff,#240bff,#2a09ff,#3008ff,#3606ff,#3c04ff,#4202ff,#4801ff,#4e00ff,#5500ff,#5b00ff,#6100ff,#6700ff,#6d00ff,#7400ff,#7a00ff,#8000ff,#8700ff,#8d00ff,#9400ff,#9a00ff,#a100ff,#a700ff,#ae00ff,#b400ff,#bb00ff,#c200ff,#c800ff,#cf00ff,#d600ff,#dc00ff,#e300ff,#ea00ff,#f100ff,#f800ff,#fe00ff,#ff00f9,#ff00f2,#ff00ec,#ff00e6,#ff00e1,#ff00db,#ff00d6,#ff00d1,#ff00cd,#ff00c8,#ff00c4,#ff00bf,#ff00bb,#ff00b8)"></i><i class=r2 style="background:linear-gradient(90deg,#0021ff,#0020ff,#001eff,#001cff,#001bff,#0019ff,#0018ff,#0016ff,#0014ff,#0613ff,#0c11ff,#120fff,#170eff,#1d0cff,#230aff,#2909ff,#2f07ff,#3505ff,#3b04ff,#4102ff,#4700ff,#4d00ff,#5400ff,#5a00ff,#6000ff,#6600ff,#6c00ff,#7300ff,#7900ff,#7f00ff,#8600ff,#8c00ff,#9200ff,#9900ff,#9f00ff,#a600ff,#ac00ff,#b300ff,#b900ff,#c000ff,#c600ff,#cd00ff,#d400ff,#da00ff,#e100ff,#e800ff,#ef00ff,#f500ff,#fc00ff,#ff00fb,#ff00f4,#ff00ee,#ff00e8,#ff00e3,#ff00dd,#ff00d8,#ff00d3,#ff00ce,#ff00ca,#ff00c5,#ff00c1,#ff00bd,#ff00b9)"></i><i class=r2 style="background:linear-gradient(90deg,#0020ff,#001fff,#001dff,#001cff,#001aff,#0018ff,#0017ff,#0015ff,#0014ff,#0512ff,#0b10ff,#110fff,#170dff,#1d0bff,#230aff,#2908ff,#2f06ff,#3405ff,#3a03ff,#4001ff,#4700ff,#4d00ff,#5300ff,#5900ff,#5f00ff,#6500ff,#6b00ff,#7100ff,#7800ff,#7e00ff,#8400ff,#8b00ff,#9100ff,#9700ff,#9e00ff,#a400ff,#aa00ff,#b100ff,#b700ff,#be00ff,#c500ff,#cb00ff,#d200ff,#d800ff,#df00ff,#e600ff,#ec00ff,#f300ff,#fa00ff,#ff00fd,#ff00f7,#ff00f0,#ff00ea,#ff00e5,#ff00df,#ff00da,#ff00d5,#ff00d0,#ff00cc,#ff00c7,#ff00c3,#ff00bf,#ff00bb)"></i><i class=r2 style="background:linear-gradient(90deg,#0020ff,#001eff,#001cff,#001bff,#0019ff,#0018ff,#0016ff,#0015ff,#0013ff,#0511ff,#0b10ff,#110eff,#160cff,#1c0bff,#2209ff,#2807ff,#2e06ff,#3404ff,#3a02ff,#4001ff,#4600ff,#4c00ff,#5200ff,#5800ff,#5e00ff,#6400ff,#6a00ff,#7000ff,#7700ff,#7d00ff,#8300ff,#8900ff,#8f00ff,#9600ff,#9c00ff,#a300ff,#a900ff,#af00ff,#b600ff,#bc00ff,#c300ff,#c900ff,#d000ff,#d600ff,#dd00ff,#e400ff,#ea00ff,#f100ff,#f800ff,#fe00ff,#ff00f9,#ff00f3,#ff00ed,#ff00e7,#ff00e1,#ff00dc,#ff00d7,#ff00d2,#ff00cd,#ff00c9,#ff00c5,#ff00c1,#ff00bd)"></i><i class=r2 style="background:linear-gradient(90deg,#001fff,#001dff,#001cff,#001aff,#0019ff,#0017ff,#0015ff,#0014ff,#0012ff,#0511ff,#0a0fff,#100dff,#160cff,#1c0aff,#2209ff,#2707ff,#2d05ff,#3304ff,#3902ff,#3f00ff,#4500ff,#4b00ff,#5100ff,#5700ff,#5d00ff,#6300ff,#6900ff,#6f00ff,#7500ff,#7b00ff,#8200ff,#8800ff,#8e00ff,#9400ff,#9b00ff,#a100ff,#a700ff,#ae00ff,#b400ff,#bb00ff,#c100ff,#c700ff,#ce00ff,#d400ff,#db00ff,#e200ff,#e800ff,#ef00ff,#f600ff,#fc00ff,#ff00fb,#ff00f5,#ff00ef,#ff00e9,#ff00e3,#ff00de,#ff00d9,#ff00d4,#ff00cf,#ff00cb,#ff00c6,#ff00c2,#ff00be)"></i><i class=r2 style="background:linear-gradient(90deg,#001eff,#001dff,#001bff,#0019ff,#0018ff,#0016ff,#0015ff,#0013ff,#0012ff,#0410ff,#0a0eff,#100dff,#160bff,#1b0aff,#2108ff,#2706ff,#2d05ff,#3203ff,#3801ff,#3e00ff,#4400ff,#4a00ff,#5000ff,#5600ff,#5c00ff,#6200ff,#6800ff,#6e00ff,#7400ff,#7a00ff,#8000ff,#8700ff,#8d00ff,#9300ff,#9900ff,#a000ff,#a600ff,#ac00ff,#b200ff,#b900ff,#bf00ff,#c600ff,#cc00ff,#d300ff,#d900ff,#e000ff,#e600ff,#ed00ff,#f300ff,#fa00ff,#ff00fd,#ff00f7,#ff00f1,#ff00eb,#ff00e5,#ff00e0,#ff00db,#ff00d6,#ff00d1,#ff00cc,#ff00c8,#ff00c4,#ff00c0)"></i><i class=r2 style="background:linear-gradient(90deg,#001dff,#001cff,#001aff,#0019ff,#0017ff,#0016ff,#0014ff,#0013ff,#0011ff,#040fff,#0a0eff,#0f0cff,#150bff,#1b09ff,#2107ff,#2606ff,#2c04ff,#3202ff,#3801ff,#3d00ff,#4300ff,#4900ff,#4f00ff,#5500ff,#5b00ff,#6100ff,#6700ff,#6d00ff,#7300ff,#7900ff,#7f00ff,#8500ff,#8b00ff,#9200ff,#9800ff,#9e00ff,#a400ff,#ab00ff,#b100ff,#b700ff,#be00ff,#c400ff,#ca00ff,#d100ff,#d700ff,#de00ff,#e400ff,#eb00ff,#f100ff,#f800ff,#fe00ff,#ff00f9,#ff00f3,#ff00ed,#ff00e7,#ff00e2,#ff00dd,#ff00d8,#ff00d3,#ff00ce,#ff00ca,#ff00c6,#ff00c2)"></i><i class=r2 style="background:linear-gradient(90deg,#001dff,#001bff,#001aff,#0018ff,#0017ff,#0015ff,#0013ff,#0012ff,#0010ff,#040fff,#090dff,#0f0cff,#150aff,#1a08ff,#2007ff,#2605ff,#2b04ff,#3102ff,#3700ff,#3d00ff,#4300ff,#4800ff,#4e00ff,#5400ff,#5a00ff,#6000ff,#6600ff,#6c00ff,#7200ff,#7800ff,#7e00ff,#8400ff,#8a00ff,#9000ff,#9600ff,#9d00ff,#a300ff,#a900ff,#af00ff,#b600ff,#bc00ff,#c200ff,#c900ff,#cf00ff,#d500ff,#dc00ff,#e200ff,#e900ff,#ef00ff,#f600ff,#fc00ff,#ff00fb,#ff00f5,#ff00ef,#ff00e9,#ff00e4,#ff00df,#ff00da,#ff00d5,#ff00d0,#ff00cc,#ff00c7,#ff00c3)"></i><i class=r2 style="background:linear-gradient(90deg,#001cff,#001bff,#0019ff,#0017ff,#0016ff,#0014ff,#0013ff,#0011ff,#0010ff,#030eff,#090dff,#0f0bff,#1409ff,#1a08ff,#1f06ff,#2505ff,#2b03ff,#3101ff,#3600ff,#3c00ff,#4200ff,#4800ff,#4d00ff,#5300ff,#5900ff,#5f00ff,#6500ff,#6b00ff,#7100ff,#7700ff,#7d00ff,#8300ff,#8900ff,#8f00ff,#9500ff,#9b00ff,#a100ff,#a800ff,#ae00ff,#b400ff,#ba00ff,#c000ff,#c700ff,#cd00ff,#d300ff,#da00ff,#e000ff,#e700ff,#ed00ff,#f400ff,#fa00ff,#ff00fd,#ff00f7,#ff00f1,#ff00eb,#ff00e6,#ff00e0,#ff00db,#ff00d7,#ff00d2,#ff00cd,#ff00c9,#ff00c5)"></i><i class=r2 style="background:linear-gradient(90deg,#001bff,#001aff,#0018ff,#0017ff,#0015ff,#0014ff,#0012ff,#0011ff,#000fff,#030dff,#090cff,#0e0aff,#1409ff,#1907ff,#1f06ff,#2504ff,#2a02ff,#3001ff,#3600ff,#3b00ff,#4100ff,#4700ff,#4d00ff,#5200ff,#5800ff,#5e00ff,#6400ff,#6a00ff,#7000ff,#7600ff,#7c00ff,#8200ff,#8800ff,#8e00ff,#9400ff,#9a00ff,#a000ff,#a600ff,#ac00ff,#b200ff,#b900ff,#bf00ff,#c500ff,#cb00ff,#d200ff,#d800ff,#de00ff,#e500ff,#eb00ff,#f200ff,#f800ff,#fe00ff,#ff00f9,#ff00f3,#ff00ed,#ff00e8,#ff00e2,#ff00dd,#ff00d8,#ff00d4,#ff00cf,#ff00cb,#ff00c7)"></i><i class=r2 style="background:linear-gradient(90deg,#001bff,#0019ff,#0018ff,#0016ff,#0015ff,#0013ff,#0012ff,#0010ff,#000eff,#030dff,#080bff,#0e0aff,#1308ff,#1907ff,#1e05ff,#2403ff,#2a02ff,#2f00ff,#3500ff,#3b00ff,#4000ff,#4600ff,#4c00ff,#5200ff,#5700ff,#5d00ff,#6300ff,#6900ff,#6f00ff,#7500ff,#7a00ff,#8000ff,#8600ff,#8c00ff,#9200ff,#9800ff,#9e00ff,#a500ff,#ab00ff,#b100ff,#b700ff,#bd00ff,#c300ff,#ca00ff,#d000ff,#d600ff,#dc00ff,#e300ff,#e900ff,#ef00ff,#f600ff,#fc00ff,#ff00fb,#ff00f5,#ff00ef,#ff00ea,#ff00e4,#ff00df,#ff00da,#ff00d5,#ff00d1,#ff00cc,#ff00c8)"></i><i class=r2 style="background:linear-gradient(90deg,#001aff,#0018ff,#0017ff,#0015ff,#0014ff,#0012ff,#0011ff,#000fff,#000eff,#030cff,#080bff,#0d09ff,#1308ff,#1806ff,#1e05ff,#2303ff,#2901ff,#2f00ff,#3400ff,#3a00ff,#4000ff,#4500ff,#4b00ff,#5100ff,#5600ff,#5c00ff,#6200ff,#6800ff,#6e00ff,#7300ff,#7900ff,#7f00ff,#8500ff,#8b00ff,#9100ff,#9700ff,#9d00ff,#a300ff,#a900ff,#af00ff,#b500ff,#bb00ff,#c200ff,#c800ff,#ce00ff,#d400ff,#db00ff,#e100ff,#e700ff,#ed00ff,#f400ff,#fa00ff,#ff00fd,#ff00f7,#ff00f1,#ff00ec,#ff00e6,#ff00e1,#ff00dc,#ff00d7,#ff00d3,#ff00ce,#ff00ca)"></i><i class=r2 style="background:linear-gradient(90deg,#0019ff,#0018ff,#0016ff,#0015ff,#0013ff,#0012ff,#0010ff,#000fff,#000dff,#020cff,#080aff,#0d09ff,#1207ff,#1806ff,#1d04ff,#2302ff,#2801ff,#2e00ff,#3400ff,#3900ff,#3f00ff,#4400ff,#4a00ff,#5000ff,#5600ff,#5b00ff,#6100ff,#6700ff,#6d00ff,#7200ff,#7800ff,#7e00ff,#8400ff,#8a00ff,#9000ff,#9600ff,#9c00ff,#a200ff,#a800ff,#ae00ff,#b400ff,#ba00ff,#c000ff,#c600ff,#cc00ff,#d200ff,#d900ff,#df00ff,#e500ff,#eb00ff,#f200ff,#f800ff,#fe00ff,#ff00f9,#ff00f3,#ff00ee,#ff00e8,#ff00e3,#ff00de,#ff00d9,#ff00d4,#ff00d0,#ff00cc)"></i><i class=r2 style="background:linear-gradient(90deg,#0019ff,#0017ff,#0016ff,#0014ff,#0013ff,#0011ff,#0010ff,#000eff,#000dff,#020bff,#070aff,#0d08ff,#1207ff,#1805ff,#1d03ff,#2202ff,#2800ff,#2d00ff,#3300ff,#3900ff,#3e00ff,#4400ff,#4900ff,#4f00ff,#5500ff,#5a00ff,#6000ff,#6600ff,#6c00ff,#7100ff,#7700ff,#7d00ff,#8300ff,#8900ff,#8e00ff,#9400ff,#9a00ff,#a000ff,#a600ff,#ac00ff,#b200ff,#b800ff,#be00ff,#c400ff,#cb00ff,#d100ff,#d700ff,#dd00ff,#e300ff,#e900ff,#f000ff,#f600ff,#fc00ff,#ff00fb,#ff00f5,#ff00f0,#ff00ea,#ff00e5,#ff00e0,#ff00db,#ff00d6,#ff00d2,#ff00cd)"></i><i class=r2 style="background:linear-gradient(90deg,#0018ff,#0017ff,#0015ff,#0014ff,#0012ff,#0011ff,#000fff,#000eff,#000cff,#020bff,#0709ff,#0c08ff,#1206ff,#1704ff,#1c03ff,#2201ff,#2700ff,#2d00ff,#3200ff,#3800ff,#3d00ff,#4300ff,#4900ff,#4e00ff,#5400ff,#5900ff,#5f00ff,#6500ff,#6a00ff,#7000ff,#7600ff,#7c00ff,#8200ff,#8700ff,#8d00ff,#9300ff,#9900ff,#9f00ff,#a500ff,#ab00ff,#b100ff,#b700ff,#bd00ff,#c300ff,#c900ff,#cf00ff,#d500ff,#db00ff,#e100ff,#e800ff,#ee00ff,#f400ff,#fa00ff,#ff00fd,#ff00f7,#ff00f2,#ff00ec,#ff00e7,#ff00e2,#ff00dd,#ff00d8,#ff00d3,#ff00cf)"></i><i class=r2 style="background:linear-gradient(90deg,#0017ff,#0016ff,#0014ff,#0013ff,#0011ff,#0010ff,#000eff,#000dff,#000bff,#010aff,#0708ff,#0c07ff,#1105ff,#1704ff,#1c02ff,#2101ff,#2700ff,#2c00ff,#3200ff,#3700ff,#3d00ff,#4200ff,#4800ff,#4d00ff,#5300ff,#5900ff,#5e00ff,#6400ff,#6900ff,#6f00ff,#7500ff,#7b00ff,#8000ff,#8600ff,#8c00ff,#9200ff,#9800ff,#9d00ff,#a300ff,#a900ff,#af00ff,#b500ff,#bb00ff,#c100ff,#c700ff,#cd00ff,#d300ff,#d900ff,#df00ff,#e600ff,#ec00ff,#f200ff,#f800ff,#fe00ff,#ff00f9,#ff00f4,#ff00ee,#ff00e9,#ff00e3,#ff00de,#ff00da,#ff00d5,#ff00d1)"></i><i class=r2 style="background:linear-gradient(90deg,#0017ff,#0015ff,#0014ff,#0012ff,#0011ff,#000fff,#000eff,#000cff,#000bff,#0109ff,#0608ff,#0c06ff,#1105ff,#1603ff,#1c02ff,#2100ff,#2600ff,#2c00ff,#3100ff,#3700ff,#3c00ff,#4200ff,#4700ff,#4d00ff,#5200ff,#5800ff,#5d00ff,#6300ff,#6800ff,#6e00ff,#7400ff,#7a00ff,#7f00ff,#8500ff,#8b00ff,#9000ff,#9600ff,#9c00ff,#a200ff,#a800ff,#ae00ff,#b400ff,#ba00ff,#c000ff,#c500ff,#cb00ff,#d200ff,#d800ff,#de00ff,#e400ff,#ea00ff,#f000ff,#f600ff,#fc00ff,#ff00fb,#ff00f6,#ff00f0,#ff00ea,#ff00e5,#ff00e0,#ff00db,#ff00d7,#ff00d2)"></i><i class=r2 style="background:linear-gradient(90deg,#0016ff,#0015ff,#0013ff,#0012ff,#0010ff,#000fff,#000dff,#000cff,#000aff,#0109ff,#0607ff,#0b06ff,#1004ff,#1603ff,#1b01ff,#2000ff,#2600ff,#2b00ff,#3100ff,#3600ff,#3b00ff,#4100ff,#4600ff,#4c00ff,#5100ff,#5700ff,#5c00ff,#6200ff,#6800ff,#6d00ff,#7300ff,#7800ff,#7e00ff,#8400ff,#8900ff,#8f00ff,#9500ff,#9b00ff,#a100ff,#a600ff,#ac00ff,#b200ff,#b800ff,#be00ff,#c400ff,#ca00ff,#d000ff,#d600ff,#dc00ff,#e200ff,#e800ff,#ee00ff,#f400ff,#fa00ff,#ff00fe,#ff00f8,#ff00f2,#ff00ec,#ff00e7,#ff00e2,#ff00dd,#ff00d9,#ff00d4)"></i><i class=r2 style="background:linear-gradient(90deg,#0015ff,#0014ff,#0013ff,#0011ff,#0010ff,#000eff,#000dff,#000bff,#000aff,#0008ff,#0607ff,#0b05ff,#1004ff,#1502ff,#1b01ff,#2000ff,#2500ff,#2b00ff,#3000ff,#3500ff,#3b00ff,#4000ff,#4600ff,#4b00ff,#5000ff,#5600ff,#5b00ff,#6100ff,#6700ff,#6c00ff,#7200ff,#7700ff,#7d00ff,#8300ff,#8800ff,#8e00ff,#9400ff,#9900ff,#9f00ff,#a500ff,#ab00ff,#b100ff,#b600ff,#bc00ff,#c200ff,#c800ff,#ce00ff,#d400ff,#da00ff,#e000ff,#e600ff,#ec00ff,#f200ff,#f800ff,#fe00ff,#ff00fa,#ff00f4,#ff00ee,#ff00e9,#ff00e4,#ff00df,#ff00da,#ff00d6)"></i><i class=r2 style="background:linear-gradient(90deg,#0015ff,#0013ff,#0012ff,#0011ff,#000fff,#000eff,#000cff,#000bff,#0009ff,#0008ff,#0506ff,#0b05ff,#1003ff,#1502ff,#1a00ff,#1f00ff,#2500ff,#2a00ff,#2f00ff,#3500ff,#3a00ff,#3f00ff,#4500ff,#4a00ff,#5000ff,#5500ff,#5b00ff,#6000ff,#6600ff,#6b00ff,#7100ff,#7600ff,#7c00ff,#8100ff,#8700ff,#8d00ff,#9200ff,#9800ff,#9e00ff,#a400ff,#a900ff,#af00ff,#b500ff,#bb00ff,#c100ff,#c700ff,#cc00ff,#d200ff,#d800ff,#de00ff,#e400ff,#ea00ff,#f000ff,#f600ff,#fc00ff,#ff00fc,#ff00f6,#ff00f0,#ff00eb,#ff00e6,#ff00e1,#ff00dc,#ff00d7)"></i><i class=r2 style="background:linear-gradient(90deg,#0014ff,#0013ff,#0011ff,#0010ff,#000fff,#000dff,#000cff,#000aff,#0009ff,#0007ff,#0506ff,#0a04ff,#0f03ff,#1501ff,#1a00ff,#1f00ff,#2400ff,#2900ff,#2f00ff,#3400ff,#3900ff,#3f00ff,#4400ff,#4900ff,#4f00ff,#5400ff,#5a00ff,#5f00ff,#6500ff,#6a00ff,#7000ff,#7500ff,#7b00ff,#8000ff,#8600ff,#8c00ff,#9100ff,#9700ff,#9d00ff,#a200ff,#a800ff,#ae00ff,#b300ff,#b900ff,#bf00ff,#c500ff,#cb00ff,#d100ff,#d700ff,#dc00ff,#e200ff,#e800ff,#ee00ff,#f400ff,#fa00ff,#ff00fe,#ff00f8,#ff00f2,#ff00ed,#ff00e8,#ff00e3,#ff00de,#ff00d9)"></i><i class=r2 style="background:linear-gradient(90deg,#0014ff,#0012ff,#0011ff,#000fff,#000eff,#000dff,#000bff,#000aff,#0008ff,#0007ff,#0505ff,#0a04ff,#0f02ff,#1401ff,#1900ff,#1e00ff,#2400ff,#2900ff,#2e00ff,#3300ff,#3900ff,#3e00ff,#4300ff,#4900ff,#4e00ff,#5300ff,#5900ff,#5e00ff,#6400ff,#6900ff,#6f00ff,#7400ff,#7a00ff,#7f00ff,#8500ff,#8a00ff,#9000ff,#9600ff,#9b00ff,#a100ff,#a700ff,#ac00ff,#b200ff,#b800ff,#be00ff,#c300ff,#c900ff,#cf00ff,#d500ff,#db00ff,#e100ff,#e600ff,#ec00ff,#f200ff,#f800ff,#fe00ff,#ff00fa,#ff00f4,#ff00ef,#ff00e9,#ff00e4,#ff00e0,#ff00db)"></i><i class=r2 style="background:linear-gradient(90deg,#0013ff,#0012ff,#0010ff,#000fff,#000dff,#000cff,#000bff,#0009ff,#0008ff,#0006ff,#0405ff,#0903ff,#0f02ff,#1400ff,#1900ff,#1e00ff,#2300ff,#2800ff,#2e00ff,#3300ff,#3800ff,#3d00ff,#4300ff,#4800ff,#4d00ff,#5300ff,#5800ff,#5d00ff,#6300ff,#6800ff,#6e00ff,#7300ff,#7900ff,#7e00ff,#8400ff,#8900ff,#8f00ff,#9400ff,#9a00ff,#a000ff,#a500ff,#ab00ff,#b100ff,#b600ff,#bc00ff,#c200ff,#c700ff,#cd00ff,#d300ff,#d900ff,#df00ff,#e500ff,#eb00ff,#f000ff,#f600ff,#fc00ff,#ff00fc,#ff00f6,#ff00f0,#ff00eb,#ff00e6,#ff00e1,#ff00dd)"></i><i class=r2 style="background:linear-gradient(90deg,#0012ff,#0011ff,#0010ff,#000eff,#000dff,#000bff,#000aff,#0009ff,#0007ff,#0006ff,#0404ff,#0903ff,#0e01ff,#1300ff,#1800ff,#1e00ff,#2300ff,#2800ff,#2d00ff,#3200ff,#3700ff,#3d00ff,#4200ff,#4700ff,#4d00ff,#5200ff,#5700ff,#5d00ff,#6200ff,#6700ff,#6d00ff,#7200ff,#7800ff,#7d00ff,#8300ff,#8800ff,#8e00ff,#9300ff,#9900ff,#9e00ff,#a400ff,#a900ff,#af00ff,#b500ff,#ba00ff,#c000ff,#c600ff,#cc00ff,#d100ff,#d700ff,#dd00ff,#e300ff,#e900ff,#ef00ff,#f400ff,#fa00ff,#ff00fe,#ff00f8,#ff00f2,#ff00ed,#ff00e8,#ff00e3,#ff00de)"></i><i class=r2 style="background:linear-gradient(90deg,#0012ff,#0011ff,#000fff,#000eff,#000cff,#000bff,#0009ff,#0008ff,#0007ff,#0005ff,#0404ff,#0902ff,#0e01ff,#1300ff,#1800ff,#1d00ff,#2200ff,#2700ff,#2d00ff,#3200ff,#3700ff,#3c00ff,#4100ff,#4700ff,#4c00ff,#5100ff,#5600ff,#5c00ff,#6100ff,#6600ff,#6c00ff,#7100ff,#7700ff,#7c00ff,#8100ff,#8700ff,#8c00ff,#9200ff,#9700ff,#9d00ff,#a300ff,#a800ff,#ae00ff,#b300ff,#b900ff,#bf00ff,#c400ff,#ca00ff,#d000ff,#d600ff,#db00ff,#e100ff,#e700ff,#ed00ff,#f300ff,#f800ff,#fe00ff,#ff00fa,#ff00f4,#ff00ef,#ff00ea,#ff00e5,#ff00e0)"></i><i class=r2 style="background:linear-gradient(90deg,#0011ff,#0010ff,#000fff,#000dff,#000cff,#000aff,#0009ff,#0008ff,#0006ff,#0005ff,#0403ff,#0902ff,#0e00ff,#1300ff,#1800ff,#1d00ff,#2200ff,#2700ff,#2c00ff,#3100ff,#3600ff,#3b00ff,#4100ff,#4600ff,#4b00ff,#5000ff,#5600ff,#5b00ff,#6000ff,#6500ff,#6b00ff,#7000ff,#7600ff,#7b00ff,#8000ff,#8600ff,#8b00ff,#9100ff,#9600ff,#9c00ff,#a100ff,#a700ff,#ac00ff,#b200ff,#b700ff,#bd00ff,#c300ff,#c800ff,#ce00ff,#d400ff,#da00ff,#df00ff,#e500ff,#eb00ff,#f100ff,#f700ff,#fc00ff,#ff00fc,#ff00f6,#ff00f1,#ff00ec,#ff00e7,#ff00e2)"></i><i class=r2 style="background:linear-gradient(90deg,#0011ff,#000fff,#000eff,#000dff,#000bff,#000aff,#0008ff,#0007ff,#0006ff,#0004ff,#0303ff,#0801ff,#0d00ff,#1200ff,#1700ff,#1c00ff,#2100ff,#2600ff,#2b00ff,#3100ff,#3600ff,#3b00ff,#4000ff,#4500ff,#4a00ff,#5000ff,#5500ff,#5a00ff,#5f00ff,#6500ff,#6a00ff,#6f00ff,#7400ff,#7a00ff,#7f00ff,#8500ff,#8a00ff,#8f00ff,#9500ff,#9a00ff,#a000ff,#a500ff,#ab00ff,#b000ff,#b600ff,#bc00ff,#c100ff,#c700ff,#cd00ff,#d200ff,#d800ff,#de00ff,#e300ff,#e900ff,#ef00ff,#f500ff,#fa00ff,#ff00fe,#ff00f8,#ff00f3,#ff00ed,#ff00e8,#ff00e3)"></i><i class=r2 style="background:linear-gradient(90deg,#0010ff,#000fff,#000dff,#000cff,#000bff,#0009ff,#0008ff,#0007ff,#0005ff,#0004ff,#0302ff,#0801ff,#0d00ff,#1200ff,#1700ff,#1c00ff,#2100ff,#2600ff,#2b00ff,#3000ff,#3500ff,#3a00ff,#3f00ff,#4400ff,#4a00ff,#4f00ff,#5400ff,#5900ff,#5e00ff,#6400ff,#6900ff,#6e00ff,#7300ff,#7900ff,#7e00ff,#8400ff,#8900ff,#8e00ff,#9400ff,#9900ff,#9f00ff,#a400ff,#aa00ff,#af00ff,#b500ff,#ba00ff,#c000ff,#c500ff,#cb00ff,#d100ff,#d600ff,#dc00ff,#e200ff,#e700ff,#ed00ff,#f300ff,#f900ff,#fe00ff,#ff00fa,#ff00f4,#ff00ef,#ff00ea,#ff00e5)"></i><i class=r2 style="background:linear-gradient(90deg,#0010ff,#000eff,#000dff,#000cff,#000aff,#0009ff,#0007ff,#0006ff,#0005ff,#0003ff,#0302ff,#0800ff,#0c00ff,#1100ff,#1600ff,#1b00ff,#2000ff,#2500ff,#2a00ff,#2f00ff,#3400ff,#3a00ff,#3f00ff,#4400ff,#4900ff,#4e00ff,#5300ff,#5800ff,#5e00ff,#6300ff,#6800ff,#6d00ff,#7300ff,#7800ff,#7d00ff,#8200ff,#8800ff,#8d00ff,#9300ff,#9800ff,#9d00ff,#a300ff,#a800ff,#ae00ff,#b300ff,#b900ff,#be00ff,#c400ff,#c900ff,#cf00ff,#d500ff,#da00ff,#e000ff,#e600ff,#eb00ff,#f100ff,#f700ff,#fc00ff,#ff00fc,#ff00f6,#ff00f1,#ff00ec,#ff00e7)"></i><i class=r2 style="background:linear-gradient(90deg,#000fff,#000eff,#000cff,#000bff,#000aff,#0008ff,#0007ff,#0006ff,#0004ff,#0003ff,#0201ff,#0700ff,#0c00ff,#1100ff,#1600ff,#1b00ff,#2000ff,#2500ff,#2a00ff,#2f00ff,#3400ff,#3900ff,#3e00ff,#4300ff,#4800ff,#4d00ff,#5200ff,#5800ff,#5d00ff,#6200ff,#6700ff,#6c00ff,#7200ff,#7700ff,#7c00ff,#8100ff,#8700ff,#8c00ff,#9100ff,#9700ff,#9c00ff,#a100ff,#a700ff,#ac00ff,#b200ff,#b700ff,#bd00ff,#c200ff,#c800ff,#cd00ff,#d300ff,#d900ff,#de00ff,#e400ff,#e900ff,#ef00ff,#f500ff,#fb00ff,#ff00fe,#ff00f8,#ff00f3,#ff00ee,#ff00e9)"></i><i class=r2 style="background:linear-gradient(90deg,#000fff,#000dff,#000cff,#000bff,#0009ff,#0008ff,#0006ff,#0005ff,#0004ff,#0002ff,#0201ff,#0700ff,#0c00ff,#1100ff,#1600ff,#1a00ff,#1f00ff,#2400ff,#2900ff,#2e00ff,#3300ff,#3800ff,#3d00ff,#4200ff,#4700ff,#4d00ff,#5200ff,#5700ff,#5c00ff,#6100ff,#6600ff,#6b00ff,#7100ff,#7600ff,#7b00ff,#8000ff,#8600ff,#8b00ff,#9000ff,#9500ff,#9b00ff,#a000ff,#a600ff,#ab00ff,#b000ff,#b600ff,#bb00ff,#c100ff,#c600ff,#cc00ff,#d100ff,#d700ff,#dc00ff,#e200ff,#e800ff,#ed00ff,#f300ff,#f900ff,#fe00ff,#ff00fa,#ff00f5,#ff00ef,#ff00ea)"></i><i class=r2 style="background:linear-gradient(90deg,#000eff,#000dff,#000bff,#000aff,#0009ff,#0007ff,#0006ff,#0005ff,#0003ff,#0002ff,#0200ff,#0700ff,#0b00ff,#1000ff,#1500ff,#1a00ff,#1f00ff,#2400ff,#2900ff,#2e00ff,#3300ff,#3800ff,#3d00ff,#4200ff,#4700ff,#4c00ff,#5100ff,#5600ff,#5b00ff,#6000ff,#6500ff,#6a00ff,#7000ff,#7500ff,#7a00ff,#7f00ff,#8400ff,#8a00ff,#8f00ff,#9400ff,#9a00ff,#9f00ff,#a400ff,#aa00ff,#af00ff,#b400ff,#ba00ff,#bf00ff,#c500ff,#ca00ff,#d000ff,#d500ff,#db00ff,#e000ff,#e600ff,#ec00ff,#f100ff,#f700ff,#fc00ff,#ff00fc,#ff00f6,#ff00f1,#ff00ec)"></i><i class=r2 style="background:linear-gradient(90deg,#000eff,#000cff,#000bff,#000aff,#0008ff,#0007ff,#0005ff,#0004ff,#0003ff,#0001ff,#0200ff,#0600ff,#0b00ff,#1000ff,#1500ff,#1a00ff,#1f00ff,#2300ff,#2800ff,#2d00ff,#3200ff,#3700ff,#3c00ff,#4100ff,#4600ff,#4b00ff,#5000ff,#5500ff,#5a00ff,#5f00ff,#6400ff,#6a00ff,#6f00ff,#7400ff,#7900ff,#7e00ff,#8300ff,#8900ff,#8e00ff,#9300ff,#9800ff,#9e00ff,#a300ff,#a800ff,#ae00ff,#b300ff,#b800ff,#be00ff,#c300ff,#c900ff,#ce00ff,#d400ff,#d900ff,#df00ff,#e400ff,#ea00ff,#ef00ff,#f500ff,#fb00ff,#ff00fe,#ff00f8,#ff00f3,#ff00ee)"></i><i class=r2 style="background:linear-gradient(90deg,#000dff,#000cff,#000aff,#0009ff,#0008ff,#0006ff,#0005ff,#0004ff,#0002ff,#0001ff,#0100ff,#0600ff,#0b00ff,#1000ff,#1400ff,#1900ff,#1e00ff,#2300ff,#2800ff,#2d00ff,#3200ff,#3700ff,#3b00ff,#4000ff,#4500ff,#4a00ff,#4f00ff,#5400ff,#5900ff,#5e00ff,#6400ff,#6900ff,#6e00ff,#7300ff,#7800ff,#7d00ff,#8200ff,#8800ff,#8d00ff,#9200ff,#9700ff,#9c00ff,#a200ff,#a700ff,#ac00ff,#b200ff,#b700ff,#bc00ff,#c200ff,#c700ff,#cd00ff,#d200ff,#d800ff,#dd00ff,#e300ff,#e800ff,#ee00ff,#f300ff,#f900ff,#fe00ff,#ff00fa,#ff00f5,#ff00f0)"></i></div><div class="a" style="left:1223px;top:674.2px;width:6px;height:1.4px;background:#a8a8a8"></div><span class="t" style="left:1214.44px;top:665.83px;font-size:16.20px;color:#d8d8d8;transform:scaleX(0.9500);">0</span><div class="a" style="left:1223px;top:630.7px;width:6px;height:1.4px;background:#a8a8a8"></div><span class="t" style="left:1193.05px;top:622.38px;font-size:16.20px;color:#d8d8d8;transform:scaleX(0.9500);">0.05</span><div class="a" style="left:1223px;top:587.3px;width:6px;height:1.4px;background:#a8a8a8"></div><span class="t" style="left:1201.61px;top:578.93px;font-size:16.20px;color:#d8d8d8;transform:scaleX(0.9500);">0.1</span><div class="a" style="left:1223px;top:543.8px;width:6px;height:1.4px;background:#a8a8a8"></div><span class="t" style="left:1193.05px;top:535.48px;font-size:16.20px;color:#d8d8d8;transform:scaleX(0.9500);">0.15</span><div class="a" style="left:1223px;top:500.4px;width:6px;height:1.4px;background:#a8a8a8"></div><span class="t" style="left:1201.61px;top:492.03px;font-size:16.20px;color:#d8d8d8;transform:scaleX(0.9500);">0.2</span><div class="a" style="left:1223px;top:456.9px;width:6px;height:1.4px;background:#a8a8a8"></div><span class="t" style="left:1193.05px;top:448.58px;font-size:16.20px;color:#d8d8d8;transform:scaleX(0.9500);">0.25</span><div class="a" style="left:1223px;top:413.5px;width:6px;height:1.4px;background:#a8a8a8"></div><span class="t" style="left:1201.61px;top:405.13px;font-size:16.20px;color:#d8d8d8;transform:scaleX(0.9500);">0.3</span><div class="a" style="left:1223px;top:370.0px;width:6px;height:1.4px;background:#a8a8a8"></div><span class="t" style="left:1193.05px;top:361.68px;font-size:16.20px;color:#d8d8d8;transform:scaleX(0.9500);">0.35</span><div class="a" style="left:1223px;top:326.6px;width:6px;height:1.4px;background:#a8a8a8"></div><span class="t" style="left:1201.61px;top:318.23px;font-size:16.20px;color:#d8d8d8;transform:scaleX(0.9500);">0.4</span><div class="a" style="left:1223px;top:283.1px;width:6px;height:1.4px;background:#a8a8a8"></div><span class="t" style="left:1193.05px;top:274.78px;font-size:16.20px;color:#d8d8d8;transform:scaleX(0.9500);">0.45</span><div class="a" style="left:1223px;top:239.7px;width:6px;height:1.4px;background:#a8a8a8"></div><span class="t" style="left:1201.61px;top:231.33px;font-size:16.20px;color:#d8d8d8;transform:scaleX(0.9500);">0.5</span><div class="a" style="left:1223px;top:196.2px;width:6px;height:1.4px;background:#a8a8a8"></div><span class="t" style="left:1193.05px;top:187.88px;font-size:16.20px;color:#d8d8d8;transform:scaleX(0.9500);">0.55</span><div class="a" style="left:1229.7px;top:676px;width:1.4px;height:6px;background:#a8a8a8"></div><span class="t" style="left:1226.12px;top:683.23px;font-size:16.20px;color:#d8d8d8;transform:scaleX(0.9500);">0</span><div class="a" style="left:1286.1px;top:676px;width:1.4px;height:6px;background:#a8a8a8"></div><span class="t" style="left:1271.82px;top:683.23px;font-size:16.20px;color:#d8d8d8;transform:scaleX(0.9500);">0.05</span><div class="a" style="left:1342.5px;top:676px;width:1.4px;height:6px;background:#a8a8a8"></div><span class="t" style="left:1332.50px;top:683.23px;font-size:16.20px;color:#d8d8d8;transform:scaleX(0.9500);">0.1</span><div class="a" style="left:1398.9px;top:676px;width:1.4px;height:6px;background:#a8a8a8"></div><span class="t" style="left:1384.62px;top:683.23px;font-size:16.20px;color:#d8d8d8;transform:scaleX(0.9500);">0.15</span><div class="a" style="left:1455.3px;top:676px;width:1.4px;height:6px;background:#a8a8a8"></div><span class="t" style="left:1445.30px;top:683.23px;font-size:16.20px;color:#d8d8d8;transform:scaleX(0.9500);">0.2</span><div class="a" style="left:1511.7px;top:676px;width:1.4px;height:6px;background:#a8a8a8"></div><span class="t" style="left:1497.42px;top:683.23px;font-size:16.20px;color:#d8d8d8;transform:scaleX(0.9500);">0.25</span><div class="a" style="left:1568.1px;top:676px;width:1.4px;height:6px;background:#a8a8a8"></div><span class="t" style="left:1558.10px;top:683.23px;font-size:16.20px;color:#d8d8d8;transform:scaleX(0.9500);">0.3</span><div class="a" style="left:1624.5px;top:676px;width:1.4px;height:6px;background:#a8a8a8"></div><span class="t" style="left:1610.22px;top:683.23px;font-size:16.20px;color:#d8d8d8;transform:scaleX(0.9500);">0.35</span><div class="a" style="left:1680.9px;top:676px;width:1.4px;height:6px;background:#a8a8a8"></div><span class="t" style="left:1670.90px;top:683.23px;font-size:16.20px;color:#d8d8d8;transform:scaleX(0.9500);">0.4</span><div class="a" style="left:1737.3px;top:676px;width:1.4px;height:6px;background:#a8a8a8"></div><span class="t" style="left:1723.02px;top:683.23px;font-size:16.20px;color:#d8d8d8;transform:scaleX(0.9500);">0.45</span><div class="a" style="left:1793.7px;top:676px;width:1.4px;height:6px;background:#a8a8a8"></div><span class="t" style="left:1783.70px;top:683.23px;font-size:16.20px;color:#d8d8d8;transform:scaleX(0.9500);">0.5</span><div class="a" style="left:1850.1px;top:676px;width:1.4px;height:6px;background:#a8a8a8"></div><span class="t" style="left:1835.82px;top:683.23px;font-size:16.20px;color:#d8d8d8;transform:scaleX(0.9500);">0.55</span><svg class="a" style="left:0;top:0" width="1920" height="1058"><g fill="none" stroke="#fafafa" stroke-width="1.8"><rect x="1363.3" y="177.2" width="14" height="14"/><rect x="1389.0" y="202.6" width="14" height="14"/><rect x="1431.4" y="193.9" width="14" height="14"/><rect x="1427.9" y="217.6" width="14" height="14"/><rect x="1453.0" y="185.2" width="14" height="14"/><rect x="1481.7" y="189.9" width="14" height="14"/><rect x="1515.0" y="197.0" width="14" height="14"/><rect x="1561.0" y="202.2" width="14" height="14"/><rect x="1561.0" y="205.5" width="14" height="14"/><rect x="1534.1" y="207.9" width="14" height="14"/><rect x="1541.7" y="216.0" width="14" height="14"/><rect x="1522.8" y="212.1" width="14" height="14"/><rect x="1507.2" y="216.9" width="14" height="14"/><rect x="1515.7" y="227.3" width="14" height="14"/><rect x="1533.7" y="224.4" width="14" height="14"/><rect x="1486.9" y="225.4" width="14" height="14"/><rect x="1499.6" y="233.0" width="14" height="14"/><rect x="1485.9" y="239.6" width="14" height="14"/><rect x="1523.7" y="219.7" width="14" height="14"/><rect x="1580.9" y="245.7" width="14" height="14"/><rect x="1396.8" y="250.7" width="14" height="14"/><rect x="1379.5" y="270.9" width="14" height="14"/><rect x="1384.9" y="304.0" width="14" height="14"/><rect x="1421.2" y="301.0" width="14" height="14"/><rect x="1442.7" y="307.0" width="14" height="14"/><rect x="1480.2" y="325.9" width="14" height="14"/><rect x="1423.9" y="356.9" width="14" height="14"/><rect x="1423.9" y="410.9" width="14" height="14"/><rect x="1546.7" y="295.7" width="14" height="14"/><rect x="1566.8" y="378.9" width="14" height="14"/><rect x="1421.0" y="529.0" width="14" height="14"/><rect x="1645.9" y="233.3" width="14" height="14"/><rect x="1731.5" y="211.2" width="14" height="14"/></g><rect x="1445.8" y="258" width="13" height="13" fill="#e8eef8" fill-opacity=".25" stroke="#111" stroke-width="2"/><g stroke="#111" stroke-width="1.5"><circle cx="1376" cy="184.2" r="5" fill="#00ff00"/><circle cx="1399.1" cy="206.7" r="5" fill="#548a50"/><circle cx="1439.5" cy="200" r="5" fill="#a0b060"/><circle cx="1438" cy="221.7" r="5" fill="#5a6a40"/><circle cx="1462.7" cy="191.3" r="5" fill="#ffff00"/><circle cx="1490.1" cy="196.9" r="5" fill="#e8c830"/><circle cx="1524.6" cy="202.6" r="5" fill="#e0a030"/><circle cx="1563.8" cy="206.9" r="5" fill="#d07a2a"/><circle cx="1572.3" cy="209.7" r="5" fill="#a86024"/><circle cx="1533.6" cy="216.3" r="5" fill="#985a38"/><circle cx="1544.9" cy="215.4" r="5" fill="#7a4a2c"/><circle cx="1556.7" cy="222.9" r="5" fill="#6a3c24"/><circle cx="1511.4" cy="222" r="5" fill="#c88a60"/><circle cx="1507.6" cy="237.6" r="5" fill="#704838"/><circle cx="1517.5" cy="227.7" r="5" fill="#b07858"/><circle cx="1521.8" cy="231.4" r="5" fill="#c88060"/><circle cx="1533.6" cy="224.3" r="5" fill="#c88458"/><circle cx="1528.8" cy="223.9" r="5" fill="#d08a64"/><circle cx="1540.7" cy="230" r="5" fill="#e09878"/><circle cx="1505.2" cy="231.4" r="5" fill="#c08464"/><circle cx="1511.4" cy="230" r="5" fill="#c8906c"/><circle cx="1497.2" cy="232.9" r="5" fill="#f0c0a0"/><circle cx="1489.1" cy="244.7" r="5" fill="#c89a80"/><circle cx="1494.3" cy="242.8" r="5" fill="#f4c8b0"/><circle cx="1589.3" cy="251.8" r="5" fill="#c05a6a"/><circle cx="1406.6" cy="256.3" r="5" fill="#70b0a0"/><circle cx="1387" cy="275" r="5" fill="#00ffff"/><circle cx="1391.9" cy="306.9" r="5" fill="#10808f"/><circle cx="1426.4" cy="303.9" r="5" fill="#6080a0"/><circle cx="1451.2" cy="308.4" r="5" fill="#8080b0"/><circle cx="1475.5" cy="341.2" r="5" fill="#604068"/><circle cx="1429.7" cy="363.2" r="5" fill="#5060a8"/><circle cx="1430.9" cy="420.6" r="5" fill="#4050a0"/><circle cx="1550.7" cy="303.9" r="5" fill="#c05a8a"/><circle cx="1573.8" cy="387.7" r="5" fill="#ff00ff"/><circle cx="1425.1" cy="536.8" r="5" fill="#0000ff"/><circle cx="1659.8" cy="237.5" r="5" fill="#b05050"/><circle cx="1742.4" cy="217.4" r="5" fill="#ff0000"/><circle cx="1453.7" cy="264.5" r="5" fill="#a0a0a0"/></g><circle cx="1466.9" cy="261.7" r="5.5" fill="#000"/><rect x="1688.5" y="488.5" width="216.5" height="143.5" fill="#262626"/><defs><linearGradient id="ig" x1="0" y1="0" x2="1" y2="1"><stop offset="0" stop-color="#ff8a28"/><stop offset="1" stop-color="#ff4226"/></linearGradient></defs><rect x="1692" y="492" width="209.5" height="137" fill="url(#ig)" stroke="#8a8a8a" stroke-width="2"/><g fill="none" stroke="#fafafa" stroke-width="1.8"><rect x="1719.3" y="532.5" width="14" height="14"/><rect x="1696.6" y="566.9" width="14" height="14"/><rect x="1703.2" y="576.0" width="14" height="14"/><rect x="1712.1" y="588.7" width="14" height="14"/><rect x="1788.7" y="552.8" width="14" height="14"/><rect x="1808.7" y="567.1" width="14" height="14"/><rect x="1793.0" y="593.6" width="14" height="14"/><rect x="1830.8" y="510.8" width="14" height="14"/><rect x="1882.4" y="512.3" width="14" height="14"/><rect x="1880.9" y="551.4" width="14" height="14"/></g><g stroke="#111" stroke-width="1.5"><circle cx="1729.5" cy="523.8" r="4.6" fill="#c08060"/><circle cx="1712.1" cy="565.4" r="4.6" fill="#c08058"/><circle cx="1716.3" cy="571.7" r="4.6" fill="#f0b088"/><circle cx="1719.3" cy="583" r="4.6" fill="#c07858"/><circle cx="1800" cy="549.6" r="4.6" fill="#d89870"/><circle cx="1816.1" cy="556.9" r="4.6" fill="#d08868"/><circle cx="1813.2" cy="596.2" r="4.6" fill="#f0a080"/><circle cx="1860.5" cy="509.3" r="4.6" fill="#7a4a2c"/></g><rect x="1637" y="640.3" width="268" height="28.3" fill="#2e2e2e"/></svg><span class="t" style="left:1638.00px;top:643.04px;font-size:21.50px;color:#f2f2f2;transform:scaleX(0.9727);">RGB Triplet: 217, 140, 94</span><span class="t" style="left:204.00px;top:717.02px;font-size:32.90px;color:#f2f2f2;transform:scaleX(0.9464);">Avg dE2000: 1.16</span><span class="t" style="left:200.10px;top:759.42px;font-size:32.90px;color:#f2f2f2;transform:scaleX(0.9586);">Max dE2000: 2.94</span><span class="t" style="left:166.30px;top:811.50px;font-size:31.70px;color:#f2f2f2;transform:scaleX(0.9944);">Current Reading</span><span class="t" style="left:166.00px;top:853.92px;font-size:26.60px;color:#f2f2f2;transform:scaleX(0.9868);">x: 0.4484</span><span class="t" style="left:331.50px;top:853.92px;font-size:26.60px;color:#f2f2f2;">y: 0.3875</span><span class="t" style="left:166.00px;top:897.12px;font-size:26.60px;color:#f2f2f2;transform:scaleX(0.9833);">fL: 37.38</span><span class="t" style="left:166.00px;top:933.02px;font-size:26.60px;color:#f2f2f2;transform:scaleX(1.0342);">cd/m²: 128.06</span><div class="a tb" style="left:492px;top:728px;width:1427px;height:241px;overflow:hidden"><div class="a" style="left:0px;top:0px;width:1427px;height:27px;background:linear-gradient(#2e2e2e 0,#2c2c2c 48%,#161616 52%,#111 100%)"></div><div class="a" style="left:0px;top:0px;width:9px;height:27px;background:#000"></div><div class="a" style="left:9px;top:27.0px;width:1418px;height:24.7px;background:#3d3d3d"></div><div class="a" style="left:0px;top:27.0px;width:9px;height:24.7px;background:#262626"></div><div class="a" style="left:9px;top:51.7px;width:1418px;height:24.7px;background:#7c7c7c"></div><div class="a" style="left:0px;top:51.7px;width:9px;height:24.7px;#1e1e1e"></div><div class="a" style="left:9px;top:76.4px;width:1418px;height:24.7px;background:#3d3d3d"></div><div class="a" style="left:0px;top:76.4px;width:9px;height:24.7px;background:#262626"></div><div class="a" style="left:9px;top:101.1px;width:1418px;height:24.7px;background:#7c7c7c"></div><div class="a" style="left:0px;top:101.1px;width:9px;height:24.7px;#1e1e1e"></div><div class="a" style="left:9px;top:125.8px;width:1418px;height:24.7px;background:#3d3d3d"></div><div class="a" style="left:0px;top:125.8px;width:9px;height:24.7px;background:#262626"></div><div class="a" style="left:9px;top:150.5px;width:1418px;height:24.7px;background:#7c7c7c"></div><div class="a" style="left:0px;top:150.5px;width:9px;height:24.7px;#1e1e1e"></div><div class="a" style="left:9px;top:175.2px;width:1418px;height:24.7px;background:#3d3d3d"></div><div class="a" style="left:0px;top:175.2px;width:9px;height:24.7px;background:#262626"></div><div class="a" style="left:9px;top:199.9px;width:1418px;height:24.7px;background:#7c7c7c"></div><div class="a" style="left:0px;top:199.9px;width:9px;height:24.7px;#1e1e1e"></div><span class="t" style="left:93.60px;top:5.86px;font-size:14.40px;color:#f4f4f4;transform:scaleX(0.8150);">White</span><span class="t" style="left:136.00px;top:5.86px;font-size:14.40px;color:#f4f4f4;transform:scaleX(0.7477);">Gray 80</span><span class="t" style="left:180.20px;top:5.86px;font-size:14.40px;color:#f4f4f4;transform:scaleX(0.7321);">Gray 65</span><span class="t" style="left:223.70px;top:5.86px;font-size:14.40px;color:#f4f4f4;transform:scaleX(0.7399);">Gray 50</span><span class="t" style="left:267.60px;top:5.86px;font-size:14.40px;color:#f4f4f4;transform:scaleX(0.7399);">Gray 35</span><span class="t" style="left:311.50px;top:5.86px;font-size:14.40px;color:#f4f4f4;transform:scaleX(0.7355);">Black</span><span class="t" style="left:343.40px;top:5.86px;font-size:14.40px;color:#f4f4f4;transform:scaleX(0.7322);">Dark Skin</span><span class="t" style="left:395.50px;top:5.86px;font-size:14.40px;color:#f4f4f4;transform:scaleX(0.7416);">Light Skin</span><span class="t" style="left:448.30px;top:5.86px;font-size:14.40px;color:#f4f4f4;transform:scaleX(0.7320);">Blue Sky</span><span class="t" style="left:495.60px;top:5.86px;font-size:14.40px;color:#f4f4f4;transform:scaleX(0.7389);">Foliage</span><span class="t" style="left:536.50px;top:5.86px;font-size:14.40px;color:#f4f4f4;transform:scaleX(0.7589);">Blue Flower</span><span class="t" style="left:600.60px;top:5.86px;font-size:14.40px;color:#f4f4f4;transform:scaleX(0.7472);">Bluish Green</span><span class="t" style="left:669.20px;top:5.86px;font-size:14.40px;color:#f4f4f4;transform:scaleX(0.7412);">Orange</span><span class="t" style="left:711.70px;top:5.86px;font-size:14.40px;color:#f4f4f4;transform:scaleX(0.7555);">Purplish Blue</span><span class="t" style="left:782.20px;top:5.86px;font-size:14.40px;color:#f4f4f4;transform:scaleX(0.7682);">Moderate Red</span><span class="t" style="left:858.70px;top:5.86px;font-size:14.40px;color:#f4f4f4;transform:scaleX(0.7663);">Purple</span><span class="t" style="left:896.60px;top:5.86px;font-size:14.40px;color:#f4f4f4;transform:scaleX(0.7577);">Yellow Green</span><span class="t" style="left:967.10px;top:5.86px;font-size:14.40px;color:#f4f4f4;transform:scaleX(0.7548);">Orange Yellow</span><span class="t" style="left:1043.60px;top:5.86px;font-size:14.40px;color:#f4f4f4;transform:scaleX(0.7529);">Blue</span><span class="t" style="left:1079.20px;top:5.86px;font-size:14.40px;color:#f4f4f4;transform:scaleX(0.7496);">Green</span><span class="t" style="left:1115.60px;top:5.86px;font-size:14.40px;color:#f4f4f4;transform:scaleX(0.7079);">Red</span><span class="t" style="left:1151.60px;top:5.86px;font-size:14.40px;color:#f4f4f4;transform:scaleX(0.7664);">Yellow</span><span class="t" style="left:1194.00px;top:5.86px;font-size:14.40px;color:#f4f4f4;transform:scaleX(0.7762);">Magenta</span><span class="t" style="left:1243.40px;top:5.86px;font-size:14.40px;color:#f4f4f4;transform:scaleX(0.7139);">Cyan</span><span class="t" style="left:1279.40px;top:5.86px;font-size:14.40px;color:#f4f4f4;transform:scaleX(0.7197);">100% Red</span><span class="t" style="left:1334.20px;top:5.86px;font-size:14.40px;color:#f4f4f4;transform:scaleX(0.7371);">100% Green</span><span class="t" style="left:1399.80px;top:5.86px;font-size:14.40px;color:#f4f4f4;transform:scaleX(0.7200);">100% Blue</span><span class="t" style="left:12.20px;top:30.69px;font-size:15.70px;color:#f2f2f2;transform:scaleX(0.7200);">x: CIE31</span><span class="t" style="left:93.60px;top:30.69px;font-size:15.70px;color:#f2f2f2;transform:scaleX(0.7200);">0.32</span><span class="t" style="left:136.00px;top:30.69px;font-size:15.70px;color:#f2f2f2;transform:scaleX(0.7200);">0.32</span><span class="t" style="left:180.20px;top:30.69px;font-size:15.70px;color:#f2f2f2;transform:scaleX(0.7200);">0.32</span><span class="t" style="left:223.70px;top:30.69px;font-size:15.70px;color:#f2f2f2;transform:scaleX(0.7200);">0.32</span><span class="t" style="left:267.60px;top:30.69px;font-size:15.70px;color:#f2f2f2;transform:scaleX(0.7200);">0.31</span><span class="t" style="left:311.50px;top:30.69px;font-size:15.70px;color:#f2f2f2;transform:scaleX(0.7200);">0.33</span><span class="t" style="left:343.40px;top:30.69px;font-size:15.70px;color:#f2f2f2;transform:scaleX(0.7200);">0.41</span><span class="t" style="left:395.50px;top:30.69px;font-size:15.70px;color:#f2f2f2;transform:scaleX(0.7200);">0.38</span><span class="t" style="left:448.30px;top:30.69px;font-size:15.70px;color:#f2f2f2;transform:scaleX(0.7200);">0.25</span><span class="t" style="left:495.60px;top:30.69px;font-size:15.70px;color:#f2f2f2;transform:scaleX(0.7200);">0.35</span><span class="t" style="left:536.50px;top:30.69px;font-size:15.70px;color:#f2f2f2;transform:scaleX(0.7200);">0.27</span><span class="t" style="left:600.60px;top:30.69px;font-size:15.70px;color:#f2f2f2;transform:scaleX(0.7200);">0.27</span><span class="t" style="left:669.20px;top:30.69px;font-size:15.70px;color:#f2f2f2;transform:scaleX(0.7200);">0.51</span><span class="t" style="left:711.70px;top:30.69px;font-size:15.70px;color:#f2f2f2;transform:scaleX(0.7200);">0.22</span><span class="t" style="left:782.20px;top:30.69px;font-size:15.70px;color:#f2f2f2;transform:scaleX(0.7200);">0.47</span><span class="t" style="left:858.70px;top:30.69px;font-size:15.70px;color:#f2f2f2;transform:scaleX(0.7200);">0.27</span><span class="t" style="left:896.60px;top:30.69px;font-size:15.70px;color:#f2f2f2;transform:scaleX(0.7200);">0.38</span><span class="t" style="left:967.10px;top:30.69px;font-size:15.70px;color:#f2f2f2;transform:scaleX(0.7200);">0.48</span><span class="t" style="left:1043.60px;top:30.69px;font-size:15.70px;color:#f2f2f2;transform:scaleX(0.7200);">0.19</span><span class="t" style="left:1079.20px;top:30.69px;font-size:15.70px;color:#f2f2f2;transform:scaleX(0.7200);">0.31</span><span class="t" style="left:1115.60px;top:30.69px;font-size:15.70px;color:#f2f2f2;transform:scaleX(0.7200);">0.55</span><span class="t" style="left:1151.60px;top:30.69px;font-size:15.70px;color:#f2f2f2;transform:scaleX(0.7200);">0.45</span><span class="t" style="left:1194.00px;top:30.69px;font-size:15.70px;color:#f2f2f2;transform:scaleX(0.7200);">0.37</span><span class="t" style="left:1243.40px;top:30.69px;font-size:15.70px;color:#f2f2f2;transform:scaleX(0.7200);">0.21</span><span class="t" style="left:1279.40px;top:30.69px;font-size:15.70px;color:#f2f2f2;transform:scaleX(0.7200);">0.64</span><span class="t" style="left:1334.20px;top:30.69px;font-size:15.70px;color:#f2f2f2;transform:scaleX(0.7200);">0.31</span><span class="t" style="left:1399.80px;top:30.69px;font-size:15.70px;color:#f2f2f2;transform:scaleX(0.7200);">0.15</span><span class="t" style="left:12.20px;top:55.39px;font-size:15.70px;color:#f2f2f2;transform:scaleX(0.7200);">y: CIE31</span><span class="t" style="left:93.60px;top:55.39px;font-size:15.70px;color:#f2f2f2;transform:scaleX(0.7200);">0.33</span><span class="t" style="left:136.00px;top:55.39px;font-size:15.70px;color:#f2f2f2;transform:scaleX(0.7200);">0.33</span><span class="t" style="left:180.20px;top:55.39px;font-size:15.70px;color:#f2f2f2;transform:scaleX(0.7200);">0.33</span><span class="t" style="left:223.70px;top:55.39px;font-size:15.70px;color:#f2f2f2;transform:scaleX(0.7200);">0.33</span><span class="t" style="left:267.60px;top:55.39px;font-size:15.70px;color:#f2f2f2;transform:scaleX(0.7200);">0.33</span><span class="t" style="left:311.50px;top:55.39px;font-size:15.70px;color:#f2f2f2;transform:scaleX(0.7200);">0.33</span><span class="t" style="left:343.40px;top:55.39px;font-size:15.70px;color:#f2f2f2;transform:scaleX(0.7200);">0.37</span><span class="t" style="left:395.50px;top:55.39px;font-size:15.70px;color:#f2f2f2;transform:scaleX(0.7200);">0.36</span><span class="t" style="left:448.30px;top:55.39px;font-size:15.70px;color:#f2f2f2;transform:scaleX(0.7200);">0.27</span><span class="t" style="left:495.60px;top:55.39px;font-size:15.70px;color:#f2f2f2;transform:scaleX(0.7200);">0.43</span><span class="t" style="left:536.50px;top:55.39px;font-size:15.70px;color:#f2f2f2;transform:scaleX(0.7200);">0.26</span><span class="t" style="left:600.60px;top:55.39px;font-size:15.70px;color:#f2f2f2;transform:scaleX(0.7200);">0.37</span><span class="t" style="left:669.20px;top:55.39px;font-size:15.70px;color:#f2f2f2;transform:scaleX(0.7200);">0.41</span><span class="t" style="left:711.70px;top:55.39px;font-size:15.70px;color:#f2f2f2;transform:scaleX(0.7200);">0.19</span><span class="t" style="left:782.20px;top:55.39px;font-size:15.70px;color:#f2f2f2;transform:scaleX(0.7200);">0.31</span><span class="t" style="left:858.70px;top:55.39px;font-size:15.70px;color:#f2f2f2;transform:scaleX(0.7200);">0.21</span><span class="t" style="left:896.60px;top:55.39px;font-size:15.70px;color:#f2f2f2;transform:scaleX(0.7200);">0.50</span><span class="t" style="left:967.10px;top:55.39px;font-size:15.70px;color:#f2f2f2;transform:scaleX(0.7200);">0.44</span><span class="t" style="left:1043.60px;top:55.39px;font-size:15.70px;color:#f2f2f2;transform:scaleX(0.7200);">0.14</span><span class="t" style="left:1079.20px;top:55.39px;font-size:15.70px;color:#f2f2f2;transform:scaleX(0.7200);">0.50</span><span class="t" style="left:1115.60px;top:55.39px;font-size:15.70px;color:#f2f2f2;transform:scaleX(0.7200);">0.32</span><span class="t" style="left:1151.60px;top:55.39px;font-size:15.70px;color:#f2f2f2;transform:scaleX(0.7200);">0.48</span><span class="t" style="left:1194.00px;top:55.39px;font-size:15.70px;color:#f2f2f2;transform:scaleX(0.7200);">0.25</span><span class="t" style="left:1243.40px;top:55.39px;font-size:15.70px;color:#f2f2f2;transform:scaleX(0.7200);">0.28</span><span class="t" style="left:1279.40px;top:55.39px;font-size:15.70px;color:#f2f2f2;transform:scaleX(0.7200);">0.33</span><span class="t" style="left:1334.20px;top:55.39px;font-size:15.70px;color:#f2f2f2;transform:scaleX(0.7200);">0.60</span><span class="t" style="left:1399.80px;top:55.39px;font-size:15.70px;color:#f2f2f2;transform:scaleX(0.7200);">0.06</span><span class="t" style="left:12.20px;top:80.09px;font-size:15.70px;color:#f2f2f2;transform:scaleX(0.7200);">Y</span><span class="t" style="left:93.60px;top:80.09px;font-size:15.70px;color:#f2f2f2;transform:scaleX(0.7200);">375.49</span><span class="t" style="left:136.00px;top:80.09px;font-size:15.70px;color:#f2f2f2;transform:scaleX(0.7200);">294.68</span><span class="t" style="left:180.20px;top:80.09px;font-size:15.70px;color:#f2f2f2;transform:scaleX(0.7200);">237.08</span><span class="t" style="left:223.70px;top:80.09px;font-size:15.70px;color:#f2f2f2;transform:scaleX(0.7200);">180.08</span><span class="t" style="left:267.60px;top:80.09px;font-size:15.70px;color:#f2f2f2;transform:scaleX(0.7200);">126.02</span><span class="t" style="left:311.50px;top:80.09px;font-size:15.70px;color:#f2f2f2;transform:scaleX(0.7200);">0.00</span><span class="t" style="left:343.40px;top:80.09px;font-size:15.70px;color:#f2f2f2;transform:scaleX(0.7200);">37.42</span><span class="t" style="left:395.50px;top:80.09px;font-size:15.70px;color:#f2f2f2;transform:scaleX(0.7200);">131.10</span><span class="t" style="left:448.30px;top:80.09px;font-size:15.70px;color:#f2f2f2;transform:scaleX(0.7200);">71.54</span><span class="t" style="left:495.60px;top:80.09px;font-size:15.70px;color:#f2f2f2;transform:scaleX(0.7200);">49.00</span><span class="t" style="left:536.50px;top:80.09px;font-size:15.70px;color:#f2f2f2;transform:scaleX(0.7200);">88.19</span><span class="t" style="left:600.60px;top:80.09px;font-size:15.70px;color:#f2f2f2;transform:scaleX(0.7200);">156.71</span><span class="t" style="left:669.20px;top:80.09px;font-size:15.70px;color:#f2f2f2;transform:scaleX(0.7200);">106.36</span><span class="t" style="left:711.70px;top:80.09px;font-size:15.70px;color:#f2f2f2;transform:scaleX(0.7200);">43.40</span><span class="t" style="left:782.20px;top:80.09px;font-size:15.70px;color:#f2f2f2;transform:scaleX(0.7200);">67.74</span><span class="t" style="left:858.70px;top:80.09px;font-size:15.70px;color:#f2f2f2;transform:scaleX(0.7200);">21.78</span><span class="t" style="left:896.60px;top:80.09px;font-size:15.70px;color:#f2f2f2;transform:scaleX(0.7200);">160.52</span><span class="t" style="left:967.10px;top:80.09px;font-size:15.70px;color:#f2f2f2;transform:scaleX(0.7200);">158.03</span><span class="t" style="left:1043.60px;top:80.09px;font-size:15.70px;color:#f2f2f2;transform:scaleX(0.7200);">22.49</span><span class="t" style="left:1079.20px;top:80.09px;font-size:15.70px;color:#f2f2f2;transform:scaleX(0.7200);">88.30</span><span class="t" style="left:1115.60px;top:80.09px;font-size:15.70px;color:#f2f2f2;transform:scaleX(0.7200);">42.11</span><span class="t" style="left:1151.60px;top:80.09px;font-size:15.70px;color:#f2f2f2;transform:scaleX(0.7200);">220.46</span><span class="t" style="left:1194.00px;top:80.09px;font-size:15.70px;color:#f2f2f2;transform:scaleX(0.7200);">68.60</span><span class="t" style="left:1243.40px;top:80.09px;font-size:15.70px;color:#f2f2f2;transform:scaleX(0.7200);">74.07</span><span class="t" style="left:1279.40px;top:80.09px;font-size:15.70px;color:#f2f2f2;transform:scaleX(0.7200);">78.39</span><span class="t" style="left:1334.20px;top:80.09px;font-size:15.70px;color:#f2f2f2;transform:scaleX(0.7200);">275.18</span><span class="t" style="left:1399.80px;top:80.09px;font-size:15.70px;color:#f2f2f2;transform:scaleX(0.7200);">26.74</span><span class="t" style="left:12.20px;top:104.79px;font-size:15.70px;color:#f2f2f2;transform:scaleX(0.7200);">Target x:CIE31</span><span class="t" style="left:93.60px;top:104.79px;font-size:15.70px;color:#f2f2f2;transform:scaleX(0.7200);">0.31</span><span class="t" style="left:136.00px;top:104.79px;font-size:15.70px;color:#f2f2f2;transform:scaleX(0.7200);">0.31</span><span class="t" style="left:180.20px;top:104.79px;font-size:15.70px;color:#f2f2f2;transform:scaleX(0.7200);">0.31</span><span class="t" style="left:223.70px;top:104.79px;font-size:15.70px;color:#f2f2f2;transform:scaleX(0.7200);">0.31</span><span class="t" style="left:267.60px;top:104.79px;font-size:15.70px;color:#f2f2f2;transform:scaleX(0.7200);">0.31</span><span class="t" style="left:311.50px;top:104.79px;font-size:15.70px;color:#f2f2f2;transform:scaleX(0.7200);">0.31</span><span class="t" style="left:343.40px;top:104.79px;font-size:15.70px;color:#f2f2f2;transform:scaleX(0.7200);">0.40</span><span class="t" style="left:395.50px;top:104.79px;font-size:15.70px;color:#f2f2f2;transform:scaleX(0.7200);">0.38</span><span class="t" style="left:448.30px;top:104.79px;font-size:15.70px;color:#f2f2f2;transform:scaleX(0.7200);">0.25</span><span class="t" style="left:495.60px;top:104.79px;font-size:15.70px;color:#f2f2f2;transform:scaleX(0.7200);">0.34</span><span class="t" style="left:536.50px;top:104.79px;font-size:15.70px;color:#f2f2f2;transform:scaleX(0.7200);">0.27</span><div class="a" style="left:597px;top:101.6px;width:68px;height:23.6px;background:#f4f4f4"></div><span class="t" style="left:600.60px;top:104.79px;font-size:15.70px;color:#222;transform:scaleX(0.7200);">0.26</span><span class="t" style="left:669.20px;top:104.79px;font-size:15.70px;color:#f2f2f2;transform:scaleX(0.7200);">0.51</span><span class="t" style="left:711.70px;top:104.79px;font-size:15.70px;color:#f2f2f2;transform:scaleX(0.7200);">0.22</span><span class="t" style="left:782.20px;top:104.79px;font-size:15.70px;color:#f2f2f2;transform:scaleX(0.7200);">0.46</span><span class="t" style="left:858.70px;top:104.79px;font-size:15.70px;color:#f2f2f2;transform:scaleX(0.7200);">0.29</span><span class="t" style="left:896.60px;top:104.79px;font-size:15.70px;color:#f2f2f2;transform:scaleX(0.7200);">0.38</span><span class="t" style="left:967.10px;top:104.79px;font-size:15.70px;color:#f2f2f2;transform:scaleX(0.7200);">0.47</span><span class="t" style="left:1043.60px;top:104.79px;font-size:15.70px;color:#f2f2f2;transform:scaleX(0.7200);">0.19</span><span class="t" style="left:1079.20px;top:104.79px;font-size:15.70px;color:#f2f2f2;transform:scaleX(0.7200);">0.31</span><span class="t" style="left:1115.60px;top:104.79px;font-size:15.70px;color:#f2f2f2;transform:scaleX(0.7200);">0.54</span><span class="t" style="left:1151.60px;top:104.79px;font-size:15.70px;color:#f2f2f2;transform:scaleX(0.7200);">0.45</span><span class="t" style="left:1194.00px;top:104.79px;font-size:15.70px;color:#f2f2f2;transform:scaleX(0.7200);">0.37</span><span class="t" style="left:1243.40px;top:104.79px;font-size:15.70px;color:#f2f2f2;transform:scaleX(0.7200);">0.21</span><span class="t" style="left:1279.40px;top:104.79px;font-size:15.70px;color:#f2f2f2;transform:scaleX(0.7200);">0.64</span><span class="t" style="left:1334.20px;top:104.79px;font-size:15.70px;color:#f2f2f2;transform:scaleX(0.7200);">0.30</span><span class="t" style="left:1399.80px;top:104.79px;font-size:15.70px;color:#f2f2f2;transform:scaleX(0.7200);">0.15</span><span class="t" style="left:12.20px;top:129.49px;font-size:15.70px;color:#f2f2f2;transform:scaleX(0.7200);">Target y:CIE31</span><span class="t" style="left:93.60px;top:129.49px;font-size:15.70px;color:#f2f2f2;transform:scaleX(0.7200);">0.33</span><span class="t" style="left:136.00px;top:129.49px;font-size:15.70px;color:#f2f2f2;transform:scaleX(0.7200);">0.33</span><span class="t" style="left:180.20px;top:129.49px;font-size:15.70px;color:#f2f2f2;transform:scaleX(0.7200);">0.33</span><span class="t" style="left:223.70px;top:129.49px;font-size:15.70px;color:#f2f2f2;transform:scaleX(0.7200);">0.33</span><span class="t" style="left:267.60px;top:129.49px;font-size:15.70px;color:#f2f2f2;transform:scaleX(0.7200);">0.33</span><span class="t" style="left:311.50px;top:129.49px;font-size:15.70px;color:#f2f2f2;transform:scaleX(0.7200);">0.33</span><span class="t" style="left:343.40px;top:129.49px;font-size:15.70px;color:#f2f2f2;transform:scaleX(0.7200);">0.36</span><span class="t" style="left:395.50px;top:129.49px;font-size:15.70px;color:#f2f2f2;transform:scaleX(0.7200);">0.36</span><span class="t" style="left:448.30px;top:129.49px;font-size:15.70px;color:#f2f2f2;transform:scaleX(0.7200);">0.27</span><span class="t" style="left:495.60px;top:129.49px;font-size:15.70px;color:#f2f2f2;transform:scaleX(0.7200);">0.43</span><span class="t" style="left:536.50px;top:129.49px;font-size:15.70px;color:#f2f2f2;transform:scaleX(0.7200);">0.25</span><span class="t" style="left:600.60px;top:129.49px;font-size:15.70px;color:#f2f2f2;transform:scaleX(0.7200);">0.36</span><span class="t" style="left:669.20px;top:129.49px;font-size:15.70px;color:#f2f2f2;transform:scaleX(0.7200);">0.41</span><span class="t" style="left:711.70px;top:129.49px;font-size:15.70px;color:#f2f2f2;transform:scaleX(0.7200);">0.19</span><span class="t" style="left:782.20px;top:129.49px;font-size:15.70px;color:#f2f2f2;transform:scaleX(0.7200);">0.31</span><span class="t" style="left:858.70px;top:129.49px;font-size:15.70px;color:#f2f2f2;transform:scaleX(0.7200);">0.22</span><span class="t" style="left:896.60px;top:129.49px;font-size:15.70px;color:#f2f2f2;transform:scaleX(0.7200);">0.49</span><span class="t" style="left:967.10px;top:129.49px;font-size:15.70px;color:#f2f2f2;transform:scaleX(0.7200);">0.44</span><span class="t" style="left:1043.60px;top:129.49px;font-size:15.70px;color:#f2f2f2;transform:scaleX(0.7200);">0.14</span><span class="t" style="left:1079.20px;top:129.49px;font-size:15.70px;color:#f2f2f2;transform:scaleX(0.7200);">0.49</span><span class="t" style="left:1115.60px;top:129.49px;font-size:15.70px;color:#f2f2f2;transform:scaleX(0.7200);">0.32</span><span class="t" style="left:1151.60px;top:129.49px;font-size:15.70px;color:#f2f2f2;transform:scaleX(0.7200);">0.47</span><span class="t" style="left:1194.00px;top:129.49px;font-size:15.70px;color:#f2f2f2;transform:scaleX(0.7200);">0.25</span><span class="t" style="left:1243.40px;top:129.49px;font-size:15.70px;color:#f2f2f2;transform:scaleX(0.7200);">0.27</span><span class="t" style="left:1279.40px;top:129.49px;font-size:15.70px;color:#f2f2f2;transform:scaleX(0.7200);">0.33</span><span class="t" style="left:1334.20px;top:129.49px;font-size:15.70px;color:#f2f2f2;transform:scaleX(0.7200);">0.60</span><span class="t" style="left:1399.80px;top:129.49px;font-size:15.70px;color:#f2f2f2;transform:scaleX(0.7200);">0.06</span><span class="t" style="left:12.20px;top:154.19px;font-size:15.70px;color:#f2f2f2;transform:scaleX(0.7200);">Target Y</span><span class="t" style="left:93.60px;top:154.19px;font-size:15.70px;color:#f2f2f2;transform:scaleX(0.7200);">375.49</span><span class="t" style="left:136.00px;top:154.19px;font-size:15.70px;color:#f2f2f2;transform:scaleX(0.7200);">297.12</span><span class="t" style="left:180.20px;top:154.19px;font-size:15.70px;color:#f2f2f2;transform:scaleX(0.7200);">239.41</span><span class="t" style="left:223.70px;top:154.19px;font-size:15.70px;color:#f2f2f2;transform:scaleX(0.7200);">184.37</span><span class="t" style="left:267.60px;top:154.19px;font-size:15.70px;color:#f2f2f2;transform:scaleX(0.7200);">128.38</span><span class="t" style="left:311.50px;top:154.19px;font-size:15.70px;color:#f2f2f2;transform:scaleX(0.7200);">0.00</span><span class="t" style="left:343.40px;top:154.19px;font-size:15.70px;color:#f2f2f2;transform:scaleX(0.7200);">37.82</span><span class="t" style="left:395.50px;top:154.19px;font-size:15.70px;color:#f2f2f2;transform:scaleX(0.7200);">131.03</span><span class="t" style="left:448.30px;top:154.19px;font-size:15.70px;color:#f2f2f2;transform:scaleX(0.7200);">70.21</span><span class="t" style="left:495.60px;top:154.19px;font-size:15.70px;color:#f2f2f2;transform:scaleX(0.7200);">48.94</span><span class="t" style="left:536.50px;top:154.19px;font-size:15.70px;color:#f2f2f2;transform:scaleX(0.7200);">87.56</span><span class="t" style="left:600.60px;top:154.19px;font-size:15.70px;color:#f2f2f2;transform:scaleX(0.7200);">157.23</span><span class="t" style="left:669.20px;top:154.19px;font-size:15.70px;color:#f2f2f2;transform:scaleX(0.7200);">106.44</span><span class="t" style="left:711.70px;top:154.19px;font-size:15.70px;color:#f2f2f2;transform:scaleX(0.7200);">44.13</span><span class="t" style="left:782.20px;top:154.19px;font-size:15.70px;color:#f2f2f2;transform:scaleX(0.7200);">70.12</span><span class="t" style="left:858.70px;top:154.19px;font-size:15.70px;color:#f2f2f2;transform:scaleX(0.7200);">25.06</span><span class="t" style="left:896.60px;top:154.19px;font-size:15.70px;color:#f2f2f2;transform:scaleX(0.7200);">160.55</span><span class="t" style="left:967.10px;top:154.19px;font-size:15.70px;color:#f2f2f2;transform:scaleX(0.7200);">159.63</span><span class="t" style="left:1043.60px;top:154.19px;font-size:15.70px;color:#f2f2f2;transform:scaleX(0.7200);">23.44</span><span class="t" style="left:1079.20px;top:154.19px;font-size:15.70px;color:#f2f2f2;transform:scaleX(0.7200);">86.26</span><span class="t" style="left:1115.60px;top:154.19px;font-size:15.70px;color:#f2f2f2;transform:scaleX(0.7200);">43.79</span><span class="t" style="left:1151.60px;top:154.19px;font-size:15.70px;color:#f2f2f2;transform:scaleX(0.7200);">221.40</span><span class="t" style="left:1194.00px;top:154.19px;font-size:15.70px;color:#f2f2f2;transform:scaleX(0.7200);">70.69</span><span class="t" style="left:1243.40px;top:154.19px;font-size:15.70px;color:#f2f2f2;transform:scaleX(0.7200);">72.91</span><span class="t" style="left:1279.40px;top:154.19px;font-size:15.70px;color:#f2f2f2;transform:scaleX(0.7200);">79.85</span><span class="t" style="left:1334.20px;top:154.19px;font-size:15.70px;color:#f2f2f2;transform:scaleX(0.7200);">268.53</span><span class="t" style="left:1399.80px;top:154.19px;font-size:15.70px;color:#f2f2f2;transform:scaleX(0.7200);">27.10</span><span class="t" style="left:12.20px;top:178.89px;font-size:15.70px;color:#f2f2f2;transform:scaleX(0.7200);">ΔE 2000</span><span class="t" style="left:93.60px;top:178.89px;font-size:15.70px;color:#f2f2f2;transform:scaleX(0.7200);">1.79</span><span class="t" style="left:136.00px;top:178.89px;font-size:15.70px;color:#f2f2f2;transform:scaleX(0.7200);">1.69</span><span class="t" style="left:180.20px;top:178.89px;font-size:15.70px;color:#f2f2f2;transform:scaleX(0.7200);">1.49</span><span class="t" style="left:223.70px;top:178.89px;font-size:15.70px;color:#f2f2f2;transform:scaleX(0.7200);">1.54</span><span class="t" style="left:267.60px;top:178.89px;font-size:15.70px;color:#f2f2f2;transform:scaleX(0.7200);">1.21</span><span class="t" style="left:311.50px;top:178.89px;font-size:15.70px;color:#f2f2f2;transform:scaleX(0.7200);">0.00</span><span class="t" style="left:343.40px;top:178.89px;font-size:15.70px;color:#f2f2f2;transform:scaleX(0.7200);">0.96</span><span class="t" style="left:395.50px;top:178.89px;font-size:15.70px;color:#f2f2f2;transform:scaleX(0.7200);">1.38</span><span class="t" style="left:448.30px;top:178.89px;font-size:15.70px;color:#f2f2f2;transform:scaleX(0.7200);">1.57</span><span class="t" style="left:495.60px;top:178.89px;font-size:15.70px;color:#f2f2f2;transform:scaleX(0.7200);">1.13</span><span class="t" style="left:536.50px;top:178.89px;font-size:15.70px;color:#f2f2f2;transform:scaleX(0.7200);">1.31</span><span class="t" style="left:600.60px;top:178.89px;font-size:15.70px;color:#f2f2f2;transform:scaleX(0.7200);">1.45</span><span class="t" style="left:669.20px;top:178.89px;font-size:15.70px;color:#f2f2f2;transform:scaleX(0.7200);">1.50</span><span class="t" style="left:711.70px;top:178.89px;font-size:15.70px;color:#f2f2f2;transform:scaleX(0.7200);">0.48</span><span class="t" style="left:782.20px;top:178.89px;font-size:15.70px;color:#f2f2f2;transform:scaleX(0.7200);">0.95</span><span class="t" style="left:858.70px;top:178.89px;font-size:15.70px;color:#f2f2f2;transform:scaleX(0.7200);">2.94</span><span class="t" style="left:896.60px;top:178.89px;font-size:15.70px;color:#f2f2f2;transform:scaleX(0.7200);">0.79</span><span class="t" style="left:967.10px;top:178.89px;font-size:15.70px;color:#f2f2f2;transform:scaleX(0.7200);">0.55</span><span class="t" style="left:1043.60px;top:178.89px;font-size:15.70px;color:#f2f2f2;transform:scaleX(0.7200);">0.52</span><span class="t" style="left:1079.20px;top:178.89px;font-size:15.70px;color:#f2f2f2;transform:scaleX(0.7200);">1.33</span><span class="t" style="left:1115.60px;top:178.89px;font-size:15.70px;color:#f2f2f2;transform:scaleX(0.7200);">1.01</span><span class="t" style="left:1151.60px;top:178.89px;font-size:15.70px;color:#f2f2f2;transform:scaleX(0.7200);">0.58</span><span class="t" style="left:1194.00px;top:178.89px;font-size:15.70px;color:#f2f2f2;transform:scaleX(0.7200);">0.78</span><span class="t" style="left:1243.40px;top:178.89px;font-size:15.70px;color:#f2f2f2;transform:scaleX(0.7200);">1.37</span><span class="t" style="left:1279.40px;top:178.89px;font-size:15.70px;color:#f2f2f2;transform:scaleX(0.7200);">0.88</span><span class="t" style="left:1334.20px;top:178.89px;font-size:15.70px;color:#f2f2f2;transform:scaleX(0.7200);">1.37</span><span class="t" style="left:1399.80px;top:178.89px;font-size:15.70px;color:#f2f2f2;transform:scaleX(0.7200);">0.62</span><span class="t" style="left:12.20px;top:203.59px;font-size:15.70px;color:#f2f2f2;transform:scaleX(0.7200);">dEITP</span><span class="t" style="left:93.60px;top:203.59px;font-size:15.70px;color:#f2f2f2;transform:scaleX(0.7200);">1.73</span><span class="t" style="left:136.00px;top:203.59px;font-size:15.70px;color:#f2f2f2;transform:scaleX(0.7200);">2.10</span><span class="t" style="left:180.20px;top:203.59px;font-size:15.70px;color:#f2f2f2;transform:scaleX(0.7200);">2.01</span><span class="t" style="left:223.70px;top:203.59px;font-size:15.70px;color:#f2f2f2;transform:scaleX(0.7200);">2.46</span><span class="t" style="left:267.60px;top:203.59px;font-size:15.70px;color:#f2f2f2;transform:scaleX(0.7200);">1.93</span><span class="t" style="left:311.50px;top:203.59px;font-size:15.70px;color:#f2f2f2;transform:scaleX(0.7200);">0.01</span><span class="t" style="left:343.40px;top:203.59px;font-size:15.70px;color:#f2f2f2;transform:scaleX(0.7200);">2.96</span><span class="t" style="left:395.50px;top:203.59px;font-size:15.70px;color:#f2f2f2;transform:scaleX(0.7200);">1.89</span><span class="t" style="left:448.30px;top:203.59px;font-size:15.70px;color:#f2f2f2;transform:scaleX(0.7200);">2.70</span><span class="t" style="left:495.60px;top:203.59px;font-size:15.70px;color:#f2f2f2;transform:scaleX(0.7200);">3.70</span><span class="t" style="left:536.50px;top:203.59px;font-size:15.70px;color:#f2f2f2;transform:scaleX(0.7200);">3.27</span><span class="t" style="left:600.60px;top:203.59px;font-size:15.70px;color:#f2f2f2;transform:scaleX(0.7200);">3.73</span><span class="t" style="left:669.20px;top:203.59px;font-size:15.70px;color:#f2f2f2;transform:scaleX(0.7200);">3.98</span><span class="t" style="left:711.70px;top:203.59px;font-size:15.70px;color:#f2f2f2;transform:scaleX(0.7200);">1.61</span><span class="t" style="left:782.20px;top:203.59px;font-size:15.70px;color:#f2f2f2;transform:scaleX(0.7200);">2.93</span><span class="t" style="left:858.70px;top:203.59px;font-size:15.70px;color:#f2f2f2;transform:scaleX(0.7200);">14.35</span><span class="t" style="left:896.60px;top:203.59px;font-size:15.70px;color:#f2f2f2;transform:scaleX(0.7200);">2.94</span><span class="t" style="left:967.10px;top:203.59px;font-size:15.70px;color:#f2f2f2;transform:scaleX(0.7200);">3.03</span><span class="t" style="left:1043.60px;top:203.59px;font-size:15.70px;color:#f2f2f2;transform:scaleX(0.7200);">3.31</span><span class="t" style="left:1079.20px;top:203.59px;font-size:15.70px;color:#f2f2f2;transform:scaleX(0.7200);">4.74</span><span class="t" style="left:1115.60px;top:203.59px;font-size:15.70px;color:#f2f2f2;transform:scaleX(0.7200);">5.30</span><span class="t" style="left:1151.60px;top:203.59px;font-size:15.70px;color:#f2f2f2;transform:scaleX(0.7200);">2.69</span><span class="t" style="left:1194.00px;top:203.59px;font-size:15.70px;color:#f2f2f2;transform:scaleX(0.7200);">3.03</span><span class="t" style="left:1243.40px;top:203.59px;font-size:15.70px;color:#f2f2f2;transform:scaleX(0.7200);">2.89</span><span class="t" style="left:1279.40px;top:203.59px;font-size:15.70px;color:#f2f2f2;transform:scaleX(0.7200);">3.87</span><span class="t" style="left:1334.20px;top:203.59px;font-size:15.70px;color:#f2f2f2;transform:scaleX(0.7200);">4.78</span><span class="t" style="left:1399.80px;top:203.59px;font-size:15.70px;color:#f2f2f2;transform:scaleX(0.7200);">5.79</span><div class="a" style="left:0px;top:224.3px;width:9px;height:17px;background:#333"></div><div class="a" style="left:9px;top:224.3px;width:1418px;height:15.4px;background:#5a5a5a"></div><div class="a" style="left:10px;top:225.5px;width:10px;height:13px;background:#7a7a7a;border-radius:2px"></div><svg class="a" style="left:13px;top:228px" width="5" height="8"><path d="M5 0V8L0 4Z" fill="#444"/></svg><div class="a" style="left:23px;top:225.8px;width:840px;height:12.6px;background:#404040;border-radius:6px"></div><div class="a" style="left:1412px;top:225.5px;width:10px;height:13px;background:#7a7a7a;border-radius:2px"></div><svg class="a" style="left:1415px;top:228px" width="5" height="8"><path d="M0 0V8L5 4Z" fill="#444"/></svg><div class="a" style="left:1423px;top:0px;width:4px;height:241px;background:#2a2a2a"></div></div><div class="a" style="left:150px;top:1010px;width:1526px;height:48px;background:#3a3a3a"></div><div class="a" style="left:151.70px;top:1011.6px;width:36.2px;height:35.6px;background:linear-gradient(#9c9c9c,#808080 35%,#707070 80%,#666);border-radius:3px 3px 0 0;box-shadow:inset 0 1px 0 #aaa"></div><div class="a" style="left:150.7px;top:1040px;width:1.6px;height:8px;background:#111"></div><div class="a" style="left:155.20px;top:1015.6px;width:29.5px;height:17.8px;background:#ffffff;border-radius:3px;box-shadow:0 0 0 .6px rgba(0,0,0,.35)"></div><span class="t" style="left:159.47px;top:1036.09px;font-size:9.40px;color:#262626;transform:scaleX(0.8600);">White</span><div class="a" style="left:190.65px;top:1011.6px;width:36.2px;height:35.6px;background:linear-gradient(#9c9c9c,#808080 35%,#707070 80%,#666);border-radius:3px 3px 0 0;box-shadow:inset 0 1px 0 #aaa"></div><div class="a" style="left:189.65px;top:1040px;width:1.6px;height:8px;background:#111"></div><div class="a" style="left:194.15px;top:1015.6px;width:29.5px;height:17.8px;background:#e6e6e6;border-radius:3px;box-shadow:0 0 0 .6px rgba(0,0,0,.35)"></div><span class="t" style="left:194.37px;top:1036.09px;font-size:9.40px;color:#262626;transform:scaleX(0.8600);">Gray 80</span><div class="a" style="left:229.60px;top:1011.6px;width:36.2px;height:35.6px;background:linear-gradient(#9c9c9c,#808080 35%,#707070 80%,#666);border-radius:3px 3px 0 0;box-shadow:inset 0 1px 0 #aaa"></div><div class="a" style="left:228.6px;top:1040px;width:1.6px;height:8px;background:#111"></div><div class="a" style="left:233.10px;top:1015.6px;width:29.5px;height:17.8px;background:#d0d0d0;border-radius:3px;box-shadow:0 0 0 .6px rgba(0,0,0,.35)"></div><span class="t" style="left:233.32px;top:1036.09px;font-size:9.40px;color:#262626;transform:scaleX(0.8600);">Gray 65</span><div class="a" style="left:268.55px;top:1011.6px;width:36.2px;height:35.6px;background:linear-gradient(#9c9c9c,#808080 35%,#707070 80%,#666);border-radius:3px 3px 0 0;box-shadow:inset 0 1px 0 #aaa"></div><div class="a" style="left:267.55px;top:1040px;width:1.6px;height:8px;background:#111"></div><div class="a" style="left:272.05px;top:1015.6px;width:29.5px;height:17.8px;background:#b9b9b9;border-radius:3px;box-shadow:0 0 0 .6px rgba(0,0,0,.35)"></div><span class="t" style="left:272.27px;top:1036.09px;font-size:9.40px;color:#262626;transform:scaleX(0.8600);">Gray 50</span><div class="a" style="left:307.50px;top:1011.6px;width:36.2px;height:35.6px;background:linear-gradient(#9c9c9c,#808080 35%,#707070 80%,#666);border-radius:3px 3px 0 0;box-shadow:inset 0 1px 0 #aaa"></div><div class="a" style="left:306.5px;top:1040px;width:1.6px;height:8px;background:#111"></div><div class="a" style="left:311.00px;top:1015.6px;width:29.5px;height:17.8px;background:#a2a2a2;border-radius:3px;box-shadow:0 0 0 .6px rgba(0,0,0,.35)"></div><span class="t" style="left:311.22px;top:1036.09px;font-size:9.40px;color:#262626;transform:scaleX(0.8600);">Gray 35</span><div class="a" style="left:346.45px;top:1011.6px;width:36.2px;height:35.6px;background:linear-gradient(#9c9c9c,#808080 35%,#707070 80%,#666);border-radius:3px 3px 0 0;box-shadow:inset 0 1px 0 #aaa"></div><div class="a" style="left:345.45px;top:1040px;width:1.6px;height:8px;background:#111"></div><div class="a" style="left:349.95px;top:1015.6px;width:29.5px;height:17.8px;background:#000000;border-radius:3px;box-shadow:0 0 0 .6px rgba(0,0,0,.35)"></div><span class="t" style="left:354.67px;top:1036.09px;font-size:9.40px;color:#262626;transform:scaleX(0.8600);">Black</span><div class="a" style="left:385.40px;top:1011.6px;width:36.2px;height:35.6px;background:linear-gradient(#9c9c9c,#808080 35%,#707070 80%,#666);border-radius:3px 3px 0 0;box-shadow:inset 0 1px 0 #aaa"></div><div class="a" style="left:384.4px;top:1040px;width:1.6px;height:8px;background:#111"></div><div class="a" style="left:388.90px;top:1015.6px;width:29.5px;height:17.8px;background:#735244;border-radius:3px;box-shadow:0 0 0 .6px rgba(0,0,0,.35)"></div><span class="t" style="left:386.00px;top:1036.09px;font-size:9.40px;color:#262626;transform:scaleX(0.8590);">Dark Skin</span><div class="a" style="left:424.35px;top:1011.6px;width:36.2px;height:35.6px;background:linear-gradient(#9c9c9c,#808080 35%,#707070 80%,#666);border-radius:3px 3px 0 0;box-shadow:inset 0 1px 0 #aaa"></div><div class="a" style="left:423.35px;top:1040px;width:1.6px;height:8px;background:#111"></div><div class="a" style="left:427.85px;top:1015.6px;width:29.5px;height:17.8px;background:#c29682;border-radius:3px;box-shadow:0 0 0 .6px rgba(0,0,0,.35)"></div><span class="t" style="left:424.95px;top:1036.09px;font-size:9.40px;color:#262626;transform:scaleX(0.8478);">Light Skin</span><div class="a" style="left:463.30px;top:1011.6px;width:36.2px;height:35.6px;background:linear-gradient(#9c9c9c,#808080 35%,#707070 80%,#666);border-radius:3px 3px 0 0;box-shadow:inset 0 1px 0 #aaa"></div><div class="a" style="left:462.3px;top:1040px;width:1.6px;height:8px;background:#111"></div><div class="a" style="left:466.80px;top:1015.6px;width:29.5px;height:17.8px;background:#627a9d;border-radius:3px;box-shadow:0 0 0 .6px rgba(0,0,0,.35)"></div><span class="t" style="left:465.45px;top:1036.09px;font-size:9.40px;color:#262626;transform:scaleX(0.8600);">Blue Sky</span><div class="a" style="left:502.25px;top:1011.6px;width:36.2px;height:35.6px;background:linear-gradient(#9c9c9c,#808080 35%,#707070 80%,#666);border-radius:3px 3px 0 0;box-shadow:inset 0 1px 0 #aaa"></div><div class="a" style="left:501.25px;top:1040px;width:1.6px;height:8px;background:#111"></div><div class="a" style="left:505.75px;top:1015.6px;width:29.5px;height:17.8px;background:#576c43;border-radius:3px;box-shadow:0 0 0 .6px rgba(0,0,0,.35)"></div><span class="t" style="left:507.09px;top:1036.09px;font-size:9.40px;color:#262626;transform:scaleX(0.8600);">Foliage</span><div class="a" style="left:541.20px;top:1011.6px;width:36.2px;height:35.6px;background:linear-gradient(#9c9c9c,#808080 35%,#707070 80%,#666);border-radius:3px 3px 0 0;box-shadow:inset 0 1px 0 #aaa"></div><div class="a" style="left:540.2px;top:1040px;width:1.6px;height:8px;background:#111"></div><div class="a" style="left:544.70px;top:1015.6px;width:29.5px;height:8.6px;background:#8580b1;border-radius:3px;box-shadow:0 0 0 .6px rgba(0,0,0,.35)"></div><span class="t" style="left:547.17px;top:1026.89px;font-size:9.40px;color:#262626;transform:scaleX(0.8600);">Blue</span><span class="t" style="left:547.17px;top:1036.09px;font-size:9.40px;color:#262626;transform:scaleX(0.8600);">Flower</span><div class="a" style="left:580.15px;top:1011.6px;width:36.2px;height:35.6px;background:linear-gradient(#9c9c9c,#808080 35%,#707070 80%,#666);border-radius:3px 3px 0 0;box-shadow:inset 0 1px 0 #aaa"></div><div class="a" style="left:579.15px;top:1040px;width:1.6px;height:8px;background:#111"></div><div class="a" style="left:583.65px;top:1015.6px;width:29.5px;height:8.6px;background:#67bdaa;border-radius:3px;box-shadow:0 0 0 .6px rgba(0,0,0,.35)"></div><span class="t" style="left:587.02px;top:1026.89px;font-size:9.40px;color:#262626;transform:scaleX(0.8600);">Bluish</span><span class="t" style="left:587.02px;top:1036.09px;font-size:9.40px;color:#262626;transform:scaleX(0.8600);">Green</span><div class="a" style="left:619.10px;top:1011.6px;width:36.2px;height:35.6px;background:linear-gradient(#9c9c9c,#808080 35%,#707070 80%,#666);border-radius:3px 3px 0 0;box-shadow:inset 0 1px 0 #aaa"></div><div class="a" style="left:618.1px;top:1040px;width:1.6px;height:8px;background:#111"></div><div class="a" style="left:622.60px;top:1015.6px;width:29.5px;height:17.8px;background:#d67e2c;border-radius:3px;box-shadow:0 0 0 .6px rgba(0,0,0,.35)"></div><span class="t" style="left:623.72px;top:1036.09px;font-size:9.40px;color:#262626;transform:scaleX(0.8600);">Orange</span><div class="a" style="left:658.05px;top:1011.6px;width:36.2px;height:35.6px;background:linear-gradient(#9c9c9c,#808080 35%,#707070 80%,#666);border-radius:3px 3px 0 0;box-shadow:inset 0 1px 0 #aaa"></div><div class="a" style="left:657.05px;top:1040px;width:1.6px;height:8px;background:#111"></div><div class="a" style="left:661.55px;top:1015.6px;width:29.5px;height:8.6px;background:#505ba6;border-radius:3px;box-shadow:0 0 0 .6px rgba(0,0,0,.35)"></div><span class="t" style="left:661.55px;top:1026.89px;font-size:9.40px;color:#262626;transform:scaleX(0.8600);">Purplish</span><span class="t" style="left:661.55px;top:1036.09px;font-size:9.40px;color:#262626;transform:scaleX(0.8600);">Blue</span><div class="a" style="left:697.00px;top:1011.6px;width:36.2px;height:35.6px;background:linear-gradient(#9c9c9c,#808080 35%,#707070 80%,#666);border-radius:3px 3px 0 0;box-shadow:inset 0 1px 0 #aaa"></div><div class="a" style="left:696.0px;top:1040px;width:1.6px;height:8px;background:#111"></div><div class="a" style="left:700.50px;top:1015.6px;width:29.5px;height:8.6px;background:#c15a63;border-radius:3px;box-shadow:0 0 0 .6px rgba(0,0,0,.35)"></div><span class="t" style="left:698.10px;top:1026.89px;font-size:9.40px;color:#262626;transform:scaleX(0.8561);">Moderate</span><span class="t" style="left:698.10px;top:1036.09px;font-size:9.40px;color:#262626;transform:scaleX(0.8600);">Red</span><div class="a" style="left:735.95px;top:1011.6px;width:36.2px;height:35.6px;background:linear-gradient(#9c9c9c,#808080 35%,#707070 80%,#666);border-radius:3px 3px 0 0;box-shadow:inset 0 1px 0 #aaa"></div><div class="a" style="left:734.95px;top:1040px;width:1.6px;height:8px;background:#111"></div><div class="a" style="left:739.45px;top:1015.6px;width:29.5px;height:17.8px;background:#5e3c6c;border-radius:3px;box-shadow:0 0 0 .6px rgba(0,0,0,.35)"></div><span class="t" style="left:742.37px;top:1036.09px;font-size:9.40px;color:#262626;transform:scaleX(0.8600);">Purple</span><div class="a" style="left:774.90px;top:1011.6px;width:36.2px;height:35.6px;background:linear-gradient(#9c9c9c,#808080 35%,#707070 80%,#666);border-radius:3px 3px 0 0;box-shadow:inset 0 1px 0 #aaa"></div><div class="a" style="left:773.9px;top:1040px;width:1.6px;height:8px;background:#111"></div><div class="a" style="left:778.40px;top:1015.6px;width:29.5px;height:8.6px;background:#9dbc40;border-radius:3px;box-shadow:0 0 0 .6px rgba(0,0,0,.35)"></div><span class="t" style="left:781.46px;top:1026.89px;font-size:9.40px;color:#262626;transform:scaleX(0.8600);">Yellow</span><span class="t" style="left:781.46px;top:1036.09px;font-size:9.40px;color:#262626;transform:scaleX(0.8600);">Green</span><div class="a" style="left:813.85px;top:1011.6px;width:36.2px;height:35.6px;background:linear-gradient(#9c9c9c,#808080 35%,#707070 80%,#666);border-radius:3px 3px 0 0;box-shadow:inset 0 1px 0 #aaa"></div><div class="a" style="left:812.85px;top:1040px;width:1.6px;height:8px;background:#111"></div><div class="a" style="left:817.35px;top:1015.6px;width:29.5px;height:8.6px;background:#e0a32e;border-radius:3px;box-shadow:0 0 0 .6px rgba(0,0,0,.35)"></div><span class="t" style="left:818.47px;top:1026.89px;font-size:9.40px;color:#262626;transform:scaleX(0.8600);">Orange</span><span class="t" style="left:818.47px;top:1036.09px;font-size:9.40px;color:#262626;transform:scaleX(0.8600);">Yellow</span><div class="a" style="left:852.80px;top:1011.6px;width:36.2px;height:35.6px;background:linear-gradient(#9c9c9c,#808080 35%,#707070 80%,#666);border-radius:3px 3px 0 0;box-shadow:inset 0 1px 0 #aaa"></div><div class="a" style="left:851.8px;top:1040px;width:1.6px;height:8px;background:#111"></div><div class="a" style="left:856.30px;top:1015.6px;width:29.5px;height:17.8px;background:#383d96;border-radius:3px;box-shadow:0 0 0 .6px rgba(0,0,0,.35)"></div><span class="t" style="left:862.81px;top:1036.09px;font-size:9.40px;color:#262626;transform:scaleX(0.8600);">Blue</span><div class="a" style="left:891.75px;top:1011.6px;width:36.2px;height:35.6px;background:linear-gradient(#9c9c9c,#808080 35%,#707070 80%,#666);border-radius:3px 3px 0 0;box-shadow:inset 0 1px 0 #aaa"></div><div class="a" style="left:890.75px;top:1040px;width:1.6px;height:8px;background:#111"></div><div class="a" style="left:895.25px;top:1015.6px;width:29.5px;height:17.8px;background:#469449;border-radius:3px;box-shadow:0 0 0 .6px rgba(0,0,0,.35)"></div><span class="t" style="left:898.62px;top:1036.09px;font-size:9.40px;color:#262626;transform:scaleX(0.8600);">Green</span><div class="a" style="left:930.70px;top:1011.6px;width:36.2px;height:35.6px;background:linear-gradient(#9c9c9c,#808080 35%,#707070 80%,#666);border-radius:3px 3px 0 0;box-shadow:inset 0 1px 0 #aaa"></div><div class="a" style="left:929.7px;top:1040px;width:1.6px;height:8px;background:#111"></div><div class="a" style="left:934.20px;top:1015.6px;width:29.5px;height:17.8px;background:#af363c;border-radius:3px;box-shadow:0 0 0 .6px rgba(0,0,0,.35)"></div><span class="t" style="left:941.38px;top:1036.09px;font-size:9.40px;color:#262626;transform:scaleX(0.8600);">Red</span><div class="a" style="left:969.65px;top:1011.6px;width:36.2px;height:35.6px;background:linear-gradient(#9c9c9c,#808080 35%,#707070 80%,#666);border-radius:3px 3px 0 0;box-shadow:inset 0 1px 0 #aaa"></div><div class="a" style="left:968.65px;top:1040px;width:1.6px;height:8px;background:#111"></div><div class="a" style="left:973.15px;top:1015.6px;width:29.5px;height:17.8px;background:#e7c71f;border-radius:3px;box-shadow:0 0 0 .6px rgba(0,0,0,.35)"></div><span class="t" style="left:976.21px;top:1036.09px;font-size:9.40px;color:#262626;transform:scaleX(0.8600);">Yellow</span><div class="a" style="left:1008.60px;top:1011.6px;width:36.2px;height:35.6px;background:linear-gradient(#9c9c9c,#808080 35%,#707070 80%,#666);border-radius:3px 3px 0 0;box-shadow:inset 0 1px 0 #aaa"></div><div class="a" style="left:1007.6px;top:1040px;width:1.6px;height:8px;background:#111"></div><div class="a" style="left:1012.10px;top:1015.6px;width:29.5px;height:17.8px;background:#bb5695;border-radius:3px;box-shadow:0 0 0 .6px rgba(0,0,0,.35)"></div><span class="t" style="left:1010.97px;top:1036.09px;font-size:9.40px;color:#262626;transform:scaleX(0.8600);">Magenta</span><div class="a" style="left:1047.55px;top:1011.6px;width:36.2px;height:35.6px;background:linear-gradient(#9c9c9c,#808080 35%,#707070 80%,#666);border-radius:3px 3px 0 0;box-shadow:inset 0 1px 0 #aaa"></div><div class="a" style="left:1046.55px;top:1040px;width:1.6px;height:8px;background:#111"></div><div class="a" style="left:1051.05px;top:1015.6px;width:29.5px;height:17.8px;background:#0885a1;border-radius:3px;box-shadow:0 0 0 .6px rgba(0,0,0,.35)"></div><span class="t" style="left:1056.21px;top:1036.09px;font-size:9.40px;color:#262626;transform:scaleX(0.8600);">Cyan</span><div class="a" style="left:1086.50px;top:1011.6px;width:36.2px;height:35.6px;background:linear-gradient(#9c9c9c,#808080 35%,#707070 80%,#666);border-radius:3px 3px 0 0;box-shadow:inset 0 1px 0 #aaa"></div><div class="a" style="left:1085.5px;top:1040px;width:1.6px;height:8px;background:#111"></div><div class="a" style="left:1090.00px;top:1015.6px;width:29.5px;height:17.8px;background:#ff0000;border-radius:3px;box-shadow:0 0 0 .6px rgba(0,0,0,.35)"></div><span class="t" style="left:1087.10px;top:1036.09px;font-size:9.40px;color:#262626;transform:scaleX(0.7973);">100% Red</span><div class="a" style="left:1125.45px;top:1011.6px;width:36.2px;height:35.6px;background:linear-gradient(#9c9c9c,#808080 35%,#707070 80%,#666);border-radius:3px 3px 0 0;box-shadow:inset 0 1px 0 #aaa"></div><div class="a" style="left:1124.45px;top:1040px;width:1.6px;height:8px;background:#111"></div><div class="a" style="left:1128.95px;top:1015.6px;width:29.5px;height:8.6px;background:#00ff00;border-radius:3px;box-shadow:0 0 0 .6px rgba(0,0,0,.35)"></div><span class="t" style="left:1132.32px;top:1026.89px;font-size:9.40px;color:#262626;transform:scaleX(0.8600);">100%</span><span class="t" style="left:1132.32px;top:1036.09px;font-size:9.40px;color:#262626;transform:scaleX(0.8600);">Green</span><div class="a" style="left:1164.40px;top:1011.6px;width:36.2px;height:35.6px;background:linear-gradient(#9c9c9c,#808080 35%,#707070 80%,#666);border-radius:3px 3px 0 0;box-shadow:inset 0 1px 0 #aaa"></div><div class="a" style="left:1163.4px;top:1040px;width:1.6px;height:8px;background:#111"></div><div class="a" style="left:1167.90px;top:1015.6px;width:29.5px;height:8.6px;background:#0000ff;border-radius:3px;box-shadow:0 0 0 .6px rgba(0,0,0,.35)"></div><span class="t" style="left:1172.16px;top:1026.89px;font-size:9.40px;color:#262626;transform:scaleX(0.8600);">100%</span><span class="t" style="left:1172.16px;top:1036.09px;font-size:9.40px;color:#262626;transform:scaleX(0.8600);">Blue</span><div class="a" style="left:1203.35px;top:1011.6px;width:36.2px;height:35.6px;background:linear-gradient(#9c9c9c,#808080 35%,#707070 80%,#666);border-radius:3px 3px 0 0;box-shadow:inset 0 1px 0 #aaa"></div><div class="a" style="left:1202.35px;top:1040px;width:1.6px;height:8px;background:#111"></div><div class="a" style="left:1206.85px;top:1015.6px;width:29.5px;height:8.6px;background:#00ffff;border-radius:3px;box-shadow:0 0 0 .6px rgba(0,0,0,.35)"></div><span class="t" style="left:1211.11px;top:1026.89px;font-size:9.40px;color:#262626;transform:scaleX(0.8600);">100%</span><span class="t" style="left:1211.11px;top:1036.09px;font-size:9.40px;color:#262626;transform:scaleX(0.8600);">Cyan</span><div class="a" style="left:1242.30px;top:1011.6px;width:36.2px;height:35.6px;background:linear-gradient(#9c9c9c,#808080 35%,#707070 80%,#666);border-radius:3px 3px 0 0;box-shadow:inset 0 1px 0 #aaa"></div><div class="a" style="left:1241.3px;top:1040px;width:1.6px;height:8px;background:#111"></div><div class="a" style="left:1245.80px;top:1015.6px;width:29.5px;height:8.6px;background:#ff00ff;border-radius:3px;box-shadow:0 0 0 .6px rgba(0,0,0,.35)"></div><span class="t" style="left:1244.67px;top:1026.89px;font-size:9.40px;color:#262626;transform:scaleX(0.8600);">100%</span><span class="t" style="left:1244.67px;top:1036.09px;font-size:9.40px;color:#262626;transform:scaleX(0.8600);">Magenta</span><div class="a" style="left:1281.25px;top:1011.6px;width:36.2px;height:35.6px;background:linear-gradient(#9c9c9c,#808080 35%,#707070 80%,#666);border-radius:3px 3px 0 0;box-shadow:inset 0 1px 0 #aaa"></div><div class="a" style="left:1280.25px;top:1040px;width:1.6px;height:8px;background:#111"></div><div class="a" style="left:1284.75px;top:1015.6px;width:29.5px;height:8.6px;background:#ffff00;border-radius:3px;box-shadow:0 0 0 .6px rgba(0,0,0,.35)"></div><span class="t" style="left:1287.81px;top:1026.89px;font-size:9.40px;color:#262626;transform:scaleX(0.8600);">100%</span><span class="t" style="left:1287.81px;top:1036.09px;font-size:9.40px;color:#262626;transform:scaleX(0.8600);">Yellow</span><div class="a" style="left:1320.20px;top:1011.6px;width:36.2px;height:35.6px;background:linear-gradient(#9c9c9c,#808080 35%,#707070 80%,#666);border-radius:3px 3px 0 0;box-shadow:inset 0 1px 0 #aaa"></div><div class="a" style="left:1319.2px;top:1040px;width:1.6px;height:8px;background:#111"></div><div class="a" style="left:1323.70px;top:1015.6px;width:29.5px;height:17.8px;background:#734126;border-radius:3px;box-shadow:0 0 0 .6px rgba(0,0,0,.35)"></div><span class="t" style="left:1333.36px;top:1036.09px;font-size:9.40px;color:#262626;transform:scaleX(0.8600);">2E</span><div class="a" style="left:1359.15px;top:1011.6px;width:36.2px;height:35.6px;background:linear-gradient(#9c9c9c,#808080 35%,#707070 80%,#666);border-radius:3px 3px 0 0;box-shadow:inset 0 1px 0 #aaa"></div><div class="a" style="left:1358.15px;top:1040px;width:1.6px;height:8px;background:#111"></div><div class="a" style="left:1362.65px;top:1015.6px;width:29.5px;height:17.8px;background:#c98a64;border-radius:3px;box-shadow:0 0 0 .6px rgba(0,0,0,.35)"></div><span class="t" style="left:1372.53px;top:1036.09px;font-size:9.40px;color:#262626;transform:scaleX(0.8600);">2F</span><div class="a" style="left:1398.10px;top:1011.6px;width:36.2px;height:35.6px;background:linear-gradient(#9c9c9c,#808080 35%,#707070 80%,#666);border-radius:3px 3px 0 0;box-shadow:inset 0 1px 0 #aaa"></div><div class="a" style="left:1397.1px;top:1040px;width:1.6px;height:8px;background:#111"></div><div class="a" style="left:1401.60px;top:1015.6px;width:29.5px;height:17.8px;background:#fcc79a;border-radius:3px;box-shadow:0 0 0 .6px rgba(0,0,0,.35)"></div><span class="t" style="left:1411.26px;top:1036.09px;font-size:9.40px;color:#262626;transform:scaleX(0.8600);">2K</span><div class="a" style="left:1437.05px;top:1011.6px;width:36.2px;height:35.6px;background:linear-gradient(#9c9c9c,#808080 35%,#707070 80%,#666);border-radius:3px 3px 0 0;box-shadow:inset 0 1px 0 #aaa"></div><div class="a" style="left:1436.05px;top:1040px;width:1.6px;height:8px;background:#111"></div><div class="a" style="left:1440.55px;top:1015.6px;width:29.5px;height:17.8px;background:#f8c8a8;border-radius:3px;box-shadow:0 0 0 .6px rgba(0,0,0,.35)"></div><span class="t" style="left:1449.98px;top:1036.09px;font-size:9.40px;color:#262626;transform:scaleX(0.8600);">5D</span><div class="a" style="left:1476.00px;top:1011.6px;width:36.2px;height:35.6px;background:linear-gradient(#9c9c9c,#808080 35%,#707070 80%,#666);border-radius:3px 3px 0 0;box-shadow:inset 0 1px 0 #aaa"></div><div class="a" style="left:1475.0px;top:1040px;width:1.6px;height:8px;background:#111"></div><div class="a" style="left:1479.50px;top:1015.6px;width:29.5px;height:17.8px;background:#f2a07a;border-radius:3px;box-shadow:0 0 0 .6px rgba(0,0,0,.35)"></div><span class="t" style="left:1489.16px;top:1036.09px;font-size:9.40px;color:#262626;transform:scaleX(0.8600);">7E</span><div class="a" style="left:1514.95px;top:1011.6px;width:36.2px;height:35.6px;background:linear-gradient(#9c9c9c,#808080 35%,#707070 80%,#666);border-radius:3px 3px 0 0;box-shadow:inset 0 1px 0 #aaa"></div><div class="a" style="left:1513.95px;top:1040px;width:1.6px;height:8px;background:#111"></div><div class="a" style="left:1518.45px;top:1015.6px;width:29.5px;height:17.8px;background:#d89a62;border-radius:3px;box-shadow:0 0 0 .6px rgba(0,0,0,.35)"></div><span class="t" style="left:1528.33px;top:1036.09px;font-size:9.40px;color:#262626;transform:scaleX(0.8600);">7F</span><div class="a" style="left:1553.90px;top:1011.6px;width:36.2px;height:35.6px;background:linear-gradient(#9c9c9c,#808080 35%,#707070 80%,#666);border-radius:3px 3px 0 0;box-shadow:inset 0 1px 0 #aaa"></div><div class="a" style="left:1552.9px;top:1040px;width:1.6px;height:8px;background:#111"></div><div class="a" style="left:1557.40px;top:1015.6px;width:29.5px;height:17.8px;background:#9a5e32;border-radius:3px;box-shadow:0 0 0 .6px rgba(0,0,0,.35)"></div><span class="t" style="left:1566.61px;top:1036.09px;font-size:9.40px;color:#262626;transform:scaleX(0.8600);">7G</span><div class="a" style="left:1592.85px;top:1011.6px;width:36.2px;height:35.6px;background:linear-gradient(#9c9c9c,#808080 35%,#707070 80%,#666);border-radius:3px 3px 0 0;box-shadow:inset 0 1px 0 #aaa"></div><div class="a" style="left:1591.85px;top:1040px;width:1.6px;height:8px;background:#111"></div><div class="a" style="left:1596.35px;top:1015.6px;width:29.5px;height:17.8px;background:#dca27a;border-radius:3px;box-shadow:0 0 0 .6px rgba(0,0,0,.35)"></div><span class="t" style="left:1605.78px;top:1036.09px;font-size:9.40px;color:#262626;transform:scaleX(0.8600);">7H</span><div class="a" style="left:1631.80px;top:1011.6px;width:36.2px;height:35.6px;background:linear-gradient(#9c9c9c,#808080 35%,#707070 80%,#666);border-radius:3px 3px 0 0;box-shadow:inset 0 1px 0 #aaa"></div><div class="a" style="left:1630.8px;top:1040px;width:1.6px;height:8px;background:#111"></div><div class="a" style="left:1635.30px;top:1015.6px;width:29.5px;height:17.8px;background:#c8701e;border-radius:3px;box-shadow:0 0 0 .6px rgba(0,0,0,.35)"></div><div class="a" style="left:1676px;top:1010px;width:244px;height:48px;background:#333"></div><div class="a" style="left:150px;top:1047.6px;width:1526px;height:10.4px;background:#5a5a5a"></div><div class="a" style="left:161px;top:1049px;width:1253px;height:7.2px;background:#474747;border-radius:3.6px"></div><div class="a" style="left:152px;top:1048.5px;width:8px;height:9px;background:#6c6c6c;border-radius:1px"></div><svg class="a" style="left:154px;top:1050px" width="4" height="6"><path d="M4 0V6L0 3Z" fill="#2a2a2a"/></svg><div class="a" style="left:1667px;top:1048.5px;width:9px;height:9px;background:#6c6c6c;border-radius:1px"></div><svg class="a" style="left:1670px;top:1050px" width="4" height="6"><path d="M0 0V6L4 3Z" fill="#2a2a2a"/></svg><div class="a" style="left:1715px;top:1012px;width:135px;height:22px;background:linear-gradient(#8a8a8a,#6a6a6a)"></div><div class="a" style="left:1850px;top:1012px;width:70px;height:22px;background:linear-gradient(#4a4a4a,#3a3a3a)"></div><div class="a" style="left:1750px;top:1012px;width:1px;height:22px;background:#555"></div><div class="a" style="left:1783px;top:1012px;width:1px;height:22px;background:#555"></div><div class="a" style="left:1818px;top:1012px;width:1px;height:22px;background:#555"></div><div class="a" style="left:1885px;top:1012px;width:1px;height:22px;background:#555"></div><div class="a" style="left:1727px;top:1017px;width:12px;height:12px;border-radius:50%;background:radial-gradient(#b0b0b0,#7a7a7a)"></div><div class="a" style="left:1760px;top:1017px;width:12px;height:12px;border-radius:50%;background:radial-gradient(#b0b0b0,#7a7a7a)"></div><div class="a" style="left:1794px;top:1017px;width:12px;height:12px;border-radius:50%;background:radial-gradient(#b0b0b0,#7a7a7a)"></div><div class="a" style="left:1828px;top:1017px;width:12px;height:12px;border-radius:50%;background:radial-gradient(#b0b0b0,#7a7a7a)"></div><div class="a" style="left:1862px;top:1017px;width:12px;height:12px;border-radius:50%;background:radial-gradient(#b0b0b0,#7a7a7a)"></div><div class="a" style="left:1896px;top:1017px;width:12px;height:12px;border-radius:50%;background:radial-gradient(#b0b0b0,#7a7a7a)"></div><div class="a" style="left:1677px;top:1026.5px;width:36px;height:31.5px;background:linear-gradient(#7a7a7a,#5e5e5e);border-radius:2px"></div><div class="a" style="left:1684px;top:1030px;width:21px;height:21px;border:2px solid #111;border-radius:3px;box-sizing:border-box"></div><div class="a" style="left:1690px;top:1036px;width:9px;height:9px;background:#000"></div><div class="a" style="left:1715px;top:1035px;width:203px;height:23px;background:linear-gradient(#b4b4b4,#8c8c8c 50%,#7a7a7a);border-radius:3px 3px 0 0"></div><div class="a" style="left:1816px;top:1035px;width:1px;height:23px;background:#666"></div><div class="a" style="left:1730px;top:1039px;width:15px;height:15px;border-radius:50%;background:radial-gradient(#9a9a9a,#7a7a7a)"></div><span class="t" style="left:1733.78px;top:1038.23px;font-size:13.00px;color:#333;">«</span><span class="t" style="left:1757.40px;top:1036.82px;font-size:16.00px;color:#1e1e1e;transform:scaleX(1.0683);">Back</span><span class="t" style="left:1837.60px;top:1036.82px;font-size:16.00px;color:#1e1e1e;transform:scaleX(1.1763);">Next</span><div class="a" style="left:1890px;top:1039px;width:15px;height:15px;border-radius:50%;background:radial-gradient(#9a9a9a,#7a7a7a)"></div><span class="t" style="left:1893.78px;top:1038.23px;font-size:13.00px;color:#333;">»</span><svg class="a" style="left:1618px;top:990px" width="302" height="68" viewBox="0 0 302 68">
<g fill="none" stroke="#e0e0e0" stroke-opacity=".8" stroke-width="5" stroke-linejoin="round" stroke-linecap="round"><path d="M14.1 7.4L50.7 13.3L52 36.4M14.1 7.4L15.5 43.3L37.5 54.4L79 42L22.4 39.2"/><path d="M24.4 19.2L36.2 33.6L56.2 6"/></g>
<g fill="none" stroke="#8a2a36" stroke-opacity=".9" stroke-width="3" stroke-linejoin="round" stroke-linecap="round"><path d="M14.1 7.4L50.7 13.3L52 36.4M14.1 7.4L15.5 43.3L37.5 54.4L79 42L22.4 39.2"/></g>
<path d="M24.4 19.2L36.2 33.6L56.2 6" fill="none" stroke="#262626" stroke-width="2.2" stroke-linejoin="round"/>
<text x="57.5" y="35" font-family="Liberation Sans" font-weight="700" font-size="27" textLength="148" lengthAdjust="spacingAndGlyphs" fill="#8e2c38" fill-opacity=".8" stroke="#e4e4e4" stroke-opacity=".8" stroke-width="1.7" paint-order="stroke">NOTEBOOK</text>
<text x="206" y="35" font-family="Liberation Sans" font-weight="700" font-size="27" textLength="89" lengthAdjust="spacingAndGlyphs" fill="#2a2a2a" fill-opacity=".8" stroke="#e4e4e4" stroke-opacity=".8" stroke-width="1.7" paint-order="stroke">CHECK</text>
</svg></body></html>
